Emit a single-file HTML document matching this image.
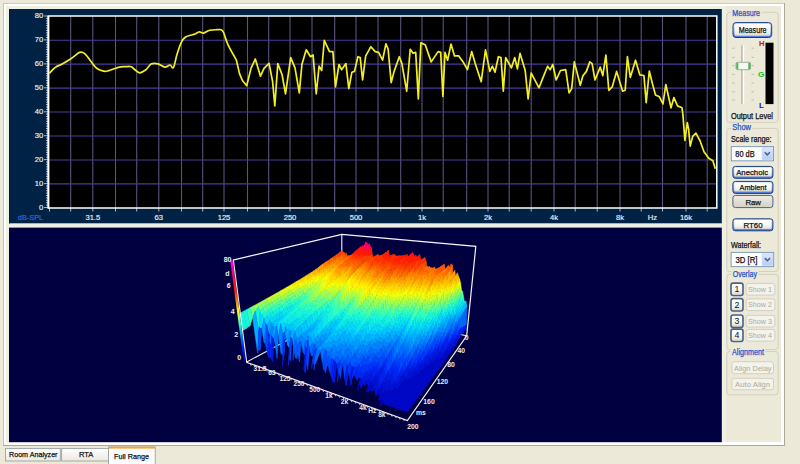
<!DOCTYPE html>
<html><head><meta charset="utf-8"><style>
html,body{margin:0;padding:0;width:800px;height:464px;overflow:hidden;background:#ece9d8}
svg{display:block;font-family:"Liberation Sans",sans-serif}
</style></head><body>
<svg width="800" height="464" viewBox="0 0 800 464">
<defs><linearGradient id="jet" gradientUnits="userSpaceOnUse" x1="400" y1="243" x2="411" y2="405">
<stop offset="0" stop-color="#ff10a0"/>
<stop offset="0.056" stop-color="#ff1030"/>
<stop offset="0.117" stop-color="#ff3000"/>
<stop offset="0.21" stop-color="#ff8000"/>
<stop offset="0.30" stop-color="#ffe000"/>
<stop offset="0.383" stop-color="#90ff60"/>
<stop offset="0.47" stop-color="#00f0e0"/>
<stop offset="0.58" stop-color="#00a0ff"/>
<stop offset="0.72" stop-color="#0040ff"/>
<stop offset="0.89" stop-color="#0000c0"/>
<stop offset="1" stop-color="#000070"/>
</linearGradient><linearGradient id="zbar" gradientUnits="userSpaceOnUse" x1="232" y1="260" x2="246" y2="362">
<stop offset="0" stop-color="#ff00ff"/>
<stop offset="0.16" stop-color="#ff0060"/>
<stop offset="0.3" stop-color="#ff2000"/>
<stop offset="0.42" stop-color="#ff9000"/>
<stop offset="0.5" stop-color="#ffff00"/>
<stop offset="0.62" stop-color="#40ffc0"/>
<stop offset="0.72" stop-color="#00a0ff"/>
<stop offset="0.85" stop-color="#0020ff"/>
<stop offset="1" stop-color="#0000a0"/>
</linearGradient><linearGradient id="btn" x1="0" y1="0" x2="0" y2="1">
<stop offset="0" stop-color="#ffffff"/><stop offset="0.7" stop-color="#f3f3ee"/><stop offset="1" stop-color="#dcd8cc"/></linearGradient>
<linearGradient id="btnb" x1="0" y1="0" x2="0" y2="1">
<stop offset="0" stop-color="#d4e6fc"/><stop offset="0.5" stop-color="#a8c4f4"/><stop offset="1" stop-color="#4a74d8"/></linearGradient>
<linearGradient id="btng" x1="0" y1="0" x2="0" y2="1">
<stop offset="0" stop-color="#eeede6"/><stop offset="1" stop-color="#d4d1c4"/></linearGradient>
<linearGradient id="dd" x1="0" y1="0" x2="0" y2="1">
<stop offset="0" stop-color="#dde7fd"/><stop offset="1" stop-color="#b6cbf7"/></linearGradient><linearGradient id="tab" x1="0" y1="0" x2="0" y2="1">
<stop offset="0" stop-color="#ffffff"/><stop offset="1" stop-color="#ece9df"/></linearGradient></defs>
<rect x="0" y="0" width="800" height="464" fill="#ece9d8"/>
<rect x="3" y="3" width="782" height="443" fill="#aca899"/>
<rect x="3" y="3" width="781" height="442" fill="#ffffff"/>
<rect x="3" y="3" width="781" height="1" fill="#cfccbc"/>
<rect x="3" y="3" width="1" height="442" fill="#c8c6b8"/>
<rect x="6" y="6" width="775" height="436" fill="#eff0e4"/>
<rect x="726" y="6" width="55" height="436" fill="#ece9d8"/>
<rect x="9" y="9" width="712.8" height="214.3" fill="#002244"/>
<rect x="9" y="9" width="1.2" height="214.3" fill="#0b1c2e"/>
<rect x="9" y="227.6" width="712.8" height="214.6" fill="#000040"/>
<rect x="49" y="16" width="667.5" height="192" fill="#000000"/>
<path d="M70.7 16V208 M92.8 16V208 M115.5 16V208 M136.7 16V208 M158.8 16V208 M181.5 16V208 M202.7 16V208 M224.0 16V208 M247.5 16V208 M268.7 16V208 M290.0 16V208 M312.0 16V208 M334.7 16V208 M356.0 16V208 M378.0 16V208 M400.7 16V208 M422.0 16V208 M443.2 16V208 M466.7 16V208 M488.0 16V208 M509.2 16V208 M531.2 16V208 M554.0 16V208 M575.2 16V208 M597.2 16V208 M620.0 16V208 M641.2 16V208 M662.5 16V208 M686.0 16V208 M707.2 16V208" stroke="#58547e" stroke-width="1.1" fill="none"/>
<path d="M49 40.2H716.5 M49 64.1H716.5 M49 88.1H716.5 M49 112.0H716.5 M49 136.0H716.5 M49 160.0H716.5 M49 183.9H716.5" stroke="#4a3c9e" stroke-width="1.1" fill="none"/>
<path d="M44 16.0H48 M46 18.4H48 M46 20.8H48 M46 23.2H48 M46 25.6H48 M46 28.0H48 M46 30.4H48 M46 32.8H48 M46 35.1H48 M46 37.5H48 M44 39.9H48 M46 42.3H48 M46 44.7H48 M46 47.1H48 M46 49.5H48 M46 51.9H48 M46 54.3H48 M46 56.7H48 M46 59.1H48 M46 61.5H48 M44 63.9H48 M46 66.3H48 M46 68.7H48 M46 71.1H48 M46 73.5H48 M46 75.8H48 M46 78.2H48 M46 80.6H48 M46 83.0H48 M46 85.4H48 M44 87.8H48 M46 90.2H48 M46 92.6H48 M46 95.0H48 M46 97.4H48 M46 99.8H48 M46 102.2H48 M46 104.6H48 M46 107.0H48 M46 109.4H48 M44 111.8H48 M46 114.1H48 M46 116.5H48 M46 118.9H48 M46 121.3H48 M46 123.7H48 M46 126.1H48 M46 128.5H48 M46 130.9H48 M46 133.3H48 M44 135.7H48 M46 138.1H48 M46 140.5H48 M46 142.9H48 M46 145.3H48 M46 147.7H48 M46 150.1H48 M46 152.4H48 M46 154.8H48 M46 157.2H48 M44 159.6H48 M46 162.0H48 M46 164.4H48 M46 166.8H48 M46 169.2H48 M46 171.6H48 M46 174.0H48 M46 176.4H48 M46 178.8H48 M46 181.2H48 M44 183.6H48 M46 186.0H48 M46 188.3H48 M46 190.7H48 M46 193.1H48 M46 195.5H48 M46 197.9H48 M46 200.3H48 M46 202.7H48 M46 205.1H48 M44 207.5H48 M49.5 208V211.5 M70.7 208V211.5 M92.8 208V211.5 M115.5 208V211.5 M136.7 208V211.5 M158.8 208V211.5 M181.5 208V211.5 M202.7 208V211.5 M224.0 208V211.5 M247.5 208V211.5 M268.7 208V211.5 M290.0 208V211.5 M312.0 208V211.5 M334.7 208V211.5 M356.0 208V211.5 M378.0 208V211.5 M400.7 208V211.5 M422.0 208V211.5 M443.2 208V211.5 M466.7 208V211.5 M488.0 208V211.5 M509.2 208V211.5 M531.2 208V211.5 M554.0 208V211.5 M575.2 208V211.5 M597.2 208V211.5 M620.0 208V211.5 M641.2 208V211.5 M662.5 208V211.5 M686.0 208V211.5 M707.2 208V211.5" stroke="#d8dce8" stroke-width="0.8" fill="none"/>
<path d="M48.4 16.1H716.8V208H48.4Z" fill="none" stroke="#ffffff" stroke-width="1.5"/><path d="M48.4 16V208.5" stroke="#ffffff" stroke-width="1.8"/>
<text x="43.2" y="209.8" text-anchor="end" font-size="7.6" fill="#f0f2f6" stroke="#f0f2f6" stroke-width="0.15" font-family="Liberation Sans, sans-serif">0</text>
<text x="43.2" y="185.9" text-anchor="end" font-size="7.6" fill="#f0f2f6" stroke="#f0f2f6" stroke-width="0.15" font-family="Liberation Sans, sans-serif">10</text>
<text x="43.2" y="161.9" text-anchor="end" font-size="7.6" fill="#f0f2f6" stroke="#f0f2f6" stroke-width="0.15" font-family="Liberation Sans, sans-serif">20</text>
<text x="43.2" y="138.0" text-anchor="end" font-size="7.6" fill="#f0f2f6" stroke="#f0f2f6" stroke-width="0.15" font-family="Liberation Sans, sans-serif">30</text>
<text x="43.2" y="114.0" text-anchor="end" font-size="7.6" fill="#f0f2f6" stroke="#f0f2f6" stroke-width="0.15" font-family="Liberation Sans, sans-serif">40</text>
<text x="43.2" y="90.1" text-anchor="end" font-size="7.6" fill="#f0f2f6" stroke="#f0f2f6" stroke-width="0.15" font-family="Liberation Sans, sans-serif">50</text>
<text x="43.2" y="66.2" text-anchor="end" font-size="7.6" fill="#f0f2f6" stroke="#f0f2f6" stroke-width="0.15" font-family="Liberation Sans, sans-serif">60</text>
<text x="43.2" y="42.2" text-anchor="end" font-size="7.6" fill="#f0f2f6" stroke="#f0f2f6" stroke-width="0.15" font-family="Liberation Sans, sans-serif">70</text>
<text x="43.2" y="18.3" text-anchor="end" font-size="7.6" fill="#f0f2f6" stroke="#f0f2f6" stroke-width="0.15" font-family="Liberation Sans, sans-serif">80</text>
<text x="92.8" y="220.4" text-anchor="middle" font-size="7.6" fill="#f0f2f6" stroke="#f0f2f6" stroke-width="0.15" font-family="Liberation Sans, sans-serif">31.5</text>
<text x="158.8" y="220.4" text-anchor="middle" font-size="7.6" fill="#f0f2f6" stroke="#f0f2f6" stroke-width="0.15" font-family="Liberation Sans, sans-serif">63</text>
<text x="224.0" y="220.4" text-anchor="middle" font-size="7.6" fill="#f0f2f6" stroke="#f0f2f6" stroke-width="0.15" font-family="Liberation Sans, sans-serif">125</text>
<text x="290.0" y="220.4" text-anchor="middle" font-size="7.6" fill="#f0f2f6" stroke="#f0f2f6" stroke-width="0.15" font-family="Liberation Sans, sans-serif">250</text>
<text x="356.0" y="220.4" text-anchor="middle" font-size="7.6" fill="#f0f2f6" stroke="#f0f2f6" stroke-width="0.15" font-family="Liberation Sans, sans-serif">500</text>
<text x="422.0" y="220.4" text-anchor="middle" font-size="7.6" fill="#f0f2f6" stroke="#f0f2f6" stroke-width="0.15" font-family="Liberation Sans, sans-serif">1k</text>
<text x="488.0" y="220.4" text-anchor="middle" font-size="7.6" fill="#f0f2f6" stroke="#f0f2f6" stroke-width="0.15" font-family="Liberation Sans, sans-serif">2k</text>
<text x="554.0" y="220.4" text-anchor="middle" font-size="7.6" fill="#f0f2f6" stroke="#f0f2f6" stroke-width="0.15" font-family="Liberation Sans, sans-serif">4k</text>
<text x="620.0" y="220.4" text-anchor="middle" font-size="7.6" fill="#f0f2f6" stroke="#f0f2f6" stroke-width="0.15" font-family="Liberation Sans, sans-serif">8k</text>
<text x="652.5" y="220.4" text-anchor="middle" font-size="7.6" fill="#f0f2f6" stroke="#f0f2f6" stroke-width="0.15" font-family="Liberation Sans, sans-serif">Hz</text>
<text x="686.0" y="220.4" text-anchor="middle" font-size="7.6" fill="#f0f2f6" stroke="#f0f2f6" stroke-width="0.15" font-family="Liberation Sans, sans-serif">16k</text>
<text x="17.8" y="220.3" font-size="7.6" fill="#2c6ce0" stroke="#2c6ce0" stroke-width="0.15" textLength="25.4" lengthAdjust="spacingAndGlyphs" font-family="Liberation Sans, sans-serif">dB-SPL</text>
<path d="M49.3 73.4C50.3 72.4 53.1 69.0 55.3 67.4C57.4 65.8 59.6 65.4 62.2 64.0C64.8 62.6 68.0 60.7 70.9 58.8C73.8 56.9 77.2 53.3 79.5 52.4C81.8 51.5 82.7 52.0 84.7 53.6C86.7 55.2 89.6 59.8 91.6 62.2C93.6 64.7 94.7 66.8 96.7 68.3C98.7 69.8 101.7 70.8 103.6 71.2C105.5 71.6 106.3 71.3 108.0 70.9C109.7 70.5 111.8 69.5 114.0 68.8C116.2 68.1 119.0 67.2 120.9 66.9C122.8 66.6 123.5 66.7 125.2 66.7C126.9 66.7 129.5 66.1 131.2 66.7C132.9 67.3 134.1 69.2 135.5 70.2C136.9 71.2 138.1 72.9 139.8 72.8C141.5 72.7 144.0 71.2 145.9 69.8C147.8 68.3 149.0 65.1 151.0 64.1C153.0 63.1 155.6 63.3 157.9 63.8C160.2 64.3 162.8 67.0 164.8 67.2C166.8 67.4 168.6 64.9 170.0 65.0C171.4 65.1 172.2 69.3 173.4 67.6C174.6 65.9 175.6 58.9 176.9 54.7C178.2 50.5 179.8 45.6 181.2 42.6C182.6 39.6 183.6 38.3 185.5 37.0C187.4 35.7 190.8 35.3 192.4 34.8C194.0 34.3 193.8 34.5 195.0 34.0C196.2 33.5 197.9 32.0 199.3 31.9C200.7 31.8 201.9 33.4 203.6 33.1C205.3 32.8 207.4 30.8 209.7 30.2C212.0 29.6 215.5 29.8 217.4 29.7C219.3 29.6 219.9 29.3 220.9 29.7C221.9 30.1 222.2 29.8 223.4 32.2C224.6 34.6 225.6 39.6 227.8 44.3C230.0 49.0 235.0 57.6 236.4 60.2L239.5 73.6L242.4 80.5L246.7 85.7L251.0 68.4L255.3 59.0L260.5 76.2L264.0 68.4L269.1 63.3L272.6 81.7L274.8 105.9L277.8 63.6L282.1 74.8L285.5 93.8L290.7 57.6L295.0 67.9L299.3 92.9L301.9 64.5L306.2 49.8L310.5 56.7L313.1 55.0L316.2 93.8L319.1 66.2L321.7 70.5L324.3 40.3L329.5 51.6L332.9 51.6L335.5 86.9L339.0 64.5L341.6 69.7L345.9 63.6L348.8 88.6L351.9 72.2L354.5 71.4L357.9 56.7L360.2 57.6L362.6 80.0L365.7 55.9L370.9 46.7L375.2 51.6L378.6 52.4L382.6 60.2L385.9 43.8L388.1 49.0L391.2 82.6L394.1 71.4L399.3 56.7L401.9 63.6L406.7 91.2L410.2 49.3L413.1 53.3L415.7 52.4L418.3 99.0L420.9 42.9L425.2 44.7L431.2 61.9L438.1 51.6L440.7 52.4L442.9 96.4L445.0 52.4L447.6 60.2L451.0 44.1L454.5 55.9L458.8 55.9L463.1 61.9L467.4 69.7L471.7 51.6L475.2 63.6L481.2 81.7L485.5 49.8L489.8 71.4L492.4 66.2L495.0 72.2L498.4 56.7L501.0 57.6L503.3 91.2L505.7 57.6L511.4 67.9L514.8 57.6L517.4 68.8L520.0 53.3L525.2 70.5L528.1 99.0L531.2 73.1L539.0 87.8L542.4 79.1L547.6 66.2L550.2 69.7L552.8 64.5L556.2 80.0L560.5 70.5L565.7 69.7L569.1 92.9L571.7 88.6L574.3 61.9L580.3 85.2L582.9 75.7L586.4 71.4L589.8 61.9L592.1 63.6L595.0 80.0L600.2 67.1L602.8 75.7L605.9 55.0L608.8 90.3L612.2 86.9L616.6 71.4L622.6 91.2L625.2 90.3L627.4 56.7L630.3 77.4L635.5 60.2L639.8 74.8L643.9 75.5L646.2 102.6L649.3 71.0L652.3 83.3L655.5 94.9L659.4 96.8L663.0 103.9L665.8 84.5L671.0 107.8L673.9 97.5L677.5 105.9L682.0 107.8L682.9 114.6L684.9 140.5L687.3 122.7L688.6 129.1L690.2 146.1L692.7 136.4L695.9 133.2L699.9 140.5L704.0 151.8L708.8 158.3L712.9 160.7L715.3 168.8" fill="none" stroke="#f4f020" stroke-width="1.7" stroke-linejoin="round"/>
<path d="M341.8 234.3V311L466.7 335.8M341.8 311L246.3 362.2" stroke="#f4f4f4" stroke-width="1.1" fill="none"/>
<path d="M341.3 252.3l1-1.9l-1.9 1.5l-.9 1.8zM342.3 250.4l1 1.7l-1.8 1.8l-1.1-2zM355.5 253.3l1-.4l-1.8.7l-1 .7zM356.5 252.9l1 0l-1.7.4l-1.1.3zM357.5 252.9l1.1 1.6l-1.7.3l-1.1-1.5zM378.1 254.6l1 1.3l-1.6.8l-1.1-1.2zM382.5 256.8l1.2-2.5l-1.6.8l-1.2 2.5zM386 251.9l1 8.6l-1.6 1.1l-1-7.9zM387 260.5l1.4-10.3l-1.6 1.9l-1.4 9.5zM389.4 254.9l1.1 4l-1.6.7l-1.1-3.4zM392.8 257.5l1.3-3.1l-1.5.5l-1.3 3.3zM395.3 254.8l1 3.9l-1.5.2l-1.1-3.3zM396.3 258.7l1.3-2.8l-1.5.6l-1.3 2.4zM397.6 255.9l1.2.9l-1.5.6l-1.2-.9zM402.2 261.7l1.4-6.3l-1.4.6l-1.5 5.9zM403.6 255.4l1.1 4.7l-1.5.5l-1-4.6zM408.4 257.3l1.1 3.2l-1.4.5l-1.1-3.3zM409.5 260.5l1.4-3.4l-1.4 1.4l-1.4 2.5zM424.9 257.4l1.1 3l-1.4 1.2l-1.1-3.2z" fill="#ff3000" stroke="#ff3000" stroke-width="0.5"/>
<path d="M343.3 252.1l1 .3l-1.8 1.9l-1-.4zM353.4 253.6l1 2.6l-1.7.9l-1.1-2.2zM354.4 256.2l1.1-2.9l-1.8 1l-1 2.8zM358.6 254.5l1-1.2l-1.7.9l-1 .6zM372.5 255l1 5.4l-1.6.1l-1.1-5.4zM375.8 257.8l1.1.1l-1.7.6l-1.1 0zM376.9 257.9l1.2-3.3l-1.7.9l-1.2 3zM379.1 255.9l1.2.5l-1.7.9l-1.1-.6zM380.3 256.4l1 2.3l-1.6.3l-1.1-1.7zM381.3 258.7l1.2-1.9l-1.6.8l-1.2 1.4zM401.2 256l1 5.7l-1.5.2l-1-4.6zM404.7 260.1l1.3-1.7l-1.5.4l-1.3 1.8zM417 260.2l1.3.7l-1.4.5l-1.3-.4zM420.9 259.4l.9 6.5l-1.4.2l-.9-6.2zM421.8 265.9l1.6-6.4l-1.3 1.3l-1.7 5.3zM426 260.4l.9 5.4l-1.3.8l-1-5zM449.6 267.2l1.7-3.3l-1.3 2.5l-1.7 2.6zM451.3 263.9l1.3 1l-1.3 2.9l-1.3-1.4z" fill="#ff4400" stroke="#ff4400" stroke-width="0.5"/>
<path d="M344.3 252.4l1 3.3l-1.8 1.5l-1-2.9zM345.3 255.7l1-2.7l-1.8 1.6l-1 2.6zM346.3 253l1 3.3l-1.7 1.6l-1.1-3.3zM347.3 256.3l1-.8l-1.7 1.8l-1 .6zM348.3 255.5l1 .2l-1.7 1.8l-1-.2zM349.3 255.7l1.1.6l-1.8 1.5l-1-.3zM350.4 256.3l1-1.4l-1.8 1.8l-1 1.1zM352.4 258.1l1-4.5l-1.8 1.3l-.9 4.7zM374.6 259.9l1.2-2.1l-1.7.7l-1.1 2.4zM391.4 266.2l1.4-8.7l-1.5.7l-1.4 7.9zM442.6 269l1.7-4.9l-1.2.9l-1.7 4.6zM444.3 264.1l1 4.9l-1.2 1.1l-1-5.1zM448.4 265.4l1.2 1.8l-1.3 1.8l-1.2-1.6z" fill="#ff5800" stroke="#ff5800" stroke-width="0.5"/>
<path d="M351.4 254.9l1 3.2l-1.7 1.5l-1.1-2.9zM373.5 260.4l1.1-.5l-1.6 1l-1.1-.4zM390.5 258.9l.9 7.3l-1.5-.1l-1-6.5zM426.9 265.8l1.2 1.4l-1.3.4l-1.2-1zM428.1 267.2l1.4-.6l-1.3.9l-1.4.1zM429.5 266.6l1.2 1.6l-1.3.5l-1.2-1.2zM430.7 268.2l1.3-.4l-1.3.7l-1.3.2zM432 267.8l1.1 2.4l-1.2.2l-1.2-1.9zM433.1 270.2l1.6-3l-1.3.6l-1.5 2.6zM434.7 267.2l1.1 2.9l-1.3.8l-1.1-3.1zM441.3 268.4l1.3.6l-1.2.6l-1.3-.4zM446.4 272.4l2-7l-1.3 2l-1.9 6.3zM452.6 264.9l.5 10.4l-1.3 2.3l-.5-9.8z" fill="#ff6f00" stroke="#ff6f00" stroke-width="0.5"/>
<path d="M359.6 253.3l1.1-6.6l-1.7 1.7l-1.1 5.8zM371.5 247.8l1 7.2l-1.7.1l-1-4.9zM383.7 254.3l1.1-.4l-1.6 1.5l-1.1-.3zM384.8 253.9l1.2-2l-1.6 1.8l-1.2 1.7zM388.4 250.2l1 4.7l-1.6 1.3l-1-4.1zM394.1 254.4l1.2.4l-1.6.8l-1.1-.7zM398.8 256.8l1.2-1.5l-1.5 1l-1.2 1.1zM400 255.3l1.2.7l-1.5 1.3l-1.2-1zM406 258.4l1.3-4l-1.4.6l-1.4 3.8zM407.3 254.4l1.1 2.9l-1.4.4l-1.1-2.7zM413.6 253.9l1 4l-1.4.9l-1.1-3.4zM414.6 257.9l1.4-2.7l-1.4.9l-1.4 2.7zM416 255.2l1 5l-1.4.8l-1-4.9zM418.3 260.9l1.6-6.3l-1.4 1.1l-1.6 5.7zM419.9 254.6l1 4.8l-1.4.5l-1-4.2zM423.4 259.5l1.5-2.1l-1.4 1l-1.4 2.4z" fill="#ff1e06" stroke="#ff1e06" stroke-width="0.5"/>
<path d="M360.7 246.7l1.1 5.1l-1.8 1.3l-1-4.7zM361.8 251.8l1-6.4l-1.7 2.1l-1.1 5.6zM363.9 247.1l1.1 1.2l-1.8 2.8l-1-1.8zM410.9 257.1l1.5-4.7l-1.5 1.7l-1.4 4.4zM412.4 252.4l1.2 1.5l-1.5 1.5l-1.2-1.3z" fill="#ff1424" stroke="#ff1424" stroke-width="0.5"/>
<path d="M362.8 245.4l1.1 1.7l-1.7 2.2l-1.1-1.8zM365 248.3l1.1-6.2l-1.8 3.8l-1.1 5.2zM370.4 246.3l1.1 1.5l-1.7 2.4l-1.1-.9z" fill="#ff0a42" stroke="#ff0a42" stroke-width="0.5"/>
<path d="M366.1 242.1l1.1 1.2l-1.8 3.9l-1.1-1.3z" fill="#ff0088" stroke="#ff0088" stroke-width="0.5"/>
<path d="M367.2 243.3l1 2.3l-1.7 4.1l-1.1-2.5zM368.2 245.6l1.1-1.8l-1.7 3.4l-1.1 2.5zM369.3 243.8l1.1 2.5l-1.7 3l-1.1-2.1z" fill="#ff0060" stroke="#ff0060" stroke-width="0.5"/>
<path d="M435.8 270.1l1.4-1.2l-1.2.6l-1.5 1.4zM437.2 268.9l1.2 2l-1.2.9l-1.2-2.3zM439.5 273.7l1.8-5.3l-1.2.8l-1.8 5.2zM445.3 269l1.1 3.4l-1.2 1.3l-1.1-3.6zM453.1 275.3l1.8-4.8l-1.2 2.1l-1.9 5z" fill="#ff8800" stroke="#ff8800" stroke-width="0.5"/>
<path d="M438.4 270.9l1.1 2.8l-1.2.7l-1.1-2.6zM454.9 270.5l.7 7.2l-1.1 1.4l-.8-6.5zM455.6 277.7l1.9-4.8l-1.3 2.5l-1.7 3.7zM457.5 272.9l1.1 3.4l-1.2 2.3l-1.2-3.2z" fill="#ffa100" stroke="#ffa100" stroke-width="0.5"/>
<path d="M458.6 276.3l1.1 3l-1.2 2.7l-1.1-3.4z" fill="#ffba00" stroke="#ffba00" stroke-width="0.5"/>
<path d="M459.7 279.3l1 4.3l-1.2 2.6l-1-4.2z" fill="#ffeb00" stroke="#ffeb00" stroke-width="0.5"/>
<path d="M460.7 283.6l.8 6.4l-1.2 2.4l-.8-6.2z" fill="#d0ff28" stroke="#d0ff28" stroke-width="0.5"/>
<path d="M461.5 290l1.2 1.7l-1.2 2.8l-1.2-2.1z" fill="#80ff70" stroke="#80ff70" stroke-width="0.5"/>
<path d="M462.7 291.7l.9 5.6l-1.2 2.4l-.9-5.2z" fill="#58ff98" stroke="#58ff98" stroke-width="0.5"/>
<path d="M463.6 297.3l.9 4.3l-1 1.6l-1.1-3.5z" fill="#1af6d9" stroke="#1af6d9" stroke-width="0.5"/>
<path d="M464.5 301.6l1.5-.3l-1.1 2l-1.4-.1z" fill="#10e8e8" stroke="#10e8e8" stroke-width="0.5"/>
<path d="M466 301.3l.9 5.3l-1.1 1.6l-.9-4.9z" fill="#06d9f6" stroke="#06d9f6" stroke-width="0.5"/>
<path d="M466.9 306.6l-.6 18.2l-.9.6l.4-17.2z" fill="#0070fe" stroke="#0070fe" stroke-width="0.5"/>
<path d="M466.3 324.8l1 3.6l-.9 1l-1-4z" fill="#001be4" stroke="#001be4" stroke-width="0.5"/>
<path d="M339.5 253.7l.9-1.8l-1.8 1.5l-1 1.7zM340.4 251.9l1.1 2l-1.8 1.7l-1.1-2.2zM341.5 253.9l1 .4l-1.8 1.7l-1-.4zM353.7 254.3l1-.7l-1.7 1.4l-1.1 1.5zM370.8 255.1l1.1 5.4l-1.7.1l-1-5.4zM374.1 258.5l1.1 0l-1.6.6l-1.1 0zM375.2 258.5l1.2-3l-1.7.9l-1.1 2.7zM377.5 256.7l1.1.6l-1.6.9l-1.1-.7zM378.6 257.3l1.1 1.7l-1.6.3l-1.1-1.1zM379.7 259l1.2-1.4l-1.6.8l-1.2.9zM384.4 253.7l1 7.9l-1.6.8l-1-7.2zM387.8 256.2l1.1 3.4l-1.6.7l-1.1-3zM399.7 257.3l1 4.6l-1.5.2l-1.1-3.6zM415.6 261l1.3.4l-1.4.5l-1.3-.2zM419.5 259.9l.9 6.2l-1.3.1l-1-5.8zM420.4 266.1l1.7-5.3l-1.5 1.2l-1.5 4.2zM424.6 261.6l1 5l-1.4.8l-1-4.6z" fill="#ff4400" stroke="#ff4400" stroke-width="0.5"/>
<path d="M342.5 254.3l1 2.9l-1.8 1.5l-1-2.7zM343.5 257.2l1-2.6l-1.8 1.7l-1 2.4zM344.5 254.6l1.1 3.3l-1.8 1.6l-1.1-3.2zM351.6 254.9l1.1 2.2l-1.8 1.8l-1-2.2zM352.7 257.1l1-2.8l-1.8 2.2l-1 2.4zM373 260.9l1.1-2.4l-1.6.6l-1.2 2.8zM389.9 266.1l1.4-7.9l-1.6.6l-1.4 7.1zM441.4 269.6l1.7-4.6l-1.2.9l-1.7 4.3zM443.1 265l1 5.1l-1.2 1l-1-5.2zM447.1 267.4l1.2 1.6l-1.2 1.7l-1.3-1.5zM448.3 269l1.7-2.6l-1.3 2.3l-1.6 2zM450 266.4l1.3 1.4l-1.3 2.4l-1.3-1.5z" fill="#ff5800" stroke="#ff5800" stroke-width="0.5"/>
<path d="M345.6 257.9l1-.6l-1.8 1.8l-1 .4zM346.6 257.3l1 .2l-1.8 1.8l-1-.2zM347.6 257.5l1 .3l-1.8 1.6l-1-.1zM348.6 257.8l1-1.1l-1.8 1.7l-1 1zM349.6 256.7l1.1 2.9l-1.8 1.6l-1.1-2.8zM350.7 259.6l.9-4.7l-1.7 1.8l-1 4.5zM371.9 260.5l1.1.4l-1.7 1l-1.1-1.3zM388.9 259.6l1 6.5l-1.6-.2l-1-5.6zM425.6 266.6l1.2 1l-1.3.3l-1.3-.5zM426.8 267.6l1.4-.1l-1.4.9l-1.3-.5zM428.2 267.5l1.2 1.2l-1.3.5l-1.3-.8zM429.4 268.7l1.3-.2l-1.3.8l-1.3-.1zM430.7 268.5l1.2 1.9l-1.2.1l-1.3-1.2zM431.9 270.4l1.5-2.6l-1.2.6l-1.5 2.1zM433.4 267.8l1.1 3.1l-1.2.7l-1.1-3.2zM440.1 269.2l1.3.4l-1.2.6l-1.4-.2zM445.2 273.7l1.9-6.3l-1.3 1.8l-1.8 5.7z" fill="#ff6f00" stroke="#ff6f00" stroke-width="0.5"/>
<path d="M354.7 253.6l1.1-.3l-1.8.5l-1 1.2zM355.8 253.3l1.1 1.5l-1.8.2l-1.1-1.2zM356.9 254.8l1-.6l-1.8.7l-1 .1zM376.4 255.5l1.1 1.2l-1.6.8l-1.2-1.1zM380.9 257.6l1.2-2.5l-1.7.6l-1.1 2.7zM382.1 255.1l1.1.3l-1.6 1.3l-1.2-1zM385.4 261.6l1.4-9.5l-1.7 1.6l-1.3 8.7zM391.3 258.2l1.3-3.3l-1.6.6l-1.3 3.3zM393.7 255.6l1.1 3.3l-1.5.2l-1.1-2.8zM394.8 258.9l1.3-2.4l-1.5.5l-1.3 2.1zM396.1 256.5l1.2.9l-1.6.7l-1.1-1.1zM397.3 257.4l1.2-1.1l-1.5 1l-1.3.8zM400.7 261.9l1.5-5.9l-1.5.5l-1.5 5.6zM402.2 256l1 4.6l-1.5.5l-1-4.6zM403.2 260.6l1.3-1.8l-1.5.5l-1.3 1.8zM407 257.7l1.1 3.3l-1.5.4l-1.1-3.3zM408.1 261l1.4-2.5l-1.5 1.3l-1.4 1.6zM422.1 260.8l1.4-2.4l-1.4 1.1l-1.5 2.5zM423.5 258.4l1.1 3.2l-1.4 1.2l-1.1-3.3z" fill="#ff3000" stroke="#ff3000" stroke-width="0.5"/>
<path d="M357.9 254.2l1.1-5.8l-1.8 1.4l-1.1 5.1zM359 248.4l1 4.7l-1.7 1.1l-1.1-4.4zM360 253.1l1.1-5.6l-1.8 1.7l-1 5zM369.8 250.2l1 4.9l-1.6.1l-1.1-3.1zM383.2 255.4l1.2-1.7l-1.6 1.5l-1.2 1.5zM386.8 252.1l1 4.1l-1.6 1.1l-1.1-3.6zM392.6 254.9l1.1.7l-1.5.7l-1.2-.8zM398.5 256.3l1.2 1l-1.6 1.2l-1.1-1.2zM404.5 258.8l1.4-3.8l-1.5.6l-1.4 3.7zM405.9 255l1.1 2.7l-1.5.4l-1.1-2.5zM409.5 258.5l1.4-4.4l-1.5 1.6l-1.4 4.1zM412.1 255.4l1.1 3.4l-1.4.8l-1.2-2.9zM413.2 258.8l1.4-2.7l-1.4.9l-1.4 2.6zM414.6 256.1l1 4.9l-1.4.7l-1-4.7zM416.9 261.4l1.6-5.7l-1.5 1.1l-1.5 5.1zM418.5 255.7l1 4.2l-1.4.5l-1.1-3.6z" fill="#ff1e06" stroke="#ff1e06" stroke-width="0.5"/>
<path d="M361.1 247.5l1.1 1.8l-1.8 1.8l-1.1-1.9zM362.2 249.3l1 1.8l-1.7 2.3l-1.1-2.3zM363.2 251.1l1.1-5.2l-1.7 3l-1.1 4.5zM365.4 247.2l1.1 2.5l-1.7 3.1l-1.1-2.7zM366.5 249.7l1.1-2.5l-1.7 2.6l-1.1 3zM368.7 249.3l1.1.9l-1.7 1.9l-1.1-.4zM410.9 254.1l1.2 1.3l-1.5 1.3l-1.2-1z" fill="#ff1424" stroke="#ff1424" stroke-width="0.5"/>
<path d="M364.3 245.9l1.1 1.3l-1.7 2.9l-1.1-1.2zM367.6 247.2l1.1 2.1l-1.7 2.4l-1.1-1.9z" fill="#ff0a42" stroke="#ff0a42" stroke-width="0.5"/>
<path d="M434.5 270.9l1.5-1.4l-1.3.7l-1.4 1.4zM436 269.5l1.2 2.3l-1.3.8l-1.2-2.4zM438.3 274.4l1.8-5.2l-1.3.8l-1.7 5.1zM444.1 270.1l1.1 3.6l-1.2 1.2l-1.1-3.8zM451.3 267.8l.5 9.8l-1.2 1.9l-.6-9.3z" fill="#ff8800" stroke="#ff8800" stroke-width="0.5"/>
<path d="M437.2 271.8l1.1 2.6l-1.2.7l-1.2-2.5zM451.8 277.6l1.9-5l-1.3 1.7l-1.8 5.2zM453.7 272.6l.8 6.5l-1.2 1.1l-.9-5.9z" fill="#ffa100" stroke="#ffa100" stroke-width="0.5"/>
<path d="M454.5 279.1l1.7-3.7l-1.2 2.3l-1.7 2.5zM456.2 275.4l1.2 3.2l-1.2 2l-1.2-2.9z" fill="#ffba00" stroke="#ffba00" stroke-width="0.5"/>
<path d="M457.4 278.6l1.1 3.4l-1.3 2.4l-1-3.8z" fill="#ffd300" stroke="#ffd300" stroke-width="0.5"/>
<path d="M458.5 282l1 4.2l-1.2 2.3l-1.1-4.1z" fill="#f7ff07" stroke="#f7ff07" stroke-width="0.5"/>
<path d="M459.5 286.2l.8 6.2l-1.2 1.9l-.8-5.8z" fill="#a8ff49" stroke="#a8ff49" stroke-width="0.5"/>
<path d="M460.3 292.4l1.2 2.1l-1.2 2.4l-1.2-2.6z" fill="#58ff98" stroke="#58ff98" stroke-width="0.5"/>
<path d="M461.5 294.5l.9 5.2l-1.1 2.1l-1-4.9z" fill="#30ffc0" stroke="#30ffc0" stroke-width="0.5"/>
<path d="M462.4 299.7l1.1 3.5l-1.1 1.5l-1.1-2.9z" fill="#10e8e8" stroke="#10e8e8" stroke-width="0.5"/>
<path d="M463.5 303.2l1.4.1l-1.1 2l-1.4-.6z" fill="#06d9f6" stroke="#06d9f6" stroke-width="0.5"/>
<path d="M464.9 303.3l.9 4.9l-1.1 1.7l-.9-4.6z" fill="#00c7ff" stroke="#00c7ff" stroke-width="0.5"/>
<path d="M465.8 308.2l-.4 17.2l-.9.6l.2-16.1z" fill="#0070fe" stroke="#0070fe" stroke-width="0.5"/>
<path d="M465.4 325.4l1 4l-1 1l-.9-4.4z" fill="#001be4" stroke="#001be4" stroke-width="0.5"/>
<path d="M337.6 255.1l1-1.7l-1.9 1.4l-.9 1.6zM338.6 253.4l1.1 2.2l-1.9 1.6l-1.1-2.4zM351.9 256.5l1.1-1.5l-1.8 2l-1.1 1.8zM353 255l1-1.2l-1.8 1.6l-1 1.6zM355.1 255l1-.1l-1.8 1.1l-1 .2zM369.2 255.2l1 5.4l-1.7.2l-1.1-5.4zM372.5 259.1l1.1 0l-1.7.6l-1.1.1zM373.6 259.1l1.1-2.7l-1.7.9l-1.1 2.4zM375.9 257.5l1.1.7l-1.7.9l-1.1-.7zM377 258.2l1.1 1.1l-1.7.3l-1.1-.5zM378.1 259.3l1.2-.9l-1.7.7l-1.2.5zM382.8 255.2l1 7.2l-1.7.6l-1-6.5zM386.2 257.3l1.1 3l-1.6.8l-1.1-3zM398.1 258.5l1.1 3.6l-1.5.2l-1.1-2.6zM418.1 260.4l1 5.8l-1.4.2l-1-5.6zM419.1 266.2l1.5-4.2l-1.4 1.4l-1.5 3z" fill="#ff4400" stroke="#ff4400" stroke-width="0.5"/>
<path d="M339.7 255.6l1 .4l-1.9 1.6l-1-.4zM349.9 256.7l1 2.2l-1.8 1.8l-1-2.2zM350.9 258.9l1-2.4l-1.8 2.3l-1 1.9zM371.3 261.9l1.2-2.8l-1.7.7l-1.2 3.1zM387.3 260.3l1 5.6l-1.5-.2l-1.1-4.6zM388.3 265.9l1.4-7.1l-1.6.7l-1.3 6.2zM423.2 262.8l1 4.6l-1.3.8l-1.1-4.2zM424.2 267.4l1.3.5l-1.3.2l-1.3.1zM440.2 270.2l1.7-4.3l-1.2.8l-1.8 4.2zM441.9 265.9l1 5.2l-1.3.9l-.9-5.3zM447.1 270.7l1.6-2l-1.3 2l-1.6 1.4zM448.7 268.7l1.3 1.5l-1.3 2.2l-1.3-1.7z" fill="#ff5800" stroke="#ff5800" stroke-width="0.5"/>
<path d="M340.7 256l1 2.7l-1.8 1.4l-1.1-2.5zM341.7 258.7l1-2.4l-1.8 1.6l-1 2.2zM342.7 256.3l1.1 3.2l-1.9 1.6l-1-3.2zM344.8 259.1l1 .2l-1.8 1.8l-1.1-.2zM345.8 259.3l1 .1l-1.8 1.5l-1 .2zM346.8 259.4l1-1l-1.8 1.8l-1 .7zM348.9 261.2l1-4.5l-1.8 1.8l-1 4.3zM370.2 260.6l1.1 1.3l-1.7 1l-1.1-2.1zM425.5 267.9l1.3.5l-1.3.8l-1.3-1.1zM426.8 268.4l1.3.8l-1.3.5l-1.3-.5zM428.1 269.2l1.3.1l-1.3.7l-1.3-.3zM429.4 269.3l1.3 1.2l-1.3.1l-1.3-.6zM430.7 270.5l1.5-2.1l-1.4.7l-1.4 1.5zM432.2 268.4l1.1 3.2l-1.3.7l-1.2-3.2zM433.3 271.6l1.4-1.4l-1.3.7l-1.4 1.4zM438.8 270l1.4.2l-1.3.7l-1.3-.1zM445.8 269.2l1.3 1.5l-1.3 1.4l-1.3-1.3z" fill="#ff6f00" stroke="#ff6f00" stroke-width="0.5"/>
<path d="M343.8 259.5l1-.4l-1.9 1.8l-1 .2zM347.8 258.4l1.1 2.8l-1.8 1.6l-1.1-2.6zM434.7 270.2l1.2 2.4l-1.3.9l-1.2-2.6zM437.1 275.1l1.7-5.1l-1.2.8l-1.8 4.9zM442.9 271.1l1.1 3.8l-1.3 1.1l-1.1-4zM444 274.9l1.8-5.7l-1.3 1.6l-1.8 5.2z" fill="#ff8800" stroke="#ff8800" stroke-width="0.5"/>
<path d="M354 253.8l1.1 1.2l-1.8 1.2l-1.1-.8zM374.7 256.4l1.2 1.1l-1.7.9l-1.2-1.1zM379.3 258.4l1.1-2.7l-1.6.6l-1.2 2.8zM380.4 255.7l1.2 1l-1.7 1.1l-1.1-1.5zM381.6 256.7l1.2-1.5l-1.7 1.3l-1.2 1.3zM383.8 262.4l1.3-8.7l-1.6 1.4l-1.4 7.9zM389.7 258.8l1.3-3.3l-1.6.6l-1.3 3.4zM392.2 256.3l1.1 2.8l-1.6.3l-1.1-2.3zM393.3 259.1l1.3-2.1l-1.6.5l-1.3 1.9zM394.6 257l1.1 1.1l-1.5.7l-1.2-1.3zM395.7 258.1l1.3-.8l-1.6.9l-1.2.6zM397 257.3l1.1 1.2l-1.5 1.2l-1.2-1.5zM399.2 262.1l1.5-5.6l-1.6.5l-1.4 5.3zM400.7 256.5l1 4.6l-1.5.4l-1.1-4.5zM401.7 261.1l1.3-1.8l-1.5.4l-1.3 1.8zM405.5 258.1l1.1 3.3l-1.4.4l-1.2-3.3zM406.6 261.4l1.4-1.6l-1.5 1.2l-1.3.8zM414.2 261.7l1.3.2l-1.5.5l-1.2.1zM420.6 262l1.5-2.5l-1.4 1l-1.5 2.9zM422.1 259.5l1.1 3.3l-1.4 1.2l-1.1-3.5z" fill="#ff3000" stroke="#ff3000" stroke-width="0.5"/>
<path d="M356.1 254.9l1.1-5.1l-1.8 1.3l-1.1 4.9zM357.2 249.8l1.1 4.4l-1.8.7l-1.1-3.8zM358.3 254.2l1-5l-1.8 1.5l-1 4.2zM360.4 251.1l1.1 2.3l-1.8 1.8l-1.1-2.8zM361.5 253.4l1.1-4.5l-1.8 2.4l-1.1 3.9zM363.7 250.1l1.1 2.7l-1.8 2.4l-1.1-2.9zM364.8 252.8l1.1-3l-1.8 1.9l-1.1 3.5zM367 251.7l1.1.4l-1.8 1.7l-1.1-.3zM368.1 252.1l1.1 3.1l-1.8.2l-1.1-1.6zM385.1 253.7l1.1 3.6l-1.6.8l-1.1-3zM391 255.5l1.2.8l-1.6.8l-1.2-1zM403 259.3l1.4-3.7l-1.5.6l-1.4 3.5zM404.4 255.6l1.1 2.5l-1.5.4l-1.1-2.3zM408 259.8l1.4-4.1l-1.5 1.6l-1.4 3.7zM410.6 256.7l1.2 2.9l-1.5.6l-1.2-2.3zM411.8 259.6l1.4-2.6l-1.5.7l-1.4 2.5zM413.2 257l1 4.7l-1.4.8l-1.1-4.8zM415.5 261.9l1.5-5.1l-1.4 1.1l-1.6 4.5zM417 256.8l1.1 3.6l-1.4.4l-1.1-2.9z" fill="#ff1e06" stroke="#ff1e06" stroke-width="0.5"/>
<path d="M359.3 249.2l1.1 1.9l-1.8 1.3l-1.1-1.7zM362.6 248.9l1.1 1.2l-1.8 2.2l-1.1-1zM365.9 249.8l1.1 1.9l-1.8 1.8l-1.1-1.8zM409.4 255.7l1.2 1l-1.5 1.2l-1.2-.6z" fill="#ff1424" stroke="#ff1424" stroke-width="0.5"/>
<path d="M435.9 272.6l1.2 2.5l-1.3.6l-1.2-2.2zM450 270.2l.6 9.3l-1.3 1.7l-.6-8.8zM450.6 279.5l1.8-5.2l-1.2 1.6l-1.9 5.3zM452.4 274.3l.9 5.9l-1.1 1l-1-5.3z" fill="#ffa100" stroke="#ffa100" stroke-width="0.5"/>
<path d="M453.3 280.2l1.7-2.5l-1.3 2.1l-1.5 1.4zM455 277.7l1.2 2.9l-1.3 1.8l-1.2-2.6z" fill="#ffba00" stroke="#ffba00" stroke-width="0.5"/>
<path d="M456.2 280.6l1 3.8l-1.2 2.1l-1.1-4.1z" fill="#ffd300" stroke="#ffd300" stroke-width="0.5"/>
<path d="M457.2 284.4l1.1 4.1l-1.2 2l-1.1-4z" fill="#f7ff07" stroke="#f7ff07" stroke-width="0.5"/>
<path d="M458.3 288.5l.8 5.8l-1.1 1.6l-.9-5.4z" fill="#a8ff49" stroke="#a8ff49" stroke-width="0.5"/>
<path d="M459.1 294.3l1.2 2.6l-1.1 2l-1.2-3z" fill="#58ff98" stroke="#58ff98" stroke-width="0.5"/>
<path d="M460.3 296.9l1 4.9l-1.2 1.9l-.9-4.8z" fill="#1af6d9" stroke="#1af6d9" stroke-width="0.5"/>
<path d="M461.3 301.8l1.1 2.9l-1.1 1.4l-1.2-2.4z" fill="#10e8e8" stroke="#10e8e8" stroke-width="0.5"/>
<path d="M462.4 304.7l1.4.6l-1.2 2.1l-1.3-1.3z" fill="#06d9f6" stroke="#06d9f6" stroke-width="0.5"/>
<path d="M463.8 305.3l.9 4.6l-1 1.7l-1.1-4.2z" fill="#00c7ff" stroke="#00c7ff" stroke-width="0.5"/>
<path d="M464.7 309.9l-.2 16.1l-1 .6l.2-15z" fill="#0070fe" stroke="#0070fe" stroke-width="0.5"/>
<path d="M464.5 326l.9 4.4l-.9.9l-1-4.7z" fill="#001be4" stroke="#001be4" stroke-width="0.5"/>
<path d="M335.8 256.4l.9-1.6l-1.8 1.4l-1 1.5zM336.7 254.8l1.1 2.4l-1.9 1.6l-1-2.6zM350.1 258.8l1.1-1.8l-1.8 2l-1.1 2.1zM369.6 262.9l1.2-3.1l-1.8.7l-1.1 3.4zM385.7 261.1l1.1 4.6l-1.6-.2l-1.1-3.7zM386.8 265.7l1.3-6.2l-1.6.7l-1.3 5.3zM421.8 264l1.1 4.2l-1.4.8l-1.1-3.8zM422.9 268.2l1.3-.1l-1.4.3l-1.3.6zM438.9 270.9l1.8-4.2l-1.3.8l-1.7 4.1zM440.7 266.7l.9 5.3l-1.2.8l-1-5.3z" fill="#ff5800" stroke="#ff5800" stroke-width="0.5"/>
<path d="M337.8 257.2l1 .4l-1.9 1.6l-1-.4zM338.8 257.6l1.1 2.5l-1.9 1.3l-1.1-2.2zM339.9 260.1l1-2.2l-1.9 1.7l-1 1.8zM340.9 257.9l1 3.2l-1.8 1.7l-1.1-3.2zM348.1 258.5l1 2.2l-1.8 1.8l-1.1-2.1zM349.1 260.7l1-1.9l-1.8 2.3l-1 1.4zM368.5 260.8l1.1 2.1l-1.7 1l-1.1-3zM424.2 268.1l1.3 1.1l-1.4.9l-1.3-1.7zM425.5 269.2l1.3.5l-1.4.4l-1.3 0zM426.8 269.7l1.3.3l-1.4.8l-1.3-.7zM428.1 270l1.3.6l-1.3.2l-1.4 0zM429.4 270.6l1.4-1.5l-1.3.6l-1.4 1.1zM430.8 269.1l1.2 3.2l-1.3.8l-1.2-3.4zM432 272.3l1.4-1.4l-1.3.7l-1.4 1.5zM437.6 270.8l1.3.1l-1.2.7l-1.4 0zM444.5 270.8l1.3 1.3l-1.2 1.4l-1.4-1.1zM445.8 272.1l1.6-1.4l-1.3 1.9l-1.5.9zM447.4 270.7l1.3 1.7l-1.3 2.1l-1.3-1.9z" fill="#ff6f00" stroke="#ff6f00" stroke-width="0.5"/>
<path d="M341.9 261.1l1-.2l-1.8 1.8l-1 .1zM342.9 260.9l1.1.2l-1.9 1.9l-1-.3zM344 261.1l1-.2l-1.9 1.6l-1 .5zM345 260.9l1-.7l-1.8 1.8l-1.1.5zM346 260.2l1.1 2.6l-1.9 1.5l-1-2.3zM347.1 262.8l1-4.3l-1.9 1.9l-1 3.9zM433.4 270.9l1.2 2.6l-1.3.9l-1.2-2.8zM435.8 275.7l1.8-4.9l-1.3.8l-1.8 4.8zM441.6 272l1.1 4l-1.2 1l-1.1-4.2zM442.7 276l1.8-5.2l-1.3 1.6l-1.7 4.6z" fill="#ff8800" stroke="#ff8800" stroke-width="0.5"/>
<path d="M351.2 257l1-1.6l-1.8 1.5l-1 2.1zM352.2 255.4l1.1.8l-1.8 1.3l-1.1-.6zM353.3 256.2l1-.2l-1.8 1.8l-1-.3zM367.4 255.4l1.1 5.4l-1.7.1l-1.1-5.4zM370.8 259.8l1.1-.1l-1.7.7l-1.2.1zM371.9 259.7l1.1-2.4l-1.7.9l-1.1 2.2zM373 257.3l1.2 1.1l-1.8.9l-1.1-1.1zM374.2 258.4l1.1.7l-1.7.9l-1.2-.7zM375.3 259.1l1.1.5l-1.7.3l-1.1.1zM376.4 259.6l1.2-.5l-1.7.6l-1.2.2zM381.1 256.5l1 6.5l-1.6.4l-1.1-5.7zM382.1 263l1.4-7.9l-1.7 1.3l-1.3 7zM384.6 258.1l1.1 3l-1.6.7l-1.2-2.9zM396.6 259.7l1.1 2.6l-1.6.1l-1.1-1.5zM416.7 260.8l1 5.6l-1.4.1l-1-5.2zM417.7 266.4l1.5-3l-1.5 1.3l-1.4 1.8z" fill="#ff4400" stroke="#ff4400" stroke-width="0.5"/>
<path d="M354.3 256l1.1-4.9l-1.8 2.5l-1.1 4.2zM377.6 259.1l1.2-2.8l-1.7.4l-1.2 3zM378.8 256.3l1.1 1.5l-1.7 1l-1.1-2.1zM379.9 257.8l1.2-1.3l-1.7 1.2l-1.2 1.1zM388.1 259.5l1.3-3.4l-1.6.6l-1.3 3.5zM390.6 257.1l1.1 2.3l-1.6.2l-1.1-1.7zM391.7 259.4l1.3-1.9l-1.6.6l-1.3 1.5zM393 257.5l1.2 1.3l-1.6.7l-1.2-1.4zM394.2 258.8l1.2-.6l-1.6 1l-1.2.3zM395.4 258.2l1.2 1.5l-1.6 1.2l-1.2-1.7zM397.7 262.3l1.4-5.3l-1.5.4l-1.5 5zM399.1 257l1.1 4.5l-1.6.4l-1-4.5zM400.2 261.5l1.3-1.8l-1.5.5l-1.4 1.7zM404 258.5l1.2 3.3l-1.5.4l-1.2-3.3zM405.2 261.8l1.3-.8l-1.6 1.2l-1.2 0zM412.8 262.5l1.2-.1l-1.4.6l-1.3.2zM419.2 263.4l1.5-2.9l-1.5 1.1l-1.5 3.1zM420.7 260.5l1.1 3.5l-1.4 1.2l-1.2-3.6z" fill="#ff3000" stroke="#ff3000" stroke-width="0.5"/>
<path d="M355.4 251.1l1.1 3.8l-1.8 1.7l-1.1-3zM356.5 254.9l1-4.2l-1.8 1.7l-1 4.2zM357.5 250.7l1.1 1.7l-1.8 1.2l-1.1-1.2zM358.6 252.4l1.1 2.8l-1.8 1.5l-1.1-3.1zM359.7 255.2l1.1-3.9l-1.8 2l-1.1 3.4zM360.8 251.3l1.1 1l-1.8 1.8l-1.1-.8zM361.9 252.3l1.1 2.9l-1.8 1.9l-1.1-3zM363 255.2l1.1-3.5l-1.8 1.5l-1.1 3.9zM364.1 251.7l1.1 1.8l-1.8 1.4l-1.1-1.7zM365.2 253.5l1.1.3l-1.7 1.5l-1.2-.4zM366.3 253.8l1.1 1.6l-1.7.1l-1.1-.2zM383.5 255.1l1.1 3l-1.7.8l-1.1-2.5zM389.4 256.1l1.2 1l-1.6.8l-1.2-1.2zM401.5 259.7l1.4-3.5l-1.6.6l-1.3 3.4zM402.9 256.2l1.1 2.3l-1.5.4l-1.2-2.1zM406.5 261l1.4-3.7l-1.6 1.5l-1.4 3.4zM407.9 257.3l1.2.6l-1.5 1.1l-1.3-.2zM409.1 257.9l1.2 2.3l-1.5.6l-1.2-1.8zM410.3 260.2l1.4-2.5l-1.5.8l-1.4 2.3zM411.7 257.7l1.1 4.8l-1.5.7l-1.1-4.7zM414 262.4l1.6-4.5l-1.5 1.1l-1.5 4zM415.6 257.9l1.1 2.9l-1.4.5l-1.2-2.3z" fill="#ff1e06" stroke="#ff1e06" stroke-width="0.5"/>
<path d="M434.6 273.5l1.2 2.2l-1.3.7l-1.2-2zM448.7 272.4l.6 8.8l-1.2 1.6l-.7-8.3zM451.2 275.9l1 5.3l-1.2.8l-1-4.7z" fill="#ffa100" stroke="#ffa100" stroke-width="0.5"/>
<path d="M449.3 281.2l1.9-5.3l-1.2 1.4l-1.9 5.5zM452.2 281.2l1.5-1.4l-1.2 2.1l-1.5.1z" fill="#ffba00" stroke="#ffba00" stroke-width="0.5"/>
<path d="M453.7 279.8l1.2 2.6l-1.2 1.6l-1.2-2.1z" fill="#ffd300" stroke="#ffd300" stroke-width="0.5"/>
<path d="M454.9 282.4l1.1 4.1l-1.2 2l-1.1-4.5z" fill="#ffeb00" stroke="#ffeb00" stroke-width="0.5"/>
<path d="M456 286.5l1.1 4l-1.2 1.9l-1.1-3.9z" fill="#d0ff28" stroke="#d0ff28" stroke-width="0.5"/>
<path d="M457.1 290.5l.9 5.4l-1.1 1.5l-1-5z" fill="#a8ff49" stroke="#a8ff49" stroke-width="0.5"/>
<path d="M458 295.9l1.2 3l-1.2 1.8l-1.1-3.3z" fill="#58ff98" stroke="#58ff98" stroke-width="0.5"/>
<path d="M459.2 298.9l.9 4.8l-1.1 1.7l-1-4.7z" fill="#1af6d9" stroke="#1af6d9" stroke-width="0.5"/>
<path d="M460.1 303.7l1.2 2.4l-1.1 1.3l-1.2-2z" fill="#10e8e8" stroke="#10e8e8" stroke-width="0.5"/>
<path d="M461.3 306.1l1.3 1.3l-1.1 2l-1.3-2z" fill="#06d9f6" stroke="#06d9f6" stroke-width="0.5"/>
<path d="M462.6 307.4l1.1 4.2l-1.1 1.7l-1.1-3.9z" fill="#00c7ff" stroke="#00c7ff" stroke-width="0.5"/>
<path d="M463.7 311.6l-.2 15l-.9.5l0-13.8z" fill="#0070fe" stroke="#0070fe" stroke-width="0.5"/>
<path d="M463.5 326.6l1 4.7l-1 .9l-.9-5.1z" fill="#001be4" stroke="#001be4" stroke-width="0.5"/>
<path d="M333.9 257.7l1-1.5l-2 1.3l-.9 1.6zM334.9 256.2l1 2.6l-1.9 1.5l-1.1-2.8zM349.4 259l1-2.1l-1.9 1.5l-1 2.7zM369 260.5l1.2-.1l-1.8.8l-1.1.3zM384.1 261.8l1.1 3.7l-1.7-.1l-1.1-2.8zM385.2 265.5l1.3-5.3l-1.7.7l-1.3 4.5zM420.4 265.2l1.1 3.8l-1.4.8l-1.2-3.5zM421.5 269l1.3-.6l-1.3.2l-1.4 1.2zM422.8 268.4l1.3 1.7l-1.4.8l-1.2-2.3zM437.7 271.6l1.7-4.1l-1.3.7l-1.7 4zM439.4 267.5l1 5.3l-1.3.8l-1-5.4z" fill="#ff5800" stroke="#ff5800" stroke-width="0.5"/>
<path d="M335.9 258.8l1 .4l-1.9 1.5l-1-.4zM348.3 261.1l1.1-2.1l-1.9 2.1l-1 2.4zM366.8 260.9l1.1 3l-1.8 1.5l-1.1-3.9zM367.9 263.9l1.1-3.4l-1.7 1l-1.2 3.9zM424.1 270.1l1.3 0l-1.3.5l-1.4.3zM425.4 270.1l1.3.7l-1.3.8l-1.3-1zM426.7 270.8l1.4 0l-1.3.1l-1.4.7zM428.1 270.8l1.4-1.1l-1.3.6l-1.4.6zM429.5 269.7l1.2 3.4l-1.4.7l-1.1-3.5zM430.7 273.1l1.4-1.5l-1.3.7l-1.5 1.5zM436.3 271.6l1.4 0l-1.3.6l-1.4.3zM443.2 272.4l1.4 1.1l-1.3 1.3l-1.4-.9zM444.6 273.5l1.5-.9l-1.3 1.8l-1.5.4zM446.1 272.6l1.3 1.9l-1.4 1.9l-1.2-2z" fill="#ff6f00" stroke="#ff6f00" stroke-width="0.5"/>
<path d="M336.9 259.2l1.1 2.2l-1.9 1.4l-1.1-2.1zM338 261.4l1-1.8l-1.9 1.7l-1 1.5zM339 259.6l1.1 3.2l-1.9 1.6l-1.1-3.1zM343.1 262.5l1.1-.5l-1.9 1.8l-1 .3zM345.2 264.3l1-3.9l-1.8 1.8l-1 3.7zM346.2 260.4l1.1 2.1l-1.9 1.9l-1-2.2zM347.3 262.5l1-1.4l-1.8 2.4l-1.1.9zM432.1 271.6l1.2 2.8l-1.3.9l-1.2-3zM434.5 276.4l1.8-4.8l-1.3.9l-1.8 4.6zM440.4 272.8l1.1 4.2l-1.3 1l-1.1-4.4zM441.5 277l1.7-4.6l-1.3 1.5l-1.7 4.1z" fill="#ff8800" stroke="#ff8800" stroke-width="0.5"/>
<path d="M340.1 262.8l1-.1l-1.9 1.8l-1-.1zM341.1 262.7l1 .3l-1.8 1.8l-1.1-.3zM342.1 263l1-.5l-1.8 1.6l-1 .7zM344.2 262l1 2.3l-1.8 1.6l-1.1-2.1zM433.3 274.4l1.2 2l-1.3.7l-1.2-1.8zM447.4 274.5l.7 8.3l-1.3 1.5l-.8-7.9zM450 277.3l1 4.7l-1.1.7l-1.1-4z" fill="#ffa100" stroke="#ffa100" stroke-width="0.5"/>
<path d="M350.4 256.9l1.1.6l-1.9 1.3l-1.1-.4zM351.5 257.5l1 .3l-1.8 1.8l-1.1-.8zM352.5 257.8l1.1-4.2l-1.9 2.4l-1 3.6zM365.7 255.5l1.1 5.4l-1.8.6l-1.1-5.2zM370.2 260.4l1.1-2.2l-1.7 1.1l-1.2 1.9zM371.3 258.2l1.1 1.1l-1.7.9l-1.1-.9zM372.4 259.3l1.2.7l-1.8.9l-1.1-.7zM373.6 260l1.1-.1l-1.7.3l-1.2.7zM374.7 259.9l1.2-.2l-1.7.7l-1.2-.2zM379.4 257.7l1.1 5.7l-1.7.3l-1.1-4.8zM380.5 263.4l1.3-7l-1.7 1.2l-1.3 6.1zM382.9 258.9l1.2 2.9l-1.7.8l-1.1-3zM395 260.9l1.1 1.5l-1.5.1l-1.3-.3zM416.3 266.5l1.4-1.8l-1.4 1.3l-1.4.7z" fill="#ff4400" stroke="#ff4400" stroke-width="0.5"/>
<path d="M353.6 253.6l1.1 3l-1.9 1.8l-1.1-2.4zM354.7 256.6l1-4.2l-1.8 2.5l-1.1 3.5zM356.8 253.6l1.1 3.1l-1.8 2.6l-1.1-3.3zM357.9 256.7l1.1-3.4l-1.8 3l-1.1 3zM360.1 254.1l1.1 3l-1.8 2.7l-1.1-3.2zM361.2 257.1l1.1-3.9l-1.8 2.2l-1.1 4.4zM363.4 254.9l1.2.4l-1.8 2.1l-1.2-.4zM364.6 255.3l1.1.2l-1.8.8l-1.1 1.1zM375.9 259.7l1.2-3l-1.7.4l-1.2 3.3zM377.1 256.7l1.1 2.1l-1.7.9l-1.1-2.6zM378.2 258.8l1.2-1.1l-1.7 1.2l-1.2.8zM381.8 256.4l1.1 2.5l-1.6.7l-1.2-2zM386.5 260.2l1.3-3.5l-1.7.6l-1.3 3.6zM389 257.9l1.1 1.7l-1.6.2l-1.2-1.1zM390.1 259.6l1.3-1.5l-1.7.6l-1.2 1.1zM391.4 258.1l1.2 1.4l-1.7.7l-1.2-1.5zM392.6 259.5l1.2-.3l-1.6.9l-1.3.1zM393.8 259.2l1.2 1.7l-1.7 1.3l-1.1-2.1zM396.1 262.4l1.5-5l-1.6.5l-1.4 4.6zM397.6 257.4l1 4.5l-1.5.5l-1.1-4.5zM398.6 261.9l1.4-1.7l-1.6.4l-1.3 1.8zM402.5 258.9l1.2 3.3l-1.6.4l-1.1-3.3zM403.7 262.2l1.2 0l-1.5 1.3l-1.3-.9zM404.9 262.2l1.4-3.4l-1.5 1.4l-1.4 3.3zM411.3 263.2l1.3-.2l-1.5.5l-1.3.5zM415.3 261.3l1 5.2l-1.4.2l-1.1-4.9zM417.7 264.7l1.5-3.1l-1.4 1.1l-1.5 3.3zM419.2 261.6l1.2 3.6l-1.5 1.1l-1.1-3.6z" fill="#ff3000" stroke="#ff3000" stroke-width="0.5"/>
<path d="M355.7 252.4l1.1 1.2l-1.8 2.4l-1.1-1.1zM359 253.3l1.1.8l-1.8 2.5l-1.1-.3zM362.3 253.2l1.1 1.7l-1.8 2.1l-1.1-1.6zM387.8 256.7l1.2 1.2l-1.7.8l-1.2-1.4zM400 260.2l1.3-3.4l-1.5.6l-1.4 3.2zM401.3 256.8l1.2 2.1l-1.5.4l-1.2-1.9zM406.3 258.8l1.3.2l-1.5 1.1l-1.3.1zM407.6 259l1.2 1.8l-1.5.6l-1.2-1.3zM408.8 260.8l1.4-2.3l-1.5.7l-1.4 2.2zM410.2 258.5l1.1 4.7l-1.5.8l-1.1-4.8zM412.6 263l1.5-4l-1.5 1.1l-1.5 3.4zM414.1 259l1.2 2.3l-1.5.5l-1.2-1.7z" fill="#ff1e06" stroke="#ff1e06" stroke-width="0.5"/>
<path d="M448.1 282.8l1.9-5.5l-1.2 1.4l-2 5.6zM451 282l1.5-.1l-1.3 1.9l-1.3-1.1z" fill="#ffba00" stroke="#ffba00" stroke-width="0.5"/>
<path d="M452.5 281.9l1.2 2.1l-1.2 1.6l-1.3-1.8z" fill="#ffd300" stroke="#ffd300" stroke-width="0.5"/>
<path d="M453.7 284l1.1 4.5l-1.3 1.9l-1-4.8z" fill="#ffeb00" stroke="#ffeb00" stroke-width="0.5"/>
<path d="M454.8 288.5l1.1 3.9l-1.2 1.7l-1.2-3.7z" fill="#d0ff28" stroke="#d0ff28" stroke-width="0.5"/>
<path d="M455.9 292.4l1 5l-1.2 1.2l-1-4.5z" fill="#80ff70" stroke="#80ff70" stroke-width="0.5"/>
<path d="M456.9 297.4l1.1 3.3l-1.2 1.6l-1.1-3.7z" fill="#58ff98" stroke="#58ff98" stroke-width="0.5"/>
<path d="M458 300.7l1 4.7l-1.2 1.7l-1-4.8z" fill="#1af6d9" stroke="#1af6d9" stroke-width="0.5"/>
<path d="M459 305.4l1.2 2l-1.1 1.3l-1.3-1.6z" fill="#10e8e8" stroke="#10e8e8" stroke-width="0.5"/>
<path d="M460.2 307.4l1.3 2l-1.2 2.1l-1.2-2.8z" fill="#06d9f6" stroke="#06d9f6" stroke-width="0.5"/>
<path d="M461.5 309.4l1.1 3.9l-1.2 1.7l-1.1-3.5z" fill="#00b1ff" stroke="#00b1ff" stroke-width="0.5"/>
<path d="M462.6 313.3l0 13.8l-1 .6l-.2-12.7z" fill="#0070fe" stroke="#0070fe" stroke-width="0.5"/>
<path d="M462.6 327.1l.9 5.1l-1 .9l-.9-5.4z" fill="#0024f2" stroke="#0024f2" stroke-width="0.5"/>
<path d="M332 259.1l.9-1.6l-1.9 1.3l-1 1.6zM347.5 261.1l1-2.7l-1.8 1.5l-1.1 3.2zM348.5 258.4l1.1.4l-1.9 1.3l-1-.2zM349.6 258.8l1.1.8l-1.9 1.7l-1.1-1.2zM367.3 261.5l1.1-.3l-1.8 2.3l-1.1.4zM382.4 262.6l1.1 2.8l-1.7.1l-1.1-1.7zM418.9 266.3l1.2 3.5l-1.5.8l-1.2-3.1zM420.1 269.8l1.4-1.2l-1.4.3l-1.5 1.7zM421.5 268.6l1.2 2.3l-1.4.9l-1.2-2.9zM426.8 270.9l1.4-.6l-1.4.7l-1.4.1zM436.4 272.2l1.7-4l-1.3.7l-1.7 4zM438.1 268.2l1 5.4l-1.3.8l-1-5.5z" fill="#ff5800" stroke="#ff5800" stroke-width="0.5"/>
<path d="M332.9 257.5l1.1 2.8l-1.9 1.5l-1.1-3zM334 260.3l1 .4l-1.9 1.5l-1-.4zM365 261.5l1.1 3.9l-1.8 2.7l-1.1-4.9zM366.1 265.4l1.2-3.9l-1.8 2.4l-1.2 4.2zM422.7 270.9l1.4-.3l-1.4.5l-1.4.7zM424.1 270.6l1.3 1l-1.5.8l-1.2-1.3zM425.4 271.6l1.4-.7l-1.4.2l-1.5 1.3zM428.2 270.3l1.1 3.5l-1.4.8l-1.1-3.6zM429.3 273.8l1.5-1.5l-1.4.7l-1.5 1.6zM435 272.5l1.4-.3l-1.3.7l-1.5.5zM441.9 273.9l1.4.9l-1.3 1.2l-1.4-.6zM443.3 274.8l1.5-.4l-1.4 1.8l-1.4-.2z" fill="#ff6f00" stroke="#ff6f00" stroke-width="0.5"/>
<path d="M335 260.7l1.1 2.1l-1.9 1.3l-1.1-1.9zM336.1 262.8l1-1.5l-1.9 1.7l-1 1.1zM337.1 261.3l1.1 3.1l-1.9 1.7l-1.1-3.1zM344.4 262.2l1 2.2l-1.8 1.8l-1.1-2.2zM346.5 263.5l1-2.4l-1.9 2l-1 2.7zM430.8 272.3l1.2 3l-1.4.9l-1.2-3.2zM433.2 277.1l1.8-4.6l-1.4.9l-1.7 4.4zM439.1 273.6l1.1 4.4l-1.3 1l-1.1-4.6zM440.2 278l1.7-4.1l-1.3 1.5l-1.7 3.6zM444.8 274.4l1.2 2l-1.3 1.9l-1.3-2.1z" fill="#ff8800" stroke="#ff8800" stroke-width="0.5"/>
<path d="M338.2 264.4l1 .1l-1.9 1.8l-1-.2zM339.2 264.5l1.1.3l-1.9 1.9l-1.1-.4zM340.3 264.8l1-.7l-1.9 1.6l-1 1zM341.3 264.1l1-.3l-1.9 1.8l-1 .1zM342.3 263.8l1.1 2.1l-1.9 1.6l-1.1-1.9zM343.4 265.9l1-3.7l-1.9 1.8l-1 3.5zM345.4 264.4l1.1-.9l-1.9 2.3l-1 .4zM432 275.3l1.2 1.8l-1.3.7l-1.3-1.6z" fill="#ffa100" stroke="#ffa100" stroke-width="0.5"/>
<path d="M350.7 259.6l1-3.6l-1.8 2.3l-1.1 3zM351.7 256l1.1 2.4l-1.8 1.9l-1.1-2zM352.8 258.4l1.1-3.5l-1.9 2.5l-1 2.9zM355 256l1.1 3.3l-1.8 2.7l-1.1-3.7zM356.1 259.3l1.1-3l-1.8 3l-1.1 2.7zM358.3 256.6l1.1 3.2l-1.8 2.9l-1.1-3.4zM359.4 259.8l1.1-4.4l-1.8 2.5l-1.1 4.8zM363.9 256.3l1.1 5.2l-1.8 1.7l-1.1-5.2zM368.4 261.2l1.2-1.9l-1.8 2.6l-1.2 1.6zM369.6 259.3l1.1.9l-1.8 2.6l-1.1-.9zM370.7 260.2l1.1.7l-1.7 2.5l-1.2-.6zM371.8 260.9l1.2-.7l-1.8 1.8l-1.1 1.4zM373 260.2l1.2.2l-1.8 1.9l-1.2-.3zM377.7 258.9l1.1 4.8l-1.7 1.1l-1.1-3.9zM378.8 263.7l1.3-6.1l-1.7 1.8l-1.3 5.4zM381.3 259.6l1.1 3l-1.7 1.2l-1.2-3zM383.5 265.4l1.3-4.5l-1.7.9l-1.3 3.7zM393.3 262.2l1.3.3l-1.6 0l-1.3.9zM414.9 266.7l1.4-.7l-1.5 1.4l-1.4-.6z" fill="#ff4400" stroke="#ff4400" stroke-width="0.5"/>
<path d="M353.9 254.9l1.1 1.1l-1.8 2.3l-1.2-.9zM357.2 256.3l1.1.3l-1.8 2.7l-1.1 0zM360.5 255.4l1.1 1.6l-1.8 2.5l-1.1-1.6zM361.6 257l1.2.4l-1.9 2.8l-1.1-.7zM362.8 257.4l1.1-1.1l-1.8 1.7l-1.2 2.2zM374.2 260.4l1.2-3.3l-1.8 1.6l-1.2 3.6zM375.4 257.1l1.1 2.6l-1.7 2l-1.2-3zM376.5 259.7l1.2-.8l-1.7 2l-1.2.8zM380.1 257.6l1.2 2l-1.8 1.2l-1.1-1.4zM384.8 260.9l1.3-3.6l-1.7.7l-1.3 3.8zM387.3 258.7l1.2 1.1l-1.7.2l-1.2-.5zM390.9 260.2l1.3-.1l-1.7 1l-1.2-.2zM392.2 260.1l1.1 2.1l-1.6 1.2l-1.2-2.3zM397.1 262.4l1.3-1.8l-1.6.5l-1.3 1.7zM401 259.3l1.1 3.3l-1.5.3l-1.2-3.2zM402.1 262.6l1.3.9l-1.6 1.1l-1.2-1.7zM403.4 263.5l1.4-3.3l-1.6 1.4l-1.4 3zM409.8 264l1.3-.5l-1.5.6l-1.3.7zM413.8 261.8l1.1 4.9l-1.5.1l-1.1-4.5zM416.3 266l1.5-3.3l-1.5 1.1l-1.5 3.6zM417.8 262.7l1.1 3.6l-1.5 1.2l-1.1-3.7z" fill="#ff3000" stroke="#ff3000" stroke-width="0.5"/>
<path d="M386.1 257.3l1.2 1.4l-1.7.8l-1.2-1.5zM388.5 259.8l1.2-1.1l-1.6.6l-1.3.7zM389.7 258.7l1.2 1.5l-1.6.7l-1.2-1.6zM394.6 262.5l1.4-4.6l-1.6.4l-1.4 4.2zM396 257.9l1.1 4.5l-1.6.4l-1.1-4.5zM398.4 260.6l1.4-3.2l-1.6.6l-1.4 3.1zM404.8 260.2l1.3-.1l-1.6 1.1l-1.3.4zM406.1 260.1l1.2 1.3l-1.5.5l-1.3-.7zM407.3 261.4l1.4-2.2l-1.5.7l-1.4 2zM408.7 259.2l1.1 4.8l-1.5.8l-1.1-4.9zM411.1 263.5l1.5-3.4l-1.5 1.2l-1.5 2.8zM412.6 260.1l1.2 1.7l-1.5.5l-1.2-1z" fill="#ff1e06" stroke="#ff1e06" stroke-width="0.5"/>
<path d="M399.8 257.4l1.2 1.9l-1.6.4l-1.2-1.7z" fill="#ff1424" stroke="#ff1424" stroke-width="0.5"/>
<path d="M446 276.4l.8 7.9l-1.2 1.4l-.9-7.4zM446.8 284.3l2-5.6l-1.3 1.3l-1.9 5.7zM448.8 278.7l1.1 4l-1.2.7l-1.2-3.4z" fill="#ffba00" stroke="#ffba00" stroke-width="0.5"/>
<path d="M449.9 282.7l1.3 1.1l-1.3 1.9l-1.2-2.3zM451.2 283.8l1.3 1.8l-1.2 1.5l-1.4-1.4z" fill="#ffd300" stroke="#ffd300" stroke-width="0.5"/>
<path d="M452.5 285.6l1 4.8l-1.2 1.8l-1-5.1z" fill="#f7ff07" stroke="#f7ff07" stroke-width="0.5"/>
<path d="M453.5 290.4l1.2 3.7l-1.2 1.6l-1.2-3.5z" fill="#d0ff28" stroke="#d0ff28" stroke-width="0.5"/>
<path d="M454.7 294.1l1 4.5l-1.1 1.2l-1.1-4.1z" fill="#80ff70" stroke="#80ff70" stroke-width="0.5"/>
<path d="M455.7 298.6l1.1 3.7l-1.1 1.5l-1.1-4z" fill="#58ff98" stroke="#58ff98" stroke-width="0.5"/>
<path d="M456.8 302.3l1 4.8l-1.1 1.5l-1-4.8z" fill="#1af6d9" stroke="#1af6d9" stroke-width="0.5"/>
<path d="M457.8 307.1l1.3 1.6l-1.1 1.2l-1.3-1.3zM459.1 308.7l1.2 2.8l-1.2 2.2l-1.1-3.8z" fill="#06d9f6" stroke="#06d9f6" stroke-width="0.5"/>
<path d="M460.3 311.5l1.1 3.5l-1.1 1.8l-1.2-3.1z" fill="#00b1ff" stroke="#00b1ff" stroke-width="0.5"/>
<path d="M461.4 315l.2 12.7l-1 .6l-.3-11.5z" fill="#0070fe" stroke="#0070fe" stroke-width="0.5"/>
<path d="M461.6 327.7l.9 5.4l-1 .9l-.9-5.7z" fill="#0024f2" stroke="#0024f2" stroke-width="0.5"/>
<path d="M330 260.4l1-1.6l-2 1.4l-1 1.5zM331 258.8l1.1 3l-2 1.5l-1.1-3.1zM345.6 263.1l1.1-3.2l-2 1.5l-1 3.7zM365.5 263.9l1.1-.4l-1.8 2.4l-1.2.4zM421.3 271.8l1.4-.7l-1.5.9l-1.4 1.1zM422.7 271.1l1.2 1.3l-1.4 1.3l-1.3-1.7zM423.9 272.4l1.5-1.3l-1.4.6l-1.5 2zM426.8 271l1.1 3.6l-1.4 1.3l-1.1-3.7zM427.9 274.6l1.5-1.6l-1.4 1.2l-1.5 1.7zM433.6 273.4l1.5-.5l-1.4 1.2l-1.5.6z" fill="#ff6f00" stroke="#ff6f00" stroke-width="0.5"/>
<path d="M332.1 261.8l1 .4l-1.9 1.5l-1.1-.4zM333.1 262.2l1.1 1.9l-2 1.4l-1-1.8zM334.2 264.1l1-1.1l-2 1.7l-1 .8zM344.6 265.8l1-2.7l-1.9 2l-1 3.1zM363.2 263.2l1.1 4.9l-1.8 2.7l-1.1-5.8zM364.3 268.1l1.2-4.2l-1.9 2.4l-1.1 4.5zM429.4 273l1.2 3.2l-1.4 1.4l-1.2-3.4zM431.9 277.8l1.7-4.4l-1.4 1.3l-1.7 4.4zM437.8 274.4l1.1 4.6l-1.4 1.4l-1-4.7zM438.9 279l1.7-3.6l-1.4 2l-1.7 3zM440.6 275.4l1.4.6l-1.4 1.7l-1.4-.3zM442 276l1.4.2l-1.4 2.2l-1.4-.7zM443.4 276.2l1.3 2.1l-1.4 2.3l-1.3-2.2z" fill="#ff8800" stroke="#ff8800" stroke-width="0.5"/>
<path d="M335.2 263l1.1 3.1l-2 1.6l-1.1-3zM339.4 265.7l1-.1l-1.9 1.8l-1.1-.1zM341.5 267.5l1-3.5l-1.9 1.9l-1 3.2zM342.5 264l1.1 2.2l-1.9 1.9l-1.1-2.2zM343.6 266.2l1-.4l-1.9 2.4l-1-.1zM430.6 276.2l1.3 1.6l-1.4 1.3l-1.3-1.5z" fill="#ffa100" stroke="#ffa100" stroke-width="0.5"/>
<path d="M336.3 266.1l1 .2l-1.9 1.8l-1.1-.4zM337.3 266.3l1.1.4l-2 1.8l-1-.4zM338.4 266.7l1-1l-2 1.6l-1 1.2zM340.4 265.6l1.1 1.9l-1.9 1.6l-1.1-1.7zM444.7 278.3l.9 7.4l-1.4 1.8l-.9-6.9zM445.6 285.7l1.9-5.7l-1.3 1.8l-2 5.7zM447.5 280l1.2 3.4l-1.3 1.1l-1.2-2.7z" fill="#ffba00" stroke="#ffba00" stroke-width="0.5"/>
<path d="M346.7 259.9l1 .2l-1.9 1.3l-1.1 0zM347.7 260.1l1.1 1.2l-1.9 1.6l-1.1-1.5zM348.8 261.3l1.1-3l-1.9 2.3l-1.1 2.3zM349.9 258.3l1.1 2l-1.9 1.7l-1.1-1.4zM353.2 258.3l1.1 3.7l-1.9 2.5l-1.1-4zM354.3 262l1.1-2.7l-1.9 2.8l-1.1 2.4zM356.5 259.3l1.1 3.4l-1.9 2.7l-1.1-3.7zM357.6 262.7l1.1-4.8l-1.9 2.4l-1.1 5.1zM366.6 263.5l1.2-1.6l-1.8 2.7l-1.2 1.3zM367.8 261.9l1.1.9l-1.8 2.6l-1.1-.8zM368.9 262.8l1.2.6l-1.8 2.7l-1.2-.7zM370.1 263.4l1.1-1.4l-1.8 2l-1.1 2.1zM371.2 262l1.2.3l-1.8 2.4l-1.2-.7zM376 260.9l1.1 3.9l-1.8 2.1l-1.1-3.2zM380.7 263.8l1.1 1.7l-1.7 1.7l-1.2-.7zM381.8 265.5l1.3-3.7l-1.7 2.7l-1.3 2.7zM417.4 267.5l1.2 3.1l-1.5 1.2l-1.2-2.6zM418.6 270.6l1.5-1.7l-1.5.6l-1.5 2.3zM420.1 268.9l1.2 2.9l-1.5 1.3l-1.2-3.6zM425.4 271.1l1.4-.1l-1.4 1.2l-1.4-.5zM435.1 272.9l1.7-4l-1.4 1.3l-1.7 3.9zM436.8 268.9l1 5.5l-1.3 1.3l-1.1-5.5z" fill="#ff5800" stroke="#ff5800" stroke-width="0.5"/>
<path d="M351 260.3l1-2.9l-1.8 2.3l-1.1 2.3zM352 257.4l1.2.9l-1.9 2.2l-1.1-.8zM355.4 259.3l1.1 0l-1.9 2.4l-1.1.4zM358.7 257.9l1.1 1.6l-1.8 2.5l-1.2-1.7zM359.8 259.5l1.1.7l-1.8 2.7l-1.1-.9zM360.9 260.2l1.2-2.2l-1.9 1.8l-1.1 3.1zM362.1 258l1.1 5.2l-1.8 1.8l-1.2-5.2zM372.4 262.3l1.2-3.6l-1.8 2.1l-1.2 3.9zM373.6 258.7l1.2 3l-1.8 2.6l-1.2-3.5zM374.8 261.7l1.2-.8l-1.8 2.8l-1.2.6zM377.1 264.8l1.3-5.4l-1.8 2.9l-1.3 4.6zM379.5 260.8l1.2 3l-1.8 2.7l-1.1-3.3zM390.5 261.1l1.2 2.3l-1.7 2.4l-1.2-2.4zM391.7 263.4l1.3-.9l-1.7 1.2l-1.3 2.1zM400.6 262.9l1.2 1.7l-1.7 1.7l-1.2-2.6zM413.4 266.8l1.4.6l-1.6 1.9l-1.3-1.9zM414.8 267.4l1.5-3.6l-1.6 1.6l-1.5 3.9zM416.3 263.8l1.1 3.7l-1.5 1.7l-1.2-3.8z" fill="#ff4400" stroke="#ff4400" stroke-width="0.5"/>
<path d="M378.4 259.4l1.1 1.4l-1.7 2.4l-1.2-.9zM383.1 261.8l1.3-3.8l-1.7 2.6l-1.3 3.9zM384.4 258l1.2 1.5l-1.7 2.7l-1.2-1.6zM385.6 259.5l1.2.5l-1.7 2l-1.2.2zM386.8 260l1.3-.7l-1.7 2.2l-1.3.5zM388.1 259.3l1.2 1.6l-1.7 2.2l-1.2-1.6zM389.3 260.9l1.2.2l-1.7 2.3l-1.2-.3zM395.5 262.8l1.3-1.7l-1.7 1.2l-1.3 1.7zM401.8 264.6l1.4-3l-1.7 1.9l-1.4 2.8zM407.2 259.9l1.1 4.9l-1.6 1.2l-1.1-5zM408.3 264.8l1.3-.7l-1.6 1l-1.3.9zM409.6 264.1l1.5-2.8l-1.6 1.6l-1.5 2.2zM412.3 262.3l1.1 4.5l-1.5.6l-1.1-4.1z" fill="#ff3000" stroke="#ff3000" stroke-width="0.5"/>
<path d="M393 262.5l1.4-4.2l-1.7 1.4l-1.4 4zM394.4 258.3l1.1 4.5l-1.7 1.2l-1.1-4.3zM396.8 261.1l1.4-3.1l-1.7 1.1l-1.4 3.2zM399.4 259.7l1.2 3.2l-1.7.8l-1.1-3.2zM403.2 261.6l1.3-.4l-1.6 1.4l-1.4.9zM404.5 261.2l1.3.7l-1.6.9l-1.3-.2zM405.8 261.9l1.4-2l-1.6 1.1l-1.4 1.8zM411.1 261.3l1.2 1l-1.5 1l-1.3-.4z" fill="#ff1e06" stroke="#ff1e06" stroke-width="0.5"/>
<path d="M398.2 258l1.2 1.7l-1.6.8l-1.3-1.4z" fill="#ff1424" stroke="#ff1424" stroke-width="0.5"/>
<path d="M448.7 283.4l1.2 2.3l-1.3 2.4l-1.2-3.6z" fill="#ffd300" stroke="#ffd300" stroke-width="0.5"/>
<path d="M449.9 285.7l1.4 1.4l-1.3 2.1l-1.4-1.1z" fill="#ffeb00" stroke="#ffeb00" stroke-width="0.5"/>
<path d="M451.3 287.1l1 5.1l-1.3 2.4l-1-5.4z" fill="#f7ff07" stroke="#f7ff07" stroke-width="0.5"/>
<path d="M452.3 292.2l1.2 3.5l-1.3 2.1l-1.2-3.2z" fill="#a8ff49" stroke="#a8ff49" stroke-width="0.5"/>
<path d="M453.5 295.7l1.1 4.1l-1.3 1.6l-1.1-3.6z" fill="#80ff70" stroke="#80ff70" stroke-width="0.5"/>
<path d="M454.6 299.8l1.1 4l-1.3 1.9l-1.1-4.3z" fill="#30ffc0" stroke="#30ffc0" stroke-width="0.5"/>
<path d="M455.7 303.8l1 4.8l-1.3 2.1l-1-5z" fill="#10e8e8" stroke="#10e8e8" stroke-width="0.5"/>
<path d="M456.7 308.6l1.3 1.3l-1.2 1.7l-1.4-.9z" fill="#06d9f6" stroke="#06d9f6" stroke-width="0.5"/>
<path d="M458 309.9l1.1 3.8l-1.2 2.6l-1.1-4.7z" fill="#00c7ff" stroke="#00c7ff" stroke-width="0.5"/>
<path d="M459.1 313.7l1.2 3.1l-1.2 2.3l-1.2-2.8z" fill="#00b1ff" stroke="#00b1ff" stroke-width="0.5"/>
<path d="M460.3 316.8l.3 11.5l-1.1 1.1l-.4-10.3z" fill="#0070fe" stroke="#0070fe" stroke-width="0.5"/>
<path d="M460.6 328.3l.9 5.7l-1.1 1.3l-.9-5.9z" fill="#0024f2" stroke="#0024f2" stroke-width="0.5"/>
<path d="M328 261.7l1-1.5l-2 1.3l-1 1.5zM329 260.2l1.1 3.1l-2 1.5l-1.1-3.3zM343.7 265.1l1-3.7l-1.9 1.5l-1 4.3zM345.8 261.4l1.1 1.5l-1.9 1.7l-1.1-2zM351.3 260.5l1.1 4l-1.9 2.4l-1.1-4.3zM352.4 264.5l1.1-2.4l-1.9 2.8l-1.1 2zM354.6 261.7l1.1 3.7l-1.8 2.6l-1.2-3.9zM355.7 265.4l1.1-5.1l-1.8 2.2l-1.1 5.5zM364.8 265.9l1.2-1.3l-1.9 2.6l-1.1 1zM366 264.6l1.1.8l-1.8 2.6l-1.2-.8zM367.1 265.4l1.2.7l-1.9 2.7l-1.1-.8zM368.3 266.1l1.1-2.1l-1.8 2.1l-1.2 2.7zM374.2 263.7l1.1 3.2l-1.8 2l-1.1-2.3zM378.9 266.5l1.2.7l-1.8 1.7l-1.2.3zM415.9 269.2l1.2 2.6l-1.6 3.2l-1.3-2.3zM417.1 271.8l1.5-2.3l-1.6 2.6l-1.5 2.9zM418.6 269.5l1.2 3.6l-1.6 3.2l-1.2-4.2zM419.8 273.1l1.4-1.1l-1.6 2.8l-1.4 1.5zM421.2 272l1.3 1.7l-1.6 3.2l-1.3-2.1zM422.5 273.7l1.5-2l-1.6 2.6l-1.5 2.6zM424 271.7l1.4.5l-1.6 3l-1.4-.9zM432.2 274.7l1.5-.6l-1.5 3.2l-1.5.8zM435.4 270.2l1.1 5.5l-1.6 3.2l-1-5.5z" fill="#ff6f00" stroke="#ff6f00" stroke-width="0.5"/>
<path d="M330.1 263.3l1.1.4l-2 1.5l-1.1-.4zM361.4 265l1.1 5.8l-1.8 2.7l-1.2-6.8zM363.6 266.3l1.2-.4l-1.8 2.3l-1.2.5zM425.4 272.2l1.1 3.7l-1.6 3.2l-1.1-3.9zM426.5 275.9l1.5-1.7l-1.5 3.2l-1.6 1.7zM428 274.2l1.2 3.4l-1.6 3.4l-1.1-3.6zM430.5 279.1l1.7-4.4l-1.5 3.4l-1.7 4.1zM439.2 277.4l1.4.3l-1.5 3.7l-1.5 0z" fill="#ff8800" stroke="#ff8800" stroke-width="0.5"/>
<path d="M331.2 263.7l1 1.8l-1.9 1.3l-1.1-1.6zM332.2 265.5l1-.8l-1.9 1.7l-1 .4zM333.2 264.7l1.1 3l-1.9 1.7l-1.1-3zM340.6 265.9l1.1 2.2l-2 1.8l-1.1-2.2zM342.7 268.2l1-3.1l-1.9 2.1l-1 3.4zM362.5 270.8l1.1-4.5l-1.8 2.4l-1.1 4.8zM429.2 277.6l1.3 1.5l-1.5 3.1l-1.4-1.2zM436.5 275.7l1 4.7l-1.5 3.4l-1.1-4.9zM437.5 280.4l1.7-3l-1.6 4l-1.6 2.4zM440.6 277.7l1.4.7l-1.5 4.2l-1.4-1.2zM442 278.4l1.3 2.2l-1.5 4.4l-1.3-2.4z" fill="#ffa100" stroke="#ffa100" stroke-width="0.5"/>
<path d="M334.3 267.7l1.1.4l-2 1.9l-1-.6zM335.4 268.1l1 .4l-1.9 1.9l-1.1-.4zM336.4 268.5l1-1.2l-1.9 1.6l-1 1.5zM337.4 267.3l1.1.1l-2 1.9l-1-.4zM338.5 267.4l1.1 1.7l-2 1.6l-1.1-1.4zM339.6 269.1l1-3.2l-2 1.8l-1 3zM341.7 268.1l1 .1l-1.9 2.4l-1.1-.7zM446.2 281.8l1.2 2.7l-1.4 3.2l-1.3-2.1z" fill="#ffba00" stroke="#ffba00" stroke-width="0.5"/>
<path d="M344.7 261.4l1.1 0l-1.9 1.2l-1.1.3zM346.9 262.9l1.1-2.3l-1.9 2.2l-1.1 1.8zM348 260.6l1.1 1.4l-1.9 1.7l-1.1-.9zM349.1 262l1.1-2.3l-1.9 2.4l-1.1 1.6zM350.2 259.7l1.1.8l-1.9 2.1l-1.1-.5zM353.5 262.1l1.1-.4l-1.9 2.4l-1.1.8zM356.8 260.3l1.2 1.7l-1.9 2.3l-1.1-1.8zM358 262l1.1.9l-1.9 2.7l-1.1-1.3zM359.1 262.9l1.1-3.1l-1.8 1.7l-1.2 4.1zM360.2 259.8l1.2 5.2l-1.9 1.7l-1.1-5.2zM369.4 264l1.2.7l-1.8 2.4l-1.2-1zM370.6 264.7l1.2-3.9l-1.8 2.2l-1.2 4.1zM373 264.3l1.2-.6l-1.8 2.9l-1.2.3zM375.3 266.9l1.3-4.6l-1.8 2.9l-1.3 3.7zM377.8 263.2l1.1 3.3l-1.8 2.7l-1.1-3.6zM380.1 267.2l1.3-2.7l-1.8 2.6l-1.3 1.8zM388.8 263.4l1.2 2.4l-1.8 3.3l-1.2-2.7zM411.9 267.4l1.3 1.9l-1.7 3.7l-1.2-3.1zM413.2 269.3l1.5-3.9l-1.6 3.5l-1.6 4.1zM433.7 274.1l1.7-3.9l-1.5 3.2l-1.7 3.9z" fill="#ff5800" stroke="#ff5800" stroke-width="0.5"/>
<path d="M371.8 260.8l1.2 3.5l-1.8 2.6l-1.2-3.9zM376.6 262.3l1.2.9l-1.8 2.4l-1.2-.4zM381.4 264.5l1.3-3.9l-1.8 2.5l-1.3 4zM383.9 262.2l1.2-.2l-1.8 2.2l-1.2.9zM386.4 261.5l1.2 1.6l-1.8 2.8l-1.2-1.8zM387.6 263.1l1.2.3l-1.8 3l-1.2-.5zM390 265.8l1.3-2.1l-1.7 2.1l-1.4 3.3zM393.8 264l1.3-1.7l-1.7 2.5l-1.3 1.7zM398.9 263.7l1.2 2.6l-1.7 3.3l-1.2-3.4zM400.1 266.3l1.4-2.8l-1.7 3.6l-1.4 2.5zM406.7 266l1.3-.9l-1.6 2.8l-1.4 1.1zM410.8 263.3l1.1 4.1l-1.6 2.5l-1.1-3.8zM414.7 265.4l1.2 3.8l-1.7 3.5l-1.1-3.8z" fill="#ff4400" stroke="#ff4400" stroke-width="0.5"/>
<path d="M382.7 260.6l1.2 1.6l-1.8 2.9l-1.2-2zM385.1 262l1.3-.5l-1.8 2.6l-1.3.1zM391.3 263.7l1.4-4l-1.8 2.5l-1.3 3.6zM392.7 259.7l1.1 4.3l-1.7 2.5l-1.2-4.3zM397.8 260.5l1.1 3.2l-1.7 2.5l-1.1-3.2zM401.5 263.5l1.4-.9l-1.7 3.2l-1.4 1.3zM402.9 262.6l1.3.2l-1.7 2.7l-1.3.3zM405.6 261l1.1 5l-1.7 3l-1.1-5.1zM408 265.1l1.5-2.2l-1.7 3.5l-1.4 1.5zM409.5 262.9l1.3.4l-1.6 2.8l-1.4.3z" fill="#ff3000" stroke="#ff3000" stroke-width="0.5"/>
<path d="M395.1 262.3l1.4-3.2l-1.7 2.8l-1.4 2.9zM396.5 259.1l1.3 1.4l-1.7 2.5l-1.3-1.1zM404.2 262.8l1.4-1.8l-1.7 2.9l-1.4 1.6z" fill="#ff1e06" stroke="#ff1e06" stroke-width="0.5"/>
<path d="M443.3 280.6l.9 6.9l-1.5 3.9l-.9-6.4zM444.2 287.5l2-5.7l-1.5 3.8l-2 5.8z" fill="#ffd300" stroke="#ffd300" stroke-width="0.5"/>
<path d="M447.4 284.5l1.2 3.6l-1.5 4.4l-1.1-4.8z" fill="#ffeb00" stroke="#ffeb00" stroke-width="0.5"/>
<path d="M448.6 288.1l1.4 1.1l-1.5 4l-1.4-.7z" fill="#f7ff07" stroke="#f7ff07" stroke-width="0.5"/>
<path d="M450 289.2l1 5.4l-1.5 4.3l-1-5.7z" fill="#d0ff28" stroke="#d0ff28" stroke-width="0.5"/>
<path d="M451 294.6l1.2 3.2l-1.5 4.1l-1.2-3z" fill="#80ff70" stroke="#80ff70" stroke-width="0.5"/>
<path d="M452.2 297.8l1.1 3.6l-1.4 3.6l-1.2-3.1z" fill="#58ff98" stroke="#58ff98" stroke-width="0.5"/>
<path d="M453.3 301.4l1.1 4.3l-1.4 4l-1.1-4.7z" fill="#30ffc0" stroke="#30ffc0" stroke-width="0.5"/>
<path d="M454.4 305.7l1 5l-1.4 4l-1-5z" fill="#10e8e8" stroke="#10e8e8" stroke-width="0.5"/>
<path d="M455.4 310.7l1.4.9l-1.4 3.7l-1.4-.6z" fill="#06d9f6" stroke="#06d9f6" stroke-width="0.5"/>
<path d="M456.8 311.6l1.1 4.7l-1.5 4.7l-1-5.7z" fill="#00b1ff" stroke="#00b1ff" stroke-width="0.5"/>
<path d="M457.9 316.3l1.2 2.8l-1.4 4.4l-1.3-2.5z" fill="#009bff" stroke="#009bff" stroke-width="0.5"/>
<path d="M459.1 319.1l.4 10.3l-1.2 3l-.6-8.9z" fill="#005cfd" stroke="#005cfd" stroke-width="0.5"/>
<path d="M459.5 329.4l.9 5.9l-1.2 2.9l-.9-5.8z" fill="#0024f2" stroke="#0024f2" stroke-width="0.5"/>
<path d="M326 263l1-1.5l-2 1.3l-1 1.5zM342.8 262.9l1.1-.3l-2 1.2l-1.1.5zM343.9 262.6l1.1 2l-1.9 1.6l-1.2-2.4zM345 264.6l1.1-1.8l-2 2.3l-1 1.1zM346.1 262.8l1.1.9l-2 1.7l-1.1-.3zM347.2 263.7l1.1-1.6l-2 2.3l-1.1 1zM349.4 262.6l1.1 4.3l-1.9 2.5l-1.2-4.6zM351.6 264.9l1.1-.8l-1.9 2.3l-1.1 1.2zM353.9 268l1.1-5.5l-2 2.2l-1 5.8zM356.1 264.3l1.1 1.3l-1.9 2.7l-1.1-1.6zM367.6 266.1l1.2 1l-1.9 2.3l-1.1-1.2zM371.2 266.9l1.2-.3l-1.9 2.8l-1.2.1zM372.4 266.6l1.1 2.3l-1.8 2l-1.2-1.5zM373.5 268.9l1.3-3.7l-1.9 2.9l-1.2 2.8zM376 265.6l1.1 3.6l-1.8 2.7l-1.2-3.9zM378.3 268.9l1.3-1.8l-1.8 2.7l-1.3.8zM387 266.4l1.2 2.7l-1.8 3.3l-1.1-2.9zM410.3 269.9l1.2 3.1l-1.7 3.7l-1.1-4.4zM411.5 273l1.6-4.1l-1.7 3.5l-1.6 4.3zM413.1 268.9l1.1 3.8l-1.6 3.6l-1.2-3.9zM415.5 275l1.5-2.9l-1.6 2.6l-1.6 3.4zM432.2 277.3l1.7-3.9l-1.6 3.2l-1.7 3.8z" fill="#ff6f00" stroke="#ff6f00" stroke-width="0.5"/>
<path d="M327 261.5l1.1 3.3l-2 1.4l-1.1-3.4zM341.8 267.2l1-4.3l-2 1.4l-.9 4.9zM350.5 266.9l1.1-2l-1.9 2.7l-1.1 1.8zM352.7 264.1l1.2 3.9l-1.9 2.5l-1.2-4.1zM361.8 268.7l1.2-.5l-1.9 2.4l-1.2.5zM363 268.2l1.1-1l-1.9 2.7l-1.1.7zM364.1 267.2l1.2.8l-1.9 2.7l-1.2-.8zM365.3 268l1.1.8l-1.8 2.7l-1.2-.8zM366.4 268.8l1.2-2.7l-1.8 2.1l-1.2 3.3zM377.1 269.2l1.2-.3l-1.8 1.7l-1.2 1.3zM414.2 272.7l1.3 2.3l-1.7 3.1l-1.2-1.8zM417 272.1l1.2 4.2l-1.7 3.3l-1.1-4.9zM418.2 276.3l1.4-1.5l-1.6 2.9l-1.5 1.9zM419.6 274.8l1.3 2.1l-1.6 3.2l-1.3-2.4zM420.9 276.9l1.5-2.6l-1.5 2.5l-1.6 3.3zM422.4 274.3l1.4.9l-1.6 3.1l-1.3-1.5zM430.7 278.1l1.5-.8l-1.6 3.1l-1.5 1.1zM433.9 273.4l1 5.5l-1.5 3.3l-1.1-5.6z" fill="#ff8800" stroke="#ff8800" stroke-width="0.5"/>
<path d="M328.1 264.8l1.1.4l-2 1.5l-1.1-.5zM329.2 265.2l1.1 1.6l-2.1 1.4l-1-1.5zM330.3 266.8l1-.4l-2 1.8l-1.1 0zM359.5 266.7l1.2 6.8l-1.9 2.7l-1.2-7.8zM423.8 275.2l1.1 3.9l-1.6 3.2l-1.1-4zM424.9 279.1l1.6-1.7l-1.6 3.2l-1.6 1.7zM426.5 277.4l1.1 3.6l-1.6 3.4l-1.1-3.8zM429 282.2l1.7-4.1l-1.6 3.4l-1.7 3.9z" fill="#ffa100" stroke="#ffa100" stroke-width="0.5"/>
<path d="M331.3 266.4l1.1 3l-2 1.7l-1.1-2.9zM335.5 268.9l1 .4l-1.9 1.8l-1.1-.6zM337.6 270.7l1-3l-1.9 1.9l-1 2.7zM338.6 267.7l1.1 2.2l-1.9 1.9l-1.1-2.2zM340.8 270.6l1-3.4l-1.9 2l-1 3.8zM360.7 273.5l1.1-4.8l-1.9 2.4l-1.1 5.1zM427.6 281l1.4 1.2l-1.6 3.2l-1.4-1zM434.9 278.9l1.1 4.9l-1.5 3.4l-1.1-5zM436 283.8l1.6-2.4l-1.5 3.9l-1.6 1.9zM437.6 281.4l1.5 0l-1.5 3.7l-1.5.2zM439.1 281.4l1.4 1.2l-1.6 4.3l-1.3-1.8z" fill="#ffba00" stroke="#ffba00" stroke-width="0.5"/>
<path d="M332.4 269.4l1 .6l-1.9 1.8l-1.1-.7zM333.4 270l1.1.4l-2 1.9l-1-.5zM334.5 270.4l1-1.5l-2 1.6l-1 1.8zM336.5 269.3l1.1 1.4l-1.9 1.6l-1.1-1.2zM339.7 269.9l1.1.7l-1.9 2.4l-1.1-1.2zM440.5 282.6l1.3 2.4l-1.6 4.3l-1.3-2.4zM444.7 285.6l1.3 2.1l-1.5 3.1l-1.4-1.4z" fill="#ffd300" stroke="#ffd300" stroke-width="0.5"/>
<path d="M348.3 262.1l1.1.5l-2 2.2l-1.1-.4zM355 262.5l1.1 1.8l-1.9 2.4l-1.2-2zM357.2 265.6l1.2-4.1l-1.9 1.8l-1.2 5zM358.4 261.5l1.1 5.2l-1.9 1.7l-1.1-5.1zM368.8 267.1l1.2-4.1l-1.8 2.1l-1.3 4.3zM370 263l1.2 3.9l-1.9 2.6l-1.1-4.4zM374.8 265.2l1.2.4l-1.9 2.4l-1.2.1zM379.6 267.1l1.3-4l-1.8 2.6l-1.3 4.1zM385.8 265.9l1.2.5l-1.7 3.1l-1.3-.9zM388.2 269.1l1.4-3.3l-1.8 2.1l-1.4 4.5zM397.2 266.2l1.2 3.4l-1.7 3.4l-1.2-4.2zM398.4 269.6l1.4-2.5l-1.7 3.6l-1.4 2.3zM405 269l1.4-1.1l-1.7 2.9l-1.4 1.2z" fill="#ff5800" stroke="#ff5800" stroke-width="0.5"/>
<path d="M380.9 263.1l1.2 2l-1.8 2.8l-1.2-2.2zM382.1 265.1l1.2-.9l-1.7 2.2l-1.3 1.5zM383.3 264.2l1.3-.1l-1.8 2.6l-1.2-.3zM384.6 264.1l1.2 1.8l-1.8 2.7l-1.2-1.9zM389.6 265.8l1.3-3.6l-1.7 2.5l-1.4 3.2zM390.9 262.2l1.2 4.3l-1.8 2.5l-1.1-4.3zM392.1 266.5l1.3-1.7l-1.7 2.7l-1.4 1.5zM396.1 263l1.1 3.2l-1.7 2.6l-1.2-3.2zM399.8 267.1l1.4-1.3l-1.8 3.2l-1.3 1.7zM401.2 265.8l1.3-.3l-1.7 2.7l-1.4.8zM403.9 263.9l1.1 5.1l-1.7 3l-1.1-5.1zM406.4 267.9l1.4-1.5l-1.7 3.4l-1.4 1zM407.8 266.4l1.4-.3l-1.7 2.8l-1.4.9zM409.2 266.1l1.1 3.8l-1.6 2.4l-1.2-3.4z" fill="#ff4400" stroke="#ff4400" stroke-width="0.5"/>
<path d="M393.4 264.8l1.4-2.9l-1.7 2.8l-1.4 2.8zM394.8 261.9l1.3 1.1l-1.8 2.6l-1.2-.9zM402.5 265.5l1.4-1.6l-1.7 3l-1.4 1.3z" fill="#ff3000" stroke="#ff3000" stroke-width="0.5"/>
<path d="M441.8 285l.9 6.4l-1.5 3.8l-1-5.9zM442.7 291.4l2-5.8l-1.6 3.8l-1.9 5.8z" fill="#ffeb00" stroke="#ffeb00" stroke-width="0.5"/>
<path d="M446 287.7l1.1 4.8l-1.6 4.4l-1-6.1z" fill="#f7ff07" stroke="#f7ff07" stroke-width="0.5"/>
<path d="M447.1 292.5l1.4.7l-1.5 4l-1.5-.3z" fill="#d0ff28" stroke="#d0ff28" stroke-width="0.5"/>
<path d="M448.5 293.2l1 5.7l-1.5 4.3l-1-6z" fill="#a8ff49" stroke="#a8ff49" stroke-width="0.5"/>
<path d="M449.5 298.9l1.2 3l-1.5 4.1l-1.2-2.8z" fill="#58ff98" stroke="#58ff98" stroke-width="0.5"/>
<path d="M450.7 301.9l1.2 3.1l-1.4 3.6l-1.3-2.6z" fill="#30ffc0" stroke="#30ffc0" stroke-width="0.5"/>
<path d="M451.9 305l1.1 4.7l-1.5 3.8l-1-4.9z" fill="#1af6d9" stroke="#1af6d9" stroke-width="0.5"/>
<path d="M453 309.7l1 5l-1.4 4l-1.1-5.2z" fill="#06d9f6" stroke="#06d9f6" stroke-width="0.5"/>
<path d="M454 314.7l1.4.6l-1.4 3.7l-1.4-.3z" fill="#00b1ff" stroke="#00b1ff" stroke-width="0.5"/>
<path d="M455.4 315.3l1 5.7l-1.5 4.7l-.9-6.7z" fill="#009bff" stroke="#009bff" stroke-width="0.5"/>
<path d="M456.4 321l1.3 2.5l-1.5 4.3l-1.3-2.1z" fill="#0070fe" stroke="#0070fe" stroke-width="0.5"/>
<path d="M457.7 323.5l.6 8.9l-1.3 3l-.8-7.6z" fill="#0048fb" stroke="#0048fb" stroke-width="0.5"/>
<path d="M458.3 332.4l.9 5.8l-1.3 2.7l-.9-5.5z" fill="#001be4" stroke="#001be4" stroke-width="0.5"/>
<path d="M324 264.3l1-1.5l-2.1 1.3l-1 1.5zM325 262.8l1.1 3.4l-2 1.5l-1.2-3.6zM339.9 269.2l.9-4.9l-2 1.5l-.9 5.5zM343.1 266.2l1-1.1l-1.9 2.3l-1.1.5zM347.4 264.8l1.2 4.6l-1.9 2.4l-1.2-4.9zM349.7 267.6l1.1-1.2l-1.9 2.2l-1.1 1.7zM352 270.5l1-5.8l-1.9 2.2l-1.1 6.1zM354.2 266.7l1.1 1.6l-1.9 2.7l-1.1-2.1zM364.6 271.5l1.2-3.3l-1.9 2.1l-1.2 3.9zM365.8 268.2l1.1 1.2l-1.8 2.4l-1.2-1.5zM369.3 269.5l1.2-.1l-1.8 2.8l-1.2-.1zM370.5 269.4l1.2 1.5l-1.9 1.9l-1.1-.6zM371.7 270.9l1.2-2.8l-1.8 2.9l-1.3 1.8zM374.1 268l1.2 3.9l-1.8 2.7l-1.2-4.2zM375.3 271.9l1.2-1.3l-1.8 1.7l-1.2 2.3zM376.5 270.6l1.3-.8l-1.8 2.7l-1.3-.2zM385.3 269.5l1.1 2.9l-1.8 3.3l-1.2-3.2zM408.7 272.3l1.1 4.4l-1.7 3.7l-1.1-5.6zM409.8 276.7l1.6-4.3l-1.7 3.5l-1.6 4.5zM411.4 272.4l1.2 3.9l-1.7 3.6l-1.2-4zM413.8 278.1l1.6-3.4l-1.6 2.6l-1.6 3.9zM415.4 274.7l1.1 4.9l-1.6 3.2l-1.1-5.5zM420.9 276.8l1.3 1.5l-1.6 3.2l-1.3-2.1zM430.6 280.4l1.7-3.8l-1.6 3.3l-1.7 3.7zM432.3 276.6l1.1 5.6l-1.6 3.2l-1.1-5.5z" fill="#ff8800" stroke="#ff8800" stroke-width="0.5"/>
<path d="M326.1 266.2l1.1.5l-2.1 1.5l-1-.5zM327.2 266.7l1 1.5l-2 1.3l-1.1-1.3zM348.6 269.4l1.1-1.8l-1.9 2.7l-1.1 1.5zM350.8 266.4l1.2 4.1l-2 2.5l-1.1-4.4zM359.9 271.1l1.2-.5l-1.9 2.3l-1.2.6zM361.1 270.6l1.1-.7l-1.8 2.7l-1.2.3zM362.2 269.9l1.2.8l-1.9 2.6l-1.1-.7zM363.4 270.7l1.2.8l-1.9 2.7l-1.2-.9zM412.6 276.3l1.2 1.8l-1.6 3.1l-1.3-1.3zM416.5 279.6l1.5-1.9l-1.6 2.9l-1.5 2.2zM418 277.7l1.3 2.4l-1.7 3.2l-1.2-2.7zM419.3 280.1l1.6-3.3l-1.6 2.6l-1.7 3.9zM422.2 278.3l1.1 4l-1.6 3.3l-1.1-4.1zM429.1 281.5l1.5-1.1l-1.6 3.2l-1.5 1.2z" fill="#ffa100" stroke="#ffa100" stroke-width="0.5"/>
<path d="M328.2 268.2l1.1 0l-2.1 1.7l-1-.4zM329.3 268.2l1.1 2.9l-2 1.7l-1.2-2.9zM336.7 269.6l1.1 2.2l-2 1.9l-1.1-2.2zM357.6 268.4l1.2 7.8l-1.9 2.8l-1.2-8.8zM358.8 276.2l1.1-5.1l-1.9 2.4l-1.1 5.5zM423.3 282.3l1.6-1.7l-1.6 3.2l-1.6 1.8zM424.9 280.6l1.1 3.8l-1.6 3.4l-1.1-4zM427.4 285.4l1.7-3.9l-1.6 3.3l-1.7 3.8z" fill="#ffba00" stroke="#ffba00" stroke-width="0.5"/>
<path d="M330.4 271.1l1.1.7l-2.1 1.9l-1-.9zM331.5 271.8l1 .5l-2 1.9l-1.1-.5zM332.5 272.3l1-1.8l-2 1.6l-1 2.1zM333.5 270.5l1.1.6l-2 1.9l-1.1-.9zM334.6 271.1l1.1 1.2l-2 1.6l-1.1-.9zM335.7 272.3l1-2.7l-2 1.9l-1 2.4zM337.8 271.8l1.1 1.2l-2 2.4l-1.1-1.7zM338.9 273l1-3.8l-2 2.1l-1 4.1zM426 284.4l1.4 1l-1.6 3.2l-1.4-.8zM433.4 282.2l1.1 5l-1.6 3.4l-1.1-5.2zM434.5 287.2l1.6-1.9l-1.6 4l-1.6 1.3zM436.1 285.3l1.5-.2l-1.6 3.7l-1.5.5zM437.6 285.1l1.3 1.8l-1.6 4.2l-1.3-2.3z" fill="#ffd300" stroke="#ffd300" stroke-width="0.5"/>
<path d="M340.8 264.3l1.1-.5l-2 1.2l-1.1.8zM341.9 263.8l1.2 2.4l-2 1.7l-1.2-2.9zM344.1 265.1l1.1.3l-1.9 1.7l-1.1.3zM345.2 265.4l1.1-1l-1.9 2.3l-1.1.4zM346.3 264.4l1.1.4l-1.9 2.1l-1.1-.2zM353 264.7l1.2 2l-1.9 2.2l-1.2-2zM355.3 268.3l1.2-5l-2 1.7l-1.1 6zM356.5 263.3l1.1 5.1l-1.9 1.8l-1.2-5.2zM366.9 269.4l1.3-4.3l-1.9 2.1l-1.2 4.6zM368.2 265.1l1.1 4.4l-1.8 2.6l-1.2-4.9zM372.9 268.1l1.2-.1l-1.8 2.4l-1.2.6zM377.8 269.8l1.3-4.1l-1.8 2.6l-1.3 4.2zM384 268.6l1.3.9l-1.9 3l-1.2-1.1zM386.4 272.4l1.4-4.5l-1.8 2.1l-1.4 5.7zM395.5 268.8l1.2 4.2l-1.8 3.4l-1.1-5.1zM396.7 273l1.4-2.3l-1.8 3.7l-1.4 2zM398.1 270.7l1.3-1.7l-1.7 3.2l-1.4 2.2zM403.3 272l1.4-1.2l-1.7 2.8l-1.4 1.4z" fill="#ff6f00" stroke="#ff6f00" stroke-width="0.5"/>
<path d="M379.1 265.7l1.2 2.2l-1.8 2.8l-1.2-2.4zM380.3 267.9l1.3-1.5l-1.9 2.2l-1.2 2.1zM381.6 266.4l1.2.3l-1.8 2.6l-1.3-.7zM382.8 266.7l1.2 1.9l-1.8 2.8l-1.2-2.1zM389.2 264.7l1.1 4.3l-1.7 2.6l-1.2-4.4zM390.3 269l1.4-1.5l-1.8 2.6l-1.3 1.5zM399.4 269l1.4-.8l-1.7 2.6l-1.4 1.4zM402.2 266.9l1.1 5.1l-1.7 3l-1.1-5.2zM404.7 270.8l1.4-1l-1.8 3.5l-1.3.3zM406.1 269.8l1.4-.9l-1.7 2.9l-1.5 1.5zM407.5 268.9l1.2 3.4l-1.7 2.5l-1.2-3z" fill="#ff5800" stroke="#ff5800" stroke-width="0.5"/>
<path d="M387.8 267.9l1.4-3.2l-1.8 2.5l-1.4 2.8zM391.7 267.5l1.4-2.8l-1.8 2.8l-1.4 2.6zM393.1 264.7l1.2.9l-1.7 2.6l-1.3-.7zM394.3 265.6l1.2 3.2l-1.7 2.5l-1.2-3.1zM400.8 268.2l1.4-1.3l-1.7 2.9l-1.4 1z" fill="#ff4400" stroke="#ff4400" stroke-width="0.5"/>
<path d="M438.9 286.9l1.3 2.4l-1.6 4.3l-1.3-2.5zM443.1 289.4l1.4 1.4l-1.5 3.1l-1.4-.7z" fill="#ffeb00" stroke="#ffeb00" stroke-width="0.5"/>
<path d="M440.2 289.3l1 5.9l-1.6 3.9l-1-5.5zM441.2 295.2l1.9-5.8l-1.5 3.8l-2 5.9z" fill="#f7ff07" stroke="#f7ff07" stroke-width="0.5"/>
<path d="M444.5 290.8l1 6.1l-1.6 4.5l-.9-7.5z" fill="#d0ff28" stroke="#d0ff28" stroke-width="0.5"/>
<path d="M445.5 296.9l1.5.3l-1.5 4l-1.6.2z" fill="#a8ff49" stroke="#a8ff49" stroke-width="0.5"/>
<path d="M447 297.2l1 6l-1.6 4.3l-.9-6.3z" fill="#80ff70" stroke="#80ff70" stroke-width="0.5"/>
<path d="M448 303.2l1.2 2.8l-1.5 4.1l-1.3-2.6z" fill="#30ffc0" stroke="#30ffc0" stroke-width="0.5"/>
<path d="M449.2 306l1.3 2.6l-1.5 3.5l-1.3-2z" fill="#1af6d9" stroke="#1af6d9" stroke-width="0.5"/>
<path d="M450.5 308.6l1 4.9l-1.4 3.9l-1.1-5.3z" fill="#10e8e8" stroke="#10e8e8" stroke-width="0.5"/>
<path d="M451.5 313.5l1.1 5.2l-1.5 4l-1-5.3z" fill="#00b1ff" stroke="#00b1ff" stroke-width="0.5"/>
<path d="M452.6 318.7l1.4.3l-1.4 3.8l-1.5-.1z" fill="#009bff" stroke="#009bff" stroke-width="0.5"/>
<path d="M454 319l.9 6.7l-1.5 4.8l-.8-7.7z" fill="#0085ff" stroke="#0085ff" stroke-width="0.5"/>
<path d="M454.9 325.7l1.3 2.1l-1.5 4.4l-1.3-1.7z" fill="#005cfd" stroke="#005cfd" stroke-width="0.5"/>
<path d="M456.2 327.8l.8 7.6l-1.3 2.9l-1-6.1z" fill="#0034f9" stroke="#0034f9" stroke-width="0.5"/>
<path d="M457 335.4l.9 5.5l-1.2 2.4l-1-5z" fill="#001be4" stroke="#001be4" stroke-width="0.5"/>
<path d="M321.9 265.6l1-1.5l-2.1 1.7l-1 1.2zM339.9 265l1.2 2.9l-2 1.8l-1.2-1.9zM341.1 267.9l1.1-.5l-2 2l-1.1.3zM342.2 267.4l1.1-.3l-2 2.4l-1.1-.1zM343.3 267.1l1.1-.4l-2 2.5l-1.1.3zM344.4 266.7l1.1.2l-2 2.7l-1.1-.4zM351.1 266.9l1.2 2l-2 2.7l-1.2-1.9zM353.4 271l1.1-6l-1.9 3l-1.1 5zM363.9 270.3l1.2 1.5l-1.9 3l-1.2-2.8zM365.1 271.8l1.2-4.6l-1.9 3.1l-1.2 4.5zM366.3 267.2l1.2 4.9l-1.9 2.3l-1.2-4.1zM369.8 272.8l1.3-1.8l-1.9 2.6l-1.2 2zM371.1 271l1.2-.6l-1.9 2.9l-1.2.3zM374.7 272.3l1.3.2l-1.9 3.4l-1.2-.8zM382.2 271.4l1.2 1.1l-1.8 2.8l-1.2-1.7zM384.6 275.7l1.4-5.7l-1.8 3.1l-1.4 5.3zM393.8 271.3l1.1 5.1l-1.7 2.3l-1.2-4.1zM394.9 276.4l1.4-2l-1.8 2.9l-1.3 1.4zM396.3 274.4l1.4-2.2l-1.8 3.4l-1.4 1.7zM401.6 275l1.4-1.4l-1.8 3.7l-1.3.4z" fill="#ff8800" stroke="#ff8800" stroke-width="0.5"/>
<path d="M322.9 264.1l1.2 3.6l-2.1 1.6l-1.2-3.5zM324.1 267.7l1 .5l-2.1 1.7l-1-.6zM337.9 271.3l.9-5.5l-2 2.3l-.9 5zM345.5 266.9l1.2 4.9l-2 2.2l-1.2-4.4zM346.7 271.8l1.1-1.5l-2 1.9l-1.1 1.8zM347.8 270.3l1.1-1.7l-2 2.5l-1.1 1.1zM348.9 268.6l1.1 4.4l-1.9 2.1l-1.2-4zM350 273l1.1-6.1l-2 2.8l-1 5.4zM352.3 268.9l1.1 2.1l-1.9 2l-1.2-1.4zM359.2 272.9l1.2-.3l-2 2.6l-1.1.1zM360.4 272.6l1.1.7l-1.9 2.3l-1.2-.4zM362.7 274.2l1.2-3.9l-1.9 1.7l-1.2 4.4zM367.5 272.1l1.2.1l-1.9 2.3l-1.2-.1zM368.7 272.2l1.1.6l-1.8 2.8l-1.2-1.1zM372.3 270.4l1.2 4.2l-1.9 2.8l-1.2-4.1zM373.5 274.6l1.2-2.3l-1.8 2.8l-1.3 2.3zM383.4 272.5l1.2 3.2l-1.8 2.7l-1.2-3.1zM407 274.8l1.1 5.6l-1.7 2.8l-1.1-5.4zM408.1 280.4l1.6-4.5l-1.7 3.6l-1.6 3.7zM409.7 275.9l1.2 4l-1.7 2.6l-1.2-3zM412.2 281.2l1.6-3.9l-1.7 3.3l-1.6 3.5zM413.8 277.3l1.1 5.5l-1.7 3.2l-1.1-5.4zM419.3 279.4l1.3 2.1l-1.7 3.3l-1.3-1.5zM429 283.6l1.7-3.7l-1.6 3.4l-1.7 3.5zM430.7 279.9l1.1 5.5l-1.6 3.2l-1.1-5.3z" fill="#ffa100" stroke="#ffa100" stroke-width="0.5"/>
<path d="M325.1 268.2l1.1 1.3l-2.1 1.8l-1.1-1.4zM326.2 269.5l1 .4l-2 1.7l-1.1-.3zM355.7 270.2l1.2 8.8l-1.9 2.1l-1.2-8.4zM358 273.5l1.2-.6l-1.9 2.4l-1.2.5zM361.5 273.3l1.2.9l-1.9 2.2l-1.2-.8zM410.9 279.9l1.3 1.3l-1.7 2.9l-1.3-1.6zM414.9 282.8l1.5-2.2l-1.7 3.2l-1.5 2.2zM416.4 280.6l1.2 2.7l-1.6 3.2l-1.3-2.7zM417.6 283.3l1.7-3.9l-1.7 3.9l-1.6 3.2zM420.6 281.5l1.1 4.1l-1.6 3.4l-1.2-4.2zM427.5 284.8l1.5-1.2l-1.6 3.2l-1.5 1.7z" fill="#ffba00" stroke="#ffba00" stroke-width="0.5"/>
<path d="M327.2 269.9l1.2 2.9l-2.1 1.8l-1.1-3zM331.5 272.1l1.1.9l-2.1 1.9l-1-1zM333.7 273.9l1-2.4l-2.1 2l-1 2.4zM334.7 271.5l1.1 2.2l-2 2l-1.2-2.2zM336.9 275.4l1-4.1l-2 1.8l-1 3.8zM356.9 279l1.1-5.5l-1.9 2.3l-1.1 5.3zM421.7 285.6l1.6-1.8l-1.7 3.7l-1.5 1.5zM423.3 283.8l1.1 4l-1.6 3.3l-1.2-3.6zM425.8 288.6l1.7-3.8l-1.6 3.7l-1.7 3.9z" fill="#ffd300" stroke="#ffd300" stroke-width="0.5"/>
<path d="M328.4 272.8l1 .9l-2 2l-1.1-1.1zM329.4 273.7l1.1.5l-2 2l-1.1-.5zM330.5 274.2l1-2.1l-2 1.8l-1 2.3zM332.6 273l1.1.9l-2.1 2l-1.1-1zM335.8 273.7l1.1 1.7l-2 1.5l-1.1-1.2zM424.4 287.8l1.4.8l-1.6 3.8l-1.4-1.3zM431.8 285.4l1.1 5.2l-1.6 3.3l-1.1-5.3zM432.9 290.6l1.6-1.3l-1.6 3.2l-1.6 1.4zM434.5 289.3l1.5-.5l-1.6 3.1l-1.5.6zM436 288.8l1.3 2.3l-1.5 2.8l-1.4-2z" fill="#ffeb00" stroke="#ffeb00" stroke-width="0.5"/>
<path d="M338.8 265.8l1.1-.8l-2 2.8l-1.1.3zM354.5 265l1.2 5.2l-1.9 2.5l-1.2-4.7zM376 272.5l1.3-4.2l-1.9 2.8l-1.3 4.8zM377.3 268.3l1.2 2.4l-1.9 2.5l-1.2-2.1zM378.5 270.7l1.2-2.1l-1.8 2.9l-1.3 1.7zM379.7 268.6l1.3.7l-1.9 2.8l-1.2-.6zM381 269.3l1.2 2.1l-1.8 2.2l-1.3-1.5zM388.6 271.6l1.3-1.5l-1.8 3.1l-1.3 1.4zM397.7 272.2l1.4-1.4l-1.8 3.8l-1.4 1zM400.5 269.8l1.1 5.2l-1.7 2.7l-1.2-4.4zM403 273.6l1.3-.3l-1.7 3.3l-1.4.7zM404.3 273.3l1.5-1.5l-1.8 3.7l-1.4 1.1zM405.8 271.8l1.2 3l-1.7 3l-1.3-2.3z" fill="#ff6f00" stroke="#ff6f00" stroke-width="0.5"/>
<path d="M386 270l1.4-2.8l-1.8 3.2l-1.4 2.7zM387.4 267.2l1.2 4.4l-1.8 3l-1.2-4.2zM389.9 270.1l1.4-2.6l-1.8 3l-1.4 2.7zM392.6 268.2l1.2 3.1l-1.8 3.3l-1.2-3.3zM399.1 270.8l1.4-1l-1.8 3.5l-1.4 1.3z" fill="#ff5800" stroke="#ff5800" stroke-width="0.5"/>
<path d="M391.3 267.5l1.3.7l-1.8 3.1l-1.3-.8z" fill="#ff4400" stroke="#ff4400" stroke-width="0.5"/>
<path d="M437.3 291.1l1.3 2.5l-1.5 3.1l-1.3-2.8zM441.6 293.2l1.4.7l-1.5 3.7l-1.4-.7z" fill="#f7ff07" stroke="#f7ff07" stroke-width="0.5"/>
<path d="M438.6 293.6l1 5.5l-1.4 2.8l-1.1-5.2zM439.6 299.1l2-5.9l-1.5 3.7l-1.9 5z" fill="#d0ff28" stroke="#d0ff28" stroke-width="0.5"/>
<path d="M443 293.9l.9 7.5l-1.4 2.9l-1-6.7z" fill="#a8ff49" stroke="#a8ff49" stroke-width="0.5"/>
<path d="M443.9 301.4l1.6-.2l-1.6 3.7l-1.4-.6z" fill="#80ff70" stroke="#80ff70" stroke-width="0.5"/>
<path d="M445.5 301.2l.9 6.3l-1.5 3.8l-1-6.4z" fill="#58ff98" stroke="#58ff98" stroke-width="0.5"/>
<path d="M446.4 307.5l1.3 2.6l-1.5 3.5l-1.3-2.3z" fill="#1af6d9" stroke="#1af6d9" stroke-width="0.5"/>
<path d="M447.7 310.1l1.3 2l-1.5 3.9l-1.3-2.4z" fill="#10e8e8" stroke="#10e8e8" stroke-width="0.5"/>
<path d="M449 312.1l1.1 5.3l-1.5 3.7l-1.1-5.1z" fill="#00c7ff" stroke="#00c7ff" stroke-width="0.5"/>
<path d="M450.1 317.4l1 5.3l-1.4 3.6l-1.1-5.2z" fill="#009bff" stroke="#009bff" stroke-width="0.5"/>
<path d="M451.1 322.7l1.5.1l-1.4 3.3l-1.5.2z" fill="#0085ff" stroke="#0085ff" stroke-width="0.5"/>
<path d="M452.6 322.8l.8 7.7l-1.4 3.7l-.8-8.1z" fill="#0070fe" stroke="#0070fe" stroke-width="0.5"/>
<path d="M453.4 330.5l1.3 1.7l-1.4 3.6l-1.3-1.6z" fill="#0048fb" stroke="#0048fb" stroke-width="0.5"/>
<path d="M454.7 332.2l1 6.1l-1.4 3.7l-1-6.2z" fill="#0024f2" stroke="#0024f2" stroke-width="0.5"/>
<path d="M455.7 338.3l1 5l-1.3 2.4l-1.1-3.7z" fill="#0012d5" stroke="#0012d5" stroke-width="0.5"/>
<path d="M319.8 267l1-1.2l-2.1 1.7l-1 .9zM336.8 268.1l1.1-.3l-2 2.8l-1.1-.2zM351.5 273l1.1-5l-2 3l-1.1 4.1zM352.6 268l1.2 4.7l-2 2.6l-1.2-4.3zM374.1 275.9l1.3-4.8l-1.9 2.8l-1.3 5.4zM375.4 271.1l1.2 2.1l-1.9 2.5l-1.2-1.8zM376.6 273.2l1.3-1.7l-1.9 3l-1.3 1.2zM379.1 272.1l1.3 1.5l-1.9 2.2l-1.2-.8zM380.4 273.6l1.2 1.7l-1.8 2.9l-1.3-2.4zM386.8 274.6l1.3-1.4l-1.8 3.1l-1.4 1.4zM394.5 277.3l1.4-1.7l-1.8 3.3l-1.4 1.4zM395.9 275.6l1.4-1l-1.8 3.7l-1.4.6zM398.7 273.3l1.2 4.4l-1.8 2.7l-1.2-3.6zM401.2 277.3l1.4-.7l-1.8 3.2l-1.4 1.3zM402.6 276.6l1.4-1.1l-1.8 3.7l-1.4.6zM404 275.5l1.3 2.3l-1.8 3l-1.3-1.6z" fill="#ff8800" stroke="#ff8800" stroke-width="0.5"/>
<path d="M320.8 265.8l1.2 3.5l-2.1 1.5l-1.2-3.3zM335.9 273.1l.9-5l-2 2.3l-1 4.5zM337.9 267.8l1.2 1.9l-2.1 1.9l-1.1-1zM339.1 269.7l1.1-.3l-2.1 2l-1.1.2zM340.2 269.4l1.1.1l-2.1 2.4l-1.1-.5zM341.3 269.5l1.1-.3l-2.1 2.4l-1.1.3zM342.4 269.2l1.1.4l-2 2.7l-1.2-.7zM345.8 272.2l1.1-1.1l-2 2.5l-1.1.6zM349.1 269.7l1.2 1.9l-2 2.7l-1.1-1.7zM350.3 271.6l1.2 1.4l-2 2.1l-1.2-.8zM360.8 276.4l1.2-4.4l-2 1.7l-1.2 4.8zM362 272l1.2 2.8l-2 3l-1.2-4.1zM363.2 274.8l1.2-4.5l-2 3.1l-1.2 4.4zM364.4 270.3l1.2 4.1l-2 2.4l-1.2-3.4zM365.6 274.4l1.2.1l-2 2.4l-1.2-.1zM368 275.6l1.2-2l-1.9 2.6l-1.2 2.2zM369.2 273.6l1.2-.3l-1.9 2.8l-1.2.1zM370.4 273.3l1.2 4.1l-1.9 2.8l-1.2-4.1zM372.9 275.1l1.2.8l-1.9 3.4l-1.2-1.4zM381.6 275.3l1.2 3.1l-1.8 2.6l-1.2-2.8zM382.8 278.4l1.4-5.3l-1.8 3.1l-1.4 4.8zM392 274.6l1.2 4.1l-1.8 2.4l-1.3-3.2zM393.2 278.7l1.3-1.4l-1.8 3l-1.3.8zM399.9 277.7l1.3-.4l-1.8 3.8l-1.3-.7zM405.3 277.8l1.1 5.4l-1.7 2.7l-1.2-5.1z" fill="#ffa100" stroke="#ffa100" stroke-width="0.5"/>
<path d="M322 269.3l1 .6l-2.1 1.8l-1-.9zM323 269.9l1.1 1.4l-2.1 1.9l-1.1-1.5zM343.5 269.6l1.2 4.4l-2 2.2l-1.2-3.9zM344.7 274l1.1-1.8l-2 2l-1.1 2zM346.9 271.1l1.2 4l-2 2l-1.2-3.5zM348.1 275.1l1-5.4l-1.9 2.9l-1.1 4.5zM356.1 275.8l1.2-.5l-2 2.4l-1.2.4zM357.3 275.3l1.1-.1l-1.9 2.6l-1.2-.1zM358.4 275.2l1.2.4l-1.9 2.2l-1.2 0zM359.6 275.6l1.2.8l-2 2.1l-1.1-.7zM366.8 274.5l1.2 1.1l-1.9 2.8l-1.3-1.5zM371.6 277.4l1.3-2.3l-1.9 2.8l-1.3 2.3zM406.4 283.2l1.6-3.7l-1.8 3.6l-1.5 2.8zM408 279.5l1.2 3l-1.7 2.6l-1.3-2zM409.2 282.5l1.3 1.6l-1.7 2.8l-1.3-1.8zM410.5 284.1l1.6-3.5l-1.8 3.4l-1.5 2.9zM412.1 280.6l1.1 5.4l-1.7 3.2l-1.2-5.2zM417.6 283.3l1.3 1.5l-1.7 3.4l-1.4-1.1zM427.4 286.8l1.7-3.5l-1.6 3.5l-1.7 3.2zM429.1 283.3l1.1 5.3l-1.6 3.2l-1.1-5z" fill="#ffba00" stroke="#ffba00" stroke-width="0.5"/>
<path d="M324.1 271.3l1.1.3l-2.1 1.6l-1.1 0zM325.2 271.6l1.1 3l-2.1 1.8l-1.1-3.2zM334.9 276.9l1-3.8l-2.1 1.8l-1 3.5zM353.8 272.7l1.2 8.4l-2 2.1l-1.2-7.9zM413.2 286l1.5-2.2l-1.7 3.3l-1.5 2.1zM414.7 283.8l1.3 2.7l-1.7 3.1l-1.3-2.5zM416 286.5l1.6-3.2l-1.8 3.8l-1.5 2.5zM418.9 284.8l1.2 4.2l-1.7 3.5l-1.2-4.3zM425.9 288.5l1.5-1.7l-1.6 3.2l-1.6 2.2z" fill="#ffd300" stroke="#ffd300" stroke-width="0.5"/>
<path d="M326.3 274.6l1.1 1.1l-2.1 2.1l-1.1-1.4zM328.5 276.2l1-2.3l-2.1 1.8l-1 2.6zM329.5 273.9l1 1l-2 1.9l-1.1-1.1zM330.5 274.9l1.1 1l-2 2.1l-1.1-1.2zM331.6 275.9l1-2.4l-2 2.1l-1 2.4zM332.6 273.5l1.2 2.2l-2.1 2.1l-1.1-2.2zM333.8 275.7l1.1 1.2l-2.1 1.5l-1.1-.6zM355 281.1l1.1-5.3l-2 2.3l-1.1 5.1zM420.1 289l1.5-1.5l-1.7 3.7l-1.5 1.3zM421.6 287.5l1.2 3.6l-1.6 3.3l-1.3-3.2zM430.2 288.6l1.1 5.3l-1.6 3.3l-1.1-5.4z" fill="#ffeb00" stroke="#ffeb00" stroke-width="0.5"/>
<path d="M327.4 275.7l1.1.5l-2.1 2.1l-1.1-.5zM422.8 291.1l1.4 1.3l-1.7 3.8l-1.3-1.8zM424.2 292.4l1.7-3.9l-1.7 3.7l-1.7 4zM431.3 293.9l1.6-1.4l-1.6 3.1l-1.6 1.6zM432.9 292.5l1.5-.6l-1.5 3.1l-1.6.6zM434.4 291.9l1.4 2l-1.6 2.8l-1.3-1.7z" fill="#f7ff07" stroke="#f7ff07" stroke-width="0.5"/>
<path d="M377.9 271.5l1.2.6l-1.8 2.9l-1.3-.5zM384.2 273.1l1.4-2.7l-1.9 3.1l-1.3 2.7zM385.6 270.4l1.2 4.2l-1.9 3.1l-1.2-4.2zM388.1 273.2l1.4-2.7l-1.9 3.1l-1.3 2.7zM390.8 271.3l1.2 3.3l-1.9 3.3l-1.2-3.4zM397.3 274.6l1.4-1.3l-1.8 3.5l-1.4 1.5z" fill="#ff6f00" stroke="#ff6f00" stroke-width="0.5"/>
<path d="M389.5 270.5l1.3.8l-1.9 3.2l-1.3-.9z" fill="#ff5800" stroke="#ff5800" stroke-width="0.5"/>
<path d="M435.8 293.9l1.3 2.8l-1.6 3l-1.3-3zM440.1 296.9l1.4.7l-1.6 3.7l-1.4-.7z" fill="#d0ff28" stroke="#d0ff28" stroke-width="0.5"/>
<path d="M437.1 296.7l1.1 5.2l-1.5 2.8l-1.2-5zM438.2 301.9l1.9-5l-1.6 3.7l-1.8 4.1z" fill="#a8ff49" stroke="#a8ff49" stroke-width="0.5"/>
<path d="M441.5 297.6l1 6.7l-1.5 3l-1.1-6z" fill="#80ff70" stroke="#80ff70" stroke-width="0.5"/>
<path d="M442.5 304.3l1.4.6l-1.5 3.7l-1.4-1.3z" fill="#58ff98" stroke="#58ff98" stroke-width="0.5"/>
<path d="M443.9 304.9l1 6.4l-1.5 3.8l-1-6.5z" fill="#30ffc0" stroke="#30ffc0" stroke-width="0.5"/>
<path d="M444.9 311.3l1.3 2.3l-1.5 3.5l-1.3-2z" fill="#10e8e8" stroke="#10e8e8" stroke-width="0.5"/>
<path d="M446.2 313.6l1.3 2.4l-1.5 3.8l-1.3-2.7z" fill="#06d9f6" stroke="#06d9f6" stroke-width="0.5"/>
<path d="M447.5 316l1.1 5.1l-1.5 3.6l-1.1-4.9z" fill="#00b1ff" stroke="#00b1ff" stroke-width="0.5"/>
<path d="M448.6 321.1l1.1 5.2l-1.5 3.6l-1.1-5.2zM449.7 326.3l1.5-.2l-1.4 3.4l-1.6.4z" fill="#0085ff" stroke="#0085ff" stroke-width="0.5"/>
<path d="M451.2 326.1l.8 8.1l-1.5 3.8l-.7-8.5z" fill="#005cfd" stroke="#005cfd" stroke-width="0.5"/>
<path d="M452 334.2l1.3 1.6l-1.4 3.6l-1.4-1.4z" fill="#0034f9" stroke="#0034f9" stroke-width="0.5"/>
<path d="M453.3 335.8l1 6.2l-1.4 3.4l-1-6z" fill="#001be4" stroke="#001be4" stroke-width="0.5"/>
<path d="M454.3 342l1.1 3.7l-1.2 2l-1.3-2.3z" fill="#0012d5" stroke="#0012d5" stroke-width="0.5"/>
<path d="M317.7 268.4l1-.9l-2.2 1.8l-1 .5zM318.7 267.5l1.2 3.3l-2.2 1.6l-1.2-3.1zM334.8 270.4l1.1.2l-2.1 2.9l-1.1-.8zM335.9 270.6l1.1 1l-2.1 1.9l-1.1 0zM337 271.6l1.1-.2l-2.1 2.1l-1.1 0zM338.1 271.4l1.1.5l-2 2.5l-1.2-.9zM339.2 271.9l1.1-.3l-2 2.5l-1.1.3zM340.3 271.6l1.2.7l-2.1 2.8l-1.1-1zM349.5 275.1l1.1-4.1l-2 3l-1.1 3.1zM350.6 271l1.2 4.3l-2 2.6l-1.2-3.9zM362.4 273.4l1.2 3.4l-1.9 2.4l-1.2-2.7zM372.2 279.3l1.3-5.4l-1.9 2.8l-1.3 6zM374.7 275.7l1.3-1.2l-1.9 3l-1.3.7zM378.5 275.8l1.3 2.4l-1.9 2.9l-1.3-3.1zM384.9 277.7l1.4-1.4l-1.9 3.1l-1.4 1.4zM390.1 277.9l1.3 3.2l-1.8 2.4l-1.3-2.3zM392.7 280.3l1.4-1.4l-1.8 3.4l-1.4 1zM394.1 278.9l1.4-.6l-1.9 3.7l-1.3.3zM395.5 278.3l1.4-1.5l-1.9 3.6l-1.4 1.6zM396.9 276.8l1.2 3.6l-1.8 2.8l-1.3-2.8zM399.4 281.1l1.4-1.3l-1.8 3.3l-1.4 1.7zM400.8 279.8l1.4-.6l-1.8 3.8l-1.4.1zM402.2 279.2l1.3 1.6l-1.7 3.1l-1.4-.9z" fill="#ffa100" stroke="#ffa100" stroke-width="0.5"/>
<path d="M319.9 270.8l1 .9l-2.1 1.8l-1.1-1.1zM333.8 274.9l1-4.5l-2.1 2.3l-1 4zM341.5 272.3l1.2 3.9l-2.1 2.2l-1.2-3.3zM343.8 274.2l1.1-.6l-2 2.5l-1.2.1zM346.1 277.1l1.1-4.5l-2.1 2.8l-1.1 3.7zM347.2 272.6l1.1 1.7l-2 2.7l-1.2-1.6zM348.3 274.3l1.2.8l-2 2l-1.2-.1zM358.8 278.5l1.2-4.8l-1.9 1.7l-1.2 5.3zM360 273.7l1.2 4.1l-1.9 3.1l-1.2-5.5zM361.2 277.8l1.2-4.4l-1.9 3.1l-1.2 4.4zM363.6 276.8l1.2.1l-1.9 2.4l-1.2-.1zM364.8 276.9l1.3 1.5l-2 2.8l-1.2-1.9zM366.1 278.4l1.2-2.2l-1.9 2.7l-1.3 2.3zM367.3 276.2l1.2-.1l-1.9 2.9l-1.2-.1zM368.5 276.1l1.2 4.1l-1.9 2.9l-1.2-4.1zM371 277.9l1.2 1.4l-1.9 3.4l-1.3-2zM379.8 278.2l1.2 2.8l-1.9 2.7l-1.2-2.6zM381 281l1.4-4.8l-1.9 3.1l-1.4 4.4zM391.4 281.1l1.3-.8l-1.8 3l-1.3.2zM398.1 280.4l1.3.7l-1.8 3.7l-1.3-1.6zM403.5 280.8l1.2 5.1l-1.8 2.8l-1.1-4.8zM406.2 283.1l1.3 2l-1.7 2.7l-1.4-1z" fill="#ffba00" stroke="#ffba00" stroke-width="0.5"/>
<path d="M320.9 271.7l1.1 1.5l-2.1 1.8l-1.1-1.5zM322 273.2l1.1 0l-2.2 1.7l-1 .1zM342.7 276.2l1.1-2l-2.1 2l-1.1 2.2zM344.9 273.6l1.2 3.5l-2.1 2l-1.1-3zM354.1 278.1l1.2-.4l-2 2.3l-1.1.4zM355.3 277.7l1.2.1l-2 2.6l-1.2-.4zM356.5 277.8l1.2 0l-2 2.3l-1.2.3zM357.7 277.8l1.1.7l-1.9 2.2l-1.2-.6zM369.7 280.2l1.3-2.3l-2 2.8l-1.2 2.4zM404.7 285.9l1.5-2.8l-1.8 3.7l-1.5 1.9zM407.5 285.1l1.3 1.8l-1.7 2.9l-1.3-2zM408.8 286.9l1.5-2.9l-1.7 3.3l-1.5 2.5zM410.3 284l1.2 5.2l-1.7 3.3l-1.2-5.2zM415.8 287.1l1.4 1.1l-1.7 3.4l-1.4-.5zM425.8 290l1.7-3.2l-1.7 3.5l-1.6 2.8zM427.5 286.8l1.1 5l-1.6 3.2l-1.2-4.7z" fill="#ffd300" stroke="#ffd300" stroke-width="0.5"/>
<path d="M323.1 273.2l1.1 3.2l-2.1 1.9l-1.2-3.4zM327.4 275.7l1.1 1.1l-2.1 1.9l-1.1-1.2zM329.6 278l1-2.4l-2.1 2.1l-1 2.4zM330.6 275.6l1.1 2.2l-2.1 2.1l-1.1-2.2zM332.8 278.4l1-3.5l-2.1 1.8l-1 3.2zM351.8 275.3l1.2 7.9l-2 2.1l-1.2-7.4zM353 283.2l1.1-5.1l-1.9 2.3l-1.2 4.9zM411.5 289.2l1.5-2.1l-1.7 3.3l-1.5 2.1zM413 287.1l1.3 2.5l-1.7 3.2l-1.3-2.4zM414.3 289.6l1.5-2.5l-1.7 4l-1.5 1.7zM417.2 288.2l1.2 4.3l-1.7 3.5l-1.2-4.4zM424.2 292.2l1.6-2.2l-1.6 3.1l-1.7 2.8z" fill="#ffeb00" stroke="#ffeb00" stroke-width="0.5"/>
<path d="M324.2 276.4l1.1 1.4l-2.1 2.1l-1.1-1.6zM325.3 277.8l1.1.5l-2.1 2.1l-1.1-.5zM326.4 278.3l1-2.6l-2.1 1.8l-1 2.9zM328.5 276.8l1.1 1.2l-2.1 2.1l-1.1-1.4zM331.7 277.8l1.1.6l-2.1 1.5l-1.1 0zM418.4 292.5l1.5-1.3l-1.7 3.8l-1.5 1zM419.9 291.2l1.3 3.2l-1.7 3.4l-1.3-2.8zM428.6 291.8l1.1 5.4l-1.6 3.4l-1.1-5.6zM431.3 295.6l1.6-.6l-1.6 3.1l-1.6.7z" fill="#f7ff07" stroke="#f7ff07" stroke-width="0.5"/>
<path d="M373.5 273.9l1.2 1.8l-1.9 2.5l-1.2-1.5zM376 274.5l1.3.5l-1.9 2.8l-1.3-.3zM377.3 275l1.2.8l-1.9 2.2l-1.2-.2zM382.4 276.2l1.3-2.7l-1.9 3.2l-1.3 2.6zM383.7 273.5l1.2 4.2l-1.9 3.1l-1.2-4.1zM386.3 276.3l1.3-2.7l-1.8 3.1l-1.4 2.7zM388.9 274.5l1.2 3.4l-1.8 3.3l-1.2-3.6z" fill="#ff8800" stroke="#ff8800" stroke-width="0.5"/>
<path d="M387.6 273.6l1.3.9l-1.8 3.1l-1.3-.9z" fill="#ff6f00" stroke="#ff6f00" stroke-width="0.5"/>
<path d="M421.2 294.4l1.3 1.8l-1.7 3.8l-1.3-2.2zM422.5 296.2l1.7-4l-1.7 3.7l-1.7 4.1zM429.7 297.2l1.6-1.6l-1.6 3.2l-1.6 1.8zM432.9 295l1.3 1.7l-1.5 2.9l-1.4-1.5zM434.2 296.7l1.3 3l-1.5 3.1l-1.3-3.2z" fill="#d0ff28" stroke="#d0ff28" stroke-width="0.5"/>
<path d="M435.5 299.7l1.2 5l-1.6 2.9l-1.1-4.8zM436.7 304.7l1.8-4.1l-1.6 3.8l-1.8 3.2z" fill="#80ff70" stroke="#80ff70" stroke-width="0.5"/>
<path d="M438.5 300.6l1.4.7l-1.5 3.8l-1.5-.7z" fill="#a8ff49" stroke="#a8ff49" stroke-width="0.5"/>
<path d="M439.9 301.3l1.1 6l-1.5 3l-1.1-5.2z" fill="#58ff98" stroke="#58ff98" stroke-width="0.5"/>
<path d="M441 307.3l1.4 1.3l-1.5 3.7l-1.4-2z" fill="#30ffc0" stroke="#30ffc0" stroke-width="0.5"/>
<path d="M442.4 308.6l1 6.5l-1.6 3.8l-.9-6.6z" fill="#10e8e8" stroke="#10e8e8" stroke-width="0.5"/>
<path d="M443.4 315.1l1.3 2l-1.5 3.6l-1.4-1.8z" fill="#06d9f6" stroke="#06d9f6" stroke-width="0.5"/>
<path d="M444.7 317.1l1.3 2.7l-1.5 3.8l-1.3-2.9z" fill="#00c7ff" stroke="#00c7ff" stroke-width="0.5"/>
<path d="M446 319.8l1.1 4.9l-1.5 3.7l-1.1-4.8z" fill="#00b1ff" stroke="#00b1ff" stroke-width="0.5"/>
<path d="M447.1 324.7l1.1 5.2l-1.5 3.7l-1.1-5.2z" fill="#0085ff" stroke="#0085ff" stroke-width="0.5"/>
<path d="M448.2 329.9l1.6-.4l-1.5 3.4l-1.6.7z" fill="#0070fe" stroke="#0070fe" stroke-width="0.5"/>
<path d="M449.8 329.5l.7 8.5l-1.4 3.7l-.8-8.8z" fill="#0048fb" stroke="#0048fb" stroke-width="0.5"/>
<path d="M450.5 338l1.4 1.4l-1.4 3.6l-1.4-1.3z" fill="#0024f2" stroke="#0024f2" stroke-width="0.5"/>
<path d="M451.9 339.4l1 6l-1.4 2.8l-1-5.2z" fill="#001be4" stroke="#001be4" stroke-width="0.5"/>
<path d="M452.9 345.4l1.3 2.3l-1.2 1.9l-1.5-1.4z" fill="#0009c7" stroke="#0009c7" stroke-width="0.5"/>
<path d="M315.5 269.8l1-.5l-2.2 1.7l-1 .2zM371.6 276.7l1.2 1.5l-1.9 2.5l-1.3-1.1zM372.8 278.2l1.3-.7l-1.9 3l-1.3.2zM374.1 277.5l1.3.3l-2 2.9l-1.2-.2zM375.4 277.8l1.2.2l-1.9 2.2l-1.3.5zM380.5 279.3l1.3-2.6l-1.9 3.2l-1.3 2.5zM381.8 276.7l1.2 4.1l-1.8 3.1l-1.3-4zM384.4 279.4l1.4-2.7l-1.9 3.1l-1.4 2.7zM387.1 277.6l1.2 3.6l-1.9 3.4l-1.2-3.8z" fill="#ffa100" stroke="#ffa100" stroke-width="0.5"/>
<path d="M316.5 269.3l1.2 3.1l-2.2 1.6l-1.2-3zM332.7 272.7l1.1.8l-2.1 2.8l-1.1-1.3zM333.8 273.5l1.1 0l-2.1 1.9l-1.1.9zM334.9 273.5l1.1 0l-2 2l-1.2-.1zM336 273.5l1.2.9l-2.1 2.4l-1.1-1.3zM337.2 274.4l1.1-.3l-2.1 2.5l-1.1.2zM338.3 274.1l1.1 1l-2 2.7l-1.2-1.2zM345.1 275.4l1.2 1.6l-2 2.6l-1.2-1.4zM347.5 277.1l1.1-3.1l-2.1 3l-1.1 2.1zM348.6 274l1.2 3.9l-2 2.6l-1.3-3.5zM356.9 280.7l1.2-5.3l-2 1.7l-1.2 5.8zM358.1 275.4l1.2 5.5l-2 3l-1.2-6.8zM360.5 276.5l1.2 2.7l-2 2.3l-1.2-1.9zM365.4 278.9l1.2.1l-2 2.8l-1.2-.2zM370.3 282.7l1.3-6l-2 2.9l-1.3 6.6zM376.6 278l1.3 3.1l-1.9 2.9l-1.3-3.8zM383 280.8l1.4-1.4l-1.9 3.1l-1.3 1.4zM388.3 281.2l1.3 2.3l-1.9 2.4l-1.3-1.3zM390.9 283.3l1.4-1l-1.9 3.4l-1.3.6zM392.3 282.3l1.3-.3l-1.8 3.8l-1.4-.1zM393.6 282l1.4-1.6l-1.8 3.5l-1.4 1.9zM395 280.4l1.3 2.8l-1.8 2.7l-1.3-2zM399 283.1l1.4-.1l-1.8 3.8l-1.4-.4zM400.4 283l1.4.9l-1.8 3.1l-1.4-.2z" fill="#ffba00" stroke="#ffba00" stroke-width="0.5"/>
<path d="M317.7 272.4l1.1 1.1l-2.2 1.8l-1.1-1.3zM318.8 273.5l1.1 1.5l-2.2 1.9l-1.1-1.6zM331.7 276.7l1-4l-2.1 2.3l-1 3.5zM339.4 275.1l1.2 3.3l-2 2.3l-1.2-2.9zM340.6 278.4l1.1-2.2l-2 1.9l-1.1 2.6zM341.7 276.2l1.2-.1l-2.1 2.5l-1.1-.5zM342.9 276.1l1.1 3l-2 2l-1.2-2.5zM344 279.1l1.1-3.7l-2 2.8l-1.1 2.9zM346.3 277l1.2.1l-2.1 2l-1.1.5zM359.3 280.9l1.2-4.4l-2 3.1l-1.2 4.3zM361.7 279.2l1.2.1l-2 2.3l-1.2-.1zM362.9 279.3l1.2 1.9l-2 2.9l-1.2-2.5zM364.1 281.2l1.3-2.3l-2 2.7l-1.3 2.5zM366.6 279l1.2 4.1l-2 2.9l-1.2-4.2zM367.8 283.1l1.2-2.4l-1.9 2.8l-1.3 2.5zM369 280.7l1.3 2l-2 3.5l-1.2-2.7zM377.9 281.1l1.2 2.6l-1.9 2.7l-1.2-2.4zM379.1 283.7l1.4-4.4l-1.9 3.1l-1.4 4zM389.6 283.5l1.3-.2l-1.8 3l-1.4-.4zM396.3 283.2l1.3 1.6l-1.8 3.8l-1.3-2.7zM397.6 284.8l1.4-1.7l-1.8 3.3l-1.4 2.2zM401.8 283.9l1.1 4.8l-1.7 2.8l-1.2-4.5zM404.4 286.8l1.4 1l-1.8 2.6l-1.4 0z" fill="#ffd300" stroke="#ffd300" stroke-width="0.5"/>
<path d="M319.9 275l1-.1l-2.1 1.7l-1.1.3zM320.9 274.9l1.2 3.4l-2.1 1.9l-1.2-3.6zM330.7 279.9l1-3.2l-2.1 1.8l-1 2.9zM352.2 280.4l1.1-.4l-2 2.4l-1.2.4zM353.3 280l1.2.4l-2 2.7l-1.2-.7zM354.5 280.4l1.2-.3l-2 2.2l-1.2.8zM355.7 280.1l1.2.6l-2 2.2l-1.2-.6zM402.9 288.7l1.5-1.9l-1.8 3.6l-1.4 1.1zM405.8 287.8l1.3 2l-1.8 2.8l-1.3-2.2zM407.1 289.8l1.5-2.5l-1.8 3.4l-1.5 1.9zM408.6 287.3l1.2 5.2l-1.8 3.3l-1.2-5.1zM414.1 291.1l1.4.5l-1.7 3.4l-1.5 0zM424.2 293.1l1.6-2.8l-1.7 3.5l-1.6 2.5zM425.8 290.3l1.2 4.7l-1.6 3.2l-1.3-4.4z" fill="#ffeb00" stroke="#ffeb00" stroke-width="0.5"/>
<path d="M322.1 278.3l1.1 1.6l-2.1 2.1l-1.1-1.8zM324.3 280.4l1-2.9l-2.2 1.8l-.9 3.2zM325.3 277.5l1.1 1.2l-2.1 1.9l-1.2-1.3zM326.4 278.7l1.1 1.4l-2.1 2.1l-1.1-1.6zM327.5 280.1l1-2.4l-2.1 2l-1 2.5zM328.5 277.7l1.1 2.2l-2.1 2l-1.1-2.2zM329.6 279.9l1.1 0l-2.1 1.5l-1.1.5zM349.8 277.9l1.2 7.4l-2 2.2l-1.2-7zM351 285.3l1.2-4.9l-2.1 2.4l-1.1 4.7zM409.8 292.5l1.5-2.1l-1.8 3.3l-1.5 2.1zM411.3 290.4l1.3 2.4l-1.7 3.2l-1.4-2.3zM412.6 292.8l1.5-1.7l-1.8 3.9l-1.4 1zM415.5 291.6l1.2 4.4l-1.7 3.6l-1.2-4.6zM422.5 295.9l1.7-2.8l-1.7 3.2l-1.7 3.4z" fill="#f7ff07" stroke="#f7ff07" stroke-width="0.5"/>
<path d="M323.2 279.9l1.1.5l-2.1 2.1l-1.1-.5zM416.7 296l1.5-1l-1.7 3.8l-1.5.8zM418.2 295l1.3 2.8l-1.7 3.4l-1.3-2.4zM427 295l1.1 5.6l-1.6 3.3l-1.1-5.7zM429.7 298.8l1.6-.7l-1.6 3.1l-1.6.7zM431.3 298.1l1.4 1.5l-1.6 2.8l-1.4-1.2z" fill="#d0ff28" stroke="#d0ff28" stroke-width="0.5"/>
<path d="M385.8 276.7l1.3.9l-1.9 3.2l-1.3-1z" fill="#ff8800" stroke="#ff8800" stroke-width="0.5"/>
<path d="M419.5 297.8l1.3 2.2l-1.7 3.9l-1.3-2.7zM420.8 300l1.7-4.1l-1.7 3.8l-1.7 4.2zM428.1 300.6l1.6-1.8l-1.6 3.1l-1.6 2zM432.7 299.6l1.3 3.2l-1.6 3.1l-1.3-3.5z" fill="#a8ff49" stroke="#a8ff49" stroke-width="0.5"/>
<path d="M434 302.8l1.1 4.8l-1.5 2.8l-1.2-4.5zM435.1 307.6l1.8-3.2l-1.6 3.8l-1.7 2.2zM438.4 305.1l1.1 5.2l-1.6 3l-1.1-4.5z" fill="#58ff98" stroke="#58ff98" stroke-width="0.5"/>
<path d="M436.9 304.4l1.5.7l-1.6 3.7l-1.5-.6z" fill="#80ff70" stroke="#80ff70" stroke-width="0.5"/>
<path d="M439.5 310.3l1.4 2l-1.6 3.7l-1.4-2.7z" fill="#1af6d9" stroke="#1af6d9" stroke-width="0.5"/>
<path d="M440.9 312.3l.9 6.6l-1.5 3.8l-1-6.7z" fill="#06d9f6" stroke="#06d9f6" stroke-width="0.5"/>
<path d="M441.8 318.9l1.4 1.8l-1.5 3.6l-1.4-1.6z" fill="#00c7ff" stroke="#00c7ff" stroke-width="0.5"/>
<path d="M443.2 320.7l1.3 2.9l-1.5 3.9l-1.3-3.2z" fill="#00b1ff" stroke="#00b1ff" stroke-width="0.5"/>
<path d="M444.5 323.6l1.1 4.8l-1.5 3.7l-1.1-4.6z" fill="#009bff" stroke="#009bff" stroke-width="0.5"/>
<path d="M445.6 328.4l1.1 5.2l-1.5 3.7l-1.1-5.2z" fill="#0070fe" stroke="#0070fe" stroke-width="0.5"/>
<path d="M446.7 333.6l1.6-.7l-1.4 3.4l-1.7 1z" fill="#005cfd" stroke="#005cfd" stroke-width="0.5"/>
<path d="M448.3 332.9l.8 8.8l-1.5 3.6l-.7-9z" fill="#0034f9" stroke="#0034f9" stroke-width="0.5"/>
<path d="M449.1 341.7l1.4 1.3l-1.4 3.4l-1.5-1.1z" fill="#001be4" stroke="#001be4" stroke-width="0.5"/>
<path d="M450.5 343l1 5.2l-1.3 2.4l-1.1-4.2z" fill="#0012d5" stroke="#0012d5" stroke-width="0.5"/>
<path d="M451.5 348.2l1.5 1.4l-1.3 1.8l-1.5-.8z" fill="#0009c7" stroke="#0009c7" stroke-width="0.5"/>
<path d="M313.3 271.2l1-.2l-2.2 1.8l-1-.2zM314.3 271l1.2 3l-2.2 1.6l-1.2-2.8zM332.8 275.4l1.2.1l-2.2 2.1l-1.1-.3zM369.6 279.6l1.3 1.1l-2 2.5l-1.2-.8zM370.9 280.7l1.3-.2l-2 3l-1.3-.3zM372.2 280.5l1.2.2l-1.9 2.9l-1.3-.1zM373.4 280.7l1.3-.5l-1.9 2.2l-1.3 1.2zM374.7 280.2l1.3 3.8l-2 2.9l-1.2-4.5zM378.6 282.4l1.3-2.5l-1.9 3.2l-1.4 2.5zM379.9 279.9l1.3 4l-2 3.2l-1.2-4zM382.5 282.5l1.4-2.7l-1.9 3.2l-1.4 2.7zM385.2 280.8l1.2 3.8l-1.9 3.4l-1.2-4z" fill="#ffba00" stroke="#ffba00" stroke-width="0.5"/>
<path d="M315.5 274l1.1 1.3l-2.2 1.7l-1.1-1.4zM329.6 278.5l1-3.5l-2.1 2.4l-1 2.9zM330.6 275l1.1 1.3l-2.1 2.9l-1.1-1.8zM331.7 276.3l1.1-.9l-2.1 1.9l-1.1 1.9zM334 275.5l1.1 1.3l-2.1 2.4l-1.2-1.6zM335.1 276.8l1.1-.2l-2.1 2.5l-1.1.1zM336.2 276.6l1.2 1.2l-2.1 2.8l-1.2-1.5zM339.7 278.1l1.1.5l-2.1 2.4l-1.2-.9zM343.1 278.2l1.2 1.4l-2.1 2.7l-1.2-1.3zM344.3 279.6l1.1-.5l-2.1 2.1l-1.1 1.1zM345.4 279.1l1.1-2.1l-2 3.1l-1.2 1.1zM346.5 277l1.3 3.5l-2.1 2.6l-1.2-3zM354.9 282.9l1.2-5.8l-2.1 1.7l-1.2 6.3zM356.1 277.1l1.2 6.8l-2 3.1l-1.3-8.2zM358.5 279.6l1.2 1.9l-2 2.4l-1.2-1.1zM359.7 281.5l1.2.1l-2 2.4l-1.2-.1zM363.4 281.6l1.2.2l-2 2.9l-1.2-.5zM368.3 286.2l1.3-6.6l-1.9 2.8l-1.3 7.2zM377.2 286.4l1.4-4l-2 3.2l-1.3 3.6zM381.2 283.9l1.3-1.4l-1.9 3.2l-1.4 1.4zM386.4 284.6l1.3 1.3l-1.8 2.4l-1.4-.3zM387.7 285.9l1.4.4l-1.9 3l-1.3-1zM389.1 286.3l1.3-.6l-1.9 3.4l-1.3.2zM390.4 285.7l1.4.1l-1.9 3.8l-1.4-.5zM391.8 285.8l1.4-1.9l-1.9 3.6l-1.4 2.1zM393.2 283.9l1.3 2l-1.9 2.7l-1.3-1.1zM394.5 285.9l1.3 2.7l-1.9 3.8l-1.3-3.8zM397.2 286.4l1.4.4l-1.9 3.8l-1.3-.9zM398.6 286.8l1.4.2l-1.9 3l-1.4.6z" fill="#ffd300" stroke="#ffd300" stroke-width="0.5"/>
<path d="M316.6 275.3l1.1 1.6l-2.1 1.8l-1.2-1.7zM317.7 276.9l1.1-.3l-2.2 1.7l-1 .4zM337.4 277.8l1.2 2.9l-2.1 2.2l-1.2-2.3zM338.6 280.7l1.1-2.6l-2.2 2l-1 2.8zM340.8 278.6l1.2 2.5l-2.1 2l-1.2-2.1zM342 281.1l1.1-2.9l-2.1 2.8l-1.1 2.1zM350.1 282.8l1.2-.4l-2 2.5l-1.2.2zM351.3 282.4l1.2.7l-2 2.6l-1.2-.8zM352.5 283.1l1.2-.8l-2.1 2.3l-1.1 1.1zM353.7 282.3l1.2.6l-2.1 2.2l-1.2-.5zM357.3 283.9l1.2-4.3l-2 3.2l-1.2 4.2zM360.9 281.6l1.2 2.5l-1.9 2.8l-1.3-2.9zM362.1 284.1l1.3-2.5l-2 2.6l-1.2 2.7zM364.6 281.8l1.2 4.2l-1.9 2.9l-1.3-4.2zM365.8 286l1.3-2.5l-2 2.8l-1.2 2.6zM367.1 283.5l1.2 2.7l-1.9 3.4l-1.3-3.3zM376 284l1.2 2.4l-1.9 2.8l-1.3-2.3zM395.8 288.6l1.4-2.2l-1.8 3.3l-1.5 2.7zM400 287l1.2 4.5l-1.8 2.8l-1.3-4.3zM402.6 290.4l1.4 0l-1.8 2.7l-1.4 1z" fill="#ffeb00" stroke="#ffeb00" stroke-width="0.5"/>
<path d="M318.8 276.6l1.2 3.6l-2.2 1.9l-1.2-3.8zM323.1 279.3l1.2 1.3l-2.2 2l-1.1-1.5zM325.4 282.2l1-2.5l-2.2 2.2l-1 2.4zM326.4 279.7l1.1 2.2l-2.1 2.1l-1.2-2.1zM328.6 281.4l1-2.9l-2.1 1.8l-1.1 2.6zM347.8 280.5l1.2 7l-2 2.1l-1.3-6.5zM401.2 291.5l1.4-1.1l-1.8 3.7l-1.4.2zM404 290.4l1.3 2.2l-1.8 2.9l-1.3-2.4zM405.3 292.6l1.5-1.9l-1.8 3.5l-1.5 1.3zM406.8 290.7l1.2 5.1l-1.8 3.3l-1.2-4.9zM422.5 296.3l1.6-2.5l-1.7 3.5l-1.6 2.3zM424.1 293.8l1.3 4.4l-1.7 3.3l-1.3-4.2z" fill="#f7ff07" stroke="#f7ff07" stroke-width="0.5"/>
<path d="M320 280.2l1.1 1.8l-2.1 2.1l-1.2-2zM321.1 282l1.1.5l-2.2 2.1l-1-.5zM322.2 282.5l.9-3.2l-2.1 1.8l-1 3.5zM324.3 280.6l1.1 1.6l-2.2 2.1l-1.1-1.7zM327.5 281.9l1.1-.5l-2.2 1.5l-1 1.1zM349 287.5l1.1-4.7l-2 2.3l-1.1 4.5zM408 295.8l1.5-2.1l-1.7 3.3l-1.6 2.1zM409.5 293.7l1.4 2.3l-1.8 3.2l-1.3-2.2zM410.9 296l1.4-1l-1.8 4l-1.4.2zM412.3 295l1.5 0l-1.8 3.5l-1.5.5zM413.8 295l1.2 4.6l-1.8 3.5l-1.2-4.6zM420.8 299.7l1.7-3.4l-1.7 3.3l-1.7 3.8z" fill="#d0ff28" stroke="#d0ff28" stroke-width="0.5"/>
<path d="M383.9 279.8l1.3 1l-1.9 3.2l-1.3-1z" fill="#ffa100" stroke="#ffa100" stroke-width="0.5"/>
<path d="M415 299.6l1.5-.8l-1.8 3.8l-1.5.5zM416.5 298.8l1.3 2.4l-1.7 3.4l-1.4-2zM425.4 298.2l1.1 5.7l-1.7 3.4l-1.1-5.8zM428.1 301.9l1.6-.7l-1.7 3.1l-1.5.8zM429.7 301.2l1.4 1.2l-1.6 2.9l-1.5-1z" fill="#a8ff49" stroke="#a8ff49" stroke-width="0.5"/>
<path d="M417.8 301.2l1.3 2.7l-1.7 3.9l-1.3-3.2zM419.1 303.9l1.7-4.2l-1.7 3.7l-1.7 4.4zM426.5 303.9l1.6-2l-1.6 3.2l-1.7 2.2zM431.1 302.4l1.3 3.5l-1.6 3.1l-1.3-3.7z" fill="#80ff70" stroke="#80ff70" stroke-width="0.5"/>
<path d="M432.4 305.9l1.2 4.5l-1.6 2.9l-1.2-4.3zM435.3 308.2l1.5.6l-1.7 3.8l-1.5-.6z" fill="#58ff98" stroke="#58ff98" stroke-width="0.5"/>
<path d="M433.6 310.4l1.7-2.2l-1.7 3.8l-1.6 1.3zM436.8 308.8l1.1 4.5l-1.5 3l-1.3-3.7z" fill="#30ffc0" stroke="#30ffc0" stroke-width="0.5"/>
<path d="M437.9 313.3l1.4 2.7l-1.6 3.7l-1.3-3.4z" fill="#10e8e8" stroke="#10e8e8" stroke-width="0.5"/>
<path d="M439.3 316l1 6.7l-1.6 3.9l-1-6.9z" fill="#06d9f6" stroke="#06d9f6" stroke-width="0.5"/>
<path d="M440.3 322.7l1.4 1.6l-1.6 3.6l-1.4-1.3z" fill="#00b1ff" stroke="#00b1ff" stroke-width="0.5"/>
<path d="M441.7 324.3l1.3 3.2l-1.6 3.9l-1.3-3.5z" fill="#009bff" stroke="#009bff" stroke-width="0.5"/>
<path d="M443 327.5l1.1 4.6l-1.5 3.7l-1.2-4.4z" fill="#0085ff" stroke="#0085ff" stroke-width="0.5"/>
<path d="M444.1 332.1l1.1 5.2l-1.5 3.6l-1.1-5.1z" fill="#005cfd" stroke="#005cfd" stroke-width="0.5"/>
<path d="M445.2 337.3l1.7-1l-1.5 3.4l-1.7 1.2z" fill="#0048fb" stroke="#0048fb" stroke-width="0.5"/>
<path d="M446.9 336.3l.7 9l-1.5 3.4l-.7-9z" fill="#0024f2" stroke="#0024f2" stroke-width="0.5"/>
<path d="M447.6 345.3l1.5 1.1l-1.5 3.2l-1.5-.9zM449.1 346.4l1.1 4.2l-1.3 2l-1.3-3z" fill="#0012d5" stroke="#0012d5" stroke-width="0.5"/>
<path d="M450.2 350.6l1.5.8l-1.3 1.8l-1.5-.6z" fill="#0009c7" stroke="#0009c7" stroke-width="0.5"/>
<path d="M311.1 272.6l1 .2l-2.2 1.8l-1.1-.6zM382 283l1.3 1l-2 3.2l-1.3-1.1z" fill="#ffba00" stroke="#ffba00" stroke-width="0.5"/>
<path d="M312.1 272.8l1.2 2.8l-2.2 1.6l-1.2-2.6zM329.6 279.2l1.1-1.9l-2.2 2l-1 2.8zM330.7 277.3l1.1.3l-2.1 2l-1.2-.3zM331.8 277.6l1.2 1.6l-2.2 2.5l-1.1-2.1zM343.3 281.2l1.2-1.1l-2.1 3l-1.2.2zM352.8 285.1l1.2-6.3l-2.1 1.7l-1.1 6.8zM367.7 282.4l1.2.8l-2 2.6l-1.2-.5zM368.9 283.2l1.3.3l-2 3l-1.3-.7zM370.2 283.5l1.3.1l-2 2.9l-1.3 0zM371.5 283.6l1.3-1.2l-2 2.2l-1.3 1.9zM372.8 282.4l1.2 4.5l-1.9 2.9l-1.3-5.2zM376.6 285.6l1.4-2.5l-2 3.3l-1.3 2.4zM378 283.1l1.2 4l-1.9 3.1l-1.3-3.8zM380.6 285.7l1.4-2.7l-2 3.1l-1.4 2.8zM383.3 284l1.2 4l-1.9 3.4l-1.3-4.2zM391.3 287.5l1.3 1.1l-1.8 2.8l-1.4-.3z" fill="#ffd300" stroke="#ffd300" stroke-width="0.5"/>
<path d="M313.3 275.6l1.1 1.4l-2.2 1.9l-1.1-1.7zM314.4 277l1.2 1.7l-2.3 1.9l-1.1-1.7zM315.6 278.7l1-.4l-2.2 1.7l-1.1.6zM327.5 280.3l1-2.9l-2.2 2.3l-1 2.5zM328.5 277.4l1.1 1.8l-2.1 2.9l-1.2-2.4zM333 279.2l1.1-.1l-2.1 2.6l-1.2 0zM334.1 279.1l1.2 1.5l-2.1 2.8l-1.2-1.7zM336.5 282.9l1-2.8l-2.1 2l-1.1 3zM337.5 280.1l1.2.9l-2.1 2.5l-1.2-1.4zM338.7 281l1.2 2.1l-2.1 2l-1.2-1.6zM339.9 283.1l1.1-2.1l-2.1 2.9l-1.1 1.2zM341 281l1.2 1.3l-2.1 2.7l-1.2-1.1zM342.2 282.3l1.1-1.1l-2.1 2.1l-1.1 1.7zM344.5 280.1l1.2 3l-2.1 2.6l-1.2-2.6zM354 278.8l1.3 8.2l-2.1 3.1l-1.3-9.6zM356.5 282.8l1.2 1.1l-2.1 2.4l-1.2-.3zM357.7 283.9l1.2.1l-2 2.4l-1.3-.1zM358.9 284l1.3 2.9l-2.1 2.9l-1.2-3.4zM360.2 286.9l1.2-2.7l-2 2.7l-1.3 2.9zM361.4 284.2l1.2.5l-2 2.9l-1.2-.7zM366.4 289.6l1.3-7.2l-2 2.9l-1.3 7.9zM375.3 289.2l1.3-3.6l-1.9 3.2l-1.4 3.1zM379.2 287.1l1.4-1.4l-2 3.2l-1.3 1.3zM384.5 288l1.4.3l-1.9 2.4l-1.4.7zM385.9 288.3l1.3 1l-1.9 3l-1.3-1.6zM387.2 289.3l1.3-.2l-1.9 3.4l-1.3-.2zM388.5 289.1l1.4.5l-1.9 3.8l-1.4-.9zM389.9 289.6l1.4-2.1l-1.9 3.6l-1.4 2.3zM392.6 288.6l1.3 3.8l-1.9 3.8l-1.2-4.8zM395.4 289.7l1.3.9l-1.9 3.8l-1.3-1.4zM396.7 290.6l1.4-.6l-1.8 3.1l-1.5 1.3z" fill="#ffeb00" stroke="#ffeb00" stroke-width="0.5"/>
<path d="M316.6 278.3l1.2 3.8l-2.2 1.9l-1.2-4zM326.4 282.9l1.1-2.6l-2.2 1.9l-1 2.2zM335.3 280.6l1.2 2.3l-2.2 2.2l-1.1-1.7zM348.1 285.1l1.2-.2l-2.1 2.4l-1.2.2zM349.3 284.9l1.2.8l-2.1 2.7l-1.2-1.1zM350.5 285.7l1.1-1.1l-2 2.3l-1.2 1.5zM351.6 284.6l1.2.5l-2 2.2l-1.2-.4zM355.3 287l1.2-4.2l-2.1 3.2l-1.2 4.1zM362.6 284.7l1.3 4.2l-2 2.9l-1.3-4.2zM363.9 288.9l1.2-2.6l-2 2.9l-1.2 2.6zM365.1 286.3l1.3 3.3l-2 3.6l-1.3-4zM374 286.9l1.3 2.3l-2 2.7l-1.2-2.1zM393.9 292.4l1.5-2.7l-1.9 3.3l-1.5 3.2zM398.1 290l1.3 4.3l-1.9 2.8l-1.2-4zM399.4 294.3l1.4-.2l-1.9 3.7l-1.4-.7zM400.8 294.1l1.4-1l-1.8 2.7l-1.5 2zM402.2 293.1l1.3 2.4l-1.8 2.9l-1.3-2.6zM403.5 295.5l1.5-1.3l-1.8 3.4l-1.5.8z" fill="#f7ff07" stroke="#f7ff07" stroke-width="0.5"/>
<path d="M317.8 282.1l1.2 2l-2.2 2.1l-1.2-2.2zM320 284.6l1-3.5l-2.2 1.9l-1 3.7zM321 281.1l1.1 1.5l-2.2 1.9l-1.1-1.5zM322.1 282.6l1.1 1.7l-2.1 2.2l-1.2-2zM323.2 284.3l1-2.4l-2.1 2.1l-1 2.5zM324.2 281.9l1.2 2.1l-2.2 2.2l-1.1-2.2zM325.4 284l1-1.1l-2.1 1.5l-1.1 1.8zM345.7 283.1l1.3 6.5l-2.1 2.2l-1.3-6.1zM347 289.6l1.1-4.5l-2.1 2.4l-1.1 4.3zM405 294.2l1.2 4.9l-1.8 3.3l-1.2-4.8zM407.8 297l1.3 2.2l-1.8 3.2l-1.3-2zM420.8 299.6l1.6-2.3l-1.7 3.5l-1.6 2zM422.4 297.3l1.3 4.2l-1.7 3.3l-1.3-4z" fill="#d0ff28" stroke="#d0ff28" stroke-width="0.5"/>
<path d="M319 284.1l1 .5l-2.2 2.1l-1-.5zM406.2 299.1l1.6-2.1l-1.8 3.4l-1.6 2zM409.1 299.2l1.4-.2l-1.8 4l-1.4-.6zM410.5 299l1.5-.5l-1.8 3.4l-1.5 1.1zM412 298.5l1.2 4.6l-1.7 3.6l-1.3-4.8zM419.1 303.4l1.7-3.8l-1.7 3.2l-1.8 4.4z" fill="#a8ff49" stroke="#a8ff49" stroke-width="0.5"/>
<path d="M413.2 303.1l1.5-.5l-1.8 3.9l-1.4.2zM414.7 302.6l1.4 2l-1.8 3.4l-1.4-1.5zM423.7 301.5l1.1 5.8l-1.7 3.4l-1.1-5.9zM424.8 307.3l1.7-2.2l-1.7 3.3l-1.7 2.3zM426.5 305.1l1.5-.8l-1.6 3.1l-1.6 1zM428 304.3l1.5 1l-1.6 2.8l-1.5-.7zM429.5 305.3l1.3 3.7l-1.7 3.1l-1.2-4z" fill="#80ff70" stroke="#80ff70" stroke-width="0.5"/>
<path d="M416.1 304.6l1.3 3.2l-1.8 3.9l-1.3-3.7zM417.4 307.8l1.7-4.4l-1.8 3.8l-1.7 4.5z" fill="#58ff98" stroke="#58ff98" stroke-width="0.5"/>
<path d="M430.8 309l1.2 4.3l-1.6 2.9l-1.3-4.1zM433.6 312l1.5.6l-1.6 3.7l-1.5-.5z" fill="#30ffc0" stroke="#30ffc0" stroke-width="0.5"/>
<path d="M432 313.3l1.6-1.3l-1.6 3.8l-1.6.4zM435.1 312.6l1.3 3.7l-1.6 3l-1.3-3z" fill="#1af6d9" stroke="#1af6d9" stroke-width="0.5"/>
<path d="M436.4 316.3l1.3 3.4l-1.6 3.8l-1.3-4.2z" fill="#10e8e8" stroke="#10e8e8" stroke-width="0.5"/>
<path d="M437.7 319.7l1 6.9l-1.6 3.9l-1-7z" fill="#00c7ff" stroke="#00c7ff" stroke-width="0.5"/>
<path d="M438.7 326.6l1.4 1.3l-1.5 3.6l-1.5-1z" fill="#009bff" stroke="#009bff" stroke-width="0.5"/>
<path d="M440.1 327.9l1.3 3.5l-1.6 3.9l-1.2-3.8z" fill="#0085ff" stroke="#0085ff" stroke-width="0.5"/>
<path d="M441.4 331.4l1.2 4.4l-1.6 3.7l-1.2-4.2z" fill="#0070fe" stroke="#0070fe" stroke-width="0.5"/>
<path d="M442.6 335.8l1.1 5.1l-1.5 3.7l-1.2-5.1z" fill="#0048fb" stroke="#0048fb" stroke-width="0.5"/>
<path d="M443.7 340.9l1.7-1.2l-1.5 3.5l-1.7 1.4z" fill="#0034f9" stroke="#0034f9" stroke-width="0.5"/>
<path d="M445.4 339.7l.7 9l-1.4 3l-.8-8.5z" fill="#0024f2" stroke="#0024f2" stroke-width="0.5"/>
<path d="M446.1 348.7l1.5.9l-1.4 2.9l-1.5-.8z" fill="#0012d5" stroke="#0012d5" stroke-width="0.5"/>
<path d="M447.6 349.6l1.3 3l-1.3 1.9l-1.4-2zM448.9 352.6l1.5.6l-1.3 1.8l-1.5-.5z" fill="#0009c7" stroke="#0009c7" stroke-width="0.5"/>
<path d="M308.8 274l1.1.6l-2.3 1.8l-1.1-1z" fill="#ffba00" stroke="#ffba00" stroke-width="0.5"/>
<path d="M309.9 274.6l1.2 2.6l-2.3 1.6l-1.2-2.4zM328.5 279.3l1.2.3l-2.2 2.1l-1.2-.5zM365.7 285.3l1.2.5l-2 2.5l-1.3-.1zM369.5 286.5l1.3-1.9l-2 2.3l-1.3 2.6zM380 286.1l1.3 1.1l-1.9 3.3l-1.4-1.2z" fill="#ffd300" stroke="#ffd300" stroke-width="0.5"/>
<path d="M311.1 277.2l1.1 1.7l-2.3 1.8l-1.1-1.9zM325.3 282.2l1-2.5l-2.2 2.4l-1 1.9zM326.3 279.7l1.2 2.4l-2.2 2.9l-1.2-2.9zM327.5 282.1l1-2.8l-2.2 1.9l-1 3.8zM329.7 279.6l1.1 2.1l-2.1 2.5l-1.2-2.5zM330.8 281.7l1.2 0l-2.2 2.5l-1.1 0zM335.4 282.1l1.2 1.4l-2.2 2.5l-1.2-1.9zM341.2 283.3l1.2-.2l-2.1 3.1l-1.2-.9zM350.8 287.3l1.1-6.8l-2.1 1.7l-1.1 7.3zM351.9 280.5l1.3 9.6l-2 3.1l-1.4-11zM355.6 286.3l1.3.1l-2.1 2.4l-1.2-.1zM366.9 285.8l1.3.7l-2 3.1l-1.3-1.3zM368.2 286.5l1.3 0l-2 3l-1.3.1zM370.8 284.6l1.3 5.2l-2 3l-1.3-5.9zM374.7 288.8l1.3-2.4l-2 3.2l-1.3 2.3zM376 286.4l1.3 3.8l-2 3.2l-1.3-3.8zM377.3 290.2l1.3-1.3l-1.9 3.2l-1.4 1.3zM378.6 288.9l1.4-2.8l-2 3.2l-1.3 2.8zM381.3 287.2l1.3 4.2l-2 3.4l-1.2-4.3zM389.4 291.1l1.4.3l-1.9 2.8l-1.4.5z" fill="#ffeb00" stroke="#ffeb00" stroke-width="0.5"/>
<path d="M312.2 278.9l1.1 1.7l-2.2 1.9l-1.2-1.8zM313.3 280.6l1.1-.6l-2.3 1.7l-1 .8zM324.3 284.4l1-2.2l-2.2 1.8l-1.1 1.9zM332 281.7l1.2 1.7l-2.2 2.8l-1.2-2zM333.2 283.4l1.1 1.7l-2.1 2.3l-1.2-1.2zM334.3 285.1l1.1-3l-2.2 2l-1 3.3zM336.6 283.5l1.2 1.6l-2.2 2l-1.2-1.1zM337.8 285.1l1.1-1.2l-2.1 2.9l-1.2.3zM338.9 283.9l1.2 1.1l-2.1 2.8l-1.2-1zM340.1 285l1.1-1.7l-2.1 2l-1.1 2.5zM342.4 283.1l1.2 2.6l-2.1 2.7l-1.2-2.2zM349.6 286.9l1.2.4l-2.1 2.2l-1.2-.3zM354.4 286l1.2.3l-2 2.4l-1.3.5zM356.9 286.4l1.2 3.4l-2 2.8l-1.3-3.8zM358.1 289.8l1.3-2.9l-2.1 2.7l-1.2 3zM359.4 286.9l1.2.7l-2 2.9l-1.3-.9zM364.4 293.2l1.3-7.9l-2.1 2.9l-1.3 8.5zM372.1 289.8l1.2 2.1l-2 2.8l-1.2-1.9zM373.3 291.9l1.4-3.1l-2 3.1l-1.4 2.8zM382.6 291.4l1.4-.7l-2 2.5l-1.4 1.6zM384 290.7l1.3 1.6l-2 3l-1.3-2.1zM385.3 292.3l1.3.2l-1.9 3.4l-1.4-.6zM386.6 292.5l1.4.9l-2 3.9l-1.3-1.4zM388 293.4l1.4-2.3l-1.9 3.6l-1.5 2.6zM390.8 291.4l1.2 4.8l-1.9 3.9l-1.2-5.9zM393.5 293l1.3 1.4l-1.9 3.9l-1.3-1.9zM394.8 294.4l1.5-1.3l-1.9 3.2l-1.5 2zM396.3 293.1l1.2 4l-1.8 2.8l-1.3-3.6z" fill="#f7ff07" stroke="#f7ff07" stroke-width="0.5"/>
<path d="M314.4 280l1.2 4l-2.2 1.9l-1.3-4.2zM318.8 283l1.1 1.5l-2.2 2l-1.2-1.7zM322.1 284l1.1 2.2l-2.2 2.1l-1.2-2.2zM323.2 286.2l1.1-1.8l-2.3 1.5l-1 2.4zM343.6 285.7l1.3 6.1l-2.1 2.2l-1.3-5.6zM346 287.5l1.2-.2l-2.1 2.4l-1.2.2zM347.2 287.3l1.2 1.1l-2.1 2.7l-1.2-1.4zM348.4 288.4l1.2-1.5l-2.1 2.3l-1.2 1.9zM353.2 290.1l1.2-4.1l-2.1 3.2l-1.1 4zM360.6 287.6l1.3 4.2l-2.1 2.9l-1.2-4.2zM361.9 291.8l1.2-2.6l-2 2.9l-1.3 2.6zM363.1 289.2l1.3 4l-2.1 3.5l-1.2-4.6zM392 296.2l1.5-3.2l-1.9 3.4l-1.5 3.7zM397.5 297.1l1.4.7l-1.9 3.8l-1.3-1.7zM398.9 297.8l1.5-2l-1.8 2.7l-1.6 3.1zM400.4 295.8l1.3 2.6l-1.8 2.9l-1.3-2.8zM401.7 298.4l1.5-.8l-1.8 3.5l-1.5.2z" fill="#d0ff28" stroke="#d0ff28" stroke-width="0.5"/>
<path d="M315.6 284l1.2 2.2l-2.3 2.2l-1.1-2.5zM317.8 286.7l1-3.7l-2.3 1.8l-.9 4zM319.9 284.5l1.2 2l-2.3 2.1l-1.1-2.1zM321.1 286.5l1-2.5l-2.3 2.1l-1 2.5zM344.9 291.8l1.1-4.3l-2.1 2.4l-1.1 4.1zM403.2 297.6l1.2 4.8l-1.8 3.3l-1.2-4.6zM404.4 302.4l1.6-2l-1.9 3.3l-1.5 2zM406 300.4l1.3 2l-1.8 3.3l-1.4-2zM419.1 302.8l1.6-2l-1.8 3.6l-1.6 1.7zM420.7 300.8l1.3 4l-1.7 3.3l-1.4-3.7z" fill="#a8ff49" stroke="#a8ff49" stroke-width="0.5"/>
<path d="M316.8 286.2l1 .5l-2.2 2.1l-1.1-.4zM407.3 302.4l1.4.6l-1.8 4l-1.4-1.3zM408.7 303l1.5-1.1l-1.8 3.5l-1.5 1.6zM410.2 301.9l1.3 4.8l-1.8 3.6l-1.3-4.9zM417.3 307.2l1.8-4.4l-1.8 3.3l-1.7 4.9zM426.4 307.4l1.5.7l-1.7 2.9l-1.5-.4z" fill="#80ff70" stroke="#80ff70" stroke-width="0.5"/>
<path d="M411.5 306.7l1.4-.2l-1.8 3.9l-1.4-.1zM412.9 306.5l1.4 1.5l-1.7 3.5l-1.5-1.1zM422 304.8l1.1 5.9l-1.7 3.4l-1.1-6zM423.1 310.7l1.7-2.3l-1.7 3.2l-1.7 2.5zM424.8 308.4l1.6-1l-1.7 3.2l-1.6 1zM427.9 308.1l1.2 4l-1.6 3.1l-1.3-4.2z" fill="#58ff98" stroke="#58ff98" stroke-width="0.5"/>
<path d="M414.3 308l1.3 3.7l-1.8 4l-1.2-4.2zM415.6 311.7l1.7-4.5l-1.7 3.8l-1.8 4.7z" fill="#30ffc0" stroke="#30ffc0" stroke-width="0.5"/>
<path d="M429.1 312.1l1.3 4.1l-1.6 2.9l-1.3-3.9zM430.4 316.2l1.6-.4l-1.7 3.9l-1.5-.6zM432 315.8l1.5.5l-1.7 3.9l-1.5-.5z" fill="#1af6d9" stroke="#1af6d9" stroke-width="0.5"/>
<path d="M433.5 316.3l1.3 3l-1.6 3.1l-1.4-2.2z" fill="#10e8e8" stroke="#10e8e8" stroke-width="0.5"/>
<path d="M434.8 319.3l1.3 4.2l-1.7 3.8l-1.2-4.9z" fill="#06d9f6" stroke="#06d9f6" stroke-width="0.5"/>
<path d="M436.1 323.5l1 7l-1.7 3.9l-1-7.1z" fill="#00b1ff" stroke="#00b1ff" stroke-width="0.5"/>
<path d="M437.1 330.5l1.5 1l-1.6 3.6l-1.6-.7z" fill="#0085ff" stroke="#0085ff" stroke-width="0.5"/>
<path d="M438.6 331.5l1.2 3.8l-1.6 3.9l-1.2-4.1z" fill="#0070fe" stroke="#0070fe" stroke-width="0.5"/>
<path d="M439.8 335.3l1.2 4.2l-1.5 3.7l-1.3-4z" fill="#005cfd" stroke="#005cfd" stroke-width="0.5"/>
<path d="M441 339.5l1.2 5.1l-1.6 3.6l-1.1-5z" fill="#0034f9" stroke="#0034f9" stroke-width="0.5"/>
<path d="M442.2 344.6l1.7-1.4l-1.6 3.4l-1.7 1.6z" fill="#0024f2" stroke="#0024f2" stroke-width="0.5"/>
<path d="M443.9 343.2l.8 8.5l-1.5 2.7l-.9-7.8z" fill="#001be4" stroke="#001be4" stroke-width="0.5"/>
<path d="M444.7 351.7l1.5.8l-1.4 2.5l-1.6-.6zM446.2 352.5l1.4 2l-1.4 1.9l-1.4-1.4zM447.6 354.5l1.5.5l-1.3 1.8l-1.6-.4z" fill="#0009c7" stroke="#0009c7" stroke-width="0.5"/>
<path d="M306.5 275.4l1.1 1l-2.3 1.8l-1.2-1.3zM307.6 276.4l1.2 2.4l-2.4 1.6l-1.1-2.2z" fill="#ffd300" stroke="#ffd300" stroke-width="0.5"/>
<path d="M308.8 278.8l1.1 1.9l-2.3 1.8l-1.2-2.1zM326.3 281.2l1.2.5l-2.3 2.1l-1.1-.7zM327.5 281.7l1.2 2.5l-2.3 2.5l-1.2-2.9zM348.7 289.5l1.1-7.3l-2.1 1.7l-1.1 7.8zM363.6 288.2l1.3.1l-2.1 2.6l-1.2.2zM364.9 288.3l1.3 1.3l-2.1 3.1l-1.3-1.8zM367.5 289.5l1.3-2.6l-2 2.2l-1.4 3.3zM368.8 286.9l1.3 5.9l-2.1 3l-1.2-6.7zM376.7 292.1l1.3-2.8l-2 3.2l-1.3 2.8zM378 289.3l1.4 1.2l-2 3.2l-1.4-1.2z" fill="#ffeb00" stroke="#ffeb00" stroke-width="0.5"/>
<path d="M309.9 280.7l1.2 1.8l-2.3 1.9l-1.2-1.9zM311.1 282.5l1-.8l-2.3 1.8l-1 .9zM323.1 284l1-1.9l-2.2 2.4l-1.1 1.4zM324.1 282.1l1.2 2.9l-2.2 2.9l-1.2-3.4zM325.3 285l1-3.8l-2.2 1.9l-1 4.8zM328.7 284.2l1.1 0l-2.2 2.6l-1.2-.1zM329.8 284.2l1.2 2l-2.2 2.8l-1.2-2.2zM332.2 287.4l1-3.3l-2.2 1.9l-1 3.7zM333.2 284.1l1.2 1.9l-2.2 2.6l-1.2-2.6zM338 287.8l1.1-2.5l-2.2 2.1l-1.1 3.1zM339.1 285.3l1.2.9l-2.2 3.2l-1.2-2zM349.8 282.2l1.4 11l-2.1 3.2l-1.4-12.5zM352.3 289.2l1.3-.5l-2.1 2.5l-1.3 1.2zM353.6 288.7l1.2.1l-2.1 2.4l-1.2 0zM357.3 289.6l1.3.9l-2.1 2.9l-1.3-1zM366.2 289.6l1.3-.1l-2.1 2.9l-1.3.3zM372.7 291.9l1.3-2.3l-2 3.3l-1.3 2.3zM374 289.6l1.3 3.8l-2 3.2l-1.3-3.7zM375.3 293.4l1.4-1.3l-2 3.2l-1.4 1.3zM379.4 290.5l1.2 4.3l-2 3.4l-1.2-4.5zM380.6 294.8l1.4-1.6l-1.9 2.4l-1.5 2.6zM382 293.2l1.3 2.1l-1.9 3.1l-1.3-2.8zM387.5 294.7l1.4-.5l-2 2.8l-1.4 1.4z" fill="#f7ff07" stroke="#f7ff07" stroke-width="0.5"/>
<path d="M312.1 281.7l1.3 4.2l-2.3 2l-1.3-4.4zM316.5 284.8l1.2 1.7l-2.3 2l-1.2-1.8zM322 285.9l1.1-1.9l-2.3 1.9l-1 1.5zM331 286.2l1.2 1.2l-2.2 2.3l-1.2-.7zM334.4 286l1.2 1.1l-2.2 2l-1.2-.5zM335.6 287.1l1.2-.3l-2.2 2.9l-1.2-.6zM336.8 286.8l1.2 1l-2.2 2.7l-1.2-.8zM340.3 286.2l1.2 2.2l-2.2 2.6l-1.2-1.6zM343.9 289.9l1.2-.2l-2.2 2.5l-1.2.1zM345.1 289.7l1.2 1.4l-2.1 2.7l-1.3-1.6zM346.3 291.1l1.2-1.9l-2.2 2.3l-1.1 2.3zM347.5 289.2l1.2.3l-2.1 2.2l-1.3-.2zM354.8 288.8l1.3 3.8l-2.1 2.9l-1.3-4.3zM356.1 292.6l1.2-3l-2.1 2.8l-1.2 3.1zM358.6 290.5l1.2 4.2l-2.1 3l-1.2-4.3zM362.3 296.7l1.3-8.5l-2 2.9l-1.3 9.1zM370.1 292.8l1.2 1.9l-2 2.8l-1.3-1.7zM371.3 294.7l1.4-2.8l-2 3.3l-1.4 2.3zM383.3 295.3l1.4.6l-2 3.5l-1.3-1zM384.7 295.9l1.3 1.4l-1.9 3.8l-1.4-1.7zM386 297.3l1.5-2.6l-2 3.7l-1.4 2.7zM388.9 294.2l1.2 5.9l-2 3.9l-1.2-7zM391.6 296.4l1.3 1.9l-1.9 3.8l-1.3-2.3zM392.9 298.3l1.5-2l-1.9 3.1l-1.5 2.7zM394.4 296.3l1.3 3.6l-1.9 2.9l-1.3-3.4z" fill="#d0ff28" stroke="#d0ff28" stroke-width="0.5"/>
<path d="M313.4 285.9l1.1 2.5l-2.2 2.2l-1.2-2.7zM315.6 288.8l.9-4l-2.3 1.9l-.8 4.3zM317.7 286.5l1.1 2.1l-2.2 2.2l-1.2-2.3zM318.8 288.6l1-2.5l-2.2 2.2l-1 2.5zM319.8 286.1l1.2 2.2l-2.2 2.1l-1.2-2.1zM321 288.3l1-2.4l-2.2 1.5l-1 3zM341.5 288.4l1.3 5.6l-2.2 2.2l-1.3-5.2zM342.8 294l1.1-4.1l-2.2 2.4l-1.1 3.9zM351.2 293.2l1.1-4l-2.1 3.2l-1.1 4zM359.8 294.7l1.3-2.6l-2.1 2.9l-1.3 2.7zM361.1 292.1l1.2 4.6l-2 3.5l-1.3-5.2zM390.1 300.1l1.5-3.7l-1.9 3.4l-1.6 4.2zM395.7 299.9l1.3 1.7l-1.9 3.7l-1.3-2.5zM397 301.6l1.6-3.1l-1.9 2.7l-1.6 4.1zM398.6 298.5l1.3 2.8l-1.9 3l-1.3-3.1zM399.9 301.3l1.5-.2l-1.9 3.4l-1.5-.2zM417.3 306.1l1.6-1.7l-1.7 3.6l-1.6 1.3z" fill="#a8ff49" stroke="#a8ff49" stroke-width="0.5"/>
<path d="M314.5 288.4l1.1.4l-2.2 2.2l-1.1-.4zM401.4 301.1l1.2 4.6l-1.9 3.4l-1.2-4.6zM402.6 305.7l1.5-2l-1.8 3.4l-1.6 2zM404.1 303.7l1.4 2l-1.8 3.2l-1.4-1.8zM418.9 304.4l1.4 3.7l-1.8 3.3l-1.3-3.4z" fill="#80ff70" stroke="#80ff70" stroke-width="0.5"/>
<path d="M405.5 305.7l1.4 1.3l-1.9 4.1l-1.3-2.2zM406.9 307l1.5-1.6l-1.8 3.6l-1.6 2.1zM408.4 305.4l1.3 4.9l-1.9 3.6l-1.2-4.9zM415.6 311l1.7-4.9l-1.7 3.2l-1.9 5.6zM423.1 311.6l1.6-1l-1.7 3.1l-1.6 1.1zM424.7 310.6l1.5.4l-1.7 2.9l-1.5-.2z" fill="#58ff98" stroke="#58ff98" stroke-width="0.5"/>
<path d="M409.7 310.3l1.4.1l-1.8 3.9l-1.5-.4zM411.1 310.4l1.5 1.1l-1.8 3.4l-1.5-.6zM420.3 308.1l1.1 6l-1.7 3.4l-1.2-6.1zM421.4 314.1l1.7-2.5l-1.7 3.2l-1.7 2.7zM426.2 311l1.3 4.2l-1.7 3.1l-1.3-4.4z" fill="#30ffc0" stroke="#30ffc0" stroke-width="0.5"/>
<path d="M412.6 311.5l1.2 4.2l-1.8 3.9l-1.2-4.7zM413.8 315.7l1.8-4.7l-1.9 3.9l-1.7 4.7zM427.5 315.2l1.3 3.9l-1.7 2.9l-1.3-3.7z" fill="#1af6d9" stroke="#1af6d9" stroke-width="0.5"/>
<path d="M428.8 319.1l1.5.6l-1.7 3.8l-1.5-1.5zM430.3 319.7l1.5.5l-1.7 3.8l-1.5-.5z" fill="#10e8e8" stroke="#10e8e8" stroke-width="0.5"/>
<path d="M431.8 320.2l1.4 2.2l-1.6 3l-1.5-1.4z" fill="#06d9f6" stroke="#06d9f6" stroke-width="0.5"/>
<path d="M433.2 322.4l1.2 4.9l-1.6 3.8l-1.2-5.7z" fill="#00c7ff" stroke="#00c7ff" stroke-width="0.5"/>
<path d="M434.4 327.3l1 7.1l-1.6 3.9l-1-7.2z" fill="#009bff" stroke="#009bff" stroke-width="0.5"/>
<path d="M435.4 334.4l1.6.7l-1.7 3.7l-1.5-.5z" fill="#0070fe" stroke="#0070fe" stroke-width="0.5"/>
<path d="M437 335.1l1.2 4.1l-1.6 3.9l-1.3-4.3z" fill="#005cfd" stroke="#005cfd" stroke-width="0.5"/>
<path d="M438.2 339.2l1.3 4l-1.6 3.7l-1.3-3.8z" fill="#0048fb" stroke="#0048fb" stroke-width="0.5"/>
<path d="M439.5 343.2l1.1 5l-1.5 3.5l-1.2-4.8zM440.6 348.2l1.7-1.6l-1.5 3.4l-1.7 1.7z" fill="#0024f2" stroke="#0024f2" stroke-width="0.5"/>
<path d="M442.3 346.6l.9 7.8l-1.4 2.4l-1-6.8z" fill="#001be4" stroke="#001be4" stroke-width="0.5"/>
<path d="M443.2 354.4l1.6.6l-1.4 2.3l-1.6-.5zM444.8 355l1.4 1.4l-1.3 1.9l-1.5-1zM446.2 356.4l1.6.4l-1.3 1.9l-1.6-.4z" fill="#0009c7" stroke="#0009c7" stroke-width="0.5"/>
<path d="M304.1 276.9l1.2 1.3l-2.4 1.8l-1.2-1.6z" fill="#ffd300" stroke="#ffd300" stroke-width="0.5"/>
<path d="M305.3 278.2l1.1 2.2l-2.3 1.6l-1.2-2zM324.1 283.1l1.1.7l-2.3 2.1l-1.1-.8z" fill="#ffeb00" stroke="#ffeb00" stroke-width="0.5"/>
<path d="M306.4 280.4l1.2 2.1l-2.3 1.9l-1.2-2.4zM320.8 285.9l1.1-1.4l-2.3 2.4l-1.1.9zM323.1 287.9l1-4.8l-2.3 2l-.9 5.7zM325.2 283.8l1.2 2.9l-2.2 2.5l-1.3-3.3zM346.6 291.7l1.1-7.8l-2.2 1.7l-1.1 8.4zM361.6 291.1l1.2-.2l-2 2.6l-1.3.5zM362.8 290.9l1.3 1.8l-2.1 3.1l-1.2-2.3zM364.1 292.7l1.3-.3l-2 3l-1.4.4zM365.4 292.4l1.4-3.3l-2.1 2.3l-1.3 4zM366.8 289.1l1.2 6.7l-2 2.9l-1.3-7.3zM374.7 295.3l1.3-2.8l-2 3.2l-1.4 2.8zM376 292.5l1.4 1.2l-2.1 3.3l-1.3-1.3z" fill="#f7ff07" stroke="#f7ff07" stroke-width="0.5"/>
<path d="M307.6 282.5l1.2 1.9l-2.4 2l-1.1-2zM308.8 284.4l1-.9l-2.4 1.7l-1 1.2zM309.8 283.5l1.3 4.4l-2.4 1.9l-1.3-4.6zM319.8 287.4l1-1.5l-2.3 1.9l-1.1 1.2zM321.9 284.5l1.2 3.4l-2.2 2.9l-1.3-3.9zM326.4 286.7l1.2.1l-2.3 2.5l-1.1-.1zM327.6 286.8l1.2 2.2l-2.2 2.8l-1.3-2.5zM330 289.7l1-3.7l-2.2 2l-1.1 3.9zM331 286l1.2 2.6l-2.2 2.5l-1.2-3.1zM332.2 288.6l1.2.5l-2.2 2l-1.2 0zM333.4 289.1l1.2.6l-2.2 2.9l-1.2-1.5zM335.8 290.5l1.1-3.1l-2.2 2.1l-1.1 3.8zM336.9 287.4l1.2 2l-2.2 3.1l-1.2-3zM338.1 289.4l1.2 1.6l-2.2 2.7l-1.2-1.2zM345.3 291.5l1.3.2l-2.2 2.3l-1.2-.2zM347.7 283.9l1.4 12.5l-2.2 3.1l-1.4-13.9zM350.2 292.4l1.3-1.2l-2.2 2.4l-1.2 2.1zM351.5 291.2l1.2 0l-2.1 2.5l-1.3-.1zM355.2 292.4l1.3 1l-2.1 3l-1.3-1.3zM370.7 295.2l1.3-2.3l-2 3.3l-1.4 2.2zM372 292.9l1.3 3.7l-2 3.2l-1.3-3.6zM373.3 296.6l1.4-1.3l-2.1 3.2l-1.3 1.3zM377.4 293.7l1.2 4.5l-2 3.5l-1.3-4.7zM378.6 298.2l1.5-2.6l-2 2.5l-1.5 3.6zM380.1 295.6l1.3 2.8l-2 3.1l-1.3-3.4zM385.5 298.4l1.4-1.4l-1.9 2.8l-1.5 2.2z" fill="#d0ff28" stroke="#d0ff28" stroke-width="0.5"/>
<path d="M311.1 287.9l1.2 2.7l-2.3 2.1l-1.3-2.9zM313.4 291l.8-4.3l-2.3 1.9l-.8 4.6zM315.4 288.5l1.2 2.3l-2.3 2.2l-1.2-2.5zM316.6 290.8l1-2.5l-2.3 2.1l-1 2.6zM317.6 288.3l1.2 2.1l-2.3 2.2l-1.2-2.2zM339.3 291l1.3 5.2l-2.2 2.2l-1.3-4.7zM340.6 296.2l1.1-3.9l-2.1 2.4l-1.2 3.7zM357.7 297.7l1.3-2.7l-2.1 2.9l-1.3 2.8zM359 295l1.3 5.2l-2.1 3.6l-1.3-5.9zM388.1 304l1.6-4.2l-2 3.4l-1.5 4.7zM393.8 302.8l1.3 2.5l-1.9 3.8l-1.3-3.4zM395.1 305.3l1.6-4.1l-1.9 2.7l-1.6 5.2zM398 304.3l1.5.2l-1.9 3.6l-1.5-.8zM415.6 309.3l1.6-1.3l-1.9 3.6l-1.5 1.1z" fill="#80ff70" stroke="#80ff70" stroke-width="0.5"/>
<path d="M312.3 290.6l1.1.4l-2.3 2.2l-1.1-.5zM399.5 304.5l1.2 4.6l-1.8 3.3l-1.3-4.3zM400.7 309.1l1.6-2l-1.9 3.5l-1.5 1.8zM402.3 307.1l1.4 1.8l-1.9 3.3l-1.4-1.6zM417.2 308l1.3 3.4l-1.8 3.3l-1.4-3.1z" fill="#58ff98" stroke="#58ff98" stroke-width="0.5"/>
<path d="M314.2 286.7l1.2 1.8l-2.3 2l-1.2-1.9zM318.8 290.4l1-3l-2.4 1.6l-.9 3.6zM328.8 289l1.2.7l-2.3 2.2l-1.1-.1zM334.6 289.7l1.2.8l-2.2 2.8l-1.2-.7zM341.7 292.3l1.2-.1l-2.1 2.5l-1.2 0zM342.9 292.2l1.3 1.6l-2.2 2.7l-1.2-1.8zM344.2 293.8l1.1-2.3l-2.1 2.3l-1.2 2.7zM349.1 296.4l1.1-4l-2.1 3.3l-1.2 3.8zM352.7 291.2l1.3 4.3l-2.1 3l-1.3-4.8zM354 295.5l1.2-3.1l-2.1 2.7l-1.2 3.4zM356.5 293.4l1.2 4.3l-2.1 3l-1.2-4.3zM360.3 300.2l1.3-9.1l-2.1 2.9l-1.3 9.8zM368 295.8l1.3 1.7l-2 2.8l-1.3-1.6zM369.3 297.5l1.4-2.3l-2.1 3.2l-1.3 1.9zM381.4 298.4l1.3 1l-2 3.5l-1.3-1.4zM382.7 299.4l1.4 1.7l-2 3.9l-1.4-2.1zM384.1 301.1l1.4-2.7l-2 3.6l-1.4 3zM386.9 297l1.2 7l-1.9 3.9l-1.2-8.1zM389.7 299.8l1.3 2.3l-2 4l-1.3-2.9zM391 302.1l1.5-2.7l-2 3.2l-1.5 3.5zM392.5 299.4l1.3 3.4l-1.9 2.9l-1.4-3.1zM396.7 301.2l1.3 3.1l-1.9 3l-1.3-3.4z" fill="#a8ff49" stroke="#a8ff49" stroke-width="0.5"/>
<path d="M403.7 308.9l1.3 2.2l-1.9 4l-1.3-2.9zM405 311.1l1.6-2.1l-1.9 3.5l-1.6 2.6zM406.6 309l1.2 4.9l-1.8 3.7l-1.3-5.1zM413.7 314.9l1.9-5.6l-1.8 3.4l-1.9 6.1zM418.5 311.4l1.2 6.1l-1.8 3.5l-1.2-6.3zM421.4 314.8l1.6-1.1l-1.8 3.2l-1.6 1.2zM423 313.7l1.5.2l-1.7 2.9l-1.6.1zM424.5 313.9l1.3 4.4l-1.7 3.2l-1.3-4.7z" fill="#30ffc0" stroke="#30ffc0" stroke-width="0.5"/>
<path d="M407.8 313.9l1.5.4l-1.9 3.9l-1.4-.6zM409.3 314.3l1.5.6l-1.9 3.5l-1.5-.2zM419.7 317.5l1.7-2.7l-1.8 3.3l-1.7 2.9z" fill="#1af6d9" stroke="#1af6d9" stroke-width="0.5"/>
<path d="M410.8 314.9l1.2 4.7l-1.8 4l-1.3-5.2zM412 319.6l1.7-4.7l-1.8 3.9l-1.7 4.8zM425.8 318.3l1.3 3.7l-1.7 2.9l-1.3-3.4z" fill="#10e8e8" stroke="#10e8e8" stroke-width="0.5"/>
<path d="M427.1 322l1.5 1.5l-1.8 3.9l-1.4-2.5zM428.6 323.5l1.5.5l-1.7 3.9l-1.6-.5zM430.1 324l1.5 1.4l-1.7 3.1l-1.5-.6z" fill="#06d9f6" stroke="#06d9f6" stroke-width="0.5"/>
<path d="M431.6 325.4l1.2 5.7l-1.7 3.8l-1.2-6.4z" fill="#00b1ff" stroke="#00b1ff" stroke-width="0.5"/>
<path d="M432.8 331.1l1 7.2l-1.7 4l-1-7.4z" fill="#0085ff" stroke="#0085ff" stroke-width="0.5"/>
<path d="M433.8 338.3l1.5.5l-1.6 3.7l-1.6-.2z" fill="#005cfd" stroke="#005cfd" stroke-width="0.5"/>
<path d="M435.3 338.8l1.3 4.3l-1.7 4l-1.2-4.6z" fill="#0048fb" stroke="#0048fb" stroke-width="0.5"/>
<path d="M436.6 343.1l1.3 3.8l-1.7 3.7l-1.3-3.5z" fill="#0034f9" stroke="#0034f9" stroke-width="0.5"/>
<path d="M437.9 346.9l1.2 4.8l-1.6 3.3l-1.3-4.4zM439.1 351.7l1.7-1.7l-1.6 3.3l-1.7 1.7z" fill="#001be4" stroke="#001be4" stroke-width="0.5"/>
<path d="M440.8 350l1 6.8l-1.4 2.2l-1.2-5.7z" fill="#0012d5" stroke="#0012d5" stroke-width="0.5"/>
<path d="M441.8 356.8l1.6.5l-1.5 2.2l-1.5-.5zM443.4 357.3l1.5 1l-1.4 1.8l-1.6-.6zM444.9 358.3l1.6.4l-1.4 1.9l-1.6-.5z" fill="#0009c7" stroke="#0009c7" stroke-width="0.5"/>
<path d="M301.7 278.4l1.2 1.6l-2.4 1.9l-1.2-2z" fill="#ffd300" stroke="#ffd300" stroke-width="0.5"/>
<path d="M302.9 280l1.2 2l-2.4 1.7l-1.2-1.8z" fill="#ffeb00" stroke="#ffeb00" stroke-width="0.5"/>
<path d="M304.1 282l1.2 2.4l-2.4 1.8l-1.2-2.5zM321.8 285.1l1.1.8l-2.3 2.2l-1.1-1zM344.4 294l1.1-8.4l-2.2 1.8l-1.1 8.9zM363.4 295.4l1.3-4l-2.1 2.3l-1.4 4.7z" fill="#f7ff07" stroke="#f7ff07" stroke-width="0.5"/>
<path d="M305.3 284.4l1.1 2l-2.3 1.9l-1.2-2.1zM306.4 286.4l1-1.2l-2.3 1.8l-1 1.3zM317.4 289l1.1-1.2l-2.3 1.9l-1.1.8zM318.5 287.8l1.1-.9l-2.3 2.5l-1.1.3zM320.9 290.8l.9-5.7l-2.3 2l-.9 6.7zM322.9 285.9l1.3 3.3l-2.3 2.5l-1.3-3.6zM324.2 289.2l1.1.1l-2.2 2.7l-1.2-.3zM327.7 291.9l1.1-3.9l-2.3 2.1l-1 4.2zM328.8 288l1.2 3.1l-2.2 2.5l-1.3-3.5zM334.7 289.5l1.2 3l-2.2 3.2l-1.3-4.1zM345.5 285.6l1.4 13.9l-2.1 3.2l-1.5-15.3zM349.3 293.6l1.3.1l-2.2 2.4l-1.3 0zM359.5 294l1.3-.5l-2.2 2.6l-1.3.9zM360.8 293.5l1.2 2.3l-2.1 3.1l-1.3-2.8zM362 295.8l1.4-.4l-2.2 3l-1.3.5zM364.7 291.4l1.3 7.3l-2.1 3.1l-1.3-8.1zM372.6 298.5l1.4-2.8l-2.1 3.2l-1.4 2.9zM374 295.7l1.3 1.3l-2 3.3l-1.4-1.4z" fill="#d0ff28" stroke="#d0ff28" stroke-width="0.5"/>
<path d="M307.4 285.2l1.3 4.6l-2.3 2l-1.3-4.8zM311.9 288.6l1.2 1.9l-2.3 2l-1.2-2zM319.6 286.9l1.3 3.9l-2.3 3l-1.3-4.4zM325.3 289.3l1.3 2.5l-2.3 2.9l-1.2-2.7zM326.6 291.8l1.1.1l-2.2 2.4l-1.2.4zM330 291.1l1.2 0l-2.3 2.1l-1.1.4zM331.2 291.1l1.2 1.5l-2.2 2.9l-1.3-2.3zM332.4 292.6l1.2.7l-2.3 2.7l-1.1-.5zM333.6 293.3l1.1-3.8l-2.3 2.1l-1.1 4.4zM335.9 292.5l1.2 1.2l-2.2 2.7l-1.2-.7zM339.6 294.7l1.2 0l-2.3 2.5l-1.2-.1zM343.2 293.8l1.2.2l-2.2 2.3l-1.2-.1zM348.1 295.7l1.2-2.1l-2.2 2.5l-1.2 2.9zM350.6 293.7l1.3 4.8l-2.2 2.9l-1.3-5.3zM351.9 298.5l1.2-3.4l-2.2 2.8l-1.2 3.5zM353.1 295.1l1.3 1.3l-2.2 3l-1.3-1.5zM367.3 300.3l1.3-1.9l-2.1 3.3l-1.3 1.4zM368.6 298.4l1.4-2.2l-2.1 3.4l-1.4 2.1zM370 296.2l1.3 3.6l-2.1 3.3l-1.3-3.5zM371.3 299.8l1.3-1.3l-2.1 3.3l-1.3 1.3zM375.3 297l1.3 4.7l-2 3.5l-1.3-4.9zM376.6 301.7l1.5-3.6l-2.1 2.5l-1.4 4.6zM378.1 298.1l1.3 3.4l-2.1 3.1l-1.3-4zM383.5 302l1.5-2.2l-2 2.9l-1.5 3z" fill="#a8ff49" stroke="#a8ff49" stroke-width="0.5"/>
<path d="M308.7 289.8l1.3 2.9l-2.4 2.3l-1.2-3.2zM311.1 293.2l.8-4.6l-2.3 1.9l-.9 4.9zM313.1 290.5l1.2 2.5l-2.3 2.2l-1.2-2.7zM314.3 293l1-2.6l-2.3 2.2l-1 2.6zM315.3 290.4l1.2 2.2l-2.3 2.2l-1.2-2.2zM316.5 292.6l.9-3.6l-2.3 1.5l-.9 4.3zM337.1 293.7l1.3 4.7l-2.2 2.3l-1.3-4.3zM338.4 298.4l1.2-3.7l-2.3 2.4l-1.1 3.6zM340.8 294.7l1.2 1.8l-2.2 2.8l-1.3-2.1zM342 296.5l1.2-2.7l-2.2 2.4l-1.2 3.1zM346.9 299.5l1.2-3.8l-2.2 3.3l-1.1 3.7zM354.4 296.4l1.2 4.3l-2.1 3l-1.3-4.3zM355.6 300.7l1.3-2.8l-2.1 2.9l-1.3 2.9zM358.2 303.8l1.3-9.8l-2.2 3l-1.2 10.4zM366 298.7l1.3 1.6l-2.1 2.8l-1.3-1.3zM379.4 301.5l1.3 1.4l-2 3.5l-1.4-1.8zM380.7 302.9l1.4 2.1l-2.1 3.9l-1.3-2.5zM382.1 305l1.4-3l-2 3.7l-1.5 3.2zM385 299.8l1.2 8.1l-2 3.9l-1.2-9.1zM387.7 303.2l1.3 2.9l-2 3.9l-1.3-3.4zM389 306.1l1.5-3.5l-1.9 3.2l-1.6 4.2zM390.5 302.6l1.4 3.1l-2 2.9l-1.3-2.8zM393.2 309.1l1.6-5.2l-1.9 2.8l-1.7 6.3zM394.8 303.9l1.3 3.4l-1.9 2.9l-1.3-3.5z" fill="#80ff70" stroke="#80ff70" stroke-width="0.5"/>
<path d="M310 292.7l1.1.5l-2.4 2.2l-1.1-.4zM356.9 297.9l1.3 5.9l-2.1 3.6l-1.3-6.6zM386.2 307.9l1.5-4.7l-2 3.4l-1.5 5.2zM391.9 305.7l1.3 3.4l-2 3.9l-1.3-4.4zM396.1 307.3l1.5.8l-2 3.5l-1.4-1.4zM413.8 312.7l1.5-1.1l-1.8 3.7l-1.6.7zM415.3 311.6l1.4 3.1l-1.8 3.4l-1.4-2.8z" fill="#58ff98" stroke="#58ff98" stroke-width="0.5"/>
<path d="M397.6 308.1l1.3 4.3l-2 3.4l-1.3-4.2zM398.9 312.4l1.5-1.8l-1.9 3.4l-1.6 1.8zM400.4 310.6l1.4 1.6l-1.9 3.4l-1.4-1.6zM421.2 316.9l1.6-.1l-1.7 3l-1.6.4z" fill="#30ffc0" stroke="#30ffc0" stroke-width="0.5"/>
<path d="M401.8 312.2l1.3 2.9l-1.9 4.2l-1.3-3.7zM403.1 315.1l1.6-2.6l-1.9 3.6l-1.6 3.2zM404.7 312.5l1.3 5.1l-1.9 3.7l-1.3-5.2zM411.9 318.8l1.9-6.1l-1.9 3.3l-1.8 6.7zM416.7 314.7l1.2 6.3l-1.8 3.5l-1.2-6.4zM419.6 318.1l1.6-1.2l-1.7 3.3l-1.7 1.2zM422.8 316.8l1.3 4.7l-1.8 3.2l-1.2-4.9z" fill="#1af6d9" stroke="#1af6d9" stroke-width="0.5"/>
<path d="M406 317.6l1.4.6l-1.8 4l-1.5-.9zM407.4 318.2l1.5.2l-1.8 3.6l-1.5.2zM417.9 321l1.7-2.9l-1.8 3.3l-1.7 3.1z" fill="#10e8e8" stroke="#10e8e8" stroke-width="0.5"/>
<path d="M408.9 318.4l1.3 5.2l-1.9 4.1l-1.2-5.7zM410.2 323.6l1.7-4.8l-1.8 3.9l-1.8 5zM424.1 321.5l1.3 3.4l-1.7 3l-1.4-3.2z" fill="#06d9f6" stroke="#06d9f6" stroke-width="0.5"/>
<path d="M425.4 324.9l1.4 2.5l-1.7 4l-1.4-3.5zM426.8 327.4l1.6.5l-1.8 3.9l-1.5-.4zM428.4 327.9l1.5.6l-1.7 3.1l-1.6.2z" fill="#00c7ff" stroke="#00c7ff" stroke-width="0.5"/>
<path d="M429.9 328.5l1.2 6.4l-1.8 3.9l-1.1-7.2z" fill="#00b1ff" stroke="#00b1ff" stroke-width="0.5"/>
<path d="M431.1 334.9l1 7.4l-1.7 3.9l-1.1-7.4z" fill="#0070fe" stroke="#0070fe" stroke-width="0.5"/>
<path d="M432.1 342.3l1.6.2l-1.7 3.7l-1.6 0zM433.7 342.5l1.2 4.6l-1.7 3.9l-1.2-4.8z" fill="#0048fb" stroke="#0048fb" stroke-width="0.5"/>
<path d="M434.9 347.1l1.3 3.5l-1.6 3.6l-1.4-3.2z" fill="#0024f2" stroke="#0024f2" stroke-width="0.5"/>
<path d="M436.2 350.6l1.3 4.4l-1.6 3.1l-1.3-3.9z" fill="#001be4" stroke="#001be4" stroke-width="0.5"/>
<path d="M437.5 355l1.7-1.7l-1.6 3.2l-1.7 1.6zM439.2 353.3l1.2 5.7l-1.5 2.1l-1.3-4.6z" fill="#0012d5" stroke="#0012d5" stroke-width="0.5"/>
<path d="M440.4 359l1.5.5l-1.4 2l-1.6-.4zM441.9 359.5l1.6.6l-1.4 2l-1.6-.6zM443.5 360.1l1.6.5l-1.4 1.9l-1.6-.4z" fill="#0009c7" stroke="#0009c7" stroke-width="0.5"/>
<path d="M299.3 279.9l1.2 2l-2.5 1.6l-1.2-2.2z" fill="#ffeb00" stroke="#ffeb00" stroke-width="0.5"/>
<path d="M300.5 281.9l1.2 1.8l-2.5 1.6l-1.2-1.8zM301.7 283.7l1.2 2.5l-2.5 1.7l-1.2-2.6zM319.5 287.1l1.1 1l-2.3 2.3l-1.2-1z" fill="#f7ff07" stroke="#f7ff07" stroke-width="0.5"/>
<path d="M302.9 286.2l1.2 2.1l-2.5 1.6l-1.2-2zM316.2 289.7l1.1-.3l-2.4 2.4l-1.1.2zM320.6 288.1l1.3 3.6l-2.3 2.4l-1.3-3.7zM342.2 296.3l1.1-8.9l-2.3 3.9l-1.1 7.6zM357.3 297l1.3-.9l-2.1 3.2l-1.3 1.2zM361.2 298.4l1.4-4.7l-2.2 3.4l-1.3 4zM362.6 293.7l1.3 8.1l-2.2 2.7l-1.3-7.4z" fill="#d0ff28" stroke="#d0ff28" stroke-width="0.5"/>
<path d="M304.1 288.3l1-1.3l-2.5 2l-1 .9zM305.1 287l1.3 4.8l-2.4 1.8l-1.4-4.6zM315.1 290.5l1.1-.8l-2.4 2.3l-1.1 1zM317.3 289.4l1.3 4.4l-2.4 1.7l-1.3-3.7zM318.6 293.8l.9-6.7l-2.4 2.3l-.9 6.1zM321.9 291.7l1.2.3l-2.4 1.9l-1.1.2zM323.1 292l1.2 2.7l-2.3 1.7l-1.3-2.5zM325.5 294.3l1-4.2l-2.3 2.6l-1.1 3.7zM326.5 290.1l1.3 3.5l-2.4 2.2l-1.2-3.1zM327.8 293.6l1.1-.4l-2.3 2.3l-1.2.3zM331.3 296l1.1-4.4l-2.3 2.3l-1 4.3zM332.4 291.6l1.3 4.1l-2.3 2l-1.3-3.8zM341 296.2l1.2.1l-2.3 2.6l-1.2.4zM343.3 287.4l1.5 15.3l-2.3 2.6l-1.5-14zM347.1 296.1l1.3 0l-2.2 2.1l-1.3.6zM358.6 296.1l1.3 2.8l-2.1 2.7l-1.3-2.3zM359.9 298.9l1.3-.5l-2.1 2.7l-1.3.5zM366.5 301.7l1.4-2.1l-2.1 3l-1.4 1.8zM370.5 301.8l1.4-2.9l-2.1 3.3l-1.4 2.8zM371.9 298.9l1.4 1.4l-2.1 3.6l-1.4-1.7zM376 300.6l1.3 4l-2 3.1l-1.3-4.4z" fill="#a8ff49" stroke="#a8ff49" stroke-width="0.5"/>
<path d="M306.4 291.8l1.2 3.2l-2.4 1.6l-1.2-3zM308.7 295.4l.9-4.9l-2.4 2.6l-.8 4.3zM310.8 292.5l1.2 2.7l-2.4 1.8l-1.2-2.4zM312 295.2l1-2.6l-2.4 2.1l-1 2.3zM313 292.6l1.2 2.2l-2.4 1.8l-1.2-1.9zM334.9 296.4l1.3 4.3l-2.2 2.3l-1.3-3.7zM336.2 300.7l1.1-3.6l-2.2 2.8l-1.1 3.1zM344.8 302.7l1.1-3.7l-2.2 2.4l-1.2 3.9zM352.2 299.4l1.3 4.3l-2.2 2.8l-1.3-4.1zM353.5 303.7l1.3-2.9l-2.2 3.1l-1.3 2.6zM356.1 307.4l1.2-10.4l-2.1 3.5l-1.3 9.2zM378.7 306.4l1.3 2.5l-2 2.9l-1.4-2.3zM380 308.9l1.5-3.2l-2.1 3.4l-1.4 2.7zM383 302.7l1.2 9.1l-2 2.8l-1.3-8.9zM384.2 311.8l1.5-5.2l-2 3.4l-1.5 4.6zM385.7 306.6l1.3 3.4l-2 2.9l-1.3-2.9zM387 310l1.6-4.2l-2 3.6l-1.6 3.5zM391.2 313l1.7-6.3l-2 3.9l-1.6 5.2zM392.9 306.7l1.3 3.5l-2 3.7l-1.3-3.3zM394.2 310.2l1.4 1.4l-1.9 3.7l-1.5-1.4z" fill="#58ff98" stroke="#58ff98" stroke-width="0.5"/>
<path d="M307.6 295l1.1.4l-2.3 2l-1.2-.8zM354.8 300.8l1.3 6.6l-2.2 2.3l-1.3-5.8zM389.9 308.6l1.3 4.4l-1.9 2.8l-1.4-4.1zM395.6 311.6l1.3 4.2l-1.9 3.2l-1.3-3.7zM411.9 316l1.6-.7l-1.9 3.7l-1.6 1.1zM413.5 315.3l1.4 2.8l-1.9 4l-1.4-3.1z" fill="#30ffc0" stroke="#30ffc0" stroke-width="0.5"/>
<path d="M309.6 290.5l1.2 2l-2.4 2.1l-1.2-1.5zM314.2 294.8l.9-4.3l-2.4 2.5l-.9 3.6zM324.3 294.7l1.2-.4l-2.4 2.1l-1.1 0zM328.9 293.2l1.3 2.3l-2.3 2.1l-1.3-2.1zM330.2 295.5l1.1.5l-2.2 2.2l-1.2-.6zM333.7 295.7l1.2.7l-2.2 2.9l-1.3-1.6zM337.3 297.1l1.2.1l-2.2 3l-1.2-.3zM338.5 297.2l1.3 2.1l-2.2 2.4l-1.3-1.5zM339.8 299.3l1.2-3.1l-2.3 3.1l-1.1 2.4zM345.9 299l1.2-2.9l-2.2 2.7l-1.2 2.6zM348.4 296.1l1.3 5.3l-2.2 2.4l-1.3-5.6zM349.7 301.4l1.2-3.5l-2.2 2.9l-1.2 3zM350.9 297.9l1.3 1.5l-2.2 3l-1.3-1.6zM363.9 301.8l1.3 1.3l-2.1 2.9l-1.4-1.5zM365.2 303.1l1.3-1.4l-2.1 2.7l-1.3 1.6zM367.9 299.6l1.3 3.5l-2.1 3.2l-1.3-3.7zM369.2 303.1l1.3-1.3l-2.1 3.2l-1.3 1.3zM373.3 300.3l1.3 4.9l-2.1 3.1l-1.3-4.4zM374.6 305.2l1.4-4.6l-2 2.7l-1.5 5zM377.3 304.6l1.4 1.8l-2.1 3.1l-1.3-1.8zM381.5 305.7l1.5-3l-2.1 3l-1.5 3.4zM388.6 305.8l1.3 2.8l-2 3.1l-1.3-2.3z" fill="#80ff70" stroke="#80ff70" stroke-width="0.5"/>
<path d="M396.9 315.8l1.6-1.8l-2 3.7l-1.5 1.3zM398.5 314l1.4 1.6l-2 3.6l-1.4-1.5zM419.5 320.2l1.6-.4l-1.8 3.5l-1.7 1.1z" fill="#1af6d9" stroke="#1af6d9" stroke-width="0.5"/>
<path d="M399.9 315.6l1.3 3.7l-1.9 3.3l-1.4-3.4zM401.2 319.3l1.6-3.2l-1.9 3.6l-1.6 2.9zM402.8 316.1l1.3 5.2l-1.9 3l-1.3-4.6zM410.1 322.7l1.8-6.7l-1.9 4.1l-1.8 6.3zM414.9 318.1l1.2 6.4l-1.9 3.9l-1.2-6.3zM417.8 321.4l1.7-1.2l-1.9 4.2l-1.6 1zM421.1 319.8l1.2 4.9l-1.8 4.3l-1.2-5.7z" fill="#10e8e8" stroke="#10e8e8" stroke-width="0.5"/>
<path d="M404.1 321.3l1.5.9l-1.9 3.6l-1.5-1.5zM405.6 322.2l1.5-.2l-1.9 3.4l-1.5.4zM416.1 324.5l1.7-3.1l-1.8 4l-1.8 3zM422.3 324.7l1.4 3.2l-1.7 3.2l-1.5-2.1z" fill="#06d9f6" stroke="#06d9f6" stroke-width="0.5"/>
<path d="M407.1 322l1.2 5.7l-1.9 3.4l-1.2-5.7zM408.3 327.7l1.8-5l-1.9 3.7l-1.8 4.7zM423.7 327.9l1.4 3.5l-1.8 3.6l-1.3-3.9z" fill="#00c7ff" stroke="#00c7ff" stroke-width="0.5"/>
<path d="M425.1 331.4l1.5.4l-1.8 4.3l-1.5-1.1zM426.6 331.8l1.6-.2l-1.7 4.4l-1.7.1z" fill="#00b1ff" stroke="#00b1ff" stroke-width="0.5"/>
<path d="M428.2 331.6l1.1 7.2l-1.7 3.6l-1.1-6.4z" fill="#009bff" stroke="#009bff" stroke-width="0.5"/>
<path d="M429.3 338.8l1.1 7.4l-1.7 3.3l-1.1-7.1z" fill="#005cfd" stroke="#005cfd" stroke-width="0.5"/>
<path d="M430.4 346.2l1.6 0l-1.7 4.2l-1.6-.9z" fill="#0048fb" stroke="#0048fb" stroke-width="0.5"/>
<path d="M432 346.2l1.2 4.8l-1.6 3.5l-1.3-4.1z" fill="#0034f9" stroke="#0034f9" stroke-width="0.5"/>
<path d="M433.2 351l1.4 3.2l-1.7 3.7l-1.3-3.4z" fill="#001be4" stroke="#001be4" stroke-width="0.5"/>
<path d="M434.6 354.2l1.3 3.9l-1.6 3l-1.4-3.2zM435.9 358.1l1.7-1.6l-1.6 3.9l-1.7.7z" fill="#0012d5" stroke="#0012d5" stroke-width="0.5"/>
<path d="M437.6 356.5l1.3 4.6l-1.5 2l-1.4-2.7zM438.9 361.1l1.6.4l-1.5 2l-1.6-.4zM440.5 361.5l1.6.6l-1.5 1.9l-1.6-.5zM442.1 362.1l1.6.4l-1.5 1.9l-1.6-.4z" fill="#0009c7" stroke="#0009c7" stroke-width="0.5"/>
<path d="M296.8 281.3l1.2 2.2l-2.5 1.5l-1.2-2.2z" fill="#ffeb00" stroke="#ffeb00" stroke-width="0.5"/>
<path d="M298 283.5l1.2 1.8l-2.5 1.6l-1.2-1.9z" fill="#f7ff07" stroke="#f7ff07" stroke-width="0.5"/>
<path d="M299.2 285.3l1.2 2.6l-2.5 1.6l-1.2-2.6zM317.1 289.4l1.2 1l-2.4 2.3l-1.2-1z" fill="#d0ff28" stroke="#d0ff28" stroke-width="0.5"/>
<path d="M300.4 287.9l1.2 2l-2.5 1.7l-1.2-2.1zM301.6 289.9l1-.9l-2.4 2l-1.1.6zM312.7 293l1.1-1l-2.4 2.3l-1 1.3zM313.8 292l1.1-.2l-2.3 2.5l-1.2 0zM316.2 295.5l.9-6.1l-2.4 2.3l-.9 5.5zM318.3 290.4l1.3 3.7l-2.4 2.4l-1.3-3.8zM319.6 294.1l1.1-.2l-2.4 2l-1.1.6zM323.1 296.4l1.1-3.7l-2.4 2.7l-1 3.2zM324.2 292.7l1.2 3.1l-2.3 2.2l-1.3-2.6zM330.1 293.9l1.3 3.8l-2.3 2l-1.3-3.6zM339.9 298.9l1.1-7.6l-2.2 3.9l-1.1 6.4zM344.9 298.8l1.3-.6l-2.3 2.1l-1.2 1.2zM355.2 300.5l1.3-1.2l-2.2 3.1l-1.3 1.7zM356.5 299.3l1.3 2.3l-2.2 2.7l-1.3-1.9zM359.1 301.1l1.3-4l-2.2 3.5l-1.3 3.2zM360.4 297.1l1.3 7.4l-2.1 2.8l-1.4-6.7zM369.8 302.2l1.4 1.7l-2.1 3.5l-1.4-1.9z" fill="#a8ff49" stroke="#a8ff49" stroke-width="0.5"/>
<path d="M302.6 289l1.4 4.6l-2.5 1.8l-1.3-4.4zM314.9 291.8l1.3 3.7l-2.4 1.7l-1.2-2.9zM320.7 293.9l1.3 2.5l-2.4 1.6l-1.3-2.1zM322 296.4l1.1 0l-2.3 2.2l-1.2-.6zM325.4 295.8l1.2-.3l-2.3 2.4l-1.2.1zM326.6 295.5l1.3 2.1l-2.4 2.2l-1.2-1.9zM327.9 297.6l1.2.6l-2.4 2.1l-1.2-.5zM329.1 298.2l1-4.3l-2.3 2.2l-1.1 4.2zM331.4 297.7l1.3 1.6l-2.3 2.9l-1.3-2.5zM338.7 299.3l1.2-.4l-2.2 2.7l-1.2.8zM341 291.3l1.5 14l-2.2 2.5l-1.5-12.6zM343.7 301.4l1.2-2.6l-2.2 2.7l-1.2 2.4zM346.2 298.2l1.3 5.6l-2.2 2.4l-1.4-5.9zM348.7 300.8l1.3 1.6l-2.2 3l-1.3-1.6zM357.8 301.6l1.3-.5l-2.2 2.7l-1.3.5zM364.4 304.4l1.4-1.8l-2.2 3l-1.4 1.6zM365.8 302.6l1.3 3.7l-2.2 3.3l-1.3-4zM368.4 305l1.4-2.8l-2.1 3.3l-1.4 2.8zM372.5 308.3l1.5-5l-2.2 2.8l-1.4 5.4zM374 303.3l1.3 4.4l-2.1 3.1l-1.4-4.7zM379.4 309.1l1.5-3.4l-2.1 3.1l-1.4 3.6z" fill="#80ff70" stroke="#80ff70" stroke-width="0.5"/>
<path d="M304 293.6l1.2 3l-2.4 1.6l-1.3-2.8zM306.4 297.4l.8-4.3l-2.4 2.6l-.9 3.7zM307.2 293.1l1.2 1.5l-2.4 2.1l-1.2-1zM308.4 294.6l1.2 2.4l-2.4 1.9l-1.2-2.2zM309.6 297l1-2.3l-2.4 2.1l-1 2.1zM310.6 294.7l1.2 1.9l-2.4 2l-1.2-1.8zM311.8 296.6l.9-3.6l-2.3 2.6l-1 3zM335.1 299.9l1.2.3l-2.3 3l-1.2-.6zM336.3 300.2l1.3 1.5l-2.3 2.5l-1.3-1zM337.6 301.7l1.1-2.4l-2.2 3.1l-1.2 1.8zM347.5 303.8l1.2-3l-2.2 3l-1.2 2.4zM361.7 304.5l1.4 1.5l-2.2 2.9l-1.3-1.6zM363.1 306l1.3-1.6l-2.2 2.8l-1.3 1.7zM367.1 306.3l1.3-1.3l-2.1 3.3l-1.4 1.3zM371.2 303.9l1.3 4.4l-2.1 3.2l-1.3-4.1zM375.3 307.7l1.3 1.8l-2 3.1l-1.4-1.8zM380.9 305.7l1.3 8.9l-2.1 2.8l-1.3-8.6zM386.6 309.4l1.3 2.3l-2 3.1l-1.4-1.7z" fill="#58ff98" stroke="#58ff98" stroke-width="0.5"/>
<path d="M305.2 296.6l1.2.8l-2.5 2l-1.1-1.2zM332.7 299.3l1.3 3.7l-2.3 2.3l-1.3-3.1zM334 303l1.1-3.1l-2.3 2.7l-1.1 2.7zM342.5 305.3l1.2-3.9l-2.2 2.5l-1.2 3.9zM350 302.4l1.3 4.1l-2.2 2.8l-1.3-3.9zM351.3 306.5l1.3-2.6l-2.2 3.1l-1.3 2.3zM352.6 303.9l1.3 5.8l-2.2 2.4l-1.3-5.1zM353.9 309.7l1.3-9.2l-2.2 3.6l-1.3 8zM376.6 309.5l1.4 2.3l-2.1 2.9l-1.3-2.1zM378 311.8l1.4-2.7l-2 3.3l-1.5 2.3zM382.2 314.6l1.5-4.6l-2.1 3.4l-1.5 4zM383.7 310l1.3 2.9l-2 3l-1.4-2.5zM385 312.9l1.6-3.5l-2.1 3.7l-1.5 2.8zM387.9 311.7l1.4 4.1l-2 2.9l-1.4-3.9zM389.3 315.8l1.6-5.2l-2.1 3.9l-1.5 4.2zM390.9 310.6l1.3 3.3l-2 3.7l-1.4-3.1zM392.2 313.9l1.5 1.4l-2.1 3.8l-1.4-1.5z" fill="#30ffc0" stroke="#30ffc0" stroke-width="0.5"/>
<path d="M393.7 315.3l1.3 3.7l-2 3.2l-1.4-3.1zM410 320.1l1.6-1.1l-1.9 3.8l-1.6 1.4zM411.6 319l1.4 3.1l-1.9 4l-1.4-3.3z" fill="#1af6d9" stroke="#1af6d9" stroke-width="0.5"/>
<path d="M395 319l1.5-1.3l-2 3.7l-1.5.8zM396.5 317.7l1.4 1.5l-1.9 3.7l-1.5-1.5zM397.9 319.2l1.4 3.4l-2 3.4l-1.3-3.1zM399.3 322.6l1.6-2.9l-1.9 3.6l-1.7 2.7zM417.6 324.4l1.7-1.1l-1.9 3.5l-1.7 1.9z" fill="#10e8e8" stroke="#10e8e8" stroke-width="0.5"/>
<path d="M400.9 319.7l1.3 4.6l-1.9 3l-1.3-4zM408.2 326.4l1.8-6.3l-1.9 4.1l-1.8 5.9zM413 322.1l1.2 6.3l-1.8 4l-1.3-6.3zM414.2 328.4l1.8-3l-1.9 4.1l-1.7 2.9zM416 325.4l1.6-1l-1.9 4.3l-1.6.8zM419.3 323.3l1.2 5.7l-1.9 4.4l-1.2-6.6z" fill="#06d9f6" stroke="#06d9f6" stroke-width="0.5"/>
<path d="M402.2 324.3l1.5 1.5l-2 3.6l-1.4-2.1zM403.7 325.8l1.5-.4l-1.9 3.5l-1.6.5zM420.5 329l1.5 2.1l-1.8 3.4l-1.6-1.1z" fill="#00c7ff" stroke="#00c7ff" stroke-width="0.5"/>
<path d="M405.2 325.4l1.2 5.7l-1.9 3.5l-1.2-5.7zM406.4 331.1l1.8-4.7l-1.9 3.7l-1.8 4.5zM422 331.1l1.3 3.9l-1.8 3.6l-1.3-4.1z" fill="#00b1ff" stroke="#00b1ff" stroke-width="0.5"/>
<path d="M423.3 335l1.5 1.1l-1.8 4.4l-1.5-1.9zM424.8 336.1l1.7-.1l-1.9 4.4l-1.6.1z" fill="#009bff" stroke="#009bff" stroke-width="0.5"/>
<path d="M426.5 336l1.1 6.4l-1.7 3.6l-1.3-5.6z" fill="#0085ff" stroke="#0085ff" stroke-width="0.5"/>
<path d="M427.6 342.4l1.1 7.1l-1.7 3.2l-1.1-6.7z" fill="#0048fb" stroke="#0048fb" stroke-width="0.5"/>
<path d="M428.7 349.5l1.6.9l-1.8 4.3l-1.5-2z" fill="#0034f9" stroke="#0034f9" stroke-width="0.5"/>
<path d="M430.3 350.4l1.3 4.1l-1.7 3.5l-1.4-3.3z" fill="#0024f2" stroke="#0024f2" stroke-width="0.5"/>
<path d="M431.6 354.5l1.3 3.4l-1.6 3.3l-1.4-3.2z" fill="#001be4" stroke="#001be4" stroke-width="0.5"/>
<path d="M432.9 357.9l1.4 3.2l-1.6 2.6l-1.4-2.5z" fill="#0012d5" stroke="#0012d5" stroke-width="0.5"/>
<path d="M434.3 361.1l1.7-.7l-1.6 3.2l-1.7.1zM436 360.4l1.4 2.7l-1.5 2l-1.5-1.5zM437.4 363.1l1.6.4l-1.5 2.1l-1.6-.5zM439 363.5l1.6.5l-1.5 2l-1.6-.4zM440.6 364l1.6.4l-1.4 2.1l-1.7-.5z" fill="#0009c7" stroke="#0009c7" stroke-width="0.5"/>
<path d="M294.3 282.8l1.2 2.2l-2.5 1.6l-1.3-2.2z" fill="#ffeb00" stroke="#ffeb00" stroke-width="0.5"/>
<path d="M295.5 285l1.2 1.9l-2.5 1.7l-1.2-2z" fill="#f7ff07" stroke="#f7ff07" stroke-width="0.5"/>
<path d="M296.7 286.9l1.2 2.6l-2.5 1.7l-1.2-2.6zM314.7 291.7l1.2 1l-2.4 2.3l-1.2-1z" fill="#d0ff28" stroke="#d0ff28" stroke-width="0.5"/>
<path d="M297.9 289.5l1.2 2.1l-2.5 1.6l-1.2-2zM299.1 291.6l1.1-.6l-2.5 2l-1.1.2zM313.8 297.2l.9-5.5l-2.4 2.3l-.9 4.9zM315.9 292.7l1.3 3.8l-2.4 2.4l-1.3-3.9zM337.7 301.6l1.1-6.4l-2.3 3.9l-1.1 5.2zM356.9 303.8l1.3-3.2l-2.2 3.4l-1.3 2.6z" fill="#a8ff49" stroke="#a8ff49" stroke-width="0.5"/>
<path d="M300.2 291l1.3 4.4l-2.5 1.8l-1.3-4.2zM310.4 295.6l1-1.3l-2.4 2.4l-1.1 1.4zM311.4 294.3l1.2 0l-2.5 2.4l-1.1 0zM312.6 294.3l1.2 2.9l-2.4 1.7l-1.3-2.2zM317.2 296.5l1.1-.6l-2.4 1.9l-1.1 1.1zM318.3 295.9l1.3 2.1l-2.4 1.7l-1.3-1.9zM320.8 298.6l1-3.2l-2.4 2.7l-1 2.7zM321.8 295.4l1.3 2.6l-2.4 2.2l-1.3-2.1zM323.1 298l1.2-.1l-2.4 2.4l-1.2-.1zM326.7 300.3l1.1-4.2l-2.4 2.3l-1 4.1zM327.8 296.1l1.3 3.6l-2.4 2.1l-1.3-3.4zM342.7 301.5l1.2-1.2l-2.3 2.1l-1.2 1.9zM353 304.1l1.3-1.7l-2.3 3.3l-1.3 2zM354.3 302.4l1.3 1.9l-2.2 2.8l-1.4-1.4zM355.6 304.3l1.3-.5l-2.2 2.8l-1.3.5zM358.2 300.6l1.4 6.7l-2.2 2.8l-1.4-6.1zM367.7 305.5l1.4 1.9l-2.2 3.6l-1.4-2.1z" fill="#80ff70" stroke="#80ff70" stroke-width="0.5"/>
<path d="M301.5 295.4l1.3 2.8l-2.5 1.6l-1.3-2.6zM304.8 295.7l1.2 1l-2.5 2.1l-1.1-.4zM308.2 296.8l1.2 1.8l-2.5 1.9l-1.2-1.6zM309.4 298.6l1-3l-2.5 2.5l-1 2.4zM319.6 298l1.2.6l-2.4 2.2l-1.2-1.1zM324.3 297.9l1.2 1.9l-2.4 2.1l-1.2-1.6zM325.5 299.8l1.2.5l-2.3 2.2l-1.3-.6zM329.1 299.7l1.3 2.5l-2.4 3l-1.3-3.4zM336.5 302.4l1.2-.8l-2.3 2.7l-1.2 1.2zM338.8 295.2l1.5 12.6l-2.3 2.6l-1.5-11.3zM341.5 303.9l1.2-2.4l-2.3 2.8l-1.2 2.1zM343.9 300.3l1.4 5.9l-2.3 2.4l-1.4-6.2zM345.3 306.2l1.2-2.4l-2.3 3l-1.2 1.8zM346.5 303.8l1.3 1.6l-2.3 3.1l-1.3-1.7zM360.9 308.9l1.3-1.7l-2.1 2.8l-1.4 1.8zM362.2 307.2l1.4-1.6l-2.2 3.1l-1.3 1.3zM363.6 305.6l1.3 4l-2.1 3.2l-1.4-4.1zM366.3 308.3l1.4-2.8l-2.2 3.4l-1.4 2.6zM369.1 307.4l1.3 4.1l-2.1 3.3l-1.4-3.8zM370.4 311.5l1.4-5.4l-2.1 2.8l-1.4 5.9zM371.8 306.1l1.4 4.7l-2.2 3.2l-1.3-5.1zM377.4 312.4l1.4-3.6l-2.1 3.2l-1.4 3.8z" fill="#58ff98" stroke="#58ff98" stroke-width="0.5"/>
<path d="M302.8 298.2l1.1 1.2l-2.4 2l-1.2-1.6zM303.9 299.4l.9-3.7l-2.4 2.7l-.9 3zM306 296.7l1.2 2.2l-2.5 1.9l-1.2-2zM307.2 298.9l1-2.1l-2.5 2.1l-1 1.9zM330.4 302.2l1.3 3.1l-2.4 2.4l-1.3-2.5zM331.7 305.3l1.1-2.7l-2.3 2.8l-1.2 2.3zM332.8 302.6l1.2.6l-2.3 3l-1.2-.8zM334 303.2l1.3 1l-2.3 2.5l-1.3-.5zM335.3 304.2l1.2-1.8l-2.3 3.1l-1.2 1.2zM340.3 307.8l1.2-3.9l-2.3 2.5l-1.2 4zM347.8 305.4l1.3 3.9l-2.2 2.8l-1.4-3.6zM349.1 309.3l1.3-2.3l-2.3 3l-1.2 2.1zM351.7 312.1l1.3-8l-2.3 3.6l-1.2 6.7zM359.6 307.3l1.3 1.6l-2.2 2.9l-1.3-1.7zM364.9 309.6l1.4-1.3l-2.2 3.2l-1.3 1.3zM373.2 310.8l1.4 1.8l-2.2 3.1l-1.4-1.7zM375.9 314.7l1.5-2.3l-2.1 3.4l-1.5 1.9zM378.8 308.8l1.3 8.6l-2.1 2.9l-1.3-8.3zM381.6 313.4l1.4 2.5l-2.1 3l-1.4-2.1zM383 315.9l1.5-2.8l-2.1 3.7l-1.5 2.1zM384.5 313.1l1.4 1.7l-2 3.1l-1.5-1.1z" fill="#30ffc0" stroke="#30ffc0" stroke-width="0.5"/>
<path d="M350.4 307l1.3 5.1l-2.2 2.3l-1.4-4.4zM374.6 312.6l1.3 2.1l-2.1 3l-1.4-2zM380.1 317.4l1.5-4l-2.1 3.4l-1.5 3.5zM385.9 314.8l1.4 3.9l-2.1 2.9l-1.3-3.7zM387.3 318.7l1.5-4.2l-2 3.9l-1.6 3.2zM388.8 314.5l1.4 3.1l-2 3.8l-1.4-3zM390.2 317.6l1.4 1.5l-2 3.8l-1.4-1.5z" fill="#1af6d9" stroke="#1af6d9" stroke-width="0.5"/>
<path d="M391.6 319.1l1.4 3.1l-2 3.2l-1.4-2.5zM393 322.2l1.5-.8l-2 3.7l-1.5.3zM394.5 321.4l1.5 1.5l-2 3.7l-1.5-1.5zM408.1 324.2l1.6-1.4l-1.9 3.8l-1.7 1.8zM409.7 322.8l1.4 3.3l-1.9 4l-1.4-3.5z" fill="#10e8e8" stroke="#10e8e8" stroke-width="0.5"/>
<path d="M396 322.9l1.3 3.1l-1.9 3.5l-1.4-2.9zM397.3 326l1.7-2.7l-2 3.7l-1.6 2.5zM399 323.3l1.3 4l-1.9 3.1l-1.4-3.4zM406.3 330.1l1.8-5.9l-2 4.2l-1.8 5.5zM415.7 328.7l1.7-1.9l-1.8 3.6l-1.8 2.7z" fill="#06d9f6" stroke="#06d9f6" stroke-width="0.5"/>
<path d="M400.3 327.3l1.4 2.1l-1.9 3.6l-1.4-2.6zM411.1 326.1l1.3 6.3l-1.9 4.1l-1.3-6.4zM412.4 332.4l1.7-2.9l-1.9 4l-1.7 3zM414.1 329.5l1.6-.8l-1.9 4.4l-1.6.4zM417.4 326.8l1.2 6.6l-1.9 4.4l-1.1-7.4z" fill="#00c7ff" stroke="#00c7ff" stroke-width="0.5"/>
<path d="M401.7 329.4l1.6-.5l-2 3.6l-1.5.5zM403.3 328.9l1.2 5.7l-1.9 3.5l-1.3-5.6zM418.6 333.4l1.6 1.1l-1.9 3.3l-1.6 0z" fill="#00b1ff" stroke="#00b1ff" stroke-width="0.5"/>
<path d="M404.5 334.6l1.8-4.5l-2 3.8l-1.7 4.2zM420.2 334.5l1.3 4.1l-1.8 3.7l-1.4-4.5z" fill="#009bff" stroke="#009bff" stroke-width="0.5"/>
<path d="M421.5 338.6l1.5 1.9l-1.9 4.5l-1.4-2.7zM423 340.5l1.6-.1l-1.8 4.4l-1.7.2z" fill="#0085ff" stroke="#0085ff" stroke-width="0.5"/>
<path d="M424.6 340.4l1.3 5.6l-1.8 3.7l-1.3-4.9z" fill="#0070fe" stroke="#0070fe" stroke-width="0.5"/>
<path d="M425.9 346l1.1 6.7l-1.7 3.2l-1.2-6.2z" fill="#0048fb" stroke="#0048fb" stroke-width="0.5"/>
<path d="M427 352.7l1.5 2l-1.8 4.1l-1.4-2.9z" fill="#0024f2" stroke="#0024f2" stroke-width="0.5"/>
<path d="M428.5 354.7l1.4 3.3l-1.7 3.3l-1.5-2.5z" fill="#001be4" stroke="#001be4" stroke-width="0.5"/>
<path d="M429.9 358l1.4 3.2l-1.7 3.1l-1.4-3z" fill="#0012d5" stroke="#0012d5" stroke-width="0.5"/>
<path d="M431.3 361.2l1.4 2.5l-1.6 2.3l-1.5-1.7zM432.7 363.7l1.7-.1l-1.6 2.7l-1.7-.3zM434.4 363.6l1.5 1.5l-1.6 2.1l-1.5-.9zM435.9 365.1l1.6.5l-1.5 2l-1.7-.4zM437.5 365.6l1.6.4l-1.5 2.1l-1.6-.5zM439.1 366l1.7.5l-1.5 2l-1.7-.4z" fill="#0009c7" stroke="#0009c7" stroke-width="0.5"/>
<path d="M291.7 284.4l1.3 2.2l-2.6 1.6l-1.3-2.3zM293 286.6l1.2 2l-2.6 1.6l-1.2-2z" fill="#f7ff07" stroke="#f7ff07" stroke-width="0.5"/>
<path d="M294.2 288.6l1.2 2.6l-2.6 1.7l-1.2-2.7z" fill="#d0ff28" stroke="#d0ff28" stroke-width="0.5"/>
<path d="M295.4 291.2l1.2 2l-2.5 1.7l-1.3-2zM312.3 294l1.2 1l-2.5 2.4l-1.2-1.1z" fill="#a8ff49" stroke="#a8ff49" stroke-width="0.5"/>
<path d="M296.6 293.2l1.1-.2l-2.5 2l-1.1-.1zM297.7 293l1.3 4.2l-2.5 1.8l-1.3-4zM309 296.7l1.1 0l-2.4 2.5l-1.2-.1zM311.4 298.9l.9-4.9l-2.5 2.3l-.9 4.3zM313.5 295l1.3 3.9l-2.4 2.5l-1.4-4zM314.8 298.9l1.1-1.1l-2.4 2l-1.1 1.6zM315.9 297.8l1.3 1.9l-2.5 1.7l-1.2-1.6zM319.4 298.1l1.3 2.1l-2.4 2.2l-1.3-1.6zM325.4 298.4l1.3 3.4l-2.4 2.1l-1.3-3.1zM335.4 304.3l1.1-5.2l-2.3 4l-1.2 3.9zM340.4 304.3l1.2-1.9l-2.3 2.1l-1.3 2.5zM354.7 306.6l1.3-2.6l-2.3 3.5l-1.3 1.9z" fill="#80ff70" stroke="#80ff70" stroke-width="0.5"/>
<path d="M299 297.2l1.3 2.6l-2.5 1.6l-1.3-2.4zM301.5 301.4l.9-3l-2.5 2.7l-.9 2.3zM302.4 298.4l1.1.4l-2.5 2.2l-1.1.1zM303.5 298.8l1.2 2l-2.5 1.9l-1.2-1.7zM304.7 300.8l1-1.9l-2.4 2.1l-1.1 1.7zM305.7 298.9l1.2 1.6l-2.4 1.9l-1.2-1.4zM306.9 300.5l1-2.4l-2.4 2.6l-1 1.7zM326.7 301.8l1.3 3.4l-2.3 2.9l-1.4-4.2zM330.5 305.4l1.2.8l-2.3 3.1l-1.3-1.1zM333 306.7l1.2-1.2l-2.4 3.2l-1.2.5zM334.2 305.5l1.2-1.2l-2.4 2.7l-1.2 1.7zM343 308.6l1.2-1.8l-2.3 3l-1.2 1.2zM344.2 306.8l1.3 1.7l-2.2 3.1l-1.4-1.8zM357.4 310.1l1.3 1.7l-2.2 2.9l-1.4-1.8zM358.7 311.8l1.4-1.8l-2.3 2.9l-1.3 1.8zM361.4 308.7l1.4 4.1l-2.2 3.4l-1.4-4.5zM362.8 312.8l1.3-1.3l-2.2 3.3l-1.3 1.4zM366.9 311l1.4 3.8l-2.2 3.2l-1.4-3.3zM368.3 314.8l1.4-5.9l-2.2 2.8l-1.4 6.3zM375.3 315.8l1.4-3.8l-2.1 3.1l-1.5 4.1z" fill="#30ffc0" stroke="#30ffc0" stroke-width="0.5"/>
<path d="M300.3 299.8l1.2 1.6l-2.5 2l-1.2-2zM328 305.2l1.3 2.5l-2.3 2.3l-1.3-1.9zM329.3 307.7l1.2-2.3l-2.4 2.8l-1.1 1.8zM331.7 306.2l1.3.5l-2.4 2.5l-1.2.1zM338 310.4l1.2-4l-2.4 2.6l-1.1 4zM345.5 308.5l1.4 3.6l-2.3 2.8l-1.3-3.3zM346.9 312.1l1.2-2.1l-2.2 3.2l-1.3 1.7zM348.1 310l1.4 4.4l-2.3 2.4l-1.3-3.6zM349.5 314.4l1.2-6.7l-2.2 3.6l-1.3 5.5zM371 314l1.4 1.7l-2.1 3.2l-1.4-1.8zM372.4 315.7l1.4 2l-2.1 2.9l-1.4-1.7zM373.8 317.7l1.5-1.9l-2.2 3.4l-1.4 1.4zM376.7 312l1.3 8.3l-2.1 2.8l-1.3-8zM379.5 316.8l1.4 2.1l-2.1 3l-1.4-1.6zM380.9 318.9l1.5-2.1l-2.1 3.7l-1.5 1.4zM382.4 316.8l1.5 1.1l-2.1 3.2l-1.5-.6zM386.8 318.4l1.4 3l-2.1 3.8l-1.4-2.8z" fill="#1af6d9" stroke="#1af6d9" stroke-width="0.5"/>
<path d="M307.9 298.1l1.1-1.4l-2.5 2.4l-1 1.6zM310.1 296.7l1.3 2.2l-2.5 1.7l-1.2-1.4zM317.2 299.7l1.2 1.1l-2.5 2.2l-1.2-1.6zM318.4 300.8l1-2.7l-2.4 2.7l-1.1 2.2zM320.7 300.2l1.2.1l-2.4 2.5l-1.2-.4zM321.9 300.3l1.2 1.6l-2.4 2.2l-1.2-1.3zM323.1 301.9l1.3.6l-2.5 2.2l-1.2-.6zM324.4 302.5l1-4.1l-2.4 2.4l-1.1 3.9zM336.5 299.1l1.5 11.3l-2.3 2.6l-1.5-9.9zM339.2 306.4l1.2-2.1l-2.4 2.7l-1.2 2zM341.6 302.4l1.4 6.2l-2.3 2.4l-1.4-6.5zM350.7 307.7l1.3-2l-2.2 3.2l-1.3 2.4zM352 305.7l1.4 1.4l-2.3 2.7l-1.3-.9zM353.4 307.1l1.3-.5l-2.3 2.8l-1.3.4zM356 304l1.4 6.1l-2.3 2.8l-1.4-5.4zM360.1 310l1.3-1.3l-2.2 3l-1.4 1.2zM364.1 311.5l1.4-2.6l-2.2 3.3l-1.4 2.6zM365.5 308.9l1.4 2.1l-2.2 3.7l-1.4-2.5zM369.7 308.9l1.3 5.1l-2.1 3.1l-1.4-5.4z" fill="#58ff98" stroke="#58ff98" stroke-width="0.5"/>
<path d="M378 320.3l1.5-3.5l-2.1 3.5l-1.5 2.8zM383.9 317.9l1.3 3.7l-2.1 2.9l-1.3-3.4zM385.2 321.6l1.6-3.2l-2.1 4l-1.6 2.1zM388.2 321.4l1.4 1.5l-2.1 3.8l-1.4-1.5z" fill="#10e8e8" stroke="#10e8e8" stroke-width="0.5"/>
<path d="M389.6 322.9l1.4 2.5l-2 3.2l-1.5-1.9zM391 325.4l1.5-.3l-2 3.7l-1.5-.2zM392.5 325.1l1.5 1.5l-2.1 3.7l-1.4-1.5zM406.1 328.4l1.7-1.8l-2 3.8l-1.6 2.2zM407.8 326.6l1.4 3.5l-2 4.1l-1.4-3.8z" fill="#06d9f6" stroke="#06d9f6" stroke-width="0.5"/>
<path d="M394 326.6l1.4 2.9l-2 3.4l-1.5-2.6zM395.4 329.5l1.6-2.5l-2.1 3.7l-1.5 2.2zM397 327l1.4 3.4l-2 3.1l-1.5-2.8zM404.3 333.9l1.8-5.5l-1.9 4.2l-1.8 5.1zM413.8 333.1l1.8-2.7l-1.9 3.7l-1.8 3.4z" fill="#00c7ff" stroke="#00c7ff" stroke-width="0.5"/>
<path d="M398.4 330.4l1.4 2.6l-2 3.7l-1.4-3.2zM399.8 333l1.5-.5l-2 3.5l-1.5.7zM409.2 330.1l1.3 6.4l-2 4l-1.3-6.3zM410.5 336.5l1.7-3l-2 4.1l-1.7 2.9zM412.2 333.5l1.6-.4l-1.9 4.4l-1.7.1zM415.6 330.4l1.1 7.4l-1.9 4.4l-1.1-8.1z" fill="#00b1ff" stroke="#00b1ff" stroke-width="0.5"/>
<path d="M401.3 332.5l1.3 5.6l-1.9 3.5l-1.4-5.6zM402.6 338.1l1.7-4.2l-1.9 3.8l-1.7 3.9zM416.7 337.8l1.6 0l-1.8 3.4l-1.7 1zM418.3 337.8l1.4 4.5l-1.9 3.6l-1.3-4.7z" fill="#009bff" stroke="#009bff" stroke-width="0.5"/>
<path d="M419.7 342.3l1.4 2.7l-1.8 4.4l-1.5-3.5zM421.1 345l1.7-.2l-1.9 4.5l-1.6.1z" fill="#0070fe" stroke="#0070fe" stroke-width="0.5"/>
<path d="M422.8 344.8l1.3 4.9l-1.8 3.7l-1.4-4.1z" fill="#005cfd" stroke="#005cfd" stroke-width="0.5"/>
<path d="M424.1 349.7l1.2 6.2l-1.8 3.3l-1.2-5.8z" fill="#0034f9" stroke="#0034f9" stroke-width="0.5"/>
<path d="M425.3 355.9l1.4 2.9l-1.8 4l-1.4-3.6zM426.7 358.8l1.5 2.5l-1.7 3.2l-1.6-1.7z" fill="#001be4" stroke="#001be4" stroke-width="0.5"/>
<path d="M428.2 361.3l1.4 3l-1.7 2.7l-1.4-2.5z" fill="#0012d5" stroke="#0012d5" stroke-width="0.5"/>
<path d="M429.6 364.3l1.5 1.7l-1.6 2.2l-1.6-1.2zM431.1 366l1.7.3l-1.7 2.3l-1.6-.4zM432.8 366.3l1.5.9l-1.5 2.1l-1.7-.7zM434.3 367.2l1.7.4l-1.6 2.1l-1.6-.4zM436 367.6l1.6.5l-1.5 2.1l-1.7-.5zM437.6 368.1l1.7.4l-1.6 2.1l-1.6-.4z" fill="#0009c7" stroke="#0009c7" stroke-width="0.5"/>
<path d="M289.1 285.9l1.3 2.3l-2.7 1.6l-1.2-2.4z" fill="#f7ff07" stroke="#f7ff07" stroke-width="0.5"/>
<path d="M290.4 288.2l1.2 2l-2.6 1.7l-1.3-2.1z" fill="#d0ff28" stroke="#d0ff28" stroke-width="0.5"/>
<path d="M291.6 290.2l1.2 2.7l-2.6 1.7l-1.2-2.7z" fill="#a8ff49" stroke="#a8ff49" stroke-width="0.5"/>
<path d="M292.8 292.9l1.3 2l-2.6 1.7l-1.3-2zM294.1 294.9l1.1.1l-2.6 2.1l-1.1-.5zM308.9 300.6l.9-4.3l-2.5 2.4l-1 3.7zM309.8 296.3l1.2 1.1l-2.5 2.4l-1.2-1.1zM311 297.4l1.4 4l-2.5 2.4l-1.4-4z" fill="#80ff70" stroke="#80ff70" stroke-width="0.5"/>
<path d="M295.2 295l1.3 4l-2.6 1.9l-1.3-3.8zM305.5 300.7l1-1.6l-2.5 2.4l-1 1.8zM306.5 299.1l1.2.1l-2.5 2.6l-1.2-.3zM307.7 299.2l1.2 1.4l-2.6 1.8l-1.1-.6zM312.4 301.4l1.1-1.6l-2.6 2l-1 2zM313.5 299.8l1.2 1.6l-2.5 1.7l-1.3-1.3zM314.7 301.4l1.2 1.6l-2.4 2.2l-1.3-2.1zM315.9 303l1.1-2.2l-2.4 2.7l-1.1 1.7zM317 300.8l1.3 1.6l-2.5 2.2l-1.2-1.1zM318.3 302.4l1.2.4l-2.5 2.4l-1.2-.6zM319.5 302.8l1.2 1.3l-2.4 2.2l-1.3-1.1zM321.9 304.7l1.1-3.9l-2.5 2.3l-1 3.8zM323 300.8l1.3 3.1l-2.4 2.1l-1.4-2.9zM333 307l1.2-3.9l-2.4 4l-1.2 2.7zM338 307l1.3-2.5l-2.4 2.2l-1.2 3.1zM349.8 308.9l1.3.9l-2.3 2.8l-1.4-.4zM351.1 309.8l1.3-.4l-2.3 2.8l-1.3.4zM352.4 309.4l1.3-1.9l-2.3 3.6l-1.3 1.1z" fill="#58ff98" stroke="#58ff98" stroke-width="0.5"/>
<path d="M296.5 299l1.3 2.4l-2.6 1.7l-1.3-2.2zM299.9 301.1l1.1-.1l-2.5 2.2l-1.1.6zM301 301l1.2 1.7l-2.5 1.9l-1.2-1.4zM302.2 302.7l1.1-1.7l-2.6 2.2l-1 1.4zM303.3 301l1.2 1.4l-2.6 2l-1.2-1.2zM304.5 302.4l1-1.7l-2.5 2.6l-1.1 1.1zM320.7 304.1l1.2.6l-2.4 2.2l-1.2-.6zM324.3 303.9l1.4 4.2l-2.4 3l-1.4-5.1zM331.8 308.7l1.2-1.7l-2.4 2.8l-1.2 2.1zM334.2 303.1l1.5 9.9l-2.4 2.6l-1.5-8.5zM336.8 309l1.2-2l-2.3 2.8l-1.3 1.7zM339.3 304.5l1.4 6.5l-2.4 2.5l-1.4-6.8zM348.5 311.3l1.3-2.4l-2.4 3.3l-1.2 2.8zM353.7 307.5l1.4 5.4l-2.3 2.8l-1.4-4.6zM357.8 312.9l1.4-1.2l-2.3 3.2l-1.3.8zM361.9 314.8l1.4-2.6l-2.2 3.4l-1.4 2.5zM363.3 312.2l1.4 2.5l-2.2 3.6l-1.4-2.7zM366.1 318l1.4-6.3l-2.2 2.9l-1.4 6.7zM367.5 311.7l1.4 5.4l-2.2 3.2l-1.4-5.7z" fill="#30ffc0" stroke="#30ffc0" stroke-width="0.5"/>
<path d="M297.8 301.4l1.2 2l-2.6 2.1l-1.2-2.4zM299 303.4l.9-2.3l-2.5 2.7l-1 1.7zM325.7 308.1l1.3 1.9l-2.5 2.4l-1.2-1.3zM327 310l1.1-1.8l-2.4 2.8l-1.2 1.4zM328.1 308.2l1.3 1.1l-2.4 3l-1.3-1.3zM329.4 309.3l1.2-.1l-2.4 2.5l-1.2.6zM330.6 309.2l1.2-.5l-2.4 3.2l-1.2-.2zM335.7 313l1.1-4l-2.4 2.5l-1.1 4.1zM340.7 311l1.2-1.2l-2.3 3.1l-1.3.6zM341.9 309.8l1.4 1.8l-2.4 3.1l-1.3-1.8zM355.1 312.9l1.4 1.8l-2.3 3l-1.4-2zM356.5 314.7l1.3-1.8l-2.2 2.8l-1.4 2zM359.2 311.7l1.4 4.5l-2.3 3.3l-1.4-4.6zM360.6 316.2l1.3-1.4l-2.2 3.3l-1.4 1.4zM364.7 314.7l1.4 3.3l-2.2 3.3l-1.4-3zM368.9 317.1l1.4 1.8l-2.2 3.2l-1.4-1.8zM373.1 319.2l1.5-4.1l-2.2 3.2l-1.5 4.3zM374.6 315.1l1.3 8l-2.1 2.9l-1.4-7.7z" fill="#1af6d9" stroke="#1af6d9" stroke-width="0.5"/>
<path d="M343.3 311.6l1.3 3.3l-2.3 2.9l-1.4-3.1zM344.6 314.9l1.3-1.7l-2.3 3.1l-1.3 1.5zM345.9 313.2l1.3 3.6l-2.3 2.4l-1.3-2.9zM347.2 316.8l1.3-5.5l-2.3 3.7l-1.3 4.2zM370.3 318.9l1.4 1.7l-2.2 3l-1.4-1.5zM371.7 320.6l1.4-1.4l-2.2 3.4l-1.4 1zM375.9 323.1l1.5-2.8l-2.2 3.5l-1.4 2.2zM377.4 320.3l1.4 1.6l-2.1 3.1l-1.5-1.2zM378.8 321.9l1.5-1.4l-2.1 3.7l-1.5.8zM380.3 320.5l1.5.6l-2.2 3.2l-1.4-.1zM381.8 321.1l1.3 3.4l-2.1 3l-1.4-3.2zM383.1 324.5l1.6-2.1l-2.2 4l-1.5 1.1zM384.7 322.4l1.4 2.8l-2.1 3.8l-1.5-2.6z" fill="#10e8e8" stroke="#10e8e8" stroke-width="0.5"/>
<path d="M386.1 325.2l1.4 1.5l-2.1 3.9l-1.4-1.6z" fill="#06d9f6" stroke="#06d9f6" stroke-width="0.5"/>
<path d="M387.5 326.7l1.5 1.9l-2.1 3.3l-1.5-1.3zM389 328.6l1.5.2l-2.1 3.8l-1.5-.7zM390.5 328.8l1.4 1.5l-2 3.8l-1.5-1.5zM404.2 332.6l1.6-2.2l-2 3.9l-1.7 2.6zM405.8 330.4l1.4 3.8l-2 4.1l-1.4-4z" fill="#00c7ff" stroke="#00c7ff" stroke-width="0.5"/>
<path d="M391.9 330.3l1.5 2.6l-2.1 3.5l-1.4-2.3zM393.4 332.9l1.5-2.2l-2 3.7l-1.6 2zM394.9 330.7l1.5 2.8l-2 3.1l-1.5-2.2zM402.4 337.7l1.8-5.1l-2.1 4.3l-1.7 4.7zM411.9 337.5l1.8-3.4l-2 3.6l-1.8 4.2zM413.7 334.1l1.1 8.1l-1.9 4.5l-1.2-9z" fill="#00b1ff" stroke="#00b1ff" stroke-width="0.5"/>
<path d="M396.4 333.5l1.4 3.2l-2 3.7l-1.4-3.8zM397.8 336.7l1.5-.7l-2 3.6l-1.5.8zM407.2 334.2l1.3 6.3l-2 4.1l-1.3-6.3zM408.5 340.5l1.7-2.9l-1.9 4.2l-1.8 2.8zM410.2 337.6l1.7-.1l-2 4.4l-1.6-.1z" fill="#009bff" stroke="#009bff" stroke-width="0.5"/>
<path d="M399.3 336l1.4 5.6l-2 3.5l-1.4-5.5zM400.7 341.6l1.7-3.9l-2 3.9l-1.7 3.5zM414.8 342.2l1.7-1l-1.9 3.4l-1.7 2.1zM416.5 341.2l1.3 4.7l-1.8 3.8l-1.4-5.1z" fill="#0085ff" stroke="#0085ff" stroke-width="0.5"/>
<path d="M417.8 345.9l1.5 3.5l-2 4.5l-1.3-4.2zM419.3 349.4l1.6-.1l-1.9 4.5l-1.7.1z" fill="#005cfd" stroke="#005cfd" stroke-width="0.5"/>
<path d="M420.9 349.3l1.4 4.1l-1.9 3.7l-1.4-3.3z" fill="#0048fb" stroke="#0048fb" stroke-width="0.5"/>
<path d="M422.3 353.4l1.2 5.8l-1.8 3.2l-1.3-5.3z" fill="#0034f9" stroke="#0034f9" stroke-width="0.5"/>
<path d="M423.5 359.2l1.4 3.6l-1.8 3.6l-1.4-4z" fill="#001be4" stroke="#001be4" stroke-width="0.5"/>
<path d="M424.9 362.8l1.6 1.7l-1.8 3l-1.6-1.1z" fill="#0012d5" stroke="#0012d5" stroke-width="0.5"/>
<path d="M426.5 364.5l1.4 2.5l-1.7 2.6l-1.5-2.1zM427.9 367l1.6 1.2l-1.7 2.2l-1.6-.8zM429.5 368.2l1.6.4l-1.6 2.3l-1.7-.5zM431.1 368.6l1.7.7l-1.7 2.1l-1.6-.5zM432.8 369.3l1.6.4l-1.6 2.2l-1.7-.5zM434.4 369.7l1.7.5l-1.6 2.1l-1.7-.4zM436.1 370.2l1.6.4l-1.5 2.2l-1.7-.5z" fill="#0009c7" stroke="#0009c7" stroke-width="0.5"/>
<path d="M286.5 287.4l1.2 2.4l-2.7 1.7l-1.2-2.5z" fill="#f7ff07" stroke="#f7ff07" stroke-width="0.5"/>
<path d="M287.7 289.8l1.3 2.1l-2.7 1.7l-1.3-2.1z" fill="#d0ff28" stroke="#d0ff28" stroke-width="0.5"/>
<path d="M289 291.9l1.2 2.7l-2.6 1.7l-1.3-2.7z" fill="#a8ff49" stroke="#a8ff49" stroke-width="0.5"/>
<path d="M290.2 294.6l1.3 2l-2.7 1.7l-1.2-2zM291.5 296.6l1.1.5l-2.6 2.1l-1.2-.9zM307.3 298.7l1.2 1.1l-2.5 2.4l-1.3-1.1z" fill="#80ff70" stroke="#80ff70" stroke-width="0.5"/>
<path d="M292.6 297.1l1.3 3.8l-2.6 1.9l-1.3-3.6zM304 301.5l1.2.3l-2.6 2.5l-1.1-.3zM305.2 301.8l1.1.6l-2.5 1.7l-1.2.2zM306.3 302.4l1-3.7l-2.6 2.4l-.9 3zM308.5 299.8l1.4 4l-2.5 2.5l-1.4-4.1zM309.9 303.8l1-2l-2.5 2l-1 2.5zM310.9 301.8l1.3 1.3l-2.6 1.7l-1.2-1zM314.6 303.5l1.2 1.1l-2.5 2.3l-1.2-.6zM319.5 306.9l1-3.8l-2.5 2.3l-1 3.8zM320.5 303.1l1.4 2.9l-2.5 2.1l-1.4-2.7zM335.7 309.8l1.2-3.1l-2.5 2.1l-1.1 3.8z" fill="#58ff98" stroke="#58ff98" stroke-width="0.5"/>
<path d="M293.9 300.9l1.3 2.2l-2.7 1.7l-1.2-2zM303 303.3l1-1.8l-2.5 2.5l-1.1 1.9zM312.2 303.1l1.3 2.1l-2.6 2.3l-1.3-2.7zM313.5 305.2l1.1-1.7l-2.5 2.8l-1.2 1.2zM315.8 304.6l1.2.6l-2.5 2.5l-1.2-.8zM317 305.2l1.3 1.1l-2.6 2.2l-1.2-.8zM318.3 306.3l1.2.6l-2.5 2.3l-1.3-.7zM330.6 309.8l1.2-2.7l-2.4 4.1l-1.2 1.4zM336.9 306.7l1.4 6.8l-2.4 2.4l-1.5-7.1zM347.4 312.2l1.4.4l-2.4 2.8l-1.3.1zM348.8 312.6l1.3-.4l-2.3 2.8l-1.4.4zM350.1 312.2l1.3-1.1l-2.3 3.5l-1.3.4zM351.4 311.1l1.4 4.6l-2.3 2.9l-1.4-4z" fill="#30ffc0" stroke="#30ffc0" stroke-width="0.5"/>
<path d="M295.2 303.1l1.2 2.4l-2.6 2.1l-1.3-2.8zM296.4 305.5l1-1.7l-2.5 2.7l-1.1 1.1zM297.4 303.8l1.1-.6l-2.6 2.2l-1 1.1zM298.5 303.2l1.2 1.4l-2.6 2l-1.2-1.2zM299.7 304.6l1-1.4l-2.6 2.2l-1 1.2zM300.7 303.2l1.2 1.2l-2.6 1.9l-1.2-.9zM301.9 304.4l1.1-1.1l-2.6 2.6l-1.1.4zM321.9 306l1.4 5.1l-2.5 3l-1.4-6zM329.4 311.9l1.2-2.1l-2.4 2.8l-1.2 2.5zM331.8 307.1l1.5 8.5l-2.4 2.6l-1.5-7zM334.4 311.5l1.3-1.7l-2.4 2.8l-1.3 1.5zM338.3 313.5l1.3-.6l-2.4 3l-1.3 0zM339.6 312.9l1.3 1.8l-2.3 3.2l-1.4-2zM346.2 315l1.2-2.8l-2.3 3.3l-1.3 3.2zM352.8 315.7l1.4 2l-2.3 3l-1.4-2.1zM354.2 317.7l1.4-2l-2.4 2.9l-1.3 2.1zM355.6 315.7l1.3-.8l-2.3 3.1l-1.4.6zM356.9 314.9l1.4 4.6l-2.3 3.4l-1.4-4.9zM359.7 318.1l1.4-2.5l-2.3 3.4l-1.4 2.5zM361.1 315.6l1.4 2.7l-2.3 3.7l-1.4-3zM363.9 321.3l1.4-6.7l-2.3 2.8l-1.4 7.2zM365.3 314.6l1.4 5.7l-2.3 3.3l-1.4-6.2zM370.9 322.6l1.5-4.3l-2.2 3.2l-1.5 4.5z" fill="#1af6d9" stroke="#1af6d9" stroke-width="0.5"/>
<path d="M323.3 311.1l1.2 1.3l-2.4 2.4l-1.3-.7zM324.5 312.4l1.2-1.4l-2.4 2.9l-1.2.9zM325.7 311l1.3 1.3l-2.4 3.2l-1.3-1.6zM327 312.3l1.2-.6l-2.4 2.5l-1.2 1.3zM328.2 311.7l1.2.2l-2.4 3.2l-1.2-.9zM333.3 315.6l1.1-4.1l-2.4 2.6l-1.1 4.1zM340.9 314.7l1.4 3.1l-2.4 2.9l-1.3-2.8zM344.9 319.2l1.3-4.2l-2.4 3.7l-1.3 2.9zM358.3 319.5l1.4-1.4l-2.3 3.4l-1.4 1.4zM362.5 318.3l1.4 3l-2.3 3.3l-1.4-2.6zM366.7 320.3l1.4 1.8l-2.3 3.2l-1.4-1.7zM372.4 318.3l1.4 7.7l-2.2 2.9l-1.4-7.4zM378.2 324.2l1.4.1l-2.1 3.2l-1.5.5z" fill="#10e8e8" stroke="#10e8e8" stroke-width="0.5"/>
<path d="M342.3 317.8l1.3-1.5l-2.4 3.2l-1.3 1.2zM343.6 316.3l1.3 2.9l-2.4 2.4l-1.3-2.1zM368.1 322.1l1.4 1.5l-2.2 3l-1.5-1.3zM369.5 323.6l1.4-1l-2.2 3.4l-1.4.6zM373.8 326l1.4-2.2l-2.2 3.5l-1.4 1.6zM375.2 323.8l1.5 1.2l-2.2 3l-1.5-.7zM376.7 325l1.5-.8l-2.2 3.8l-1.5 0zM379.6 324.3l1.4 3.2l-2.1 2.9l-1.4-2.9zM381 327.5l1.5-1.1l-2.1 4.1l-1.5-.1zM382.5 326.4l1.5 2.6l-2.2 3.8l-1.4-2.3z" fill="#06d9f6" stroke="#06d9f6" stroke-width="0.5"/>
<path d="M384 329l1.4 1.6l-2.1 3.9l-1.5-1.7zM385.4 330.6l1.5 1.3l-2.1 3.3l-1.5-.7z" fill="#00c7ff" stroke="#00c7ff" stroke-width="0.5"/>
<path d="M386.9 331.9l1.5.7l-2.1 3.8l-1.5-1.2zM388.4 332.6l1.5 1.5l-2.2 3.8l-1.4-1.5zM391.3 336.4l1.6-2l-2.1 3.8l-1.6 1.7zM392.9 334.4l1.5 2.2l-2.1 3.1l-1.5-1.5zM402.1 336.9l1.7-2.6l-2 3.9l-1.7 3zM403.8 334.3l1.4 4l-2 4.2l-1.4-4.3z" fill="#00b1ff" stroke="#00b1ff" stroke-width="0.5"/>
<path d="M389.9 334.1l1.4 2.3l-2.1 3.5l-1.5-2zM394.4 336.6l1.4 3.8l-2.1 3.8l-1.4-4.5zM400.4 341.6l1.7-4.7l-2 4.3l-1.8 4.3zM409.9 341.9l1.8-4.2l-2 3.7l-1.8 5zM411.7 337.7l1.2 9l-2 4.5l-1.2-9.8z" fill="#009bff" stroke="#009bff" stroke-width="0.5"/>
<path d="M395.8 340.4l1.5-.8l-2 3.7l-1.6.9zM405.2 338.3l1.3 6.3l-2 4.1l-1.3-6.2zM406.5 344.6l1.8-2.8l-2 4.1l-1.8 2.8zM408.3 341.8l1.6.1l-2 4.5l-1.6-.5zM412.9 346.7l1.7-2.1l-1.9 3.4l-1.8 3.2z" fill="#0085ff" stroke="#0085ff" stroke-width="0.5"/>
<path d="M397.3 339.6l1.4 5.5l-2.1 3.6l-1.3-5.4zM398.7 345.1l1.7-3.5l-2.1 3.9l-1.7 3.2zM414.6 344.6l1.4 5.1l-2 3.7l-1.3-5.4z" fill="#0070fe" stroke="#0070fe" stroke-width="0.5"/>
<path d="M416 349.7l1.3 4.2l-1.9 4.5l-1.4-5zM417.3 353.9l1.7-.1l-1.9 4.5l-1.7.1z" fill="#0048fb" stroke="#0048fb" stroke-width="0.5"/>
<path d="M419 353.8l1.4 3.3l-1.8 3.7l-1.5-2.5z" fill="#0034f9" stroke="#0034f9" stroke-width="0.5"/>
<path d="M420.4 357.1l1.3 5.3l-1.8 3.2l-1.3-4.8z" fill="#0024f2" stroke="#0024f2" stroke-width="0.5"/>
<path d="M421.7 362.4l1.4 4l-1.8 3.3l-1.4-4.1zM423.1 366.4l1.6 1.1l-1.7 2.9l-1.7-.7z" fill="#0012d5" stroke="#0012d5" stroke-width="0.5"/>
<path d="M424.7 367.5l1.5 2.1l-1.7 2.3l-1.5-1.5zM426.2 369.6l1.6.8l-1.6 2.2l-1.7-.7zM427.8 370.4l1.7.5l-1.7 2.2l-1.6-.5zM429.5 370.9l1.6.5l-1.6 2.2l-1.7-.5zM431.1 371.4l1.7.5l-1.6 2.1l-1.7-.4zM432.8 371.9l1.7.4l-1.6 2.2l-1.7-.5zM434.5 372.3l1.7.5l-1.7 2.2l-1.6-.5z" fill="#0009c7" stroke="#0009c7" stroke-width="0.5"/>
<path d="M283.8 289l1.2 2.5l-2.7 1.6l-1.3-2.5z" fill="#f7ff07" stroke="#f7ff07" stroke-width="0.5"/>
<path d="M285 291.5l1.3 2.1l-2.8 1.7l-1.2-2.2z" fill="#d0ff28" stroke="#d0ff28" stroke-width="0.5"/>
<path d="M286.3 293.6l1.3 2.7l-2.8 1.7l-1.3-2.7z" fill="#a8ff49" stroke="#a8ff49" stroke-width="0.5"/>
<path d="M287.6 296.3l1.2 2l-2.7 1.7l-1.3-2z" fill="#80ff70" stroke="#80ff70" stroke-width="0.5"/>
<path d="M288.8 298.3l1.2.9l-2.7 2.1l-1.2-1.3zM303.8 304.1l.9-3l-2.6 2.4l-1 2.4zM304.7 301.1l1.3 1.1l-2.6 2.4l-1.3-1.1zM308.4 303.8l1.2 1l-2.6 1.7l-1.2-.6zM318 305.4l1.4 2.7l-2.6 2.1l-1.3-2.4z" fill="#58ff98" stroke="#58ff98" stroke-width="0.5"/>
<path d="M290 299.2l1.3 3.6l-2.7 1.8l-1.3-3.3zM300.4 305.9l1.1-1.9l-2.6 2.4l-1.1 2.2zM301.5 304l1.1.3l-2.6 2.6l-1.1-.5zM302.6 304.3l1.2-.2l-2.7 1.8l-1.1 1zM306 302.2l1.4 4.1l-2.6 2.5l-1.4-4.2zM307.4 306.3l1-2.5l-2.6 2.1l-1 2.9zM309.6 304.8l1.3 2.7l-2.5 2.3l-1.4-3.3zM310.9 307.5l1.2-1.2l-2.6 2.8l-1.1.7zM312.1 306.3l1.2.6l-2.6 2.3l-1.2-.1zM313.3 306.9l1.2.8l-2.5 2.5l-1.3-1zM314.5 307.7l1.2.8l-2.5 2.2l-1.2-.5zM317 309.2l1-3.8l-2.5 2.4l-1.1 3.6zM333.3 312.6l1.1-3.8l-2.4 2.2l-1.2 4.5zM334.4 308.8l1.5 7.1l-2.4 2.5l-1.5-7.4zM347.8 315l1.3-.4l-2.4 3.6l-1.3-.3z" fill="#30ffc0" stroke="#30ffc0" stroke-width="0.5"/>
<path d="M291.3 302.8l1.2 2l-2.6 1.6l-1.3-1.8zM294.9 306.5l1-1.1l-2.6 2.2l-1 1.7zM295.9 305.4l1.2 1.2l-2.6 1.9l-1.2-.9zM297.1 306.6l1-1.2l-2.6 2.1l-1 1zM298.1 305.4l1.2.9l-2.6 2l-1.2-.8zM299.3 306.3l1.1-.4l-2.6 2.7l-1.1-.3zM315.7 308.5l1.3.7l-2.6 2.2l-1.2-.7zM319.4 308.1l1.4 6l-2.5 3.1l-1.5-7zM328.2 312.6l1.2-1.4l-2.4 4.1l-1.3.1zM332 314.1l1.3-1.5l-2.5 2.9l-1.2 1.2zM345.1 315.5l1.3-.1l-2.4 2.9l-1.3.5zM346.4 315.4l1.4-.4l-2.4 2.9l-1.4.4zM349.1 314.6l1.4 4l-2.4 2.9l-1.4-3.3zM353.2 318.6l1.4-.6l-2.3 3.1l-1.4.4zM363 317.4l1.4 6.2l-2.3 3.2l-1.4-6.5z" fill="#1af6d9" stroke="#1af6d9" stroke-width="0.5"/>
<path d="M292.5 304.8l1.3 2.8l-2.6 2.1l-1.3-3.3zM293.8 307.6l1.1-1.1l-2.6 2.8l-1.1.4zM322.1 314.8l1.2-.9l-2.5 2.8l-1.2.5zM323.3 313.9l1.3 1.6l-2.5 3.1l-1.3-1.9zM324.6 315.5l1.2-1.3l-2.5 2.6l-1.2 1.8zM325.8 314.2l1.2.9l-2.4 3.2l-1.3-1.5zM327 315.1l1.2-2.5l-2.5 2.8l-1.1 2.9zM329.4 311.2l1.5 7l-2.5 2.7l-1.4-5.6zM330.9 318.2l1.1-4.1l-2.4 2.6l-1.2 4.2zM335.9 315.9l1.3 0l-2.4 3.1l-1.3-.6zM337.2 315.9l1.4 2l-2.5 3.2l-1.3-2.1zM343.8 318.7l1.3-3.2l-2.4 3.3l-1.3 3.6zM350.5 318.6l1.4 2.1l-2.4 3l-1.4-2.2zM351.9 320.7l1.3-2.1l-2.3 2.9l-1.4 2.2zM354.6 318l1.4 4.9l-2.3 3.3l-1.4-5.1zM357.4 321.5l1.4-2.5l-2.3 3.5l-1.4 2.3zM358.8 319l1.4 3l-2.3 3.7l-1.4-3.2zM361.6 324.6l1.4-7.2l-2.3 2.9l-1.4 7.6zM368.7 326l1.5-4.5l-2.3 3.2l-1.5 4.8zM370.2 321.5l1.4 7.4l-2.3 3l-1.4-7.2z" fill="#10e8e8" stroke="#10e8e8" stroke-width="0.5"/>
<path d="M320.8 314.1l1.3.7l-2.5 2.4l-1.3 0zM338.6 317.9l1.3 2.8l-2.4 2.9l-1.4-2.5zM339.9 320.7l1.3-1.2l-2.4 3.2l-1.3.9zM341.2 319.5l1.3 2.1l-2.4 2.4l-1.3-1.3zM342.5 321.6l1.3-2.9l-2.4 3.7l-1.3 1.6zM356 322.9l1.4-1.4l-2.3 3.3l-1.4 1.4zM360.2 322l1.4 2.6l-2.3 3.3l-1.4-2.2zM364.4 323.6l1.4 1.7l-2.2 3.2l-1.5-1.7zM365.8 325.3l1.5 1.3l-2.3 3.1l-1.4-1.2zM367.3 326.6l1.4-.6l-2.3 3.5l-1.4.2zM373 327.3l1.5.7l-2.2 3.1l-1.5-.2zM374.5 328l1.5 0l-2.3 3.9l-1.4-.8zM376 328l1.5-.5l-2.3 3.2l-1.5 1.2zM377.5 327.5l1.4 2.9l-2.2 3l-1.5-2.7z" fill="#06d9f6" stroke="#06d9f6" stroke-width="0.5"/>
<path d="M371.6 328.9l1.4-1.6l-2.2 3.6l-1.5 1zM378.9 330.4l1.5.1l-2.2 4l-1.5-1.1zM380.4 330.5l1.4 2.3l-2.2 3.9l-1.4-2.2z" fill="#00c7ff" stroke="#00c7ff" stroke-width="0.5"/>
<path d="M381.8 332.8l1.5 1.7l-2.2 3.9l-1.5-1.7zM383.3 334.5l1.5.7l-2.2 3.3l-1.5-.1zM384.8 335.2l1.5 1.2l-2.2 3.9l-1.5-1.8z" fill="#00b1ff" stroke="#00b1ff" stroke-width="0.5"/>
<path d="M386.3 336.4l1.4 1.5l-2.1 3.9l-1.5-1.5zM387.7 337.9l1.5 2l-2.1 3.6l-1.5-1.7zM389.2 339.9l1.6-1.7l-2.1 3.8l-1.6 1.5zM390.8 338.2l1.5 1.5l-2.1 3.2l-1.5-.9zM400.1 341.2l1.7-3l-2.1 4l-1.7 3.3zM401.8 338.2l1.4 4.3l-2.1 4.2l-1.4-4.5zM407.9 346.4l1.8-5l-2 3.7l-1.9 5.8z" fill="#009bff" stroke="#009bff" stroke-width="0.5"/>
<path d="M392.3 339.7l1.4 4.5l-2.1 3.7l-1.4-5zM398.3 345.5l1.8-4.3l-2.1 4.3l-1.8 3.9zM406.3 345.9l1.6.5l-2.1 4.5l-1.6-.7zM409.7 341.4l1.2 9.8l-2 4.6l-1.2-10.7z" fill="#0085ff" stroke="#0085ff" stroke-width="0.5"/>
<path d="M393.7 344.2l1.6-.9l-2.1 3.6l-1.6 1zM395.3 343.3l1.3 5.4l-2 3.6l-1.4-5.4zM403.2 342.5l1.3 6.2l-2 4.2l-1.4-6.2zM404.5 348.7l1.8-2.8l-2.1 4.3l-1.7 2.7zM410.9 351.2l1.8-3.2l-2 3.5l-1.8 4.3zM412.7 348l1.3 5.4l-1.9 3.8l-1.4-5.7z" fill="#0070fe" stroke="#0070fe" stroke-width="0.5"/>
<path d="M396.6 348.7l1.7-3.2l-2.1 3.9l-1.6 2.9z" fill="#005cfd" stroke="#005cfd" stroke-width="0.5"/>
<path d="M414 353.4l1.4 5l-2 4.5l-1.3-5.7z" fill="#0048fb" stroke="#0048fb" stroke-width="0.5"/>
<path d="M415.4 358.4l1.7-.1l-2 4.5l-1.7.1zM417.1 358.3l1.5 2.5l-1.9 3.7l-1.6-1.7z" fill="#0034f9" stroke="#0034f9" stroke-width="0.5"/>
<path d="M418.6 360.8l1.3 4.8l-1.8 3.1l-1.4-4.2z" fill="#001be4" stroke="#001be4" stroke-width="0.5"/>
<path d="M419.9 365.6l1.4 4.1l-1.8 2.9l-1.4-3.9z" fill="#0012d5" stroke="#0012d5" stroke-width="0.5"/>
<path d="M421.3 369.7l1.7.7l-1.8 2.6l-1.7-.4zM423 370.4l1.5 1.5l-1.7 2.3l-1.6-1.2zM424.5 371.9l1.7.7l-1.8 2.2l-1.6-.6zM426.2 372.6l1.6.5l-1.7 2.2l-1.7-.5zM427.8 373.1l1.7.5l-1.7 2.2l-1.7-.5zM429.5 373.6l1.7.4l-1.7 2.3l-1.7-.5zM431.2 374l1.7.5l-1.7 2.2l-1.7-.4zM432.9 374.5l1.6.5l-1.6 2.2l-1.7-.5z" fill="#0009c7" stroke="#0009c7" stroke-width="0.5"/>
<path d="M281 290.6l1.3 2.5l-2.8 1.7l-1.3-2.6zM282.3 293.1l1.2 2.2l-2.7 1.7l-1.3-2.2z" fill="#d0ff28" stroke="#d0ff28" stroke-width="0.5"/>
<path d="M283.5 295.3l1.3 2.7l-2.7 1.8l-1.3-2.8z" fill="#a8ff49" stroke="#a8ff49" stroke-width="0.5"/>
<path d="M284.8 298l1.3 2l-2.8 1.7l-1.2-1.9z" fill="#80ff70" stroke="#80ff70" stroke-width="0.5"/>
<path d="M286.1 300l1.2 1.3l-2.7 2.1l-1.3-1.7zM301.1 305.9l1-2.4l-2.6 2.5l-1.1 1.6zM302.1 303.5l1.3 1.1l-2.7 2.4l-1.2-1z" fill="#58ff98" stroke="#58ff98" stroke-width="0.5"/>
<path d="M287.3 301.3l1.3 3.3l-2.7 1.9l-1.3-3.1zM300 306.9l1.1-1l-2.7 1.7l-1 1.9zM303.4 304.6l1.4 4.2l-2.6 2.5l-1.5-4.3zM304.8 308.8l1-2.9l-2.7 2l-.9 3.4zM305.8 305.9l1.2.6l-2.7 1.8l-1.2-.4zM307 306.5l1.4 3.3l-2.7 2.2l-1.4-3.7zM314.4 311.4l1.1-3.6l-2.6 2.4l-1.1 3.5zM315.5 307.8l1.3 2.4l-2.6 2.1l-1.3-2.1zM330.8 315.5l1.2-4.5l-2.6 2.2l-1.1 5.1z" fill="#30ffc0" stroke="#30ffc0" stroke-width="0.5"/>
<path d="M288.6 304.6l1.3 1.8l-2.8 1.7l-1.2-1.6zM294.5 308.5l1-1l-2.7 2.2l-1 .8zM295.5 307.5l1.2.8l-2.7 2l-1.2-.6zM296.7 308.3l1.1.3l-2.6 2.7l-1.2-1zM297.8 308.6l1.1-2.2l-2.7 2.5l-1 2.4zM298.9 306.4l1.1.5l-2.6 2.6l-1.2-.6zM308.4 309.8l1.1-.7l-2.6 2.8l-1.2.1zM309.5 309.1l1.2.1l-2.6 2.3l-1.2.4zM310.7 309.2l1.3 1l-2.6 2.5l-1.3-1.2zM312 310.2l1.2.5l-2.6 2.2l-1.2-.2zM313.2 310.7l1.2.7l-2.6 2.3l-1.2-.8zM332 311l1.5 7.4l-2.5 2.5l-1.6-7.7zM342.7 318.8l1.3-.5l-2.4 2.8l-1.3 1zM344 318.3l1.4-.4l-2.5 2.9l-1.3.3zM345.4 317.9l1.3.3l-2.4 3.7l-1.4-1.1z" fill="#1af6d9" stroke="#1af6d9" stroke-width="0.5"/>
<path d="M289.9 306.4l1.3 3.3l-2.7 2.1l-1.4-3.7zM291.2 309.7l1.1-.4l-2.7 2.8l-1.1-.3zM292.3 309.3l1-1.7l-2.7 2.2l-1 2.3zM293.3 307.6l1.2.9l-2.7 2l-1.2-.7zM316.8 310.2l1.5 7l-2.5 3.1l-1.6-8zM324.6 318.3l1.1-2.9l-2.5 2.8l-1.1 3.4zM325.7 315.4l1.3-.1l-2.5 4.1l-1.3-1.2zM329.6 316.7l1.2-1.2l-2.5 2.8l-1.2 1zM333.5 318.4l1.3.6l-2.5 3.2l-1.3-1.3zM346.7 318.2l1.4 3.3l-2.4 2.9l-1.4-2.5zM349.5 323.7l1.4-2.2l-2.4 2.9l-1.4 2.4zM350.9 321.5l1.4-.4l-2.4 3.2l-1.4.1zM355.1 324.8l1.4-2.3l-2.4 3.4l-1.4 2.3zM359.3 327.9l1.4-7.6l-2.3 2.9l-1.4 8zM360.7 320.3l1.4 6.5l-2.3 3.3l-1.4-6.9z" fill="#10e8e8" stroke="#10e8e8" stroke-width="0.5"/>
<path d="M318.3 317.2l1.3 0l-2.6 2.5l-1.2.6zM319.6 317.2l1.2-.5l-2.6 2.9l-1.2.1zM320.8 316.7l1.3 1.9l-2.5 3.2l-1.4-2.2zM322.1 318.6l1.2-1.8l-2.6 2.6l-1.1 2.4zM323.3 316.8l1.3 1.5l-2.5 3.3l-1.4-2.2zM327 315.3l1.4 5.6l-2.5 2.6l-1.4-4.1zM328.4 320.9l1.2-4.2l-2.5 2.6l-1.2 4.2zM334.8 319l1.3 2.1l-2.4 3.2l-1.4-2.1zM341.4 322.4l1.3-3.6l-2.4 3.3l-1.3 4.1zM348.1 321.5l1.4 2.2l-2.4 3.1l-1.4-2.4zM352.3 321.1l1.4 5.1l-2.4 3.5l-1.4-5.4zM353.7 326.2l1.4-1.4l-2.4 3.4l-1.4 1.5zM356.5 322.5l1.4 3.2l-2.4 3.8l-1.4-3.6zM357.9 325.7l1.4 2.2l-2.3 3.3l-1.5-1.7zM362.1 326.8l1.5 1.7l-2.4 3.3l-1.4-1.7zM366.4 329.5l1.5-4.8l-2.3 3.3l-1.5 5zM367.9 324.7l1.4 7.2l-2.3 2.9l-1.4-6.8z" fill="#06d9f6" stroke="#06d9f6" stroke-width="0.5"/>
<path d="M336.1 321.1l1.4 2.5l-2.4 2.9l-1.4-2.2zM337.5 323.6l1.3-.9l-2.4 3.2l-1.3.6zM338.8 322.7l1.3 1.3l-2.4 2.4l-1.3-.5zM340.1 324l1.3-1.6l-2.4 3.8l-1.3.2zM363.6 328.5l1.4 1.2l-2.3 3l-1.5-.9zM365 329.7l1.4-.2l-2.3 3.5l-1.4-.3zM369.3 331.9l1.5-1l-2.3 3.6l-1.5.3zM370.8 330.9l1.5.2l-2.3 3.1l-1.5.3zM372.3 331.1l1.4.8l-2.2 3.8l-1.5-1.5zM373.7 331.9l1.5-1.2l-2.2 3.3l-1.5 1.7zM375.2 330.7l1.5 2.7l-2.2 3.1l-1.5-2.5z" fill="#00c7ff" stroke="#00c7ff" stroke-width="0.5"/>
<path d="M376.7 333.4l1.5 1.1l-2.3 4.2l-1.4-2.2zM378.2 334.5l1.4 2.2l-2.2 3.9l-1.5-1.9z" fill="#00b1ff" stroke="#00b1ff" stroke-width="0.5"/>
<path d="M379.6 336.7l1.5 1.7l-2.2 4l-1.5-1.8zM381.1 338.4l1.5.1l-2.2 3.3l-1.5.6zM382.6 338.5l1.5 1.8l-2.2 3.8l-1.5-2.3zM398 345.5l1.7-3.3l-2.1 3.9l-1.7 3.8z" fill="#009bff" stroke="#009bff" stroke-width="0.5"/>
<path d="M384.1 340.3l1.5 1.5l-2.2 3.8l-1.5-1.5zM385.6 341.8l1.5 1.7l-2.2 3.5l-1.5-1.4zM387.1 343.5l1.6-1.5l-2.2 3.8l-1.6 1.2zM388.7 342l1.5.9l-2.1 3.2l-1.6-.3zM399.7 342.2l1.4 4.5l-2.1 4.2l-1.4-4.8zM405.8 350.9l1.9-5.8l-2 3.8l-2 6.5z" fill="#0085ff" stroke="#0085ff" stroke-width="0.5"/>
<path d="M390.2 342.9l1.4 5l-2.1 3.9l-1.4-5.7zM391.6 347.9l1.6-1l-2.1 3.7l-1.6 1.2zM396.2 349.4l1.8-3.9l-2.1 4.4l-1.8 3.4zM401.1 346.7l1.4 6.2l-2.1 4.2l-1.4-6.2zM404.2 350.2l1.6.7l-2.1 4.5l-1.5-1zM407.7 345.1l1.2 10.7l-2.1 4.5l-1.1-11.4z" fill="#0070fe" stroke="#0070fe" stroke-width="0.5"/>
<path d="M393.2 346.9l1.4 5.4l-2.1 3.7l-1.4-5.4zM394.6 352.3l1.6-2.9l-2.1 3.9l-1.6 2.7zM402.5 352.9l1.7-2.7l-2 4.2l-1.8 2.7zM408.9 355.8l1.8-4.3l-2 3.5l-1.9 5.3zM410.7 351.5l1.4 5.7l-2 3.8l-1.4-6z" fill="#005cfd" stroke="#005cfd" stroke-width="0.5"/>
<path d="M412.1 357.2l1.3 5.7l-2 4.4l-1.3-6.3z" fill="#0034f9" stroke="#0034f9" stroke-width="0.5"/>
<path d="M413.4 362.9l1.7-.1l-2 4.4l-1.7.1zM415.1 362.8l1.6 1.7l-2 3.6l-1.6-.9z" fill="#0024f2" stroke="#0024f2" stroke-width="0.5"/>
<path d="M416.7 364.5l1.4 4.2l-1.9 3.1l-1.5-3.7z" fill="#001be4" stroke="#001be4" stroke-width="0.5"/>
<path d="M418.1 368.7l1.4 3.9l-1.8 2.6l-1.5-3.4z" fill="#0012d5" stroke="#0012d5" stroke-width="0.5"/>
<path d="M419.5 372.6l1.7.4l-1.8 2.6l-1.7-.4zM421.2 373l1.6 1.2l-1.8 2.3l-1.6-.9zM422.8 374.2l1.6.6l-1.7 2.3l-1.7-.6zM424.4 374.8l1.7.5l-1.7 2.3l-1.7-.5zM426.1 375.3l1.7.5l-1.7 2.3l-1.7-.5zM427.8 375.8l1.7.5l-1.7 2.2l-1.7-.4zM429.5 376.3l1.7.4l-1.7 2.3l-1.7-.5zM431.2 376.7l1.7.5l-1.7 2.3l-1.7-.5z" fill="#0009c7" stroke="#0009c7" stroke-width="0.5"/>
<path d="M278.2 292.2l1.3 2.6l-2.8 1.7l-1.4-2.7z" fill="#d0ff28" stroke="#d0ff28" stroke-width="0.5"/>
<path d="M279.5 294.8l1.3 2.2l-2.9 1.7l-1.2-2.2z" fill="#a8ff49" stroke="#a8ff49" stroke-width="0.5"/>
<path d="M280.8 297l1.3 2.8l-2.8 1.8l-1.4-2.9z" fill="#80ff70" stroke="#80ff70" stroke-width="0.5"/>
<path d="M282.1 299.8l1.2 1.9l-2.8 1.8l-1.2-1.9zM283.3 301.7l1.3 1.7l-2.8 2.2l-1.3-2.1z" fill="#58ff98" stroke="#58ff98" stroke-width="0.5"/>
<path d="M284.6 303.4l1.3 3.1l-2.8 2l-1.3-2.9zM298.4 307.6l1.1-1.6l-2.7 2.4l-1.1 1zM299.5 306l1.2 1l-2.7 2.5l-1.2-1.1zM303.1 307.9l1.2.4l-2.7 1.7l-1.2 0zM312.9 310.2l1.3 2.1l-2.6 2.2l-1.4-1.9z" fill="#30ffc0" stroke="#30ffc0" stroke-width="0.5"/>
<path d="M285.9 306.5l1.2 1.6l-2.7 1.8l-1.3-1.4zM296.2 308.9l1.2.6l-2.7 2.6l-1.2-.7zM297.4 309.5l1-1.9l-2.7 1.8l-1 2.7zM300.7 307l1.5 4.3l-2.7 2.6l-1.5-4.4zM302.2 311.3l.9-3.4l-2.7 2.1l-.9 3.9zM304.3 308.3l1.4 3.7l-2.6 2.4l-1.5-4.4zM305.7 312l1.2-.1l-2.6 2.8l-1.2-.3zM306.9 311.9l1.2-.4l-2.7 2.3l-1.1.9zM308.1 311.5l1.3 1.2l-2.7 2.5l-1.3-1.4zM309.4 312.7l1.2.2l-2.7 2.3l-1.2 0zM310.6 312.9l1.2.8l-2.6 2.3l-1.3-.8zM311.8 313.7l1.1-3.5l-2.7 2.4l-1 3.4zM328.3 318.3l1.1-5.1l-2.5 2.2l-1.1 5.8zM329.4 313.2l1.6 7.7l-2.6 2.6l-1.5-8.1z" fill="#1af6d9" stroke="#1af6d9" stroke-width="0.5"/>
<path d="M287.1 308.1l1.4 3.7l-2.7 2.1l-1.4-4zM289.6 312.1l1-2.3l-2.7 2.3l-.9 2.8zM290.6 309.8l1.2.7l-2.8 2l-1.1-.4zM291.8 310.5l1-.8l-2.7 2.3l-1.1.5zM292.8 309.7l1.2.6l-2.7 2l-1.2-.3zM294 310.3l1.2 1l-2.7 2.7l-1.2-1.7zM295.2 311.3l1-2.4l-2.7 2.5l-1 2.6zM314.2 312.3l1.6 8l-2.6 3.1l-1.6-8.9zM327.1 319.3l1.2-1l-2.5 2.9l-1.3.7zM340.3 322.1l1.3-1l-2.5 2.9l-1.3 1.5zM341.6 321.1l1.3-.3l-2.4 2.9l-1.4.3zM342.9 320.8l1.4 1.1l-2.4 3.6l-1.4-1.8zM344.3 321.9l1.4 2.5l-2.4 2.9l-1.4-1.8zM348.5 324.4l1.4-.1l-2.5 3.2l-1.3-.2zM358.4 323.2l1.4 6.9l-2.4 3.3l-1.4-7.2z" fill="#10e8e8" stroke="#10e8e8" stroke-width="0.5"/>
<path d="M288.5 311.8l1.1.3l-2.6 2.8l-1.2-1zM317 319.7l1.2-.1l-2.5 3l-1.3-.5zM322.1 321.6l1.1-3.4l-2.6 2.8l-1.1 3.9zM323.2 318.2l1.3 1.2l-2.5 4.1l-1.4-2.5zM325.9 323.5l1.2-4.2l-2.6 2.6l-1.1 4.3zM331 320.9l1.3 1.3l-2.5 3.1l-1.4-1.8zM339 326.2l1.3-4.1l-2.5 3.4l-1.2 4.5zM345.7 324.4l1.4 2.4l-2.4 3l-1.4-2.5zM347.1 326.8l1.4-2.4l-2.4 2.9l-1.4 2.5zM349.9 324.3l1.4 5.4l-2.4 3.4l-1.5-5.6zM352.7 328.2l1.4-2.3l-2.4 3.5l-1.4 2.3zM354.1 325.9l1.4 3.6l-2.4 3.8l-1.4-3.9zM357 331.2l1.4-8l-2.4 3l-1.4 8.4zM364.1 333l1.5-5l-2.3 3.2l-1.5 5.4z" fill="#06d9f6" stroke="#06d9f6" stroke-width="0.5"/>
<path d="M315.8 320.3l1.2-.6l-2.6 2.4l-1.2 1.3zM318.2 319.6l1.4 2.2l-2.6 3.2l-1.3-2.4zM319.6 321.8l1.1-2.4l-2.6 2.6l-1.1 3zM320.7 319.4l1.4 2.2l-2.6 3.3l-1.4-2.9zM324.5 319.4l1.4 4.1l-2.5 2.7l-1.4-2.7zM332.3 322.2l1.4 2.1l-2.5 3.2l-1.4-2.2zM333.7 324.3l1.4 2.2l-2.5 3l-1.4-2zM335.1 326.5l1.3-.6l-2.5 3.3l-1.3.3zM336.4 325.9l1.3.5l-2.5 2.5l-1.3.3zM337.7 326.4l1.3-.2l-2.4 3.8l-1.4-1.1zM351.3 329.7l1.4-1.5l-2.4 3.5l-1.4 1.4zM355.5 329.5l1.5 1.7l-2.4 3.4l-1.5-1.3zM359.8 330.1l1.4 1.7l-2.3 3.3l-1.5-1.7zM361.2 331.8l1.5.9l-2.4 3.1l-1.4-.7zM365.6 328l1.4 6.8l-2.3 3l-1.4-6.6zM373 334l1.5 2.5l-2.3 3l-1.5-2.2z" fill="#00c7ff" stroke="#00c7ff" stroke-width="0.5"/>
<path d="M362.7 332.7l1.4.3l-2.3 3.6l-1.5-.8zM367 334.8l1.5-.3l-2.3 3.6l-1.5-.3zM368.5 334.5l1.5-.3l-2.3 3.2l-1.5.7zM370 334.2l1.5 1.5l-2.3 3.9l-1.5-2.2zM371.5 335.7l1.5-1.7l-2.3 3.3l-1.5 2.3zM374.5 336.5l1.4 2.2l-2.2 4.1l-1.5-3.3z" fill="#00b1ff" stroke="#00b1ff" stroke-width="0.5"/>
<path d="M375.9 338.7l1.5 1.9l-2.3 4l-1.4-1.8z" fill="#009bff" stroke="#009bff" stroke-width="0.5"/>
<path d="M377.4 340.6l1.5 1.8l-2.3 4l-1.5-1.8zM378.9 342.4l1.5-.6l-2.2 3.4l-1.6 1.2zM380.4 341.8l1.5 2.3l-2.2 4l-1.5-2.9zM381.9 344.1l1.5 1.5l-2.2 3.9l-1.5-1.4zM386.5 345.8l1.6.3l-2.2 3.2l-1.6.4zM395.9 349.9l1.7-3.8l-2.1 4l-1.8 4.2zM397.6 346.1l1.4 4.8l-2.1 4.3l-1.4-5.1z" fill="#0085ff" stroke="#0085ff" stroke-width="0.5"/>
<path d="M383.4 345.6l1.5 1.4l-2.2 3.7l-1.5-1.2zM384.9 347l1.6-1.2l-2.2 3.9l-1.6 1zM388.1 346.1l1.4 5.7l-2.2 3.8l-1.4-6.3zM403.7 355.4l2-6.5l-2.1 3.8l-2 7.3z" fill="#0070fe" stroke="#0070fe" stroke-width="0.5"/>
<path d="M389.5 351.8l1.6-1.2l-2.2 3.8l-1.6 1.2zM394.1 353.3l1.8-3.4l-2.2 4.4l-1.7 3zM399 350.9l1.4 6.2l-2.1 4.2l-1.4-6.1zM402.2 354.4l1.5 1l-2.1 4.6l-1.6-1.3zM405.7 348.9l1.1 11.4l-2.1 4.6l-1.1-12.2z" fill="#005cfd" stroke="#005cfd" stroke-width="0.5"/>
<path d="M391.1 350.6l1.4 5.4l-2.2 3.6l-1.4-5.2zM392.5 356l1.6-2.7l-2.1 4l-1.7 2.3zM400.4 357.1l1.8-2.7l-2.2 4.3l-1.7 2.6zM406.8 360.3l1.9-5.3l-2 3.5l-2 6.4zM408.7 355l1.4 6l-2 3.8l-1.4-6.3z" fill="#0048fb" stroke="#0048fb" stroke-width="0.5"/>
<path d="M410.1 361l1.3 6.3l-2 4.3l-1.3-6.8z" fill="#0024f2" stroke="#0024f2" stroke-width="0.5"/>
<path d="M411.4 367.3l1.7-.1l-2 4.3l-1.7.1zM413.1 367.2l1.6.9l-1.9 3.6l-1.7-.2z" fill="#001be4" stroke="#001be4" stroke-width="0.5"/>
<path d="M414.7 368.1l1.5 3.7l-1.9 3l-1.5-3.1z" fill="#0012d5" stroke="#0012d5" stroke-width="0.5"/>
<path d="M416.2 371.8l1.5 3.4l-1.9 2.5l-1.5-2.9zM417.7 375.2l1.7.4l-1.9 2.5l-1.7-.4zM419.4 375.6l1.6.9l-1.8 2.4l-1.7-.8zM421 376.5l1.7.6l-1.8 2.3l-1.7-.5zM422.7 377.1l1.7.5l-1.8 2.3l-1.7-.5zM424.4 377.6l1.7.5l-1.8 2.3l-1.7-.5zM426.1 378.1l1.7.4l-1.8 2.4l-1.7-.5zM427.8 378.5l1.7.5l-1.7 2.4l-1.8-.5zM429.5 379l1.7.5l-1.7 2.4l-1.7-.5z" fill="#0009c7" stroke="#0009c7" stroke-width="0.5"/>
<path d="M275.3 293.8l1.4 2.7l-2.9 1.7l-1.4-2.7z" fill="#d0ff28" stroke="#d0ff28" stroke-width="0.5"/>
<path d="M276.7 296.5l1.2 2.2l-2.8 1.8l-1.3-2.3z" fill="#a8ff49" stroke="#a8ff49" stroke-width="0.5"/>
<path d="M277.9 298.7l1.4 2.9l-2.9 1.7l-1.3-2.8z" fill="#80ff70" stroke="#80ff70" stroke-width="0.5"/>
<path d="M279.3 301.6l1.2 1.9l-2.8 1.7l-1.3-1.9z" fill="#58ff98" stroke="#58ff98" stroke-width="0.5"/>
<path d="M280.5 303.5l1.3 2.1l-2.8 2.1l-1.3-2.5zM295.7 309.4l1.1-1l-2.7 2.5l-1.2.3zM296.8 308.4l1.2 1.1l-2.7 2.5l-1.2-1.1zM300.4 310l1.2 0l-2.7 1.8l-1.2.3z" fill="#30ffc0" stroke="#30ffc0" stroke-width="0.5"/>
<path d="M281.8 305.6l1.3 2.9l-2.8 1.9l-1.3-2.7zM283.1 308.5l1.3 1.4l-2.9 1.7l-1.2-1.2zM294.7 312.1l1-2.7l-2.8 1.8l-.9 3.5zM298 309.5l1.5 4.4l-2.7 2.5l-1.5-4.4zM299.5 313.9l.9-3.9l-2.7 2.1l-.9 4.3zM301.6 310l1.5 4.4l-2.7 2.3l-1.5-4.9zM309.2 316l1-3.4l-2.6 2.5l-1.1 3.2zM310.2 312.6l1.4 1.9l-2.7 2.1l-1.3-1.5zM325.8 321.2l1.1-5.8l-2.7 2.2l-1 6.5z" fill="#1af6d9" stroke="#1af6d9" stroke-width="0.5"/>
<path d="M284.4 309.9l1.4 4l-2.8 2.2l-1.5-4.5zM287.9 312.1l1.1.4l-2.8 2l-1.1-.1zM289 312.5l1.1-.5l-2.8 2.2l-1.1.3zM290.1 312l1.2.3l-2.8 2.1l-1.2-.2zM291.3 312.3l1.2 1.7l-2.7 2.7l-1.3-2.3zM292.5 314l1-2.6l-2.7 2.5l-1 2.8zM293.5 311.4l1.2.7l-2.7 2.6l-1.2-.8zM303.1 314.4l1.2.3l-2.7 2.9l-1.2-.9zM304.3 314.7l1.1-.9l-2.7 2.3l-1.1 1.5zM305.4 313.8l1.3 1.4l-2.7 2.6l-1.3-1.7zM306.7 315.2l1.2 0l-2.7 2.3l-1.2.3zM307.9 315.2l1.3.8l-2.7 2.3l-1.3-.8zM326.9 315.4l1.5 8.1l-2.5 2.5l-1.7-8.4zM339.1 324l1.4-.3l-2.6 2.9l-1.3.3zM340.5 323.7l1.4 1.8l-2.5 3.7l-1.5-2.6z" fill="#10e8e8" stroke="#10e8e8" stroke-width="0.5"/>
<path d="M285.8 313.9l1.2 1l-2.8 2.8l-1.2-1.6zM313.2 323.4l1.2-1.3l-2.6 2.5l-1.2 1.9zM314.4 322.1l1.3.5l-2.6 2.9l-1.3-.9zM317 325l1.1-3l-2.6 2.6l-1.1 3.6zM318.1 322l1.4 2.9l-2.6 3.4l-1.4-3.7zM319.5 324.9l1.1-3.9l-2.6 2.9l-1.1 4.4zM320.6 321l1.4 2.5l-2.5 4.2l-1.5-3.8zM322 323.5l1.4 2.7l-2.6 2.8l-1.3-1.3zM323.4 326.2l1.1-4.3l-2.6 2.7l-1.1 4.4zM329.8 325.3l1.4 2.2l-2.6 3.3l-1.3-2.3zM336.6 330l1.2-4.5l-2.5 3.5l-1.2 4.8zM343.3 327.3l1.4 2.5l-2.5 3.1l-1.4-2.6zM344.7 329.8l1.4-2.5l-2.5 3l-1.4 2.6zM347.4 327.5l1.5 5.6l-2.4 3.5l-1.5-5.8zM350.3 331.7l1.4-2.3l-2.5 3.6l-1.4 2.1zM351.7 329.4l1.4 3.9l-2.4 3.8l-1.5-4.1zM361.8 336.6l1.5-5.4l-2.4 3.4l-1.5 5.6zM363.3 331.2l1.4 6.6l-2.3 3l-1.5-6.2z" fill="#00c7ff" stroke="#00c7ff" stroke-width="0.5"/>
<path d="M287 314.9l.9-2.8l-2.8 2.3l-.9 3.3zM311.6 314.5l1.6 8.9l-2.6 3.1l-1.7-9.9zM324.5 321.9l1.3-.7l-2.6 2.9l-1.3.5zM328.4 323.5l1.4 1.8l-2.5 3.2l-1.4-2.5zM337.8 325.5l1.3-1.5l-2.5 2.9l-1.3 2.1zM341.9 325.5l1.4 1.8l-2.5 3l-1.4-1.1zM346.1 327.3l1.3.2l-2.4 3.3l-1.4-.5zM354.6 334.6l1.4-8.4l-2.5 2.9l-1.4 9zM356 326.2l1.4 7.2l-2.4 3.3l-1.5-7.6z" fill="#06d9f6" stroke="#06d9f6" stroke-width="0.5"/>
<path d="M315.7 322.6l1.3 2.4l-2.6 3.2l-1.3-2.7zM331.2 327.5l1.4 2l-2.6 3l-1.4-1.7zM332.6 329.5l1.3-.3l-2.6 3.3l-1.3 0zM333.9 329.2l1.3-.3l-2.6 2.4l-1.3 1.2zM335.2 328.9l1.4 1.1l-2.5 3.8l-1.5-2.5zM348.9 333.1l1.4-1.4l-2.5 3.4l-1.3 1.5zM353.1 333.3l1.5 1.3l-2.5 3.5l-1.4-1zM357.4 333.4l1.5 1.7l-2.4 3.3l-1.5-1.7zM358.9 335.1l1.4.7l-2.4 3.1l-1.4-.5zM360.3 335.8l1.5.8l-2.4 3.6l-1.5-1.3zM364.7 337.8l1.5.3l-2.4 3.7l-1.4-1zM366.2 338.1l1.5-.7l-2.4 3.1l-1.5 1.3zM367.7 337.4l1.5 2.2l-2.4 3.9l-1.5-3zM369.2 339.6l1.5-2.3l-2.3 3.4l-1.6 2.8zM370.7 337.3l1.5 2.2l-2.3 3.1l-1.5-1.9z" fill="#00b1ff" stroke="#00b1ff" stroke-width="0.5"/>
<path d="M372.2 339.5l1.5 3.3l-2.4 4.2l-1.4-4.4z" fill="#009bff" stroke="#009bff" stroke-width="0.5"/>
<path d="M373.7 342.8l1.4 1.8l-2.3 4l-1.5-1.6zM375.1 344.6l1.5 1.8l-2.3 4l-1.5-1.8zM376.6 346.4l1.6-1.2l-2.3 3.4l-1.6 1.8zM378.2 345.2l1.5 2.9l-2.3 3.9l-1.5-3.4z" fill="#0085ff" stroke="#0085ff" stroke-width="0.5"/>
<path d="M379.7 348.1l1.5 1.4l-2.3 4l-1.5-1.5zM382.7 350.7l1.6-1l-2.2 3.9l-1.6.7zM384.3 349.7l1.6-.4l-2.2 3.3l-1.6 1zM393.7 354.3l1.8-4.2l-2.2 4.1l-1.8 4.5zM395.5 350.1l1.4 5.1l-2.2 4.3l-1.4-5.3z" fill="#0070fe" stroke="#0070fe" stroke-width="0.5"/>
<path d="M381.2 349.5l1.5 1.2l-2.2 3.6l-1.6-.8zM385.9 349.3l1.4 6.3l-2.2 3.9l-1.4-6.9zM401.6 360l2-7.3l-2.1 3.8l-2 8.1z" fill="#005cfd" stroke="#005cfd" stroke-width="0.5"/>
<path d="M387.3 355.6l1.6-1.2l-2.2 3.7l-1.6 1.4zM388.9 354.4l1.4 5.2l-2.2 3.7l-1.4-5.2zM392 357.3l1.7-3l-2.2 4.4l-1.7 2.6zM396.9 355.2l1.4 6.1l-2.1 4.3l-1.5-6.1zM400 358.7l1.6 1.3l-2.1 4.6l-1.6-1.6zM403.6 352.7l1.1 12.2l-2.1 4.5l-1.1-12.9zM406.7 358.5l1.4 6.3l-2.1 3.8l-1.4-6.5z" fill="#0048fb" stroke="#0048fb" stroke-width="0.5"/>
<path d="M390.3 359.6l1.7-2.3l-2.2 4l-1.7 2zM398.3 361.3l1.7-2.6l-2.1 4.3l-1.7 2.6zM404.7 364.9l2-6.4l-2.1 3.6l-2 7.3z" fill="#0034f9" stroke="#0034f9" stroke-width="0.5"/>
<path d="M408.1 364.8l1.3 6.8l-2 3.9l-1.4-6.9z" fill="#001be4" stroke="#001be4" stroke-width="0.5"/>
<path d="M409.4 371.6l1.7-.1l-2.1 4l-1.6 0zM411.1 371.5l1.7.2l-2 3.6l-1.8.2zM412.8 371.7l1.5 3.1l-2 2.9l-1.5-2.4z" fill="#0012d5" stroke="#0012d5" stroke-width="0.5"/>
<path d="M414.3 374.8l1.5 2.9l-1.9 2.4l-1.6-2.4zM415.8 377.7l1.7.4l-1.9 2.4l-1.7-.4zM417.5 378.1l1.7.8l-1.9 2.3l-1.7-.7zM419.2 378.9l1.7.5l-1.9 2.3l-1.7-.5zM420.9 379.4l1.7.5l-1.8 2.3l-1.8-.5zM422.6 379.9l1.7.5l-1.8 2.4l-1.7-.6zM424.3 380.4l1.7.5l-1.8 2.4l-1.7-.5zM426 380.9l1.8.5l-1.8 2.4l-1.8-.5zM427.8 381.4l1.7.5l-1.8 2.4l-1.7-.5z" fill="#0009c7" stroke="#0009c7" stroke-width="0.5"/>
<path d="M272.4 295.5l1.4 2.7l-3 1.6l-1.3-2.7z" fill="#d0ff28" stroke="#d0ff28" stroke-width="0.5"/>
<path d="M273.8 298.2l1.3 2.3l-3 1.7l-1.3-2.4z" fill="#a8ff49" stroke="#a8ff49" stroke-width="0.5"/>
<path d="M275.1 300.5l1.3 2.8l-2.9 2.3l-1.4-3.4z" fill="#80ff70" stroke="#80ff70" stroke-width="0.5"/>
<path d="M276.4 303.3l1.3 1.9l-2.9 2l-1.3-1.6z" fill="#58ff98" stroke="#58ff98" stroke-width="0.5"/>
<path d="M277.7 305.2l1.3 2.5l-2.9 2.1l-1.3-2.6zM292.9 311.2l1.2-.3l-2.9 2.4l-1.1.2zM297.7 312.1l1.2-.3l-2.8 2.8l-1.2.2z" fill="#30ffc0" stroke="#30ffc0" stroke-width="0.5"/>
<path d="M279 307.7l1.3 2.7l-2.9 2l-1.3-2.6zM292 314.7l.9-3.5l-2.8 2.3l-.9 3.3zM294.1 310.9l1.2 1.1l-2.8 2.2l-1.3-.9zM296.8 316.4l.9-4.3l-2.8 2.7l-.9 3.7zM298.9 311.8l1.5 4.9l-2.8 2l-1.5-4.1zM307.6 315.1l1.3 1.5l-2.7 2.9l-1.4-1.6z" fill="#1af6d9" stroke="#1af6d9" stroke-width="0.5"/>
<path d="M280.3 310.4l1.2 1.2l-2.8 2l-1.3-1.2zM287.3 314.2l1.2.2l-2.8 2.4l-1.2-.3zM290.8 313.9l1.2.8l-2.8 2.1l-1.2-.4zM295.3 312l1.5 4.4l-2.8 2.1l-1.5-4.3zM300.4 316.7l1.2.9l-2.7 3l-1.3-1.9zM301.6 317.6l1.1-1.5l-2.7 2.5l-1.1 2zM302.7 316.1l1.3 1.7l-2.7 2.6l-1.3-1.8zM304 317.8l1.2-.3l-2.7 2.5l-1.2.4zM305.2 317.5l1.3.8l-2.8 2.3l-1.2-.6zM306.5 318.3l1.1-3.2l-2.8 2.8l-1.1 2.7zM323.2 324.1l1-6.5l-2.6 3.3l-1.1 5.9zM324.2 317.6l1.7 8.4l-2.7 3.2l-1.6-8.3z" fill="#10e8e8" stroke="#10e8e8" stroke-width="0.5"/>
<path d="M281.5 311.6l1.5 4.5l-2.9 1.6l-1.4-4.1zM284.2 317.7l.9-3.3l-2.8 2.2l-.9 3.1zM285.1 314.4l1.1.1l-2.8 2.4l-1.1-.3zM286.2 314.5l1.1-.3l-2.8 2.3l-1.1.4zM288.5 314.4l1.3 2.3l-2.8 2.3l-1.3-2.2zM289.8 316.7l1-2.8l-2.8 2.5l-1 2.6zM308.9 316.6l1.7 9.9l-2.7 2.3l-1.7-9.3zM321.9 324.6l1.3-.5l-2.7 2.7l-1.3-.1zM335.3 329l1.3-2.1l-2.6 3.1l-1.3 2zM336.6 326.9l1.3-.3l-2.5 3.2l-1.4.2zM337.9 326.6l1.5 2.6l-2.6 2.9l-1.4-2.3z" fill="#06d9f6" stroke="#06d9f6" stroke-width="0.5"/>
<path d="M283 316.1l1.2 1.6l-2.8 2l-1.3-2zM311.8 324.6l1.3.9l-2.7 2.4l-1.3-.6zM316.9 328.3l1.1-4.4l-2.7 2.7l-1 3.8zM318 323.9l1.5 3.8l-2.7 2.5l-1.5-3.6zM320.8 329l1.1-4.4l-2.7 2.1l-1.1 4.8zM325.9 326l1.4 2.5l-2.7 3.1l-1.4-2.4zM339.4 329.2l1.4 1.1l-2.6 3.2l-1.4-1.4zM340.8 330.3l1.4 2.6l-2.5 2.8l-1.5-2.2zM342.2 332.9l1.4-2.6l-2.6 3.6l-1.3 1.8zM343.6 330.3l1.4.5l-2.6 3.3l-1.4-.2zM352.1 338.1l1.4-9l-2.5 4.5l-1.3 7.5zM353.5 329.1l1.5 7.6l-2.4 3.9l-1.6-7z" fill="#00c7ff" stroke="#00c7ff" stroke-width="0.5"/>
<path d="M310.6 326.5l1.2-1.9l-2.7 2.7l-1.2 1.5zM313.1 325.5l1.3 2.7l-2.6 2.7l-1.4-3zM314.4 328.2l1.1-3.6l-2.6 3.1l-1.1 3.2zM315.5 324.6l1.4 3.7l-2.6 2.1l-1.4-2.7zM319.5 327.7l1.3 1.3l-2.7 2.5l-1.3-1.3zM327.3 328.5l1.3 2.3l-2.6 2.6l-1.4-1.8zM328.6 330.8l1.4 1.7l-2.6 3.1l-1.4-2.2zM331.3 332.5l1.3-1.2l-2.5 2.9l-1.3 1zM334.1 333.8l1.2-4.8l-2.6 3l-1.2 5.3zM345 330.8l1.5 5.8l-2.5 3.2l-1.6-5.7zM346.5 336.6l1.3-1.5l-2.5 2.8l-1.3 1.9zM347.8 335.1l1.4-2.1l-2.5 3.4l-1.4 1.5zM349.2 333l1.5 4.1l-2.5 3l-1.5-3.7zM355 336.7l1.5 1.7l-2.5 3.8l-1.4-1.6zM359.4 340.2l1.5-5.6l-2.5 3.9l-1.4 4.9zM360.9 334.6l1.5 6.2l-2.5 3.9l-1.5-6.2z" fill="#00b1ff" stroke="#00b1ff" stroke-width="0.5"/>
<path d="M330 332.5l1.3 0l-2.5 2.7l-1.4.4zM332.6 331.3l1.5 2.5l-2.6 3.5l-1.4-3.1zM350.7 337.1l1.4 1l-2.4 3l-1.5-1zM356.5 338.4l1.4.5l-2.4 3.4l-1.5-.1zM357.9 338.9l1.5 1.3l-2.4 3.2l-1.5-1.1zM362.4 340.8l1.4 1l-2.4 4.3l-1.5-1.4zM363.8 341.8l1.5-1.3l-2.4 3.6l-1.5 2zM365.3 340.5l1.5 3l-2.4 3.8l-1.5-3.2zM366.8 343.5l1.6-2.8l-2.4 4.3l-1.6 2.3zM368.4 340.7l1.5 1.9l-2.4 3.9l-1.5-1.5z" fill="#009bff" stroke="#009bff" stroke-width="0.5"/>
<path d="M369.9 342.6l1.4 4.4l-2.3 3.4l-1.5-3.9z" fill="#0085ff" stroke="#0085ff" stroke-width="0.5"/>
<path d="M371.3 347l1.5 1.6l-2.3 3.9l-1.5-2.1zM372.8 348.6l1.5 1.8l-2.3 3.6l-1.5-1.5zM374.3 350.4l1.6-1.8l-2.3 3.8l-1.6 1.6zM375.9 348.6l1.5 3.4l-2.3 3.6l-1.5-3.2z" fill="#0070fe" stroke="#0070fe" stroke-width="0.5"/>
<path d="M377.4 352l1.5 1.5l-2.3 3.6l-1.5-1.5zM378.9 353.5l1.6.8l-2.3 4.2l-1.6-1.4zM380.5 354.3l1.6-.7l-2.3 4.6l-1.6.3zM382.1 353.6l1.6-1l-2.3 4.2l-1.6 1.4zM391.5 358.7l1.8-4.5l-2.2 3.9l-1.8 4.7zM393.3 354.2l1.4 5.3l-2.2 4.2l-1.4-5.6z" fill="#005cfd" stroke="#005cfd" stroke-width="0.5"/>
<path d="M383.7 352.6l1.4 6.9l-2.3 3.9l-1.4-6.6zM389.8 361.3l1.7-2.6l-2.2 4.1l-1.7 2.1zM399.5 364.6l2-8.1l-2.2 4.8l-1.9 6.7zM401.5 356.5l1.1 12.9l-2.1 3.5l-1.2-11.6z" fill="#0048fb" stroke="#0048fb" stroke-width="0.5"/>
<path d="M385.1 359.5l1.6-1.4l-2.3 4.6l-1.6.7zM386.7 358.1l1.4 5.2l-2.2 3.5l-1.5-4.1zM388.1 363.3l1.7-2l-2.2 3.6l-1.7 1.9zM394.7 359.5l1.5 6.1l-2.2 3.6l-1.5-5.5zM396.2 365.6l1.7-2.6l-2.2 4.5l-1.7 1.7zM397.9 363l1.6 1.6l-2.1 3.4l-1.7-.5zM402.6 369.4l2-7.3l-2.2 5l-1.9 5.8zM404.6 362.1l1.4 6.5l-2.1 3.8l-1.5-5.3z" fill="#0034f9" stroke="#0034f9" stroke-width="0.5"/>
<path d="M406 368.6l1.4 6.9l-2.1 2.9l-1.4-6z" fill="#001be4" stroke="#001be4" stroke-width="0.5"/>
<path d="M407.4 375.5l1.6 0l-2 3.5l-1.7-.6zM409 375.5l1.8-.2l-2.1 3.6l-1.7.1zM410.8 375.3l1.5 2.4l-2 3.3l-1.6-2.1z" fill="#0012d5" stroke="#0012d5" stroke-width="0.5"/>
<path d="M412.3 377.7l1.6 2.4l-1.9 2.5l-1.7-1.6zM413.9 380.1l1.7.4l-1.9 2.5l-1.7-.4zM415.6 380.5l1.7.7l-1.9 2.4l-1.7-.6zM417.3 381.2l1.7.5l-1.9 2.5l-1.7-.6zM419 381.7l1.8.5l-1.9 2.5l-1.8-.5zM420.8 382.2l1.7.6l-1.9 2.4l-1.7-.5zM422.5 382.8l1.7.5l-1.8 2.4l-1.8-.5zM424.2 383.3l1.8.5l-1.8 2.4l-1.8-.5zM426 383.8l1.7.5l-1.8 2.4l-1.7-.5z" fill="#0009c7" stroke="#0009c7" stroke-width="0.5"/>
<path d="M269.5 297.1l1.3 2.7l-3 1.7l-1.4-2.7z" fill="#d0ff28" stroke="#d0ff28" stroke-width="0.5"/>
<path d="M270.8 299.8l1.3 2.4l-3 1.8l-1.3-2.5z" fill="#a8ff49" stroke="#a8ff49" stroke-width="0.5"/>
<path d="M272.1 302.2l1.4 3.4l-2.9 2.2l-1.5-3.8z" fill="#58ff98" stroke="#58ff98" stroke-width="0.5"/>
<path d="M273.5 305.6l1.3 1.6l-3 2l-1.2-1.4zM274.8 307.2l1.3 2.6l-2.9 2.2l-1.4-2.8z" fill="#30ffc0" stroke="#30ffc0" stroke-width="0.5"/>
<path d="M276.1 309.8l1.3 2.6l-2.9 2l-1.3-2.4zM290.1 313.5l1.1-.2l-2.8 2.5l-1.2.1zM291.2 313.3l1.3.9l-2.9 2.2l-1.2-.6zM294.9 314.8l1.2-.2l-2.8 2.8l-1.2.2z" fill="#1af6d9" stroke="#1af6d9" stroke-width="0.5"/>
<path d="M277.4 312.4l1.3 1.2l-3 2.1l-1.2-1.3zM288 316.4l1.2.4l-2.9 2l-1.2.1zM289.2 316.8l.9-3.3l-2.9 2.4l-.9 2.9zM292.5 314.2l1.5 4.3l-2.9 2.1l-1.5-4.2zM294 318.5l.9-3.7l-2.8 2.8l-1 3zM296.1 314.6l1.5 4.1l-2.9 2.1l-1.4-3.4zM300 318.6l1.3 1.8l-2.8 2.6l-1.3-1.9zM303.7 320.6l1.1-2.7l-2.7 2.9l-1.2 2.1zM304.8 317.9l1.4 1.6l-2.8 2.8l-1.3-1.5zM320.5 326.8l1.1-5.9l-2.7 3.3l-1.1 5.3z" fill="#10e8e8" stroke="#10e8e8" stroke-width="0.5"/>
<path d="M278.7 313.6l1.4 4.1l-2.9 1.6l-1.5-3.6zM282.3 316.6l1.1.3l-2.8 2.4l-1.2-.5zM283.4 316.9l1.1-.4l-2.8 2.4l-1.1.4zM284.5 316.5l1.2.3l-2.9 2.4l-1.1-.3zM285.7 316.8l1.3 2.2l-2.9 2.3l-1.3-2.1zM287 319l1-2.6l-2.9 2.5l-1 2.4zM297.6 318.7l1.3 1.9l-2.8 3l-1.4-2.8zM298.9 320.6l1.1-2l-2.8 2.5l-1.1 2.5zM301.3 320.4l1.2-.4l-2.8 2.6l-1.2.4zM302.5 320l1.2.6l-2.8 2.3l-1.2-.3zM319.2 326.7l1.3.1l-2.7 2.7l-1.3-.6zM321.6 320.9l1.6 8.3l-2.6 3.3l-1.7-8.3zM334 330l1.4-.2l-2.6 3.3l-1.4.1z" fill="#06d9f6" stroke="#06d9f6" stroke-width="0.5"/>
<path d="M280.1 317.7l1.3 2l-2.9 1.9l-1.3-2.3zM281.4 319.7l.9-3.1l-2.9 2.2l-.9 2.8zM306.2 319.5l1.7 9.3l-2.8 2.3l-1.7-8.8zM332.7 332l1.3-2l-2.6 3.2l-1.3 1.9zM335.4 329.8l1.4 2.3l-2.6 2.9l-1.4-1.9zM336.8 332.1l1.4 1.4l-2.6 3.2l-1.4-1.7zM341 333.9l1.4.2l-2.5 3.4l-1.4-.1z" fill="#00c7ff" stroke="#00c7ff" stroke-width="0.5"/>
<path d="M307.9 328.8l1.2-1.5l-2.8 2.7l-1.2 1.1zM309.1 327.3l1.3.6l-2.8 2.5l-1.3-.4zM311.8 330.9l1.1-3.2l-2.8 3.1l-1.1 2.9zM312.9 327.7l1.4 2.7l-2.8 2l-1.4-1.6zM314.3 330.4l1-3.8l-2.7 2.8l-1.1 3zM315.3 326.6l1.5 3.6l-2.7 2.5l-1.5-3.3zM316.8 330.2l1.3 1.3l-2.7 2.5l-1.3-1.3zM318.1 331.5l1.1-4.8l-2.7 2.2l-1.1 5.1zM323.2 329.2l1.4 2.4l-2.6 3.1l-1.4-2.2zM324.6 331.6l1.4 1.8l-2.6 2.6l-1.4-1.3zM338.2 333.5l1.5 2.2l-2.6 2.9l-1.5-1.9zM339.7 335.7l1.3-1.8l-2.5 3.5l-1.4 1.2zM342.4 334.1l1.6 5.7l-2.6 3.1l-1.5-5.4zM345.3 337.9l1.4-1.5l-2.5 3.5l-1.4.9zM346.7 336.4l1.5 3.7l-2.5 3.1l-1.5-3.3zM349.7 341.1l1.3-7.5l-2.5 4.5l-1.4 6.1zM351 333.6l1.6 7l-2.5 3.8l-1.6-6.3z" fill="#00b1ff" stroke="#00b1ff" stroke-width="0.5"/>
<path d="M310.4 327.9l1.4 3l-2.8 2.8l-1.4-3.3zM326 333.4l1.4 2.2l-2.6 3.1l-1.4-2.7zM327.4 335.6l1.4-.4l-2.7 2.8l-1.3.7zM328.8 335.2l1.3-1l-2.7 3l-1.3.8zM330.1 334.2l1.4 3.1l-2.6 3.4l-1.5-3.5zM331.5 337.3l1.2-5.3l-2.6 3.1l-1.2 5.6zM344 339.8l1.3-1.9l-2.5 2.9l-1.4 2.1zM348.2 340.1l1.5 1l-2.6 3.1l-1.4-1zM352.6 340.6l1.4 1.6l-2.5 3.9l-1.4-1.7zM354 342.2l1.5.1l-2.5 3.4l-1.5.4zM355.5 342.3l1.5 1.1l-2.5 3.2l-1.5-.9zM357 343.4l1.4-4.9l-2.4 4l-1.5 4.1zM358.4 338.5l1.5 6.2l-2.4 3.9l-1.5-6.1z" fill="#009bff" stroke="#009bff" stroke-width="0.5"/>
<path d="M359.9 344.7l1.5 1.4l-2.4 4.3l-1.5-1.8zM361.4 346.1l1.5-2l-2.4 3.7l-1.5 2.6zM362.9 344.1l1.5 3.2l-2.4 3.8l-1.5-3.3zM364.4 347.3l1.6-2.3l-2.5 4.4l-1.5 1.7zM366 345l1.5 1.5l-2.4 4l-1.6-1.1zM367.5 346.5l1.5 3.9l-2.4 3.5l-1.5-3.4z" fill="#0085ff" stroke="#0085ff" stroke-width="0.5"/>
<path d="M369 350.4l1.5 2.1l-2.4 4l-1.5-2.6z" fill="#0070fe" stroke="#0070fe" stroke-width="0.5"/>
<path d="M370.5 352.5l1.5 1.5l-2.4 3.7l-1.5-1.2zM372 354l1.6-1.6l-2.4 3.9l-1.6 1.4zM373.6 352.4l1.5 3.2l-2.4 3.6l-1.5-2.9z" fill="#005cfd" stroke="#005cfd" stroke-width="0.5"/>
<path d="M375.1 355.6l1.5 1.5l-2.3 3.6l-1.6-1.5zM376.6 357.1l1.6 1.4l-2.4 4.3l-1.5-2.1zM378.2 358.5l1.6-.3l-2.4 4.6l-1.6 0zM379.8 358.2l1.6-1.4l-2.3 4.2l-1.7 1.8zM381.4 356.8l1.4 6.6l-2.3 3.9l-1.4-6.3zM389.3 362.8l1.8-4.7l-2.3 3.9l-1.8 4.9zM391.1 358.1l1.4 5.6l-2.2 4.2l-1.5-5.9zM397.4 368l1.9-6.7l-2.2 4.9l-1.9 5.1z" fill="#0048fb" stroke="#0048fb" stroke-width="0.5"/>
<path d="M382.8 363.4l1.6-.7l-2.3 4.7l-1.6-.1zM387.6 364.9l1.7-2.1l-2.3 4.1l-1.7 1.7zM399.3 361.3l1.2 11.6l-2.1 3.4l-1.3-10.1z" fill="#0034f9" stroke="#0034f9" stroke-width="0.5"/>
<path d="M384.4 362.7l1.5 4.1l-2.2 3.5l-1.6-2.9zM385.9 366.8l1.7-1.9l-2.3 3.7l-1.6 1.7zM392.5 363.7l1.5 5.5l-2.2 3.7l-1.5-5zM394 369.2l1.7-1.7l-2.2 4.4l-1.7 1zM395.7 367.5l1.7.5l-2.2 3.3l-1.7.6zM400.5 372.9l1.9-5.8l-2.2 5l-1.8 4.2zM402.4 367.1l1.5 5.3l-2.1 3.8l-1.6-4.1z" fill="#0024f2" stroke="#0024f2" stroke-width="0.5"/>
<path d="M403.9 372.4l1.4 6l-2 2.9l-1.5-5.1zM407 379l1.7-.1l-2 3.4l-1.8-.1z" fill="#0012d5" stroke="#0012d5" stroke-width="0.5"/>
<path d="M405.3 378.4l1.7.6l-2.1 3.2l-1.6-.9zM408.7 378.9l1.6 2.1l-2 3l-1.6-1.7zM410.3 381l1.7 1.6l-2 2.4l-1.7-1zM412 382.6l1.7.4l-2 2.5l-1.7-.5zM413.7 383l1.7.6l-1.9 2.5l-1.8-.6zM415.4 383.6l1.7.6l-1.9 2.4l-1.7-.5zM417.1 384.2l1.8.5l-1.9 2.5l-1.8-.6zM418.9 384.7l1.7.5l-1.9 2.5l-1.7-.5zM420.6 385.2l1.8.5l-1.9 2.5l-1.8-.5zM422.4 385.7l1.8.5l-1.9 2.5l-1.8-.5zM424.2 386.2l1.7.5l-1.8 2.6l-1.8-.6z" fill="#0009c7" stroke="#0009c7" stroke-width="0.5"/>
<path d="M266.4 298.8l1.4 2.7l-3.1 1.6l-1.3-2.6z" fill="#a8ff49" stroke="#a8ff49" stroke-width="0.5"/>
<path d="M267.8 301.5l1.3 2.5l-3 1.7l-1.4-2.6z" fill="#80ff70" stroke="#80ff70" stroke-width="0.5"/>
<path d="M269.1 304l1.5 3.8l-3 2.3l-1.5-4.4z" fill="#58ff98" stroke="#58ff98" stroke-width="0.5"/>
<path d="M270.6 307.8l1.2 1.4l-3 2l-1.2-1.1z" fill="#30ffc0" stroke="#30ffc0" stroke-width="0.5"/>
<path d="M271.8 309.2l1.4 2.8l-3 2.1l-1.4-2.9zM287.2 315.9l1.2-.1l-2.9 2.4l-1.2.1zM288.4 315.8l1.2.6l-2.9 2.2l-1.2-.4z" fill="#1af6d9" stroke="#1af6d9" stroke-width="0.5"/>
<path d="M273.2 312l1.3 2.4l-3 2l-1.3-2.3zM274.5 314.4l1.2 1.3l-2.9 2.1l-1.3-1.4zM286.3 318.8l.9-2.9l-2.9 2.4l-1 2.6zM289.6 316.4l1.5 4.2l-2.9 2.1l-1.5-4.1zM291.1 320.6l1-3l-2.9 2.8l-1 2.3zM292.1 317.6l1.2-.2l-2.9 2.8l-1.2.2zM293.3 317.4l1.4 3.4l-2.9 2l-1.4-2.6zM300.9 322.9l1.2-2.1l-2.9 3l-1.1 1.4zM302.1 320.8l1.3 1.5l-2.8 2.9l-1.4-1.4z" fill="#10e8e8" stroke="#10e8e8" stroke-width="0.5"/>
<path d="M275.7 315.7l1.5 3.6l-3 1.6l-1.4-3.1zM280.6 319.3l1.1-.4l-3 2.4l-1.1.5zM281.7 318.9l1.1.3l-2.9 2.4l-1.2-.3zM284.1 321.3l1-2.4l-2.9 2.5l-1 2.3zM285.1 318.9l1.2-.1l-3 2.1l-1.1.5zM294.7 320.8l1.4 2.8l-2.8 3l-1.5-3.8zM296.1 323.6l1.1-2.5l-2.9 2.5l-1 3zM297.2 321.1l1.3 1.9l-2.8 2.7l-1.4-2.1zM298.5 323l1.2-.4l-2.9 2.6l-1.1.5zM299.7 322.6l1.2.3l-2.8 2.3l-1.3 0zM317.8 329.5l1.1-5.3l-2.7 3.4l-1.1 4.7zM318.9 324.2l1.7 8.3l-2.7 3.2l-1.7-8.1z" fill="#06d9f6" stroke="#06d9f6" stroke-width="0.5"/>
<path d="M277.2 319.3l1.3 2.3l-3 2l-1.3-2.7zM278.5 321.6l.9-2.8l-3 2.3l-.9 2.5zM279.4 318.8l1.2.5l-3 2.5l-1.2-.7zM282.8 319.2l1.3 2.1l-2.9 2.4l-1.3-2.1zM303.4 322.3l1.7 8.8l-2.8 2.3l-1.7-8.2zM316.5 328.9l1.3.6l-2.7 2.8l-1.4-1.2zM331.4 333.2l1.4-.1l-2.7 3.3l-1.4-.1zM332.8 333.1l1.4 1.9l-2.7 3l-1.4-1.6z" fill="#00c7ff" stroke="#00c7ff" stroke-width="0.5"/>
<path d="M305.1 331.1l1.2-1.1l-2.8 2.7l-1.2.7zM307.6 330.4l1.4 3.3l-2.7 2.8l-1.5-3.7zM309 333.7l1.1-2.9l-2.7 3.1l-1.1 2.6zM314.1 332.7l1.3 1.3l-2.7 2.5l-1.4-1.3zM322 334.7l1.4 1.3l-2.8 2.7l-1.3-.8zM323.4 336l1.4 2.7l-2.7 3.2l-1.5-3.2zM326.1 338l1.3-.8l-2.7 2.9l-1.3.7zM328.9 340.7l1.2-5.6l-2.7 3.1l-1.2 6zM339.9 337.5l1.5 5.4l-2.6 3.2l-1.5-5.3zM341.4 342.9l1.4-2.1l-2.6 2.8l-1.4 2.5zM342.8 340.8l1.4-.9l-2.6 3.6l-1.4.1zM344.2 339.9l1.5 3.3l-2.6 3l-1.5-2.7zM347.1 344.2l1.4-6.1l-2.5 4.5l-1.4 4.7zM348.5 338.1l1.6 6.3l-2.6 3.9l-1.5-5.7zM354.5 346.6l1.5-4.1l-2.6 4l-1.4 3.4zM356 342.5l1.5 6.1l-2.5 4l-1.6-6.1z" fill="#009bff" stroke="#009bff" stroke-width="0.5"/>
<path d="M306.3 330l1.3.4l-2.8 2.4l-1.3-.1zM310.1 330.8l1.4 1.6l-2.8 2.2l-1.3-.7zM311.5 332.4l1.1-3l-2.7 2.7l-1.2 2.5zM312.6 329.4l1.5 3.3l-2.8 2.5l-1.4-3.1zM315.4 334l1.1-5.1l-2.8 2.2l-1 5.4zM320.6 332.5l1.4 2.2l-2.7 3.2l-1.4-2.2zM330.1 335.1l1.3-1.9l-2.7 3.1l-1.3 1.9zM334.2 335l1.4 1.7l-2.6 3.3l-1.5-2zM335.6 336.7l1.5 1.9l-2.7 2.8l-1.4-1.4zM337.1 338.6l1.4-1.2l-2.7 3.6l-1.4.4zM338.5 337.4l1.4.1l-2.6 3.3l-1.5.2z" fill="#00b1ff" stroke="#00b1ff" stroke-width="0.5"/>
<path d="M324.8 338.7l1.3-.7l-2.7 2.8l-1.3 1.1zM327.4 337.2l1.5 3.5l-2.7 3.5l-1.5-4.1zM345.7 343.2l1.4 1l-2.5 3.1l-1.5-1.1zM350.1 344.4l1.4 1.7l-2.5 3.9l-1.5-1.7zM351.5 346.1l1.5-.4l-2.5 3.4l-1.5.9zM353 345.7l1.5.9l-2.5 3.3l-1.5-.8zM360.5 347.8l1.5 3.3l-2.5 3.8l-1.5-3.4zM363.5 349.4l1.6 1.1l-2.5 4l-1.5-.7z" fill="#0085ff" stroke="#0085ff" stroke-width="0.5"/>
<path d="M357.5 348.6l1.5 1.8l-2.5 4.3l-1.5-2.1zM359 350.4l1.5-2.6l-2.5 3.7l-1.5 3.2zM362 351.1l1.5-1.7l-2.4 4.4l-1.6 1.1zM365.1 350.5l1.5 3.4l-2.5 3.4l-1.5-2.8z" fill="#0070fe" stroke="#0070fe" stroke-width="0.5"/>
<path d="M366.6 353.9l1.5 2.6l-2.4 4l-1.6-3.2zM369.6 357.7l1.6-1.4l-2.4 3.8l-1.6 1.3zM371.2 356.3l1.5 2.9l-2.4 3.6l-1.5-2.7z" fill="#005cfd" stroke="#005cfd" stroke-width="0.5"/>
<path d="M368.1 356.5l1.5 1.2l-2.4 3.7l-1.5-.9zM372.7 359.2l1.6 1.5l-2.4 3.7l-1.6-1.6zM377.4 362.8l1.7-1.8l-2.4 4.2l-1.7 2.2zM387 366.9l1.8-4.9l-2.3 4l-1.8 5zM388.8 362l1.5 5.9l-2.3 4.2l-1.5-6.1z" fill="#0048fb" stroke="#0048fb" stroke-width="0.5"/>
<path d="M374.3 360.7l1.5 2.1l-2.3 4.2l-1.6-2.6zM375.8 362.8l1.6 0l-2.4 4.6l-1.5-.4zM379.1 361l1.4 6.3l-2.3 4l-1.5-6.1zM395.2 371.3l1.9-5.1l-2.3 4.8l-1.8 3.8z" fill="#0034f9" stroke="#0034f9" stroke-width="0.5"/>
<path d="M380.5 367.3l1.6.1l-2.3 4.6l-1.6-.7zM383.7 370.3l1.6-1.7l-2.3 3.6l-1.6 1.6zM385.3 368.6l1.7-1.7l-2.3 4.1l-1.7 1.2zM390.3 367.9l1.5 5l-2.3 3.6l-1.5-4.4zM393.5 371.9l1.7-.6l-2.2 3.5l-1.8 1.5zM397.1 366.2l1.3 10.1l-2.2 3.3l-1.4-8.6z" fill="#0024f2" stroke="#0024f2" stroke-width="0.5"/>
<path d="M382.1 367.4l1.6 2.9l-2.3 3.5l-1.6-1.8zM391.8 372.9l1.7-1l-2.3 4.4l-1.7.2zM398.4 376.3l1.8-4.2l-2.2 4.9l-1.8 2.6zM400.2 372.1l1.6 4.1l-2.2 3.7l-1.6-2.9z" fill="#001be4" stroke="#001be4" stroke-width="0.5"/>
<path d="M401.8 376.2l1.5 5.1l-2.2 2.8l-1.5-4.2z" fill="#0012d5" stroke="#0012d5" stroke-width="0.5"/>
<path d="M403.3 381.3l1.6.9l-2.1 3l-1.7-1.1zM404.9 382.2l1.8.1l-2.1 3.1l-1.8-.2zM406.7 382.3l1.6 1.7l-2.1 2.7l-1.6-1.3zM408.3 384l1.7 1l-2 2.5l-1.8-.8zM410 385l1.7.5l-2 2.6l-1.7-.6zM411.7 385.5l1.8.6l-2 2.5l-1.8-.5zM413.5 386.1l1.7.5l-2 2.6l-1.7-.6zM415.2 386.6l1.8.6l-2 2.5l-1.8-.5zM417 387.2l1.7.5l-1.9 2.5l-1.8-.5zM418.7 387.7l1.8.5l-1.9 2.6l-1.8-.6zM420.5 388.2l1.8.5l-1.9 2.6l-1.8-.5zM422.3 388.7l1.8.6l-1.9 2.6l-1.8-.6z" fill="#0009c7" stroke="#0009c7" stroke-width="0.5"/>
<path d="M263.4 300.5l1.3 2.6l-3.1 1.7l-1.4-2.5z" fill="#a8ff49" stroke="#a8ff49" stroke-width="0.5"/>
<path d="M264.7 303.1l1.4 2.6l-3.1 1.8l-1.4-2.7z" fill="#80ff70" stroke="#80ff70" stroke-width="0.5"/>
<path d="M266.1 305.7l1.5 4.4l-3.1 2.3l-1.5-4.9z" fill="#58ff98" stroke="#58ff98" stroke-width="0.5"/>
<path d="M267.6 310.1l1.2 1.1l-3.1 2l-1.2-.8z" fill="#30ffc0" stroke="#30ffc0" stroke-width="0.5"/>
<path d="M268.8 311.2l1.4 2.9l-3.1 2.2l-1.4-3.1z" fill="#1af6d9" stroke="#1af6d9" stroke-width="0.5"/>
<path d="M270.2 314.1l1.3 2.3l-3 2.1l-1.4-2.2zM283.3 320.9l1-2.6l-3 2.4l-1 2.3zM284.3 318.3l1.2-.1l-3 2.5l-1.2 0zM285.5 318.2l1.2.4l-3 2.3l-1.2-.2zM286.7 318.6l1.5 4.1l-3 2.1l-1.5-3.9zM289.2 320.4l1.2-.2l-2.9 2.9l-1.2.1zM290.4 320.2l1.4 2.6l-3 2.1l-1.3-1.8z" fill="#10e8e8" stroke="#10e8e8" stroke-width="0.5"/>
<path d="M271.5 316.4l1.3 1.4l-3.1 2.1l-1.2-1.4zM272.8 317.8l1.4 3.1l-3.1 1.7l-1.4-2.7zM282.2 321.4l1.1-.5l-3 2.1l-1.1.9zM288.2 322.7l1-2.3l-2.9 2.8l-1.1 1.6zM294.3 323.6l1.4 2.1l-2.9 2.7l-1.4-2.2zM296.8 325.2l1.3 0l-2.9 2.3l-1.3.3zM298.1 325.2l1.1-1.4l-2.8 3l-1.2.7zM299.2 323.8l1.4 1.4l-2.9 2.9l-1.3-1.3zM315.1 332.3l1.1-4.7l-2.8 3.4l-1.1 4.1z" fill="#06d9f6" stroke="#06d9f6" stroke-width="0.5"/>
<path d="M274.2 320.9l1.3 2.7l-3 2l-1.4-3zM275.5 323.6l.9-2.5l-3 2.3l-.9 2.2zM276.4 321.1l1.2.7l-2.9 2.5l-1.3-.9zM277.6 321.8l1.1-.5l-2.9 2.4l-1.1.6zM278.7 321.3l1.2.3l-3 2.5l-1.1-.4zM279.9 321.6l1.3 2.1l-2.9 2.4l-1.4-2zM281.2 323.7l1-2.3l-3 2.5l-.9 2.2zM291.8 322.8l1.5 3.8l-2.9 3.1l-1.6-4.8zM293.3 326.6l1-3l-2.9 2.6l-1 3.5zM295.7 325.7l1.1-.5l-2.9 2.6l-1.1.6zM313.7 331.1l1.4 1.2l-2.8 2.8l-1.5-1.8zM316.2 327.6l1.7 8.1l-2.8 3.4l-1.7-8.1z" fill="#00c7ff" stroke="#00c7ff" stroke-width="0.5"/>
<path d="M300.6 325.2l1.7 8.2l-2.9 2.3l-1.7-7.6zM308.7 334.6l1.2-2.5l-2.9 2.8l-1.2 1.8zM309.9 332.1l1.4 3.1l-2.8 2.5l-1.5-2.8zM312.7 336.5l1-5.4l-2.9 2.2l-1 5.8zM327.4 338.2l1.3-1.9l-2.7 3.3l-1.3 1.7zM328.7 336.3l1.4.1l-2.7 3.4l-1.4-.2zM330.1 336.4l1.4 1.6l-2.7 3l-1.4-1.2zM331.5 338l1.5 2l-2.7 3.3l-1.5-2.3z" fill="#00b1ff" stroke="#00b1ff" stroke-width="0.5"/>
<path d="M302.3 333.4l1.2-.7l-2.8 2.8l-1.3.2zM303.5 332.7l1.3.1l-2.9 2.5l-1.2.2zM304.8 332.8l1.5 3.7l-2.9 2.8l-1.5-4zM306.3 336.5l1.1-2.6l-2.8 3.1l-1.2 2.3zM307.4 333.9l1.3.7l-2.9 2.1l-1.2.3zM311.3 335.2l1.4 1.3l-2.9 2.6l-1.3-1.4zM317.9 335.7l1.4 2.2l-2.8 3.1l-1.4-1.9zM319.3 337.9l1.3.8l-2.7 2.7l-1.4-.4zM333 340l1.4 1.4l-2.7 2.9l-1.4-1zM334.4 341.4l1.4-.4l-2.6 3.7l-1.5-.4zM335.8 341l1.5-.2l-2.7 3.5l-1.4.4zM337.3 340.8l1.5 5.3l-2.7 3.2l-1.5-5zM340.2 343.6l1.4-.1l-2.6 3.5l-1.5-.5zM344.6 347.3l1.4-4.7l-2.7 4.6l-1.4 3.2z" fill="#009bff" stroke="#009bff" stroke-width="0.5"/>
<path d="M320.6 338.7l1.5 3.2l-2.7 3.2l-1.5-3.7zM322.1 341.9l1.3-1.1l-2.7 2.9l-1.3 1.4zM323.4 340.8l1.3-.7l-2.7 3l-1.3.6zM324.7 340.1l1.5 4.1l-2.7 3.6l-1.5-4.7zM326.2 344.2l1.2-6l-2.7 3.1l-1.2 6.5zM338.8 346.1l1.4-2.5l-2.7 2.9l-1.4 2.8zM341.6 343.5l1.5 2.7l-2.6 3.1l-1.5-2.3zM343.1 346.2l1.5 1.1l-2.7 3.1l-1.4-1.1zM346 342.6l1.5 5.7l-2.6 4l-1.6-5.1zM350.5 349.1l1.5.8l-2.6 3.3l-1.5-.7zM352 349.9l1.4-3.4l-2.5 4.1l-1.5 2.6zM353.4 346.5l1.6 6.1l-2.6 4l-1.5-6z" fill="#0085ff" stroke="#0085ff" stroke-width="0.5"/>
<path d="M347.5 348.3l1.5 1.7l-2.6 4l-1.5-1.7zM349 350l1.5-.9l-2.6 3.4l-1.5 1.5zM356.5 354.7l1.5-3.2l-2.5 3.7l-1.5 3.9zM358 351.5l1.5 3.4l-2.5 3.8l-1.5-3.5zM359.5 354.9l1.6-1.1l-2.6 4.4l-1.5.5zM361.1 353.8l1.5.7l-2.5 4.1l-1.6-.4z" fill="#0070fe" stroke="#0070fe" stroke-width="0.5"/>
<path d="M355 352.6l1.5 2.1l-2.5 4.4l-1.6-2.5zM362.6 354.5l1.5 2.8l-2.5 3.5l-1.5-2.2z" fill="#005cfd" stroke="#005cfd" stroke-width="0.5"/>
<path d="M364.1 357.3l1.6 3.2l-2.5 4l-1.6-3.7zM365.7 360.5l1.5.9l-2.4 3.7l-1.6-.6zM367.2 361.4l1.6-1.3l-2.5 4l-1.5 1zM368.8 360.1l1.5 2.7l-2.4 3.7l-1.6-2.4z" fill="#0048fb" stroke="#0048fb" stroke-width="0.5"/>
<path d="M370.3 362.8l1.6 1.6l-2.4 3.7l-1.6-1.6zM371.9 364.4l1.6 2.6l-2.5 4.3l-1.5-3.2zM375 367.4l1.7-2.2l-2.4 4.3l-1.7 2.5zM384.7 371l1.8-5l-2.3 4l-1.8 5.1zM386.5 366l1.5 6.1l-2.3 4.2l-1.5-6.3z" fill="#0034f9" stroke="#0034f9" stroke-width="0.5"/>
<path d="M373.5 367l1.5.4l-2.4 4.6l-1.6-.7zM376.7 365.2l1.5 6.1l-2.4 3.9l-1.5-5.7zM383 372.2l1.7-1.2l-2.3 4.1l-1.7.7zM393 374.8l1.8-3.8l-2.3 4.9l-1.8 2.3zM394.8 371l1.4 8.6l-2.3 3.4l-1.4-7.1z" fill="#0024f2" stroke="#0024f2" stroke-width="0.5"/>
<path d="M378.2 371.3l1.6.7l-2.4 4.6l-1.6-1.4zM379.8 372l1.6 1.8l-2.4 3.5l-1.6-.7zM381.4 373.8l1.6-1.6l-2.3 3.6l-1.7 1.5zM388 372.1l1.5 4.4l-2.3 3.6l-1.5-3.8zM389.5 376.5l1.7-.2l-2.3 4.3l-1.7-.5zM391.2 376.3l1.8-1.5l-2.3 3.4l-1.8 2.4zM396.2 379.6l1.8-2.6l-2.3 4.8l-1.8 1.2zM398 377l1.6 2.9l-2.2 3.7l-1.7-1.8z" fill="#001be4" stroke="#001be4" stroke-width="0.5"/>
<path d="M399.6 379.9l1.5 4.2l-2.1 2.8l-1.6-3.3z" fill="#0012d5" stroke="#0012d5" stroke-width="0.5"/>
<path d="M401.1 384.1l1.7 1.1l-2.1 2.8l-1.7-1.1zM402.8 385.2l1.8.2l-2.2 3l-1.7-.4zM404.6 385.4l1.6 1.3l-2.1 2.7l-1.7-1zM406.2 386.7l1.8.8l-2.1 2.6l-1.8-.7zM408 387.5l1.7.6l-2.1 2.5l-1.7-.5zM409.7 388.1l1.8.5l-2.1 2.6l-1.8-.6zM411.5 388.6l1.7.6l-2 2.5l-1.8-.5zM413.2 389.2l1.8.5l-2 2.6l-1.8-.6zM415 389.7l1.8.5l-2 2.7l-1.8-.6zM416.8 390.2l1.8.6l-2 2.6l-1.8-.5zM418.6 390.8l1.8.5l-2 2.7l-1.8-.6zM420.4 391.3l1.8.6l-2 2.6l-1.8-.5z" fill="#0009c7" stroke="#0009c7" stroke-width="0.5"/>
<path d="M260.2 302.3l1.4 2.5l-3.2 1.7l-1.4-2.5z" fill="#a8ff49" stroke="#a8ff49" stroke-width="0.5"/>
<path d="M261.6 304.8l1.4 2.7l-3 3.8l-1.6-4.8z" fill="#80ff70" stroke="#80ff70" stroke-width="0.5"/>
<path d="M263 307.5l1.5 4.9l-3.1 2.3l-1.4-3.4z" fill="#30ffc0" stroke="#30ffc0" stroke-width="0.5"/>
<path d="M264.5 312.4l1.2.8l-3.1 2.1l-1.2-.6zM265.7 313.2l1.4 3.1l-3.1 2.2l-1.4-3.2z" fill="#1af6d9" stroke="#1af6d9" stroke-width="0.5"/>
<path d="M267.1 316.3l1.4 2.2l-2.8 5l-1.7-5zM268.5 318.5l1.2 1.4l-2.8 5.1l-1.2-1.5zM280.3 323l1-2.3l-3 2.4l-1 2.2zM283.7 320.9l1.5 3.9l-2.6 7.7l-1.9-9.3zM287.5 323.1l1.3 1.8l-3 2.2l-.8 4.6zM295.2 327.5l1.2-.7l-3 3l-1.2.1zM296.4 326.8l1.3 1.3l-2.9 2.9l-1.4-1.2z" fill="#06d9f6" stroke="#06d9f6" stroke-width="0.5"/>
<path d="M269.7 319.9l1.4 2.7l-2.3 10.4l-1.9-8zM273.4 323.4l1.3.9l-3.1 2.5l-.3 8.8zM297.7 328.1l1.7 7.6l-2.9 2.4l-1.7-7.1zM309.8 339.1l1-5.8l-2.9 2.3l-.9 6.1zM313.4 331l1.7 8.1l-2.8 3.3l-1.8-7.9zM326 339.6l1.4.2l-2.8 3.3l-1.4-.3zM327.4 339.8l1.4 1.2l-2.8 3l-1.4-.9z" fill="#00b1ff" stroke="#00b1ff" stroke-width="0.5"/>
<path d="M271.1 322.6l1.4 3l-2.2 11.3l-1.5-3.9zM299.4 335.7l1.3-.2l-2.9 2.7l-1.3-.1zM300.7 335.5l1.2-.2l-2.9 2.6l-1.2.3zM304.6 337l1.2-.3l-2.9 2.2l-1.2 1.3zM305.8 336.7l1.2-1.8l-2.9 2.9l-1.2 1.1zM307 334.9l1.5 2.8l-2.9 2.6l-1.5-2.5zM308.5 337.7l1.3 1.4l-2.8 2.6l-1.4-1.4zM315.1 339.1l1.4 1.9l-2.8 3.3l-1.4-1.9zM324.7 341.3l1.3-1.7l-2.8 3.2l-1.3 1.7zM328.8 341l1.5 2.3l-2.8 3.3l-1.5-2.6zM330.3 343.3l1.4 1l-2.7 2.9l-1.5-.6zM331.7 344.3l1.5.4l-2.8 3.7l-1.4-1.2zM333.2 344.7l1.4-.4l-2.7 3.4l-1.5.7z" fill="#009bff" stroke="#009bff" stroke-width="0.5"/>
<path d="M272.5 325.6l.9-2.2l-2.1 12.2l-1 1.3zM301.9 335.3l1.5 4l-2.8 2.9l-1.6-4.3zM303.4 339.3l1.2-2.3l-2.9 3.2l-1.1 2zM316.5 341l1.4.4l-2.9 2.7l-1.3.2zM317.9 341.4l1.5 3.7l-2.8 3.3l-1.6-4.3zM320.7 343.7l1.3-.6l-2.8 3.1l-1.3.3zM323.5 347.8l1.2-6.5l-2.8 3.2l-1.1 6.9zM334.6 344.3l1.5 5l-2.7 3.3l-1.5-4.9zM336.1 349.3l1.4-2.8l-2.7 2.9l-1.4 3.2zM337.5 346.5l1.5.5l-2.7 3.6l-1.5-1.2zM339 347l1.5 2.3l-2.7 3.1l-1.5-1.8zM341.9 350.4l1.4-3.2l-2.6 4.7l-1.4 1.7zM343.3 347.2l1.6 5.1l-2.6 4l-1.6-4.4zM349.4 353.2l1.5-2.6l-2.7 4.1l-1.5 1.8z" fill="#0085ff" stroke="#0085ff" stroke-width="0.5"/>
<path d="M274.7 324.3l1.1-.6l-3 2.8l-1.2.3zM275.8 323.7l1.1.4l-3 2.5l-1.1-.1zM276.9 324.1l1.4 2l-3.1 2.4l-1.3-1.9zM278.3 326.1l.9-2.2l-3 2.6l-1 2zM279.2 323.9l1.1-.9l-3 2.3l-1.1 1.2zM285.2 324.8l1.1-1.6l-2.4 10.1l-1.3-.8zM286.3 323.2l1.2-.1l-2.5 8.6l-1.1 1.6zM288.8 324.9l1.6 4.8l-2.9 3.1l-1.7-5.7zM290.4 329.7l1-3.5l-3 2.5l-.9 4.1zM291.4 326.2l1.4 2.2l-3 2.7l-1.4-2.4zM292.8 328.4l1.1-.6l-2.9 2.7l-1.2.6zM293.9 327.8l1.3-.3l-3 2.4l-1.2.6zM310.8 333.3l1.5 1.8l-2.9 2.8l-1.5-2.3zM312.3 335.1l1.1-4.1l-2.9 3.5l-1.1 3.4z" fill="#00c7ff" stroke="#00c7ff" stroke-width="0.5"/>
<path d="M281.3 320.7l1.2 0l-3 2.6l-1.2-.2zM282.5 320.7l1.2.2l-3 2.3l-1.2.1z" fill="#10e8e8" stroke="#10e8e8" stroke-width="0.5"/>
<path d="M319.4 345.1l1.3-1.4l-2.8 2.8l-1.3 1.9zM322 343.1l1.5 4.7l-2.7 3.6l-1.6-5.2zM340.5 349.3l1.4 1.1l-2.6 3.2l-1.5-1.2zM344.9 352.3l1.5 1.7l-2.6 4l-1.5-1.7zM346.4 354l1.5-1.5l-2.7 3.5l-1.4 2zM347.9 352.5l1.5.7l-2.7 3.3l-1.5-.5zM350.9 350.6l1.5 6l-2.6 4l-1.6-5.9z" fill="#0070fe" stroke="#0070fe" stroke-width="0.5"/>
<path d="M352.4 356.6l1.6 2.5l-2.6 4.5l-1.6-3zM354 359.1l1.5-3.9l-2.6 3.7l-1.5 4.7zM355.5 355.2l1.5 3.5l-2.6 3.9l-1.5-3.7zM357 358.7l1.5-.5l-2.5 4.5l-1.6-.1zM358.5 358.2l1.6.4l-2.6 4.1l-1.5 0zM360.1 358.6l1.5 2.2l-2.5 3.6l-1.6-1.7z" fill="#005cfd" stroke="#005cfd" stroke-width="0.5"/>
<path d="M361.6 360.8l1.6 3.7l-2.5 4.1l-1.6-4.2z" fill="#0048fb" stroke="#0048fb" stroke-width="0.5"/>
<path d="M363.2 364.5l1.6.6l-2.6 3.7l-1.5-.2zM364.8 365.1l1.5-1l-2.5 3.9l-1.6.8zM366.3 364.1l1.6 2.4l-2.5 3.7l-1.6-2.2zM367.9 366.5l1.6 1.6l-2.5 3.7l-1.6-1.6z" fill="#0034f9" stroke="#0034f9" stroke-width="0.5"/>
<path d="M369.5 368.1l1.5 3.2l-2.4 4.3l-1.6-3.8zM372.6 372l1.7-2.5l-2.5 4.3l-1.6 2.8zM374.3 369.5l1.5 5.7l-2.4 3.8l-1.6-5.2zM382.4 375.1l1.8-5.1l-2.4 4l-1.8 5.2zM384.2 370l1.5 6.3l-2.4 4.1l-1.5-6.4zM390.7 378.2l1.8-2.3l-2.4 4.9l-1.7.8z" fill="#0024f2" stroke="#0024f2" stroke-width="0.5"/>
<path d="M371 371.3l1.6.7l-2.4 4.6l-1.6-1zM379 377.3l1.7-1.5l-2.4 3.7l-1.7 1.3zM380.7 375.8l1.7-.7l-2.4 4.1l-1.7.3zM385.7 376.3l1.5 3.8l-2.3 3.5l-1.6-3.2zM388.9 380.6l1.8-2.4l-2.3 3.4l-1.8 3.1zM392.5 375.9l1.4 7.1l-2.2 3.3l-1.6-5.5z" fill="#001be4" stroke="#001be4" stroke-width="0.5"/>
<path d="M375.8 375.2l1.6 1.4l-2.4 4.3l-1.6-1.9zM377.4 376.6l1.6.7l-2.4 3.5l-1.6.1zM387.2 380.1l1.7.5l-2.3 4.1l-1.7-1.1zM393.9 383l1.8-1.2l-2.3 4.5l-1.7 0zM395.7 381.8l1.7 1.8l-2.3 3.5l-1.7-.8zM397.4 383.6l1.6 3.3l-2.2 2.8l-1.7-2.6z" fill="#0012d5" stroke="#0012d5" stroke-width="0.5"/>
<path d="M399 386.9l1.7 1.1l-2.2 2.8l-1.7-1.1zM400.7 388l1.7.4l-2.2 2.8l-1.7-.4zM402.4 388.4l1.7 1l-2.1 2.7l-1.8-.9zM404.1 389.4l1.8.7l-2.1 2.6l-1.8-.6zM405.9 390.1l1.7.5l-2.1 2.7l-1.7-.6zM407.6 390.6l1.8.6l-2.1 2.6l-1.8-.5zM409.4 391.2l1.8.5l-2.1 2.7l-1.8-.6zM411.2 391.7l1.8.6l-2.1 2.7l-1.8-.6zM413 392.3l1.8.6l-2.1 2.6l-1.8-.5zM414.8 392.9l1.8.5l-2 2.7l-1.9-.6zM416.6 393.4l1.8.6l-2 2.7l-1.8-.6zM418.4 394l1.8.5l-2 2.8l-1.8-.6z" fill="#0009c7" stroke="#0009c7" stroke-width="0.5"/>
<path d="M257 304l1.4 2.5l-3 4.2l-1.7-4.9z" fill="#a8ff49" stroke="#a8ff49" stroke-width="0.5"/>
<path d="M258.4 306.5l1.6 4.8l-1.5 18.4l-3.1-19z" fill="#1af6d9" stroke="#1af6d9" stroke-width="0.5"/>
<path d="M260 311.3l1.4 3.4l-2.1 12.7l-.8 2.3zM261.4 314.7l1.2.6l-2.1 13l-1.2-.9zM262.6 315.3l1.4 3.2l-2.3 10l-1.2-.2zM278.3 323.1l1.2.2l-3.1 2.5l-1.2.1zM279.5 323.3l1.2-.1l-2.2 12.9l-2.1-10.3z" fill="#06d9f6" stroke="#06d9f6" stroke-width="0.5"/>
<path d="M264 318.5l1.7 5l-1.5 19.1l-2.5-14.1zM273.9 326.6l1.3 1.9l-2.4 9.3l-1.4-2.1zM275.2 328.5l1-2l-2.1 13.3l-1.3-2zM276.2 326.5l1.1-1.2l-1.8 17.2l-1.4-2.7zM285.8 327.1l1.7 5.7l-2.7 6.6l-1 2.9zM288.4 328.7l1.4 2.4l-2.1 14.3l-2.1-10.5zM291 330.5l1.2-.6l-2.3 12.7l-.9 4.8zM302.9 338.9l1.2-1.1l-2.8 4.3l-1.4-1.1zM309.4 337.9l1.1-3.4l-2.7 5.5l-.8 9.6zM310.5 334.5l1.8 7.9l-2.7 6.4l-1.8-8.8zM321.9 344.5l1.3-1.7l-2.8 3.3l-1.4 1.6zM323.2 342.8l1.4.3l-2.8 3.5l-1.4-.5zM324.6 343.1l1.4.9l-2.8 3.1l-1.4-.5zM326 344l1.5 2.6l-2.8 3.4l-1.5-2.9z" fill="#009bff" stroke="#009bff" stroke-width="0.5"/>
<path d="M265.7 323.5l1.2 1.5l-1.4 19.2l-1.3-1.6zM285 331.7l.8-4.6l-2 15.2l-.3 11zM296.5 338.1l1.3.1l-3 3.5l-.6 9.3zM300.6 342.2l1.1-2l-2.9 3.2l-1.2 1.7zM307 341.7l.9-6.1l-2.4 11.1l-.9 8.1zM312.3 342.4l1.4 1.9l-2.4 11.2l-1.7-6.7zM316.6 348.4l1.3-1.9l-2.9 2.9l-1.3 2.2zM317.9 346.5l1.3-.3l-2.9 3l-1.3.2zM319.2 346.2l1.6 5.2l-2.8 3.6l-1.7-5.8zM320.8 351.4l1.1-6.9l-2.9 3.2l-1 7.3zM331.9 347.7l1.5 4.9l-2.7 3.3l-1.6-4.7zM333.4 352.6l1.4-3.2l-2.8 3l-1.3 3.5zM336.3 350.6l1.5 1.8l-2.8 3.2l-1.5-1.3zM337.8 352.4l1.5 1.2l-2.8 3.2l-1.5-1.2zM339.3 353.6l1.4-1.7l-2.7 4.7l-1.5.2zM340.7 351.9l1.6 4.4l-2.7 4l-1.6-3.7zM345.2 356l1.5.5l-2.6 3.4l-1.6-.4zM346.7 356.5l1.5-1.8l-2.6 4.1l-1.5 1.1z" fill="#0070fe" stroke="#0070fe" stroke-width="0.5"/>
<path d="M266.9 325l1.9 8l-1.3 20.8l-2-9.6zM271.3 335.6l.3-8.8l-2 14l.5 16.5zM282.6 332.5l1.3.8l-1.4 22l-1.4-2.1zM283.9 333.3l1.1-1.6l-1.5 21.6l-1 2zM349.8 360.6l1.6 3l-2.7 4.4l-1.5-3.3zM351.4 363.6l1.5-4.7l-2.7 3.8l-1.5 5.3zM354.4 362.6l1.6.1l-2.6 4.6l-1.6-.8zM356 362.7l1.5 0l-2.6 4.1l-1.5.5zM357.5 362.7l1.6 1.7l-2.6 3.6l-1.6-1.2z" fill="#0048fb" stroke="#0048fb" stroke-width="0.5"/>
<path d="M268.8 333l1.5 3.9l-1.3 21.2l-1.5-4.3zM360.7 368.6l1.5.2l-2.5 3.8l-1.6.1zM365.4 370.2l1.6 1.6l-2.6 3.8l-1.6-1.7zM380 379.2l1.8-5.2l-2.5 4.1l-1.8 5.2zM381.8 374l1.5 6.4l-2.4 4.1l-1.6-6.4z" fill="#0024f2" stroke="#0024f2" stroke-width="0.5"/>
<path d="M270.3 336.9l1-1.3l-1.2 21.7l-1.1.8zM367 371.8l1.6 3.8l-2.6 4.2l-1.6-4.2zM368.6 375.6l1.6 1l-2.6 4.5l-1.6-1.3zM370.2 376.6l1.6-2.8l-2.5 4.3l-1.7 3zM371.8 373.8l1.6 5.2l-2.5 3.8l-1.6-4.7zM378.3 379.5l1.7-.3l-2.5 4.1l-1.7-.2zM388.4 381.6l1.7-.8l-2.4 4.7l-1.7-.4z" fill="#001be4" stroke="#001be4" stroke-width="0.5"/>
<path d="M271.6 326.8l1.2-.3l-1.7 17.7l-1.5-3.4zM272.8 326.5l1.1.1l-2.5 9.1l-.3 8.5zM280.7 323.2l1.9 9.3l-1.5 20.7l-2.6-17.1zM289.8 331.1l1.2-.6l-2 16.9l-1.3-2zM294.8 331l1.7 7.1l-2.3 12.9l-2.1-12.1zM297.8 338.2l1.2-.3l-3 2.5l-1.2 1.3zM299 337.9l1.6 4.3l-3 2.9l-1.6-4.7zM301.7 340.2l1.2-1.3l-3 2.1l-1.1 2.4zM304.1 337.8l1.5 2.5l-2.4 12.3l-1.9-10.5zM307.9 335.6l1.5 2.3l-2.4 11.7l-1.5-2.9zM327.5 346.6l1.5.6l-2.8 3.5l-1.5-.7zM329 347.2l1.4 1.2l-2.7 3.7l-1.5-1.4zM330.4 348.4l1.5-.7l-2.8 3.5l-1.4.9zM334.8 349.4l1.5 1.2l-2.8 3.7l-1.5-1.9z" fill="#0085ff" stroke="#0085ff" stroke-width="0.5"/>
<path d="M277.3 325.3l1-2.2l-3.1 2.8l.3 16.6zM287.5 332.8l.9-4.1l-2.8 6.2l-.8 4.5zM292.2 329.9l1.2-.1l-2.6 7.4l-.9 5.4zM293.4 329.8l1.4 1.2l-2.7 7.9l-1.3-1.7z" fill="#00b1ff" stroke="#00b1ff" stroke-width="0.5"/>
<path d="M305.6 340.3l1.4 1.4l-2.4 13.1l-1.4-2.2zM313.7 344.3l1.3-.2l-2.4 11.9l-1.3-.5zM315 344.1l1.6 4.3l-2.9 3.2l-1.1 4.4zM342.3 356.3l1.5 1.7l-2.7 4.1l-1.5-1.8zM343.8 358l1.4-2l-2.7 3.5l-1.4 2.6zM348.2 354.7l1.6 5.9l-2.6 4.1l-1.6-5.9zM352.9 358.9l1.5 3.7l-2.6 3.9l-1.6-3.8z" fill="#005cfd" stroke="#005cfd" stroke-width="0.5"/>
<path d="M359.1 364.4l1.6 4.2l-2.6 4.1l-1.6-4.7zM362.2 368.8l1.6-.8l-2.5 4l-1.6.6zM363.8 368l1.6 2.2l-2.6 3.7l-1.5-1.9z" fill="#0034f9" stroke="#0034f9" stroke-width="0.5"/>
<path d="M373.4 379l1.6 1.9l-2.5 4.1l-1.6-2.2zM375 380.9l1.6-.1l-2.4 3.4l-1.7.8zM376.6 380.8l1.7-1.3l-2.5 3.6l-1.6 1.1zM383.3 380.4l1.6 3.2l-2.4 3.5l-1.6-2.6zM384.9 383.6l1.7 1.1l-2.4 3.8l-1.7-1.4zM386.6 384.7l1.8-3.1l-2.4 3.5l-1.8 3.4zM390.1 380.8l1.6 5.5l-2.4 3.2l-1.6-4zM391.7 386.3l1.7 0l-2.3 4.1l-1.8-.9zM393.4 386.3l1.7.8l-2.3 3.5l-1.7-.2z" fill="#0012d5" stroke="#0012d5" stroke-width="0.5"/>
<path d="M395.1 387.1l1.7 2.6l-2.3 2.9l-1.7-2zM396.8 389.7l1.7 1.1l-2.3 2.7l-1.7-.9zM398.5 390.8l1.7.4l-2.2 2.8l-1.8-.5zM400.2 391.2l1.8.9l-2.2 2.7l-1.8-.8zM402 392.1l1.8.6l-2.2 2.7l-1.8-.6zM403.8 392.7l1.7.6l-2.1 2.7l-1.8-.6zM405.5 393.3l1.8.5l-2.1 2.8l-1.8-.6zM407.3 393.8l1.8.6l-2.1 2.7l-1.8-.5zM409.1 394.4l1.8.6l-2.1 2.7l-1.8-.6zM410.9 395l1.8.5l-2.1 2.8l-1.8-.6zM412.7 395.5l1.9.6l-2.1 2.8l-1.9-.6zM414.6 396.1l1.8.6l-2.1 2.8l-1.8-.6zM416.4 396.7l1.8.6l-2 2.8l-1.9-.6z" fill="#0009c7" stroke="#0009c7" stroke-width="0.5"/>
<path d="M253.7 305.8l1.7 4.9l-2.8 7l-2.2-10.1z" fill="#80ff70" stroke="#80ff70" stroke-width="0.5"/>
<path d="M255.4 310.7l3.1 19l-.9 23.3l-5-35.3zM275.2 325.9l1.2-.1l-2.3 12l-.6 5.9z" fill="#00b1ff" stroke="#00b1ff" stroke-width="0.5"/>
<path d="M258.5 329.7l.8-2.3l-1 22l-.7 3.6zM259.3 327.4l1.2.9l-1.1 22l-1.1-.9zM260.5 328.3l1.2.2l-1.2 21.2l-1.1.6zM284.8 339.4l.8-4.5l-1.6 20.4l-.8 4.9zM290.8 337.2l1.3 1.7l-1.6 21.6l-1.4-1.8zM297.6 345.1l1.2-1.7l-2.2 15.4l-1.3-1.1zM307.8 340l1.8 8.8l-1.9 21.3l-1.9-9zM315 349.4l1.3-.2l-2.3 15.3l-1.4-2.6zM324.7 350l1.5.7l-2.2 19.4l-1.8-8.2zM326.2 350.7l1.5 1.4l-2.6 10.7l-1.1 7.3zM341.1 362.1l1.4-2.6l-2.7 3.6l-1.2 11.9zM345.6 358.8l1.6 5.9l-2.6 14.4l-1.8-16.1z" fill="#0048fb" stroke="#0048fb" stroke-width="0.5"/>
<path d="M271.4 335.7l1.4 2.1l-1.4 21.2l-1.3-2.1zM283.8 342.3l1-2.9l-1.6 20.8l-.8 5zM348.7 368l1.5-5.3l-2.6 7.2l-1.3 15.9zM353.4 367.3l1.5-.5l-2.6 10.7l-1.5 7.5zM356.5 368l1.6 4.7l-2.7 4.1l-1.5-2.3zM358.1 372.7l1.6-.1l-2.7 7.7l-1.6-3.5zM359.7 372.6l1.6-.6l-2.7 5.7l-1.6 2.6zM361.3 372l1.5 1.9l-2.6 3.8l-1.6 0zM362.8 373.9l1.6 1.7l-2.5 3.8l-1.7-1.7z" fill="#0024f2" stroke="#0024f2" stroke-width="0.5"/>
<path d="M272.8 337.8l1.3 2l-1.2 22.4l-1.5-3.2zM305.5 346.7l1.5 2.9l-1.8 23l-1.5-3.4zM347.2 364.7l1.5 3.3l-2.4 17.8l-1.7-6.7zM351.8 366.5l1.6.8l-2.6 17.7l-1.6-8.9zM364.4 375.6l1.6 4.2l-2.5 4.1l-1.6-4.5zM377.5 383.3l1.8-5.2l-2.5 4.1l-1.8 5zM379.3 378.1l1.6 6.4l-2.5 4l-1.6-6.3z" fill="#001be4" stroke="#001be4" stroke-width="0.5"/>
<path d="M276.4 325.8l2.1 10.3l-1.4 22.4l-3-20.7zM323.2 347.1l1.5 2.9l-2.5 11.9l-1.9-11.8zM327.7 352.1l1.4-.9l-2.9 3.5l-1.1 8.1zM329.1 351.2l1.6 4.7l-2.9 3.4l-1.6-4.6zM330.7 355.9l1.3-3.5l-2.8 2.9l-1.4 4zM332 352.4l1.5 1.9l-2.8 3.7l-1.5-2.7zM333.5 354.3l1.5 1.3l-2.8 3.2l-1.5-.8zM335 355.6l1.5 1.2l-2.8 3.2l-1.5-1.2z" fill="#0070fe" stroke="#0070fe" stroke-width="0.5"/>
<path d="M289.9 342.6l.9-5.4l-1.7 21.5l-.7 6.5zM307 349.6l.8-9.6l-2 21.1l-.6 11.5zM313.7 351.6l1.3-2.2l-2.4 12.5l-1.1 6.5zM316.3 349.2l1.7 5.8l-2.6 9l-1.4.5zM339.6 360.3l1.5 1.8l-2.5 12.9l-1.8-10.6zM350.2 362.7l1.6 3.8l-2.6 9.6l-1.6-6.2zM354.9 366.8l1.6 1.2l-2.6 6.5l-1.6 3z" fill="#0034f9" stroke="#0034f9" stroke-width="0.5"/>
<path d="M294.8 341.7l1.2-1.3l-2.6 7.9l-.4 12.1zM296 340.4l1.6 4.7l-2.3 12.6l-1.9-9.4zM298.8 343.4l1.1-2.4l-2.4 11.1l-.9 6.7zM299.9 341l1.4 1.1l-1.9 19.6l-1.9-9.6zM318 355l1-7.3l-2.9 3.4l-.7 12.9zM336.5 356.8l1.5-.2l-2.8 4.7l-1.5-1.3zM338 356.6l1.6 3.7l-2.8 4.1l-1.6-3.1zM342.5 359.5l1.6.4l-2.8 3.4l-1.5-.2zM344.1 359.9l1.5-1.1l-2.8 4.2l-1.5.3z" fill="#005cfd" stroke="#005cfd" stroke-width="0.5"/>
<path d="M319 347.7l1.4-1.6l-2.9 3.3l-1.4 1.7z" fill="#0085ff" stroke="#0085ff" stroke-width="0.5"/>
<path d="M320.4 346.1l1.4.5l-2.9 3.4l-1.4-.6zM321.8 346.6l1.4.5l-2.9 3l-1.4-.1z" fill="#009bff" stroke="#009bff" stroke-width="0.5"/>
<path d="M366 379.8l1.6 1.3l-2.5 4.3l-1.6-1.5zM367.6 381.1l1.7-3l-2.6 4.2l-1.6 3.1zM369.3 378.1l1.6 4.7l-2.5 3.7l-1.7-4.2zM374.2 384.2l1.6-1.1l-2.5 3.6l-1.6.8zM375.8 383.1l1.7.2l-2.5 3.9l-1.7-.5zM380.9 384.5l1.6 2.6l-2.4 3.4l-1.7-2zM384.2 388.5l1.8-3.4l-2.4 3.4l-1.8 3.5zM386 385.1l1.7.4l-2.4 4.6l-1.7-1.6zM387.7 385.5l1.6 4l-2.3 3.2l-1.7-2.6z" fill="#0012d5" stroke="#0012d5" stroke-width="0.5"/>
<path d="M370.9 382.8l1.6 2.2l-2.5 3.7l-1.6-2.2zM372.5 385l1.7-.8l-2.5 3.3l-1.7 1.2zM382.5 387.1l1.7 1.4l-2.4 3.5l-1.7-1.5zM389.3 389.5l1.8.9l-2.4 3.6l-1.7-1.3zM391.1 390.4l1.7.2l-2.3 3.3l-1.8.1zM392.8 390.6l1.7 2l-2.3 2.8l-1.7-1.5zM394.5 392.6l1.7.9l-2.3 2.8l-1.7-.9zM396.2 393.5l1.8.5l-2.3 2.9l-1.8-.6zM398 394l1.8.8l-2.3 2.8l-1.8-.7zM399.8 394.8l1.8.6l-2.3 2.7l-1.8-.5zM401.6 395.4l1.8.6l-2.3 2.7l-1.8-.6zM403.4 396l1.8.6l-2.3 2.7l-1.8-.6zM405.2 396.6l1.8.5l-2.2 2.8l-1.9-.6zM407 397.1l1.8.6l-2.2 2.8l-1.8-.6zM408.8 397.7l1.8.6l-2.1 2.8l-1.9-.6zM410.6 398.3l1.9.6l-2.2 2.8l-1.8-.6zM412.5 398.9l1.8.6l-2.1 2.8l-1.9-.6zM414.3 399.5l1.9.6l-2.1 2.8l-1.9-.6z" fill="#0009c7" stroke="#0009c7" stroke-width="0.5"/>
<path d="M250.4 307.6l2.2 10.1l-2.6 8.1l-3-16.4z" fill="#30ffc0" stroke="#30ffc0" stroke-width="0.5"/>
<path d="M316.1 351.1l1.4-1.7l-2.6 10.9l-.9 9.9zM329.2 355.3l1.5 2.7l-2.7 7.1l-1.4 1.6z" fill="#005cfd" stroke="#005cfd" stroke-width="0.5"/>
<path d="M317.5 349.4l1.4.6l-2.6 11l-1.4-.7zM318.9 350l1.4.1l-2.7 8.3l-1.3 2.6z" fill="#0070fe" stroke="#0070fe" stroke-width="0.5"/>
<path d="M326.2 354.7l1.6 4.6l-2.5 13.4l-1.6-5.7zM327.8 359.3l1.4-4l-2.6 11.4l-1.3 6zM330.7 358l1.5.8l-2.6 12.6l-1.6-6.3zM341.3 363.3l1.5-.3l-2.5 15.4l-1.8-10.4z" fill="#0048fb" stroke="#0048fb" stroke-width="0.5"/>
<path d="M332.2 358.8l1.5 1.2l-2.4 16.3l-1.7-4.9zM339.8 363.1l1.5.2l-2.8 4.7l-1.1 14.1z" fill="#0034f9" stroke="#0034f9" stroke-width="0.5"/>
<path d="M333.7 360l1.5 1.3l-2.3 20.2l-1.6-5.2z" fill="#0024f2" stroke="#0024f2" stroke-width="0.5"/>
<path d="M335.2 361.3l1.6 3.1l-2.4 18.6l-1.5-1.5zM375 387.2l1.8-5l-2.5 4.1l-1.8 4.7z" fill="#001be4" stroke="#001be4" stroke-width="0.5"/>
<path d="M360.2 377.7l1.7 1.7l-2.7 4l-1.6 7.8zM361.9 379.4l1.6 4.5l-2.7 4l-1.6-4.5zM373.3 386.7l1.7.5l-2.5 3.8l-1.7-.8zM376.8 382.2l1.6 6.3l-2.6 7.6l-1.5-9.8zM381.8 392l1.8-3.5l-2.5 3.4l-1.8 3.3zM383.6 388.5l1.7 1.6l-2.5 4.2l-1.7-2.4z" fill="#0012d5" stroke="#0012d5" stroke-width="0.5"/>
<path d="M368.4 386.5l1.6 2.2l-2.6 3.3l-1.6-.5zM370 388.7l1.7-1.2l-2.6 3.3l-1.7 1.2zM371.7 387.5l1.6-.8l-2.5 3.5l-1.7.6zM378.4 388.5l1.7 2l-2.5 3.3l-1.8 2.3zM380.1 390.5l1.7 1.5l-2.5 3.2l-1.7-1.4zM385.3 390.1l1.7 2.6l-2.5 3.2l-1.7-1.6zM387 392.7l1.7 1.3l-2.4 3.3l-1.8-1.4zM388.7 394l1.8-.1l-2.4 3.2l-1.8.2zM390.5 393.9l1.7 1.5l-2.4 2.9l-1.7-1.2zM392.2 395.4l1.7.9l-2.3 2.8l-1.8-.8zM393.9 396.3l1.8.6l-2.3 2.8l-1.8-.6zM395.7 396.9l1.8.7l-2.3 2.8l-1.8-.7zM397.5 397.6l1.8.5l-2.3 2.9l-1.8-.6zM399.3 398.1l1.8.6l-2.3 2.9l-1.8-.6zM401.1 398.7l1.8.6l-2.2 2.9l-1.9-.6zM402.9 399.3l1.9.6l-2.3 2.9l-1.8-.6zM404.8 399.9l1.8.6l-2.2 2.9l-1.9-.6zM406.6 400.5l1.9.6l-2.2 2.9l-1.9-.6zM408.5 401.1l1.8.6l-2.2 2.9l-1.8-.6zM410.3 401.7l1.9.6l-2.2 3l-1.9-.7zM412.2 402.3l1.9.6l-2.2 3l-1.9-.6z" fill="#0009c7" stroke="#0009c7" stroke-width="0.5"/>
<path d="M247 309.4l3 16.4l-3.4 2.5l-3.1-17z" fill="#1af6d9" stroke="#1af6d9" stroke-width="0.5"/>
<path d="M381.1 391.9l1.7 2.4l-2.6 7.3l-1.7-1.9zM382.8 394.3l1.7 1.6l-2.5 3.1l-1.8 2.6zM384.5 395.9l1.8 1.4l-2.5 3.1l-1.8-1.4zM386.3 397.3l1.8-.2l-2.5 3.2l-1.8.1zM388.1 397.1l1.7 1.2l-2.4 2.9l-1.8-.9zM389.8 398.3l1.8.8l-2.4 2.9l-1.8-.8zM391.6 399.1l1.8.6l-2.4 2.9l-1.8-.6zM393.4 399.7l1.8.7l-2.4 2.9l-1.8-.7zM395.2 400.4l1.8.6l-2.3 2.9l-1.9-.6zM397 401l1.8.6l-2.3 2.9l-1.8-.6zM398.8 401.6l1.9.6l-2.3 2.9l-1.9-.6zM400.7 402.2l1.8.6l-2.3 2.9l-1.8-.6zM402.5 402.8l1.9.6l-2.3 3l-1.9-.7zM404.4 403.4l1.9.6l-2.3 3l-1.9-.6zM406.3 404l1.8.6l-2.2 3l-1.9-.6zM408.1 404.6l1.9.7l-2.2 3l-1.9-.7zM410 405.3l1.9.6l-2.2 3l-1.9-.6z" fill="#0009c7" stroke="#0009c7" stroke-width="0.5"/>
<path d="M243.5 311.3l3.1 17l-3.5 1.9l-3.2-17z" fill="#1af6d9" stroke="#1af6d9" stroke-width="0.5"/>
<path d="M382 399l1.8 1.4l-2.6 4.5l-1.8 1.4z" fill="#0000b8" stroke="#0000b8" stroke-width="0.5"/>
<path d="M383.8 400.4l1.8-.1l-2.5 3.1l-1.9 1.5zM385.6 400.3l1.8.9l-2.5 3l-1.8-.8zM387.4 401.2l1.8.8l-2.5 3l-1.8-.8zM389.2 402l1.8.6l-2.5 3l-1.8-.6zM391 402.6l1.8.7l-2.4 2.9l-1.9-.6zM392.8 403.3l1.9.6l-2.5 3l-1.8-.7zM394.7 403.9l1.8.6l-2.4 3l-1.9-.6zM396.5 404.5l1.9.6l-2.4 3l-1.9-.6zM398.4 405.1l1.8.6l-2.4 3.1l-1.8-.7zM400.2 405.7l1.9.7l-2.4 3l-1.9-.6zM402.1 406.4l1.9.6l-2.4 3.1l-1.9-.7zM404 407l1.9.6l-2.3 3.1l-2-.6zM405.9 407.6l1.9.7l-2.3 3.1l-1.9-.7zM407.8 408.3l1.9.6l-2.3 3.1l-1.9-.6z" fill="#0009c7" stroke="#0009c7" stroke-width="0.5"/>
<path d="M232.8 260.2L341.8 234.3L475.8 246.4L466.7 335.8L407.4 420.5L246.3 362.2" stroke="#f4f4f4" stroke-width="1.2" fill="none"/>
<path d="M250.3 363.7l0.8 2 M254.4 365.1l0.8 2 M258.4 366.6l0.8 2 M262.4 368.0l0.8 2 M266.4 369.5l0.8 2 M270.5 370.9l0.8 2 M274.5 372.4l0.8 2 M278.5 373.9l0.8 2 M282.5 375.3l0.8 2 M286.6 376.8l0.8 2 M290.6 378.2l0.8 2 M294.6 379.7l0.8 2 M298.7 381.1l0.8 2 M302.7 382.6l0.8 2 M306.7 384.1l0.8 2 M310.7 385.5l0.8 2 M314.8 387.0l0.8 2 M318.8 388.4l0.8 2 M322.8 389.9l0.8 2 M326.9 391.4l0.8 2 M330.9 392.8l0.8 2 M334.9 394.3l0.8 2 M338.9 395.7l0.8 2 M343.0 397.2l0.8 2 M347.0 398.6l0.8 2 M351.0 400.1l0.8 2 M355.0 401.6l0.8 2 M359.1 403.0l0.8 2 M363.1 404.5l0.8 2 M367.1 405.9l0.8 2 M371.2 407.4l0.8 2 M375.2 408.8l0.8 2 M379.2 410.3l0.8 2 M383.2 411.8l0.8 2 M387.3 413.2l0.8 2 M391.3 414.7l0.8 2 M395.3 416.1l0.8 2 M399.3 417.6l0.8 2 M403.4 419.0l0.8 2" stroke="#e8e8e8" stroke-width="0.8"/>
<path d="M231.4 260.2L244.9 362.2" stroke="url(#zbar)" stroke-width="2.4"/>
<path d="M233.4 260.2L246.70000000000002 362.2" stroke="#f0f0f0" stroke-width="1.1"/>
<text x="227.6" y="261.6" text-anchor="middle" font-size="7" font-weight="bold" fill="#f0f0f0" font-family="Liberation Sans, sans-serif">80</text>
<text x="227.5" y="275.5" text-anchor="middle" font-size="7" font-weight="bold" fill="#f0f0f0" font-family="Liberation Sans, sans-serif">d</text>
<text x="228.8" y="288" text-anchor="middle" font-size="7" font-weight="bold" fill="#f0f0f0" font-family="Liberation Sans, sans-serif">6</text>
<text x="232.8" y="313.5" text-anchor="middle" font-size="7" font-weight="bold" fill="#f0f0f0" font-family="Liberation Sans, sans-serif">4</text>
<text x="236.3" y="337" text-anchor="middle" font-size="7" font-weight="bold" fill="#f0f0f0" font-family="Liberation Sans, sans-serif">2</text>
<text x="239.2" y="360" text-anchor="middle" font-size="7" font-weight="bold" fill="#f0f0f0" font-family="Liberation Sans, sans-serif">0</text>
<text x="260" y="371" text-anchor="middle" font-size="6.6" font-weight="bold" fill="#e8e8e8" font-family="Liberation Sans, sans-serif">31.5</text>
<text x="271.8" y="375.3" text-anchor="middle" font-size="6.6" font-weight="bold" fill="#e8e8e8" font-family="Liberation Sans, sans-serif">63</text>
<text x="285" y="381" text-anchor="middle" font-size="6.6" font-weight="bold" fill="#e8e8e8" font-family="Liberation Sans, sans-serif">125</text>
<text x="299" y="386" text-anchor="middle" font-size="6.6" font-weight="bold" fill="#e8e8e8" font-family="Liberation Sans, sans-serif">250</text>
<text x="314.8" y="391.5" text-anchor="middle" font-size="6.6" font-weight="bold" fill="#e8e8e8" font-family="Liberation Sans, sans-serif">500</text>
<text x="329" y="397.5" text-anchor="middle" font-size="6.6" font-weight="bold" fill="#e8e8e8" font-family="Liberation Sans, sans-serif">1k</text>
<text x="344.4" y="403.5" text-anchor="middle" font-size="6.6" font-weight="bold" fill="#e8e8e8" font-family="Liberation Sans, sans-serif">2k</text>
<text x="363" y="409.5" text-anchor="middle" font-size="6.6" font-weight="bold" fill="#e8e8e8" font-family="Liberation Sans, sans-serif">4k</text>
<text x="372.3" y="413.2" text-anchor="middle" font-size="6.6" font-weight="bold" fill="#e8e8e8" font-family="Liberation Sans, sans-serif">Hz</text>
<text x="381.8" y="417" text-anchor="middle" font-size="6.6" font-weight="bold" fill="#e8e8e8" font-family="Liberation Sans, sans-serif">8k</text>
<text x="466.7" y="339.5" text-anchor="middle" font-size="6.8" font-weight="bold" fill="#eeeeee" font-family="Liberation Sans, sans-serif">0</text>
<text x="461.3" y="353" text-anchor="middle" font-size="6.8" font-weight="bold" fill="#eeeeee" font-family="Liberation Sans, sans-serif">40</text>
<text x="451" y="366.5" text-anchor="middle" font-size="6.8" font-weight="bold" fill="#eeeeee" font-family="Liberation Sans, sans-serif">80</text>
<text x="442.4" y="384" text-anchor="middle" font-size="6.8" font-weight="bold" fill="#eeeeee" font-family="Liberation Sans, sans-serif">120</text>
<text x="429" y="403.5" text-anchor="middle" font-size="6.8" font-weight="bold" fill="#eeeeee" font-family="Liberation Sans, sans-serif">160</text>
<text x="420.9" y="415" text-anchor="middle" font-size="6.8" font-weight="bold" fill="#eeeeee" font-family="Liberation Sans, sans-serif">ms</text>
<text x="412.8" y="428.5" text-anchor="middle" font-size="6.8" font-weight="bold" fill="#eeeeee" font-family="Liberation Sans, sans-serif">200</text>
<rect x="726.8" y="12.3" width="51.4" height="110" rx="3" fill="none" stroke="#d3d0be" stroke-width="1"/>
<rect x="730.8" y="8.3" width="30.700000000000045" height="8" fill="#ece9d8"/>
<text x="732.3" y="15.9" font-size="8.2" fill="#2256c8" textLength="27.7" lengthAdjust="spacingAndGlyphs" stroke="#2256c8" stroke-width="0.25" font-family="Liberation Sans, sans-serif">Measure</text>
<rect x="726.8" y="128.4" width="51.4" height="143.1" rx="3" fill="none" stroke="#d3d0be" stroke-width="1"/>
<rect x="730.7" y="124.4" width="21.799999999999955" height="8" fill="#ece9d8"/>
<text x="732.2" y="129.9" font-size="8.2" fill="#2256c8" textLength="18.8" lengthAdjust="spacingAndGlyphs" stroke="#2256c8" stroke-width="0.25" font-family="Liberation Sans, sans-serif">Show</text>
<rect x="726.8" y="274.4" width="51.4" height="75.2" rx="3" fill="none" stroke="#d3d0be" stroke-width="1"/>
<rect x="731.3" y="270.4" width="27.100000000000023" height="8" fill="#ece9d8"/>
<text x="732.8" y="277.0" font-size="8.2" fill="#2256c8" textLength="24.1" lengthAdjust="spacingAndGlyphs" stroke="#2256c8" stroke-width="0.25" font-family="Liberation Sans, sans-serif">Overlay</text>
<rect x="726.8" y="351.4" width="51.4" height="43.5" rx="3" fill="none" stroke="#d3d0be" stroke-width="1"/>
<rect x="730.5" y="347.4" width="35" height="8" fill="#ece9d8"/>
<text x="732.0" y="354.6" font-size="8.2" fill="#2256c8" textLength="32.0" lengthAdjust="spacingAndGlyphs" stroke="#2256c8" stroke-width="0.25" font-family="Liberation Sans, sans-serif">Alignment</text>
<rect x="733" y="22.6" width="38.7" height="14.9" rx="3" fill="url(#btnb)" stroke="#173f86" stroke-width="1"/>
<rect x="734.6" y="24.1" width="35.5" height="11.6" rx="1.5" fill="url(#btn)"/>
<text x="738.7" y="33.0" font-size="8.4" fill="#101010" textLength="27.8" lengthAdjust="spacingAndGlyphs" stroke="#101010" stroke-width="0.25" font-family="Liberation Sans, sans-serif">Measure</text>
<path d="M732.3 48.2h2.2M751.6 48.2h2.2 M732.3 57.4h2.2M751.6 57.4h2.2 M732.3 65.6h2.2M751.6 65.6h2.2 M732.3 74.4h2.2M751.6 74.4h2.2 M732.3 83h2.2M751.6 83h2.2 M732.3 91.8h2.2M751.6 91.8h2.2 M732.3 100h2.2M751.6 100h2.2" stroke="#b4b2a6" stroke-width="0.9"/>
<rect x="741.4" y="45.5" width="1.3" height="58.5" fill="#a8a698"/><rect x="742.7" y="45.5" width="1.5" height="58.5" fill="#ffffff"/>
<rect x="736" y="62.3" width="14.6" height="7.4" rx="1.5" fill="#f6f6f2" stroke="#8e9c8e" stroke-width="0.8"/>
<rect x="736.3" y="62.8" width="2" height="6.4" fill="#48b848"/><rect x="748.3" y="62.8" width="2" height="6.4" fill="#48b848"/>
<rect x="765.5" y="42.7" width="8" height="61.4" fill="#000000"/>
<text x="758.9" y="45.6" font-size="7.4" fill="#d01010" textLength="5.5" lengthAdjust="spacingAndGlyphs" font-weight="bold" font-family="Liberation Sans, sans-serif">H</text>
<text x="758.0" y="76.6" font-size="7.4" fill="#10c020" textLength="6.4" lengthAdjust="spacingAndGlyphs" font-weight="bold" font-family="Liberation Sans, sans-serif">G</text>
<text x="758.9" y="107.6" font-size="7.4" fill="#1010b8" textLength="4.9" lengthAdjust="spacingAndGlyphs" font-weight="bold" font-family="Liberation Sans, sans-serif">L</text>
<text x="730.9" y="118.8" font-size="8.3" fill="#101010" textLength="42.1" lengthAdjust="spacingAndGlyphs" stroke="#101010" stroke-width="0.25" font-family="Liberation Sans, sans-serif">Output Level</text>
<text x="731.0" y="141.8" font-size="8.3" fill="#101010" textLength="40.6" lengthAdjust="spacingAndGlyphs" stroke="#101010" stroke-width="0.25" font-family="Liberation Sans, sans-serif">Scale range:</text>
<rect x="731.3" y="146.6" width="42.2" height="14.2" fill="#ffffff" stroke="#7f9db9" stroke-width="1"/>
<rect x="762.1" y="147.6" width="10.6" height="12.2" rx="1" fill="url(#dd)" stroke="#c0d0f4" stroke-width="0.6"/>
<path d="M764.7 152.3L767.3 154.9L769.9 152.3" stroke="#4d6185" stroke-width="1.5" fill="none"/>
<text x="735.3" y="156.9" font-size="8.3" fill="#101010" textLength="19.4" lengthAdjust="spacingAndGlyphs" stroke="#101010" stroke-width="0.25" font-family="Liberation Sans, sans-serif">80 dB</text>
<rect x="732.9" y="166.4" width="40" height="11.9" rx="2.5" fill="url(#btnb)" stroke="#173f86" stroke-width="1"/>
<rect x="734.3" y="167.70000000000002" width="37.2" height="8.7" rx="1" fill="url(#btn)"/>
<text x="736.2" y="175.2" font-size="8" fill="#101010" textLength="31.9" lengthAdjust="spacingAndGlyphs" stroke="#101010" stroke-width="0.25" font-family="Liberation Sans, sans-serif">Anechoic</text>
<rect x="732.9" y="181.4" width="40" height="12" rx="2.5" fill="url(#btnb)" stroke="#173f86" stroke-width="1"/>
<rect x="734.3" y="182.70000000000002" width="37.2" height="8.8" rx="1" fill="url(#btn)"/>
<text x="739.6" y="190.2" font-size="8" fill="#101010" textLength="26.9" lengthAdjust="spacingAndGlyphs" stroke="#101010" stroke-width="0.25" font-family="Liberation Sans, sans-serif">Ambient</text>
<rect x="732.9" y="195.4" width="40" height="12.2" rx="2.5" fill="url(#btng)" stroke="#4f6386" stroke-width="1"/>
<text x="745.4" y="204.7" font-size="8" fill="#151515" textLength="15.6" lengthAdjust="spacingAndGlyphs" stroke="#151515" stroke-width="0.25" font-family="Liberation Sans, sans-serif">Raw</text>
<rect x="732.9" y="218.8" width="40" height="12" rx="2.5" fill="url(#btnb)" stroke="#173f86" stroke-width="1"/>
<rect x="734.3" y="220.10000000000002" width="37.2" height="8.8" rx="1" fill="url(#btn)"/>
<text x="743.5" y="227.7" font-size="8" fill="#101010" textLength="19.1" lengthAdjust="spacingAndGlyphs" stroke="#101010" stroke-width="0.25" font-family="Liberation Sans, sans-serif">RT60</text>
<text x="731.0" y="248.3" font-size="8.3" fill="#101010" textLength="30.1" lengthAdjust="spacingAndGlyphs" stroke="#101010" stroke-width="0.25" font-family="Liberation Sans, sans-serif">Waterfall:</text>
<rect x="731.1" y="252.4" width="42.5" height="14.2" fill="#ffffff" stroke="#7f9db9" stroke-width="1"/>
<rect x="762.2" y="253.4" width="10.6" height="12.2" rx="1" fill="url(#dd)" stroke="#c0d0f4" stroke-width="0.6"/>
<path d="M764.8 258.1L767.4 260.7L770.0 258.1" stroke="#4d6185" stroke-width="1.5" fill="none"/>
<text x="735.5" y="263.1" font-size="8.3" fill="#101010" textLength="22.0" lengthAdjust="spacingAndGlyphs" stroke="#101010" stroke-width="0.25" font-family="Liberation Sans, sans-serif">3D [R]</text>
<rect x="731" y="283.1" width="12" height="12.4" rx="2.2" fill="#f0efe8" stroke="#4a6280" stroke-width="1.6"/>
<rect x="732.2" y="284.3" width="9.6" height="10.0" rx="1" fill="url(#btn)"/>
<text x="737" y="292.2" text-anchor="middle" font-size="8.8" fill="#101010" font-family="Liberation Sans, sans-serif">1</text>
<rect x="746.1" y="283.40000000000003" width="28.8" height="11.7" rx="2.5" fill="#f3f2eb" stroke="#d2cfc2" stroke-width="1"/>
<text x="748.0" y="291.9" font-size="8" fill="#aeab9c" textLength="24.0" lengthAdjust="spacingAndGlyphs" font-family="Liberation Sans, sans-serif">Show 1</text>
<rect x="731" y="298.6" width="12" height="12.4" rx="2.2" fill="#f0efe8" stroke="#4a6280" stroke-width="1.6"/>
<rect x="732.2" y="299.8" width="9.6" height="10.0" rx="1" fill="url(#btn)"/>
<text x="737" y="307.7" text-anchor="middle" font-size="8.8" fill="#101010" font-family="Liberation Sans, sans-serif">2</text>
<rect x="746.1" y="298.90000000000003" width="28.8" height="11.7" rx="2.5" fill="#f3f2eb" stroke="#d2cfc2" stroke-width="1"/>
<text x="748.0" y="307.4" font-size="8" fill="#aeab9c" textLength="24.0" lengthAdjust="spacingAndGlyphs" font-family="Liberation Sans, sans-serif">Show 2</text>
<rect x="731" y="315" width="12" height="12.4" rx="2.2" fill="#f0efe8" stroke="#4a6280" stroke-width="1.6"/>
<rect x="732.2" y="316.2" width="9.6" height="10.0" rx="1" fill="url(#btn)"/>
<text x="737" y="324.1" text-anchor="middle" font-size="8.8" fill="#101010" font-family="Liberation Sans, sans-serif">3</text>
<rect x="746.1" y="315.3" width="28.8" height="11.7" rx="2.5" fill="#f3f2eb" stroke="#d2cfc2" stroke-width="1"/>
<text x="748.0" y="323.8" font-size="8" fill="#aeab9c" textLength="24.0" lengthAdjust="spacingAndGlyphs" font-family="Liberation Sans, sans-serif">Show 3</text>
<rect x="731" y="329.1" width="12" height="12.4" rx="2.2" fill="#f0efe8" stroke="#4a6280" stroke-width="1.6"/>
<rect x="732.2" y="330.3" width="9.6" height="10.0" rx="1" fill="url(#btn)"/>
<text x="737" y="338.2" text-anchor="middle" font-size="8.8" fill="#101010" font-family="Liberation Sans, sans-serif">4</text>
<rect x="746.1" y="329.40000000000003" width="28.8" height="11.7" rx="2.5" fill="#f3f2eb" stroke="#d2cfc2" stroke-width="1"/>
<text x="748.0" y="337.9" font-size="8" fill="#aeab9c" textLength="24.0" lengthAdjust="spacingAndGlyphs" font-family="Liberation Sans, sans-serif">Show 4</text>
<rect x="731.8" y="361.7" width="41.7" height="12" rx="2.5" fill="#f3f2eb" stroke="#d2cfc2" stroke-width="1"/>
<text x="734.0" y="370.6" font-size="8" fill="#aeab9c" textLength="37.5" lengthAdjust="spacingAndGlyphs" font-family="Liberation Sans, sans-serif">Align Delay</text>
<rect x="731.8" y="378.3" width="41.7" height="11.5" rx="2.5" fill="#f3f2eb" stroke="#d2cfc2" stroke-width="1"/>
<text x="735.0" y="387.0" font-size="8" fill="#aeab9c" textLength="35.0" lengthAdjust="spacingAndGlyphs" font-family="Liberation Sans, sans-serif">Auto Align</text>
<rect x="5.6" y="448.5" width="54.7" height="12.5" fill="url(#tab)" stroke="#919b9c" stroke-width="0.8"/>
<rect x="61.7" y="448.5" width="46.8" height="12.5" fill="url(#tab)" stroke="#919b9c" stroke-width="0.8"/>
<rect x="108.5" y="447" width="46.7" height="17.5" fill="#fcfcfe" stroke="#919b9c" stroke-width="0.8"/>
<rect x="108.9" y="446.6" width="46" height="2" fill="#f0a832"/>
<text x="9.0" y="457.4" font-size="8" fill="#101010" textLength="48.5" lengthAdjust="spacingAndGlyphs" stroke="#101010" stroke-width="0.25" font-family="Liberation Sans, sans-serif">Room Analyzer</text>
<text x="79.0" y="457.3" font-size="8" fill="#101010" textLength="14.4" lengthAdjust="spacingAndGlyphs" stroke="#101010" stroke-width="0.25" font-family="Liberation Sans, sans-serif">RTA</text>
<text x="114.0" y="459.0" font-size="8" fill="#101010" textLength="35.0" lengthAdjust="spacingAndGlyphs" stroke="#101010" stroke-width="0.25" font-family="Liberation Sans, sans-serif">Full Range</text>
</svg>
</body></html>
